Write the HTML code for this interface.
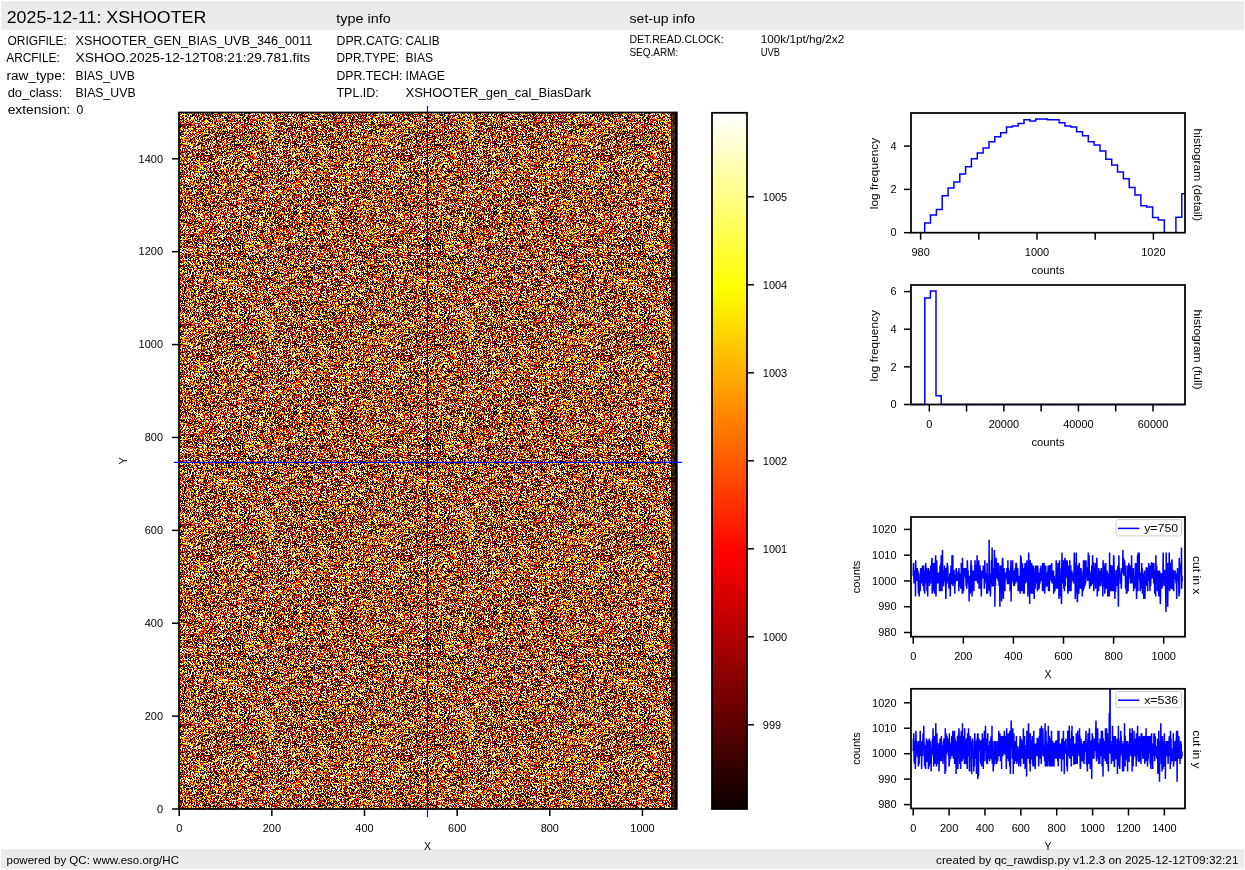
<!DOCTYPE html><html><head><meta charset="utf-8"><title>qc_rawdisp</title><style>html,body{margin:0;padding:0;background:#fff;width:1245px;height:870px;overflow:hidden;position:relative;font-family:"Liberation Sans",sans-serif}</style></head><body><svg width="1245" height="870" viewBox="0 0 1245 870" style="position:absolute;left:0;top:0;will-change:transform" font-family='&quot;Liberation Sans&quot;, sans-serif' fill="#000"><defs><pattern id="nz" patternUnits="userSpaceOnUse" width="200" height="200"><rect width="200" height="200" fill="#0b0000"/><g stroke-width="1" fill="none" shape-rendering="crispEdges"><path stroke="#590000" d="M1 0.5h1m3 0h1m11 0h1m6 0h1m14 0h1m2 0h1m1 0h1m1 0h1m3 0h1m3 0h1m5 0h4m24 0h1m7 0h1m10 0h3m10 0h1m12 0h1m7 0h1m16 0h1m16 0h1m12 0h1M37 1.5h1m10 0h1m5 0h1m21 0h1m14 0h1m4 0h1m20 0h1m5 0h1m7 0h1m2 0h2m44 0h1m4 0h1m3 0h1M13 2.5h1m4 0h1m10 0h1m1 0h1m34 0h1m1 0h1m10 0h1m15 0h1m1 0h2m6 0h1m21 0h1m6 0h1m6 0h1m6 0h1m3 0h1m7 0h1m5 0h1m2 0h1m16 0h1m3 0h1m2 0h1M4 3.5h1m1 0h1m5 0h1m15 0h1m7 0h1m6 0h1m12 0h1m4 0h1m7 0h1m4 0h1m5 0h1m4 0h1m17 0h1m22 0h2m5 0h1m2 0h1m44 0h1m1 0h1m8 0h1m6 0h1M6 4.5h1m1 0h2m6 0h1m14 0h1m4 0h1m27 0h1m17 0h1m1 0h1m96 0h1m1 0h1m10 0h1M4 5.5h1m4 0h1m6 0h1m16 0h1m2 0h1m7 0h1m5 0h1m4 0h2m18 0h1m9 0h1m1 0h1m6 0h1m3 0h1m6 0h1m3 0h1m1 0h1m12 0h1m11 0h1m20 0h2m2 0h1m12 0h1M25 6.5h1m7 0h1m18 0h2m18 0h2m34 0h1m5 0h1m5 0h1m4 0h1m8 0h1m10 0h1m7 0h1m20 0h1m1 0h1M9 7.5h1m11 0h1m40 0h1m8 0h1m12 0h1m2 0h1m17 0h1m7 0h3m2 0h1m7 0h1m15 0h1m4 0h1m18 0h1m6 0h1m5 0h1m1 0h1M1 8.5h1m2 0h1m5 0h1m13 0h1m3 0h1m2 0h1m20 0h1m7 0h1m3 0h2m2 0h1m32 0h1m16 0h2m42 0h1m11 0h1m12 0h1M0 9.5h1m26 0h2m20 0h1m4 0h1m3 0h1m2 0h1m1 0h1m5 0h1m9 0h1m5 0h1m2 0h1m8 0h2m10 0h1m5 0h1m28 0h1m2 0h1m2 0h1m37 0h1M6 10.5h1m4 0h2m4 0h1m1 0h1m4 0h1m17 0h1m3 0h1m25 0h1m9 0h1m7 0h1m5 0h1m26 0h1m2 0h1m32 0h2M2 11.5h1m19 0h1m7 0h1m2 0h1m18 0h1m36 0h1m29 0h1m4 0h1m33 0h1m12 0h1m20 0h1M1 12.5h1m8 0h1m14 0h1m3 0h1m6 0h1m7 0h1m16 0h1m3 0h1m4 0h1m8 0h1m11 0h1m3 0h1m1 0h1m8 0h3m6 0h1m5 0h1m20 0h1m4 0h1m16 0h1m23 0h1M0 13.5h1m20 0h1m1 0h1m6 0h1m2 0h1m4 0h1m26 0h1m9 0h1m21 0h1m3 0h2m6 0h1m3 0h1m24 0h1m6 0h1m8 0h1m15 0h1m1 0h1m10 0h1m1 0h1m6 0h1M13 14.5h1m12 0h1m6 0h1m17 0h1m10 0h1m19 0h1m23 0h1m6 0h1m3 0h1m9 0h1m11 0h1m1 0h1m3 0h1m9 0h1m4 0h1m1 0h1m4 0h1m13 0h1m9 0h1m1 0h1m2 0h1M7 15.5h1m7 0h1m8 0h1m16 0h1m20 0h1m2 0h1m8 0h1m13 0h2m30 0h1m11 0h1m3 0h1m11 0h2m10 0h1m5 0h1m16 0h1m5 0h2m1 0h1m1 0h1M10 16.5h1m9 0h1m10 0h1m3 0h1m5 0h1m11 0h1m1 0h1m17 0h1m1 0h1m22 0h1m2 0h1m4 0h1m16 0h1m2 0h1m13 0h1m8 0h1m4 0h1m18 0h1m6 0h1m4 0h1M12 17.5h1m12 0h1m57 0h1m23 0h1m18 0h1m14 0h1m4 0h1m1 0h1m11 0h1m24 0h1m13 0h1M0 18.5h1m36 0h1m5 0h1m7 0h1m14 0h1m21 0h1m4 0h1m9 0h1m12 0h1m26 0h1m23 0h1m24 0h1m1 0h1M4 19.5h1m30 0h1m9 0h2m16 0h1m13 0h1m6 0h1m20 0h1m1 0h1m14 0h1m28 0h1m31 0h1M38 20.5h1m10 0h1m1 0h1m6 0h1m9 0h1m9 0h1m1 0h1m6 0h2m6 0h1m19 0h1m2 0h2m7 0h1m1 0h1m7 0h1m1 0h1m9 0h1m3 0h2m11 0h1m1 0h1m1 0h2M2 21.5h1m19 0h1m15 0h1m33 0h1m3 0h1m6 0h1m34 0h1m2 0h1m25 0h1m11 0h1m11 0h1m4 0h1M20 22.5h1m6 0h1m13 0h1m4 0h1m19 0h1m10 0h1m9 0h1m1 0h1m2 0h1m1 0h1m26 0h1m3 0h1m4 0h1m3 0h2m2 0h1m30 0h1M18 23.5h1m32 0h1m12 0h1m16 0h1m6 0h2m4 0h1m21 0h1m14 0h1m4 0h2m3 0h1m9 0h1m42 0h1M5 24.5h1m8 0h1m4 0h2m11 0h1m21 0h1m9 0h1m7 0h1m5 0h1m10 0h1m1 0h1m9 0h1m1 0h1m6 0h3m6 0h1m34 0h1m14 0h1m10 0h1m6 0h1m5 0h1M30 25.5h1m4 0h1m5 0h1m30 0h1m6 0h1m6 0h1m10 0h1m17 0h1m1 0h2m17 0h1m7 0h1m41 0h1m2 0h1M15 26.5h1m4 0h1m1 0h1m1 0h1m1 0h2m39 0h2m7 0h1m2 0h1m1 0h1m8 0h1m8 0h1m20 0h1m10 0h1m15 0h1m2 0h1m13 0h1m7 0h1m8 0h1m12 0h1M1 27.5h1m16 0h1m15 0h1m4 0h2m7 0h3m17 0h1m5 0h1m5 0h1m11 0h1m1 0h1m5 0h1m25 0h2m6 0h1m13 0h1m26 0h1m6 0h1m3 0h1M14 28.5h1m18 0h1m4 0h1m23 0h1m19 0h1m8 0h1m3 0h1m3 0h1m18 0h1m14 0h1m9 0h1m12 0h1m3 0h1m2 0h1m17 0h1m12 0h1m3 0h1M10 29.5h2m8 0h1m3 0h1m3 0h1m4 0h1m5 0h1m22 0h1m16 0h1m7 0h1m1 0h1m15 0h1m9 0h1m3 0h1m19 0h1m39 0h1M6 30.5h1m5 0h1m10 0h1m2 0h2m10 0h1m6 0h1m57 0h1m13 0h1m6 0h1m17 0h1m4 0h2m1 0h1m2 0h1m1 0h1m10 0h1m16 0h2M18 31.5h1m18 0h1m3 0h1m14 0h1m18 0h1m4 0h1m9 0h1m1 0h1m59 0h1m10 0h1m7 0h1m1 0h1m5 0h1m2 0h1M3 32.5h1m19 0h1m49 0h1m42 0h1m4 0h1m4 0h1m31 0h1m3 0h1m1 0h1m13 0h1m20 0h1M13 33.5h1m1 0h1m12 0h1m5 0h1m41 0h1m16 0h1m1 0h1m23 0h1m4 0h1m1 0h1m7 0h1m16 0h1m23 0h1m13 0h1M4 34.5h1m15 0h1m14 0h1m21 0h1m13 0h1m21 0h1m12 0h1m2 0h1m4 0h1m1 0h1m6 0h2m5 0h1m15 0h1m24 0h1m1 0h1m16 0h1M1 35.5h1m11 0h1m5 0h1m22 0h1m15 0h1m21 0h1m2 0h2m42 0h2m18 0h2m3 0h1m10 0h1m7 0h1m5 0h1m5 0h2m5 0h1m1 0h1M14 36.5h1m2 0h1m7 0h2m8 0h1m3 0h1m5 0h1m22 0h1m3 0h1m1 0h1m13 0h1m10 0h1m1 0h1m35 0h1m9 0h1m1 0h1m1 0h1m15 0h2m4 0h1m1 0h1m3 0h1m15 0h2M26 37.5h1m4 0h1m5 0h1m11 0h1m16 0h1m2 0h1m17 0h1m1 0h1m5 0h1m14 0h1m1 0h1m44 0h1m4 0h1m24 0h1m9 0h1M7 38.5h1m28 0h1m1 0h1m30 0h1m13 0h1m16 0h2m15 0h1m26 0h1m1 0h1m9 0h1m6 0h1m28 0h1M2 39.5h1m11 0h1m15 0h1m15 0h1m1 0h1m34 0h1m4 0h1m36 0h1m5 0h1m1 0h1m28 0h2m7 0h1m17 0h1m2 0h1M23 40.5h1m13 0h1m6 0h1m8 0h1m59 0h2m13 0h1m4 0h1m5 0h1m15 0h1m18 0h1m2 0h1m3 0h1m2 0h1m3 0h1M2 41.5h1m1 0h1m2 0h1m9 0h1m9 0h1m7 0h1m1 0h1m21 0h1m8 0h1m1 0h1m7 0h1m32 0h1m30 0h1m11 0h1m24 0h1M2 42.5h1m2 0h1m13 0h1m43 0h1m18 0h1m2 0h1m9 0h1m50 0h1m6 0h1m6 0h2m23 0h2m5 0h1M7 43.5h1m1 0h1m19 0h1m13 0h1m8 0h2m6 0h1m13 0h1m14 0h1m33 0h1m5 0h1m21 0h1m1 0h1m6 0h1m8 0h1m9 0h1m15 0h1M13 44.5h1m1 0h1m5 0h1m8 0h1m13 0h1m35 0h1m6 0h1m8 0h1m5 0h1m24 0h1m10 0h1m7 0h1m15 0h1m9 0h1m14 0h1m4 0h2M16 45.5h1m1 0h1m1 0h1m14 0h2m3 0h1m1 0h1m12 0h1m8 0h2m4 0h1m7 0h1m6 0h1m23 0h1m31 0h1m8 0h1m4 0h1m3 0h1m1 0h1m10 0h1m6 0h1M14 46.5h1m9 0h1m4 0h1m3 0h1m34 0h1m2 0h1m16 0h1m7 0h1m1 0h1m8 0h1m4 0h1m5 0h2m1 0h1m22 0h1m2 0h2m25 0h2m7 0h1m8 0h1m4 0h1M8 47.5h1m1 0h1m9 0h1m8 0h1m10 0h1m9 0h1m5 0h1m9 0h1m22 0h1m11 0h1m55 0h1m5 0h1m11 0h1M3 48.5h1m38 0h1m4 0h1m60 0h2m2 0h1m26 0h2m12 0h1m6 0h1m9 0h1m20 0h1M42 49.5h1m8 0h2m5 0h1m20 0h1m13 0h1m13 0h1m1 0h1m6 0h1m26 0h1m3 0h1m6 0h1m8 0h1m3 0h1m25 0h1M8 50.5h1m4 0h1m29 0h1m2 0h2m20 0h2m19 0h1m24 0h1m4 0h1m8 0h1m2 0h1m7 0h1m12 0h1m22 0h1m21 0h2M3 51.5h1m11 0h1m8 0h1m12 0h1m10 0h1m12 0h1m9 0h1m4 0h1m32 0h1m51 0h1m14 0h1m2 0h1m7 0h1m4 0h1m4 0h1M3 52.5h1m5 0h2m12 0h1m39 0h1m6 0h1m2 0h1m7 0h1m10 0h1m8 0h1m22 0h1m10 0h1m8 0h1m9 0h1m2 0h2m15 0h1M5 53.5h1m25 0h4m1 0h1m3 0h1m11 0h1m10 0h1m19 0h1m45 0h1m35 0h2m9 0h1m15 0h1m5 0h1M10 54.5h1m30 0h1m13 0h1m3 0h1m12 0h1m7 0h1m10 0h1m6 0h1m5 0h1m7 0h1m1 0h1m1 0h1m2 0h1m2 0h1m4 0h1m3 0h1m11 0h1m25 0h1m16 0h1m10 0h1M2 55.5h1m2 0h1m4 0h1m1 0h1m3 0h1m12 0h1m4 0h1m18 0h1m9 0h1m17 0h2m16 0h1m30 0h1m16 0h1m3 0h1m3 0h1m5 0h1m1 0h2m11 0h1m5 0h1m3 0h1m1 0h2M1 56.5h1m15 0h2m1 0h1m45 0h1m8 0h1m30 0h1m5 0h1m8 0h1m2 0h1m29 0h1m29 0h1m14 0h1M5 57.5h1m2 0h1m20 0h1m1 0h2m16 0h1m9 0h1m21 0h2m24 0h1m3 0h1m9 0h1m14 0h1m9 0h1m2 0h1m15 0h1m4 0h1m6 0h1m12 0h1m7 0h1M6 58.5h2m47 0h1m6 0h1m5 0h1m4 0h1m4 0h1m8 0h1m9 0h1m19 0h1m9 0h1m5 0h1m6 0h1m28 0h1m7 0h1M8 59.5h1m2 0h1m5 0h1m1 0h1m16 0h1m12 0h1m21 0h1m5 0h2m2 0h1m35 0h1m4 0h1m20 0h1m18 0h1m27 0h1m5 0h1m1 0h1M6 60.5h1m45 0h1m5 0h1m21 0h1m9 0h1m11 0h1m2 0h2m5 0h1m6 0h2m10 0h1m6 0h1m10 0h1m4 0h1m5 0h1m16 0h1m11 0h1m4 0h2m3 0h1M23 61.5h1m29 0h1m4 0h2m2 0h1m31 0h2m19 0h1m5 0h1m1 0h1m28 0h1m11 0h1m9 0h1m22 0h1M4 62.5h2m1 0h1m12 0h1m31 0h1m2 0h1m12 0h1m3 0h1m7 0h1m24 0h1m43 0h1m3 0h1m11 0h1M11 63.5h1m10 0h1m9 0h2m2 0h1m16 0h1m1 0h2m7 0h2m12 0h1m10 0h1m4 0h1m2 0h1m9 0h1m12 0h1m40 0h1m23 0h1m2 0h1m10 0h1M55 64.5h1m23 0h1m37 0h1m1 0h1m51 0h1m18 0h1M21 65.5h1m20 0h1m21 0h1m7 0h1m12 0h1m7 0h1m2 0h1m31 0h1m2 0h1m4 0h1m19 0h1m1 0h1m11 0h1m16 0h1m1 0h1m7 0h1M17 66.5h1m55 0h1m5 0h1m6 0h1m14 0h1m1 0h2m9 0h1m5 0h1m16 0h1m16 0h1m36 0h1M24 67.5h1m4 0h1m31 0h1m13 0h1m19 0h1m6 0h1m1 0h1m6 0h2m7 0h1m5 0h1m2 0h1m21 0h1m19 0h1m5 0h1m2 0h1m3 0h1m4 0h1m8 0h1M8 68.5h1m24 0h1m4 0h1m14 0h1m14 0h1m30 0h1m3 0h1m8 0h1m4 0h1m9 0h2m44 0h1m23 0h1M19 69.5h2m22 0h1m1 0h1m7 0h1m3 0h1m11 0h1m15 0h1m2 0h1m14 0h1m16 0h1m44 0h1m6 0h1m5 0h1m10 0h1m1 0h1M9 70.5h1m4 0h1m4 0h1m5 0h1m13 0h1m11 0h1m1 0h1m8 0h1m19 0h1m17 0h1m9 0h1m23 0h1m32 0h1m5 0h1m25 0h1M5 71.5h1m2 0h1m1 0h1m39 0h1m1 0h1m25 0h1m22 0h1m1 0h2m3 0h1m5 0h1m25 0h2m2 0h1m22 0h1m4 0h1M23 72.5h1m2 0h1m3 0h2m5 0h1m10 0h1m6 0h1m4 0h2m9 0h1m7 0h1m9 0h1m4 0h1m2 0h1m2 0h1m32 0h1m7 0h2m1 0h1m9 0h1m14 0h1m1 0h1m2 0h2m11 0h1m7 0h1M13 73.5h1m14 0h1m16 0h1m5 0h1m2 0h1m7 0h1m4 0h1m13 0h1m3 0h1m4 0h1m11 0h1m15 0h1m7 0h1m21 0h1m16 0h2m1 0h1m3 0h1m12 0h1m10 0h1M5 74.5h2m20 0h1m2 0h1m3 0h1m16 0h1m3 0h1m18 0h1m9 0h2m21 0h2m6 0h2m15 0h1m34 0h1m16 0h1M19 75.5h1m3 0h1m24 0h1m28 0h1m6 0h1m16 0h1m1 0h1m16 0h1m59 0h1m6 0h1M12 76.5h1m17 0h1m30 0h2m55 0h1m13 0h1m17 0h1m14 0h1m7 0h1m14 0h1m2 0h1M4 77.5h1m23 0h1m8 0h1m4 0h1m11 0h1m2 0h1m28 0h1m15 0h1m5 0h1m2 0h1m2 0h1m27 0h1m13 0h1m21 0h1m1 0h1m3 0h1m8 0h1m3 0h1M4 78.5h1m2 0h1m1 0h1m24 0h1m4 0h1m28 0h1m13 0h1m16 0h1m11 0h1m6 0h1m25 0h1m14 0h1m4 0h1m4 0h2m27 0h1M7 79.5h1m24 0h1m8 0h1m5 0h1m25 0h1m16 0h1m18 0h1m14 0h1m29 0h1m15 0h1m12 0h1m1 0h1M5 80.5h1m2 0h1m2 0h3m37 0h1m12 0h1m1 0h1m6 0h1m16 0h1m4 0h1m4 0h1m6 0h1m14 0h1m15 0h1m12 0h1m13 0h1m23 0h1m2 0h2M28 81.5h1m2 0h1m4 0h1m9 0h1m11 0h1m25 0h1m25 0h1m8 0h1m8 0h1m2 0h1m6 0h1m48 0h1m2 0h1M23 82.5h1m14 0h1m10 0h1m1 0h1m30 0h1m11 0h1m21 0h1m4 0h1m3 0h1m5 0h1m8 0h1m9 0h1m14 0h1m21 0h1M1 83.5h1m10 0h1m6 0h1m17 0h1m5 0h1m3 0h1m19 0h2m7 0h1m7 0h1m6 0h1m1 0h2m21 0h1m1 0h1m3 0h1m2 0h1m11 0h1m17 0h1m4 0h1m2 0h1m15 0h1M0 84.5h2m13 0h1m7 0h1m25 0h1m8 0h1m1 0h1m1 0h1m2 0h1m52 0h1m53 0h1M5 85.5h2m2 0h1m3 0h1m3 0h1m48 0h1m22 0h1m6 0h1m5 0h1m10 0h1m2 0h1m5 0h1m29 0h1m5 0h1m1 0h1m6 0h1m21 0h1M7 86.5h1m16 0h1m5 0h1m6 0h1m1 0h1m13 0h2m5 0h2m21 0h1m11 0h1m11 0h3m4 0h1m1 0h1m6 0h1m50 0h1m1 0h1m6 0h1M14 87.5h1m19 0h1m2 0h1m14 0h1m1 0h1m4 0h2m8 0h1m3 0h1m11 0h1m14 0h1m1 0h1m1 0h1m3 0h1m38 0h1m30 0h1m7 0h1m11 0h1M18 88.5h1m8 0h1m1 0h1m22 0h1m1 0h1m26 0h1m11 0h1m17 0h1m6 0h1m12 0h1m10 0h1m1 0h1m11 0h1M2 89.5h1m37 0h1m25 0h1m18 0h2m5 0h1m1 0h1m36 0h1m23 0h1m2 0h1m17 0h1m1 0h1m2 0h1m2 0h2M19 90.5h1m9 0h1m24 0h1m5 0h1m10 0h1m26 0h1m4 0h1m2 0h1m3 0h1m21 0h1m2 0h1m20 0h1M10 91.5h1m5 0h1m7 0h1m7 0h1m1 0h1m6 0h1m11 0h1m26 0h1m13 0h1m6 0h1m2 0h1m17 0h1m10 0h1m4 0h1m9 0h1m20 0h1M1 92.5h1m8 0h1m22 0h1m3 0h1m18 0h1m19 0h1m4 0h1m12 0h1m5 0h1m7 0h1m2 0h1m3 0h1m8 0h1m15 0h1m24 0h2m2 0h1m22 0h1M25 93.5h1m7 0h1m17 0h2m3 0h1m4 0h1m8 0h1m28 0h1m8 0h1m12 0h1m11 0h1m2 0h1m8 0h1m14 0h3m3 0h1m10 0h2m4 0h4m6 0h1M24 94.5h2m14 0h1m3 0h1m17 0h1m20 0h1m5 0h1m13 0h1m13 0h1m2 0h1m7 0h1m8 0h1m40 0h1m15 0h1M1 95.5h1m19 0h1m15 0h1m7 0h1m20 0h1m8 0h1m8 0h1m15 0h1m2 0h3m1 0h1m2 0h1m15 0h1m27 0h1m9 0h1m26 0h1M15 96.5h1m15 0h1m24 0h1m12 0h1m42 0h1m17 0h2m14 0h1m23 0h1m6 0h1m6 0h1m6 0h1M7 97.5h1m2 0h1m2 0h1m4 0h1m57 0h1m15 0h1m11 0h1m11 0h1m1 0h1m7 0h1m4 0h1m13 0h1m16 0h1m32 0h1M4 98.5h1m5 0h1m7 0h1m2 0h1m2 0h1m5 0h1m4 0h1m13 0h1m13 0h1m14 0h1m4 0h1m1 0h1m24 0h1m13 0h1m10 0h1m27 0h1m3 0h2m6 0h1m10 0h1m6 0h1M29 99.5h1m3 0h1m12 0h1m5 0h1m28 0h1m2 0h1m15 0h1m24 0h1m30 0h1m5 0h1m4 0h1m9 0h1m5 0h1m11 0h1M1 100.5h1m12 0h1m4 0h1m33 0h1m4 0h1m5 0h2m4 0h1m6 0h1m8 0h1m5 0h1m4 0h1m8 0h1m41 0h1m7 0h1m12 0h1m6 0h1m3 0h1m1 0h1m1 0h3M11 101.5h1m1 0h1m17 0h1m6 0h1m3 0h1m9 0h2m7 0h1m6 0h1m1 0h1m12 0h1m38 0h1m1 0h1m1 0h1m11 0h1m11 0h1m16 0h1m3 0h1m6 0h1m2 0h1m2 0h2m8 0h1M48 102.5h1m39 0h1m16 0h1m3 0h1m7 0h1m3 0h1m6 0h1m29 0h1m2 0h1m10 0h1m16 0h1M71 103.5h1m2 0h1m14 0h1m4 0h1m39 0h1m24 0h1M1 104.5h2m1 0h1m3 0h1m6 0h1m21 0h2m4 0h1m12 0h1m2 0h1m2 0h1m19 0h1m17 0h2m1 0h1m4 0h1m5 0h2m5 0h1m3 0h1m14 0h3m12 0h4m18 0h1m6 0h1m10 0h1m2 0h1M18 105.5h1m6 0h1m16 0h1m1 0h1m15 0h1m20 0h1m2 0h1m2 0h1m1 0h1m5 0h1m11 0h3m13 0h1m7 0h1m27 0h2m11 0h1m8 0h1m7 0h1m4 0h1M11 106.5h1m16 0h1m15 0h1m6 0h1m10 0h1m24 0h1m44 0h1m11 0h1m2 0h1m10 0h1m2 0h1m1 0h1m3 0h1m6 0h1M4 107.5h1m23 0h2m12 0h1m37 0h1m15 0h1m4 0h1m5 0h1m9 0h1m37 0h1m3 0h1m1 0h1M6 108.5h1m18 0h1m1 0h1m21 0h1m10 0h1m6 0h1m11 0h1m6 0h1m4 0h1m4 0h1m8 0h1m4 0h1m15 0h1m13 0h1m8 0h1m33 0h2m12 0h1M6 109.5h1m6 0h1m2 0h1m4 0h1m4 0h1m1 0h1m17 0h1m14 0h1m8 0h1m10 0h1m10 0h1m2 0h1m2 0h1m11 0h1m18 0h1m2 0h1m14 0h1m5 0h1m13 0h1m2 0h1m4 0h2m7 0h1M13 110.5h3m2 0h1m17 0h1m17 0h1m31 0h1m15 0h1m8 0h1m4 0h2m5 0h1m10 0h2m2 0h1m6 0h1m28 0h1m5 0h1m3 0h2m1 0h1m11 0h1M24 111.5h1m7 0h1m11 0h1m7 0h1m62 0h1m9 0h1m19 0h1m19 0h2m2 0h2M18 112.5h1m5 0h1m35 0h1m27 0h1m10 0h1m17 0h1m4 0h1m3 0h1m62 0h1m1 0h1m4 0h1M19 113.5h1m30 0h1m24 0h2m9 0h1m5 0h1m3 0h1m8 0h1m7 0h1m5 0h1m46 0h1m4 0h1m2 0h1m14 0h1M3 114.5h1m1 0h1m8 0h1m15 0h1m4 0h1m3 0h1m1 0h1m2 0h1m4 0h1m5 0h1m1 0h1m27 0h1m5 0h1m19 0h1m4 0h1m10 0h1m1 0h1m4 0h1m17 0h1m34 0h2M3 115.5h1m5 0h1m5 0h1m3 0h1m7 0h2m4 0h1m7 0h1m6 0h1m3 0h1m8 0h1m3 0h1m28 0h1m35 0h1m3 0h1m1 0h1m3 0h1m3 0h1m13 0h1m2 0h2m3 0h1m16 0h1m1 0h1m7 0h1m1 0h1M44 116.5h1m19 0h1m21 0h1m11 0h1m7 0h1m19 0h1m26 0h1M30 117.5h1m2 0h1m29 0h1m3 0h1m25 0h1m3 0h1m4 0h1m40 0h1m50 0h1M6 118.5h1m6 0h1m10 0h1m1 0h1m7 0h1m22 0h1m16 0h1m7 0h2m16 0h1m14 0h1m11 0h1m5 0h1m2 0h1m1 0h1m24 0h1m1 0h1m4 0h2m3 0h1m1 0h1m11 0h1M26 119.5h1m15 0h1m12 0h1m5 0h1m22 0h1m17 0h1m8 0h1m1 0h2m16 0h1m2 0h1m15 0h1m1 0h1m3 0h1m7 0h1m3 0h1m14 0h1m15 0h1M22 120.5h1m4 0h1m1 0h1m10 0h1m2 0h1m10 0h1m13 0h1m7 0h1m29 0h1m39 0h1m9 0h1m1 0h1m36 0h1M2 121.5h1m32 0h1m12 0h1m3 0h1m4 0h1m15 0h1m1 0h1m1 0h1m20 0h1m2 0h1m47 0h1m7 0h1m3 0h1m18 0h1m11 0h1M1 122.5h1m21 0h1m14 0h1m3 0h1m1 0h1m6 0h1m3 0h1m26 0h1m8 0h1m1 0h1m9 0h1m25 0h1m10 0h2m1 0h1m17 0h1m2 0h2m10 0h1m2 0h1m1 0h1m9 0h1M40 123.5h1m3 0h1m9 0h1m1 0h1m12 0h1m3 0h2m22 0h1m4 0h1m2 0h2m20 0h1m6 0h1m28 0h1m13 0h1m2 0h1M16 124.5h1m2 0h2m20 0h1m18 0h1m13 0h1m6 0h1m2 0h1m1 0h1m4 0h1m28 0h1m1 0h2m9 0h1m2 0h1m23 0h1m10 0h1m19 0h1m6 0h1M2 125.5h1m17 0h1m1 0h1m28 0h1m4 0h1m23 0h1m11 0h1m21 0h2m54 0h1m7 0h1m9 0h1m5 0h1M20 126.5h1m3 0h1m14 0h1m2 0h1m8 0h1m18 0h1m24 0h1m5 0h1m9 0h1m27 0h1m13 0h1m8 0h1m5 0h1m7 0h1m2 0h1M3 127.5h1m1 0h1m28 0h1m8 0h1m1 0h1m33 0h2m14 0h2m8 0h1m2 0h1m3 0h2m11 0h1m19 0h1m28 0h2m12 0h1m9 0h1M8 128.5h1m6 0h1m8 0h1m13 0h1m7 0h1m1 0h1m9 0h1m19 0h1m26 0h1m21 0h1m30 0h1m26 0h2m8 0h1M0 129.5h1m3 0h1m14 0h1m51 0h1m4 0h1m13 0h1m1 0h1m40 0h1m24 0h1m2 0h1m2 0h1M30 130.5h1m3 0h1m12 0h1m25 0h1m3 0h1m48 0h1m12 0h1m1 0h1m23 0h2m8 0h1m17 0h1m1 0h1M1 131.5h2m9 0h2m6 0h1m6 0h1m7 0h1m21 0h1m24 0h1m3 0h1m31 0h1m1 0h1m21 0h1m10 0h1m39 0h1M8 132.5h1m29 0h1m3 0h1m2 0h1m21 0h1m1 0h1m8 0h1m4 0h1m12 0h1m10 0h1m6 0h1m12 0h1m11 0h1m6 0h1m5 0h1m5 0h1m5 0h1m24 0h1M17 133.5h3m11 0h1m7 0h1m2 0h1m5 0h1m4 0h1m16 0h1m13 0h1m14 0h1m11 0h1m6 0h1m6 0h1m6 0h1m21 0h1m8 0h1m6 0h1m22 0h1M5 134.5h1m18 0h1m3 0h1m6 0h1m1 0h1m13 0h1m10 0h1m8 0h1m20 0h1m14 0h1m3 0h1m27 0h1m7 0h1m10 0h1m17 0h1m8 0h1m7 0h1M0 135.5h1m4 0h1m10 0h1m1 0h1m7 0h1m17 0h1m16 0h1m11 0h1m5 0h1m6 0h1m3 0h1m11 0h1m5 0h1m3 0h1m13 0h1m10 0h1m6 0h1m8 0h1m1 0h1m15 0h1m4 0h2M15 136.5h1m6 0h1m15 0h1m38 0h1m22 0h1m24 0h1m9 0h1m16 0h1m22 0h1m6 0h1m3 0h1m9 0h1M9 137.5h1m3 0h1m7 0h1m7 0h1m4 0h1m63 0h1m6 0h1m13 0h1m19 0h1m19 0h1m6 0h1m31 0h1M16 138.5h1m4 0h2m2 0h2m1 0h1m8 0h1m13 0h1m9 0h1m13 0h2m3 0h1m1 0h1m17 0h1m3 0h1m33 0h1m22 0h1m23 0h1m1 0h1m6 0h1m1 0h1M6 139.5h1m2 0h1m5 0h1m15 0h1m2 0h1m9 0h1m7 0h1m3 0h1m22 0h1m6 0h1m5 0h1m19 0h1m2 0h1m10 0h1m2 0h1m10 0h1m14 0h2m18 0h1m4 0h1M2 140.5h1m75 0h1m17 0h1m7 0h3m1 0h1m8 0h1m4 0h1m7 0h1m3 0h1m2 0h1m24 0h1M2 141.5h1m15 0h1m15 0h1m9 0h1m13 0h1m3 0h1m5 0h1m9 0h1m9 0h1m10 0h1m5 0h1m25 0h1m13 0h1m5 0h1m20 0h1m7 0h1m9 0h1m5 0h1M5 142.5h1m6 0h1m10 0h1m18 0h1m14 0h1m17 0h1m7 0h1m10 0h1m13 0h1m7 0h1m6 0h1m10 0h1m3 0h1m14 0h3m3 0h2m4 0h1M1 143.5h1m1 0h1m26 0h1m3 0h1m6 0h1m9 0h1m11 0h1m5 0h2m37 0h1m32 0h1m1 0h1m9 0h1m4 0h1m4 0h2m9 0h1m24 0h1M16 144.5h1m1 0h1m16 0h1m7 0h1m3 0h1m13 0h1m5 0h1m11 0h1m5 0h1m10 0h1m6 0h2m11 0h1m1 0h1m8 0h2m13 0h1m8 0h1m14 0h1m14 0h2m11 0h1m4 0h1M19 145.5h1m26 0h1m21 0h1m5 0h2m7 0h1m16 0h1m1 0h1m15 0h1m14 0h1m32 0h1m10 0h2m17 0h2M13 146.5h1m1 0h1m11 0h1m25 0h1m3 0h1m32 0h1m3 0h1m12 0h1m2 0h1m15 0h1m45 0h1M13 147.5h1m13 0h1m7 0h1m1 0h1m11 0h1m3 0h2m1 0h1m5 0h2m19 0h1m24 0h1m27 0h1m5 0h1m26 0h1m19 0h1M35 148.5h1m8 0h1m3 0h1m9 0h1m10 0h1m7 0h1m20 0h1m9 0h1m31 0h1m17 0h1m19 0h1m9 0h1M1 149.5h1m6 0h1m5 0h1m8 0h1m1 0h1m3 0h1m6 0h1m11 0h2m5 0h1m13 0h1m7 0h1m4 0h1m22 0h1m6 0h1m6 0h1m2 0h1m3 0h1m15 0h1m3 0h1m17 0h1m3 0h1m1 0h1M3 150.5h1m17 0h1m24 0h1m33 0h1m3 0h1m1 0h1m13 0h1m6 0h1m1 0h1m12 0h1m2 0h1m12 0h1m22 0h1m5 0h1m4 0h1m9 0h1m8 0h1M3 151.5h2m1 0h1m26 0h1m6 0h1m21 0h1m6 0h1m43 0h1m1 0h1m7 0h1m1 0h1m4 0h1m13 0h1m40 0h1M6 152.5h1m7 0h1m1 0h1m10 0h3m34 0h1m3 0h1m4 0h1m12 0h2m4 0h1m2 0h1m11 0h1m14 0h1m23 0h1m2 0h1m45 0h1M3 153.5h1m14 0h1m2 0h1m2 0h1m12 0h1m16 0h1m2 0h1m15 0h1m6 0h1m25 0h1m9 0h1m1 0h1m14 0h1m21 0h1m19 0h1m9 0h1m6 0h1m3 0h2M1 154.5h1m1 0h1m10 0h1m11 0h1m7 0h2m1 0h1m29 0h1m1 0h1m6 0h1m13 0h1m24 0h1m1 0h1m1 0h1m2 0h1m6 0h1m5 0h1m31 0h1m1 0h1m18 0h1m8 0h2M19 155.5h1m18 0h2m8 0h1m16 0h1m1 0h1m15 0h1m3 0h2m20 0h1m10 0h1m5 0h1m3 0h1m16 0h2m34 0h1m3 0h1m8 0h1M12 156.5h1m4 0h1m4 0h1m10 0h2m1 0h1m19 0h1m8 0h1m11 0h1m4 0h1m24 0h1m2 0h1m12 0h2m2 0h1m9 0h1m13 0h1m9 0h1m1 0h1m19 0h1m13 0h1m1 0h1M42 157.5h1m19 0h1m6 0h1m15 0h2m16 0h1m3 0h1m17 0h1m4 0h3m38 0h1m14 0h1M7 158.5h1m17 0h1m6 0h1m22 0h1m4 0h1m3 0h1m8 0h1m12 0h1m44 0h1m1 0h1m7 0h1m4 0h1m8 0h1m19 0h1m21 0h1M7 159.5h1m5 0h2m6 0h1m9 0h1m2 0h1m8 0h1m13 0h1m2 0h1m6 0h2m1 0h2m7 0h1m38 0h1m33 0h1m6 0h1m5 0h1m9 0h1m22 0h1M0 160.5h1m1 0h1m1 0h1m9 0h1m12 0h3m3 0h1m40 0h1m7 0h1m7 0h1m10 0h1m15 0h1m9 0h1m9 0h1m7 0h1m31 0h1m4 0h1m3 0h1M11 161.5h1m21 0h1m11 0h1m4 0h1m12 0h1m2 0h1m15 0h2m11 0h1m4 0h1m30 0h1m19 0h1m11 0h1m23 0h1M4 162.5h1m8 0h1m2 0h1m20 0h1m37 0h2m4 0h1m5 0h1m3 0h1m3 0h1m26 0h1m3 0h1m8 0h1m8 0h1M27 163.5h1m10 0h1m10 0h1m10 0h1m28 0h1m6 0h1m10 0h1m2 0h1m18 0h1m11 0h2m3 0h1m10 0h1m13 0h2m6 0h1m11 0h1M18 164.5h1m1 0h1m3 0h1m12 0h1m5 0h2m2 0h1m1 0h1m3 0h1m1 0h1m2 0h1m5 0h2m16 0h1m4 0h1m29 0h1m4 0h1m8 0h1m18 0h1m15 0h1m17 0h1m8 0h1M4 165.5h2m2 0h1m6 0h1m1 0h1m3 0h1m7 0h2m25 0h1m15 0h1m29 0h2m14 0h1m19 0h1m10 0h1m1 0h1m10 0h1m4 0h1m14 0h1M17 166.5h1m14 0h1m11 0h1m17 0h1m49 0h1m13 0h1m22 0h2m3 0h2m8 0h1m2 0h1m1 0h1m23 0h1M15 167.5h1m11 0h1m7 0h1m15 0h1m9 0h1m9 0h1m5 0h1m1 0h1m20 0h1m15 0h1m20 0h1m6 0h1m16 0h1m3 0h1m8 0h1m16 0h1M6 168.5h1m7 0h1m35 0h1m21 0h1m3 0h1m16 0h1m1 0h1m2 0h1m1 0h1m32 0h1m13 0h1m13 0h1m7 0h1m12 0h1m6 0h1M1 169.5h1m12 0h1m36 0h1m11 0h1m3 0h1m6 0h1m11 0h1m2 0h1m1 0h1m8 0h1m39 0h1m9 0h1m18 0h1m2 0h1m17 0h1M28 170.5h1m6 0h1m4 0h1m1 0h2m15 0h1m2 0h1m15 0h2m6 0h1m1 0h1m17 0h1m15 0h1m43 0h1m8 0h1m5 0h1m10 0h1M5 171.5h1m8 0h1m1 0h1m2 0h1m29 0h1m1 0h1m8 0h1m6 0h1m12 0h1m8 0h1m17 0h1m57 0h1m3 0h1m7 0h1M15 172.5h2m5 0h1m1 0h1m11 0h1m11 0h1m2 0h1m1 0h1m3 0h1m2 0h1m8 0h1m27 0h1m5 0h2m3 0h3m4 0h1m7 0h1m4 0h2m17 0h1m10 0h1m12 0h1m10 0h1m1 0h1m2 0h1M4 173.5h1m14 0h1m13 0h1m11 0h1m8 0h1m46 0h1m2 0h1m18 0h1m15 0h1m7 0h1m32 0h1m3 0h1m1 0h1m11 0h1M26 174.5h1m10 0h1m29 0h1m2 0h1m1 0h2m13 0h1m15 0h1m22 0h1m3 0h1m1 0h1m12 0h1m12 0h1m3 0h1m18 0h1m2 0h1M17 175.5h1m7 0h1m21 0h2m6 0h1m35 0h1m4 0h1m11 0h2m3 0h1m7 0h1m14 0h1m17 0h1m9 0h1m6 0h1m5 0h1M11 176.5h1m8 0h1m12 0h1m29 0h1m20 0h1m16 0h1m12 0h2m1 0h1m7 0h1m13 0h1m24 0h1M0 177.5h1m4 0h1m3 0h1m27 0h1m12 0h1m5 0h2m53 0h1m9 0h1m7 0h2m27 0h1m13 0h1m14 0h1m10 0h1M44 178.5h2m11 0h1m6 0h1m32 0h1m7 0h3m15 0h1m31 0h1m33 0h1m7 0h1M1 179.5h1m1 0h1m3 0h1m14 0h1m56 0h1m15 0h1m2 0h2m3 0h1m7 0h2m15 0h1m3 0h1m2 0h1m11 0h1m9 0h1m27 0h1M7 180.5h1m12 0h1m3 0h2m7 0h1m28 0h1m6 0h2m6 0h2m1 0h1m15 0h1m4 0h1m24 0h2m8 0h1m9 0h1m4 0h1m10 0h1m9 0h1m4 0h1m3 0h1m16 0h1M17 181.5h1m18 0h1m12 0h1m11 0h1m5 0h1m1 0h1m17 0h1m6 0h1m1 0h1m9 0h1m22 0h1m13 0h2m20 0h1m6 0h1m6 0h1m3 0h1m7 0h1m2 0h1M10 182.5h1m6 0h2m16 0h1m35 0h1m8 0h1m14 0h1m61 0h1m6 0h1m6 0h1m1 0h1m3 0h1m8 0h1M16 183.5h1m11 0h1m1 0h1m8 0h1m19 0h1m6 0h1m1 0h1m12 0h1m42 0h2m45 0h1m2 0h1m5 0h1m6 0h1m2 0h1M6 184.5h1m2 0h1m20 0h1m12 0h2m5 0h1m1 0h1m12 0h1m33 0h1m1 0h1m12 0h1m3 0h1m5 0h1m5 0h1m55 0h1M3 185.5h2m1 0h1m10 0h1m3 0h1m20 0h1m8 0h1m7 0h1m41 0h1m3 0h1m8 0h2m4 0h1m7 0h1m5 0h1m5 0h2m2 0h1m5 0h2m8 0h1m29 0h1m6 0h1M1 186.5h1m10 0h1m8 0h1m3 0h1m17 0h1m4 0h1m16 0h1m14 0h1m14 0h1m2 0h1m6 0h1m13 0h1m11 0h1m13 0h2m8 0h1m5 0h1m8 0h1m18 0h1m8 0h1M6 187.5h1m6 0h1m7 0h1m4 0h1m3 0h2m14 0h1m1 0h1m11 0h1m8 0h1m1 0h1m5 0h1m12 0h1m13 0h1m2 0h1m6 0h1m14 0h1m2 0h1m8 0h1m31 0h1m5 0h1m3 0h1m7 0h1m2 0h1m2 0h1M4 188.5h1m3 0h1m12 0h1m38 0h1m1 0h1m14 0h1m6 0h1m39 0h1m6 0h2m36 0h1m13 0h1m2 0h1m1 0h1M23 189.5h1m34 0h1m3 0h2m48 0h1m11 0h1m36 0h2m16 0h1m17 0h1M44 190.5h1m17 0h1m3 0h1m31 0h1m22 0h1m3 0h1m13 0h1m4 0h1m31 0h1M3 191.5h1m7 0h1m28 0h1m8 0h1m2 0h1m37 0h1m11 0h1m32 0h1m1 0h1m2 0h1m10 0h1m7 0h1m1 0h1m2 0h1m5 0h1M0 192.5h1m1 0h1m2 0h1m28 0h1m22 0h1m33 0h1m22 0h1m3 0h1m5 0h1m55 0h1M0 193.5h1m8 0h1m7 0h3m31 0h1m6 0h1m34 0h1m8 0h1m1 0h1m39 0h2m9 0h1m25 0h1m9 0h1m5 0h1M2 194.5h1m18 0h1m9 0h1m15 0h1m18 0h2m10 0h1m14 0h1m18 0h1m4 0h1m4 0h1m5 0h1m13 0h2m19 0h1m23 0h1m8 0h1m1 0h1M18 195.5h1m4 0h1m12 0h1m46 0h1m6 0h1m1 0h2m1 0h1m19 0h1m5 0h1m23 0h1m26 0h1m5 0h1m13 0h1M0 196.5h1m1 0h1m11 0h1m5 0h1m5 0h1m3 0h1m3 0h1m13 0h1m2 0h1m6 0h1m4 0h1m16 0h1m15 0h1m3 0h2m18 0h2m36 0h1m2 0h1m4 0h1M43 197.5h1m4 0h1m4 0h2m3 0h1m4 0h1m2 0h1m13 0h1m11 0h1m1 0h1m5 0h1m9 0h1m17 0h1m21 0h1m6 0h1m25 0h2m6 0h1M28 198.5h1m4 0h2m11 0h1m6 0h1m52 0h1m10 0h1m16 0h1m6 0h1m21 0h1m5 0h1m7 0h1m17 0h2M1 199.5h1m3 0h1m8 0h1m26 0h1m1 0h1m1 0h2m10 0h1m18 0h1m1 0h1m18 0h1m3 0h1m15 0h1m1 0h1m3 0h2m54 0h1m16 0h1"/><path stroke="#b00000" d="M4 0.5h1m17 0h1m22 0h1m1 0h1m38 0h1m8 0h1m3 0h1m5 0h1m15 0h2m2 0h1m9 0h1m8 0h1m10 0h1m29 0h1m3 0h1m7 0h1m1 0h1M10 1.5h1m3 0h2m4 0h1m8 0h1m25 0h1m9 0h1m11 0h1m1 0h1m25 0h2m2 0h2m7 0h2m7 0h1m1 0h1m22 0h1m1 0h1m3 0h1m8 0h1m4 0h2m18 0h1m5 0h1M10 2.5h1m12 0h1m13 0h2m2 0h1m6 0h1m2 0h3m4 0h1m19 0h1m10 0h1m3 0h1m19 0h1m2 0h1m7 0h1m3 0h1m7 0h1m5 0h1m1 0h2m16 0h1m11 0h1m5 0h1m4 0h1M26 3.5h1m4 0h2m8 0h1m4 0h1m29 0h1m14 0h1m26 0h1m12 0h1m5 0h1m17 0h1m11 0h1m10 0h1m6 0h1m2 0h1m9 0h1M3 4.5h1m25 0h1m2 0h1m1 0h1m3 0h1m2 0h1m24 0h1m2 0h2m6 0h1m29 0h1m5 0h1m10 0h1m1 0h1m7 0h1m6 0h1m8 0h1m3 0h1m1 0h1m7 0h1m32 0h1M7 5.5h1m9 0h1m3 0h1m2 0h1m2 0h1m15 0h1m25 0h1m1 0h1m2 0h1m3 0h1m5 0h1m3 0h1m10 0h2m6 0h1m13 0h1m3 0h1m6 0h1m13 0h1m2 0h2m8 0h1m3 0h1m1 0h1m31 0h1M9 6.5h1m6 0h1m4 0h2m14 0h1m3 0h1m16 0h1m15 0h1m23 0h1m5 0h1m28 0h1m9 0h1m42 0h1M5 7.5h1m2 0h1m1 0h1m6 0h1m10 0h1m1 0h1m1 0h1m21 0h1m22 0h1m4 0h1m6 0h1m11 0h1m1 0h1m25 0h1m52 0h1m4 0h1M13 8.5h2m10 0h1m1 0h1m5 0h1m35 0h1m6 0h1m6 0h1m2 0h1m1 0h1m13 0h2m7 0h1m29 0h1m4 0h1m1 0h1m7 0h1m20 0h1m6 0h1m6 0h1m2 0h1m3 0h1M2 9.5h2m1 0h1m6 0h1m6 0h2m1 0h1m7 0h1m7 0h1m21 0h1m11 0h1m8 0h1m2 0h1m4 0h2m16 0h1m5 0h1m13 0h1m10 0h1m6 0h1m2 0h1m46 0h1m2 0h1M16 10.5h1m12 0h1m2 0h1m6 0h1m26 0h1m10 0h1m1 0h1m9 0h1m14 0h1m4 0h1m4 0h1m29 0h1m4 0h1m13 0h2m19 0h2m6 0h1M4 11.5h1m5 0h1m13 0h1m7 0h1m13 0h1m4 0h1m3 0h1m13 0h1m10 0h1m24 0h1m1 0h1m1 0h1m4 0h1m10 0h1m2 0h1m2 0h1m4 0h1m6 0h1m2 0h3m2 0h1m8 0h1m7 0h1m13 0h1m1 0h1M2 12.5h1m38 0h1m6 0h1m4 0h1m3 0h1m9 0h1m3 0h1m40 0h1m23 0h1m2 0h1m35 0h1m2 0h1m2 0h1m2 0h2m12 0h1M12 13.5h1m9 0h1m18 0h1m7 0h1m12 0h1m14 0h1m14 0h1m10 0h1m1 0h1m2 0h1m6 0h1m4 0h1m8 0h1m3 0h1m18 0h1m4 0h2m27 0h1m2 0h1m3 0h1M10 14.5h1m5 0h1m7 0h1m9 0h1m13 0h1m4 0h1m3 0h1m11 0h1m3 0h1m10 0h1m11 0h1m14 0h1m10 0h1m8 0h1m10 0h1m4 0h1m27 0h1m6 0h1M8 15.5h1m7 0h2m17 0h1m17 0h1m2 0h1m3 0h2m4 0h1m8 0h1m22 0h1m8 0h1m8 0h2m19 0h1m3 0h1m11 0h1m16 0h2m3 0h1m10 0h1m8 0h1m2 0h1M4 16.5h1m3 0h1m19 0h1m38 0h1m2 0h1m3 0h1m5 0h1m13 0h1m2 0h1m7 0h1m2 0h1m4 0h1m11 0h1m7 0h1m2 0h1m13 0h1m1 0h1m6 0h1m18 0h1m3 0h1M3 17.5h2m3 0h3m8 0h2m22 0h1m20 0h2m1 0h1m10 0h2m2 0h1m6 0h1m1 0h2m9 0h1m1 0h1m17 0h1m1 0h1m15 0h1m1 0h1m55 0h1M4 18.5h1m66 0h1m4 0h1m19 0h1m7 0h1m1 0h1m14 0h1m23 0h1m10 0h2m1 0h1m10 0h1m2 0h1m13 0h1M14 19.5h1m2 0h1m26 0h1m15 0h1m1 0h1m28 0h2m4 0h1m6 0h1m6 0h1m41 0h1m3 0h1m4 0h2m16 0h1m3 0h1m9 0h1M24 20.5h1m2 0h1m1 0h1m17 0h1m6 0h1m15 0h1m4 0h1m20 0h1m13 0h2m4 0h1m6 0h1m23 0h1m17 0h1m10 0h1m14 0h3M10 21.5h1m17 0h1m20 0h1m5 0h1m1 0h1m3 0h1m9 0h1m3 0h1m1 0h1m21 0h1m10 0h1m9 0h1m1 0h1m18 0h1m26 0h1m17 0h2m4 0h2M1 22.5h1m4 0h1m8 0h2m8 0h1m6 0h1m2 0h1m8 0h1m8 0h1m11 0h1m13 0h1m3 0h1m13 0h1m10 0h1m5 0h1m1 0h1m7 0h1m2 0h1m9 0h1m8 0h1m17 0h1m8 0h1m2 0h1m4 0h1m9 0h1M9 23.5h1m2 0h1m17 0h2m8 0h2m33 0h1m1 0h1m2 0h1m3 0h1m7 0h1m5 0h1m12 0h1m53 0h1M10 24.5h1m1 0h1m5 0h1m19 0h2m23 0h1m4 0h1m12 0h1m35 0h1m8 0h1m3 0h2m9 0h2m2 0h1m11 0h1m4 0h1m7 0h1m2 0h2m7 0h1m7 0h1M0 25.5h1m4 0h2m5 0h1m3 0h1m2 0h1m12 0h1m4 0h1m6 0h1m45 0h1m3 0h2m10 0h1m3 0h1m15 0h1m24 0h2m4 0h1m3 0h1m2 0h1m2 0h1m1 0h2m19 0h1M9 26.5h1m28 0h1m1 0h1m2 0h1m8 0h1m4 0h1m2 0h2m30 0h1m1 0h1m6 0h1m6 0h2m7 0h1m10 0h1m4 0h1m6 0h1m4 0h1m10 0h1m22 0h1M2 27.5h1m1 0h1m2 0h1m2 0h2m4 0h1m10 0h1m1 0h2m12 0h1m32 0h1m7 0h1m29 0h1m22 0h2m4 0h1m13 0h1m22 0h1m7 0h2M6 28.5h1m2 0h1m3 0h1m15 0h1m2 0h1m8 0h1m6 0h1m2 0h1m4 0h1m13 0h1m7 0h2m3 0h1m22 0h1m14 0h1m7 0h1m20 0h1m2 0h1m1 0h1m9 0h1m4 0h3m22 0h1M25 29.5h1m5 0h1m11 0h1m8 0h1m17 0h1m36 0h2m1 0h1m1 0h1m1 0h1m9 0h1m1 0h1m7 0h1m1 0h1m21 0h1m2 0h1m5 0h1m9 0h2m13 0h1m2 0h2M1 30.5h1m6 0h1m11 0h1m14 0h1m12 0h1m12 0h1m8 0h1m3 0h1m3 0h1m12 0h1m6 0h1m9 0h1m4 0h1m21 0h1m3 0h1m6 0h1m12 0h2m1 0h1m5 0h1m4 0h1m13 0h1M2 31.5h1m3 0h1m3 0h1m1 0h1m2 0h1m13 0h1m4 0h1m20 0h1m11 0h1m74 0h2M9 32.5h2m9 0h1m9 0h2m7 0h1m11 0h1m7 0h1m11 0h1m5 0h1m6 0h1m10 0h2m6 0h1m6 0h2m3 0h1m22 0h1m4 0h1m33 0h1m2 0h2m6 0h1m1 0h1m2 0h1M0 33.5h1m1 0h1m2 0h1m15 0h1m3 0h1m6 0h1m11 0h1m8 0h1m8 0h1m59 0h1m4 0h1m12 0h1m9 0h1m4 0h1m6 0h1m3 0h1m4 0h1m8 0h1m12 0h1M1 34.5h2m11 0h1m15 0h2m5 0h1m4 0h1m17 0h1m1 0h1m7 0h1m12 0h1m8 0h1m19 0h1m4 0h1m3 0h1m21 0h1m3 0h1m4 0h1m6 0h1m21 0h1m5 0h1m1 0h1m1 0h2m2 0h1m3 0h1M26 35.5h1m4 0h1m2 0h1m2 0h1m33 0h1m2 0h1m21 0h1m4 0h1m18 0h1m2 0h1m10 0h1m2 0h1m30 0h1m9 0h1M10 36.5h2m3 0h1m12 0h1m4 0h1m3 0h1m4 0h1m12 0h2m20 0h1m5 0h1m1 0h1m3 0h1m19 0h1m3 0h1m9 0h1m5 0h1m2 0h1m9 0h2m6 0h1m18 0h1m6 0h1m16 0h1m3 0h1m1 0h1M61 37.5h1m2 0h1m11 0h1m49 0h1m6 0h1m11 0h1m5 0h1m9 0h1m14 0h1M5 38.5h1m4 0h1m6 0h1m35 0h1m2 0h1m3 0h2m4 0h1m11 0h1m6 0h1m4 0h1m1 0h1m18 0h1m3 0h1m2 0h1m12 0h1m20 0h1m25 0h1m17 0h1M3 39.5h1m13 0h1m3 0h1m3 0h1m7 0h1m11 0h1m20 0h1m17 0h1m36 0h1m1 0h1m4 0h1m6 0h1m14 0h1m9 0h1m5 0h1m1 0h1m19 0h1M0 40.5h1m32 0h1m16 0h1m4 0h1m1 0h1m17 0h1m28 0h1m14 0h1m5 0h1m24 0h1m11 0h1m3 0h1m12 0h1m3 0h1m2 0h1m6 0h1m3 0h1M31 41.5h1m2 0h1m7 0h1m7 0h1m40 0h1m18 0h1m18 0h1m1 0h1m27 0h1m29 0h1m3 0h1M3 42.5h1m33 0h1m17 0h1m6 0h1m1 0h1m9 0h1m3 0h1m1 0h1m6 0h1m17 0h1m20 0h1m6 0h1m7 0h1m5 0h1m14 0h1m4 0h1m7 0h1m1 0h1m5 0h1m7 0h1M1 43.5h1m1 0h2m1 0h1m3 0h1m13 0h1m21 0h1m18 0h1m2 0h1m19 0h1m11 0h1m3 0h1m7 0h1m4 0h1m7 0h1m17 0h1m12 0h1m21 0h1m5 0h1M11 44.5h2m7 0h1m45 0h1m16 0h1m8 0h1m17 0h1m5 0h1m23 0h1m3 0h2M1 45.5h1m7 0h1m24 0h1m14 0h1m4 0h1m1 0h1m12 0h1m6 0h1m3 0h1m6 0h1m10 0h1m15 0h1m5 0h1m5 0h1m2 0h2m5 0h1m8 0h1m7 0h1m30 0h1m14 0h1M30 46.5h1m6 0h1m17 0h1m5 0h1m12 0h1m5 0h2m3 0h1m4 0h1m10 0h1m4 0h1m1 0h1m5 0h1m1 0h1m17 0h2m10 0h1m8 0h1m17 0h1m12 0h1m2 0h1m1 0h1M3 47.5h1m17 0h1m15 0h1m14 0h2m3 0h1m4 0h1m24 0h1m2 0h1m14 0h1m16 0h1m1 0h1m7 0h1m20 0h1m6 0h1m12 0h2m6 0h1m1 0h1m4 0h1m3 0h1M16 48.5h1m2 0h1m26 0h1m2 0h1m2 0h1m2 0h1m2 0h1m2 0h1m59 0h1m3 0h1m3 0h1m8 0h1m7 0h1m11 0h1m13 0h1m4 0h1M7 49.5h1m13 0h1m2 0h1m14 0h1m15 0h2m18 0h2m11 0h1m11 0h1m1 0h1m10 0h1m12 0h2m5 0h1m8 0h1m35 0h1m4 0h1m5 0h1M3 50.5h1m24 0h1m4 0h1m17 0h1m15 0h1m5 0h1m30 0h1m19 0h2m22 0h2m6 0h1m11 0h1m3 0h1m3 0h2m8 0h1M8 51.5h1m16 0h1m10 0h1m6 0h1m23 0h1m5 0h1m8 0h1m4 0h1m2 0h2m4 0h1m7 0h1m22 0h1m5 0h1m4 0h1m8 0h1m8 0h1m27 0h1m13 0h1M11 52.5h1m2 0h1m19 0h1m6 0h1m10 0h1m2 0h1m9 0h1m13 0h1m34 0h2m22 0h1m10 0h1m13 0h1m14 0h1m9 0h1m6 0h1m1 0h1M1 53.5h1m7 0h2m7 0h1m3 0h1m3 0h1m3 0h1m13 0h1m11 0h1m10 0h2m7 0h1m5 0h1m24 0h1m1 0h1m1 0h1m1 0h1m9 0h1m8 0h1m10 0h1m17 0h1m7 0h1m16 0h1m10 0h1M4 54.5h1m17 0h2m4 0h1m8 0h2m1 0h1m24 0h1m26 0h1m30 0h1m11 0h1m8 0h1m7 0h1m8 0h1m8 0h1m3 0h1M0 55.5h1m6 0h1m6 0h1m5 0h1m3 0h1m5 0h1m54 0h1m3 0h2m13 0h1m8 0h2m10 0h1m3 0h1m8 0h1m23 0h1m17 0h1m11 0h1m4 0h1M14 56.5h1m8 0h1m10 0h1m1 0h1m63 0h1m30 0h2m9 0h3m6 0h1m4 0h1m14 0h1m1 0h1m5 0h1m8 0h1M6 57.5h1m44 0h1m2 0h1m5 0h1m1 0h1m4 0h1m17 0h1m4 0h1m7 0h1m2 0h1m11 0h1m17 0h1m9 0h1m5 0h1m34 0h1M13 58.5h1m51 0h1m13 0h1m1 0h1m4 0h1m2 0h1m18 0h1m3 0h1m5 0h1m2 0h1m3 0h2m8 0h1m10 0h1m16 0h1m2 0h1m14 0h1m7 0h1m8 0h1M10 59.5h1m1 0h1m2 0h1m6 0h1m2 0h1m3 0h1m8 0h1m12 0h1m30 0h1m5 0h1m12 0h1m9 0h1m12 0h1m19 0h1m10 0h1m8 0h1M2 60.5h1m4 0h1m15 0h1m18 0h1m22 0h1m2 0h1m9 0h2m21 0h1m1 0h1m11 0h1m6 0h1m3 0h1m3 0h1m11 0h1m7 0h1m11 0h1m2 0h1m3 0h1m3 0h1m5 0h2m1 0h2m8 0h1M16 61.5h1m9 0h1m7 0h1m10 0h1m14 0h1m17 0h1m5 0h2m10 0h1m1 0h1m3 0h1m46 0h3m3 0h1m14 0h1m5 0h1m3 0h1m17 0h2M9 62.5h1m24 0h1m38 0h1m20 0h1m1 0h1m13 0h1m5 0h1m10 0h1m4 0h1m15 0h1m3 0h1m1 0h1m1 0h1m9 0h1m3 0h1m6 0h1m4 0h1m4 0h1M6 63.5h1m12 0h1m3 0h1m1 0h1m8 0h1m5 0h1m10 0h1m19 0h1m10 0h1m5 0h1m9 0h1m11 0h1m10 0h1m1 0h1m16 0h1m3 0h2m1 0h1m16 0h1m10 0h1m18 0h1M20 64.5h1m8 0h1m5 0h1m25 0h1m6 0h1m53 0h1m1 0h1m9 0h1m21 0h1m13 0h1M7 65.5h1m37 0h1m1 0h1m7 0h1m14 0h1m5 0h1m34 0h1m22 0h1m6 0h1m4 0h1m3 0h2m15 0h1m12 0h1m14 0h1M1 66.5h1m3 0h1m1 0h1m25 0h1m2 0h1m5 0h1m1 0h1m1 0h1m15 0h1m18 0h1m23 0h1m19 0h1m13 0h1m3 0h1m7 0h1m20 0h1m11 0h1M0 67.5h1m9 0h1m2 0h1m9 0h1m12 0h1m9 0h1m3 0h1m11 0h1m21 0h1m1 0h1m44 0h1m9 0h1m51 0h1M7 68.5h1m3 0h1m3 0h1m30 0h1m2 0h1m6 0h1m7 0h1m5 0h1m21 0h1m11 0h1m13 0h1m23 0h3m7 0h1m2 0h1m8 0h1M2 69.5h1m36 0h1m9 0h1m24 0h1m25 0h2m8 0h1m1 0h1m2 0h1m3 0h1m9 0h1m5 0h1m21 0h1m3 0h1m2 0h1m2 0h1m22 0h1M5 70.5h1m6 0h1m7 0h1m1 0h1m22 0h1m2 0h1m5 0h1m1 0h1m2 0h2m26 0h1m2 0h1m3 0h1m3 0h1m2 0h1m6 0h1m3 0h1m1 0h1m2 0h1m28 0h1m28 0h1M24 71.5h1m42 0h1m26 0h1m37 0h1m16 0h1m24 0h1m21 0h1M7 72.5h1m2 0h1m8 0h1m2 0h1m11 0h1m5 0h2m2 0h1m11 0h1m31 0h1m12 0h1m20 0h1m38 0h1m36 0h1M2 73.5h1m3 0h1m1 0h1m11 0h1m1 0h1m6 0h1m12 0h1m6 0h1m3 0h1m19 0h1m1 0h1m2 0h2m3 0h1m5 0h1m4 0h1m24 0h1m5 0h1m9 0h2m15 0h1m1 0h1m38 0h1M20 74.5h1m66 0h1m9 0h1m20 0h1m12 0h1m4 0h1m7 0h1m23 0h1m1 0h1m5 0h1m16 0h1M3 75.5h1m4 0h1m6 0h2m8 0h2m4 0h1m3 0h2m3 0h1m2 0h2m21 0h1m14 0h1m4 0h1m4 0h1m4 0h1m7 0h1m13 0h1m3 0h1m6 0h1m2 0h1m4 0h2m16 0h1m5 0h1m9 0h1m11 0h1M9 76.5h1m19 0h1m11 0h2m1 0h1m6 0h1m13 0h3m20 0h2m6 0h1m11 0h1m11 0h1m2 0h1m3 0h1m18 0h1m2 0h1m1 0h1m6 0h1m4 0h2m7 0h1m9 0h1m16 0h1M21 77.5h1m11 0h1m12 0h1m6 0h1m8 0h1m21 0h1m2 0h1m15 0h1m2 0h1m39 0h2m20 0h1m22 0h1M0 78.5h1m4 0h1m12 0h1m3 0h1m8 0h1m10 0h1m17 0h2m2 0h1m6 0h1m3 0h1m28 0h1m4 0h1m10 0h1m1 0h1m18 0h1m7 0h1m4 0h1m8 0h1m18 0h1m10 0h1M4 79.5h1m8 0h1m15 0h2m11 0h1m11 0h1m9 0h1m15 0h1m4 0h2m14 0h1m9 0h1m5 0h1m8 0h1m17 0h1m16 0h2m4 0h1m18 0h1m5 0h1m1 0h1M10 80.5h1m35 0h1m2 0h2m5 0h1m20 0h1m1 0h1m5 0h1m1 0h1m3 0h1m14 0h1m3 0h1m8 0h1m11 0h1m16 0h1m6 0h1m4 0h1m1 0h1m3 0h1m2 0h1m2 0h1m14 0h2M10 81.5h1m4 0h1m3 0h1m12 0h1m1 0h1m7 0h1m13 0h1m12 0h1m23 0h1m7 0h1m5 0h1m9 0h1m9 0h1m8 0h2m11 0h1m3 0h1m1 0h1m2 0h1m14 0h1m2 0h1m6 0h1m5 0h1m4 0h1M28 82.5h1m7 0h1m7 0h1m5 0h1m2 0h1m17 0h1m35 0h1m5 0h1m9 0h2m4 0h1m9 0h1m4 0h1m22 0h1m16 0h1m8 0h1M3 83.5h1m1 0h1m17 0h1m4 0h1m58 0h1m4 0h1m7 0h1m1 0h1m4 0h1m1 0h1m33 0h1m21 0h1m9 0h1m5 0h1m9 0h1M10 84.5h1m10 0h1m13 0h1m2 0h1m30 0h1m8 0h1m7 0h1m3 0h1m11 0h1m8 0h1m2 0h1m4 0h1m10 0h1m6 0h1m20 0h1m2 0h1m5 0h1m2 0h1m6 0h1m4 0h1m12 0h1M3 85.5h1m4 0h1m6 0h1m8 0h1m1 0h1m7 0h1m9 0h1m1 0h1m20 0h1m17 0h1m17 0h1m8 0h1m8 0h1m8 0h1m8 0h1m2 0h1m3 0h1m30 0h1m10 0h1m3 0h1M15 86.5h1m3 0h1m7 0h1m24 0h1m17 0h1m6 0h1m6 0h1m21 0h1m5 0h1m4 0h1m40 0h1m5 0h1m2 0h1m7 0h1m13 0h1m3 0h1M1 87.5h1m1 0h1m8 0h1m16 0h1m11 0h1m3 0h1m3 0h1m6 0h1m15 0h1m2 0h1m14 0h1m2 0h1m7 0h1m1 0h1m12 0h1m6 0h2m2 0h1m2 0h1m2 0h1m11 0h1m11 0h1m2 0h1m24 0h1m3 0h1M30 88.5h1m4 0h1m20 0h1m5 0h1m20 0h1m1 0h1m2 0h2m33 0h1m10 0h1m3 0h1m16 0h1m3 0h1M5 89.5h1m6 0h1m3 0h1m10 0h1m16 0h1m10 0h1m3 0h1m3 0h1m7 0h1m2 0h2m13 0h1m23 0h2m5 0h1m1 0h1m29 0h1m14 0h1m2 0h1m19 0h1M0 90.5h1m1 0h1m8 0h2m35 0h1m6 0h2m4 0h1m5 0h1m2 0h1m5 0h1m13 0h1m9 0h1m7 0h2m4 0h1m7 0h1m5 0h1m5 0h1m14 0h1m7 0h1m9 0h1m3 0h1m16 0h1M2 91.5h1m42 0h1m11 0h1m3 0h1m3 0h1m16 0h1m5 0h1m1 0h2m15 0h1m6 0h1m13 0h2m7 0h1m4 0h1m14 0h1m12 0h1m7 0h1m1 0h1M15 92.5h1m25 0h1m33 0h1m9 0h1m9 0h1m6 0h1m18 0h1m7 0h1m13 0h1m28 0h2m1 0h1m4 0h1m1 0h1m3 0h1m11 0h1M24 93.5h1m15 0h1m7 0h1m6 0h1m1 0h1m6 0h1m13 0h1m3 0h1m1 0h1m3 0h1m6 0h1m1 0h1m12 0h1m8 0h1m2 0h1m3 0h1m8 0h1m17 0h1m14 0h1m10 0h1m18 0h1M9 94.5h1m7 0h1m3 0h1m1 0h1m2 0h1m3 0h1m27 0h1m19 0h1m1 0h1m5 0h1m9 0h1m9 0h2m4 0h1m5 0h1m25 0h1m16 0h1m4 0h1m18 0h1m12 0h1M6 95.5h1m5 0h2m2 0h1m1 0h2m5 0h1m1 0h1m4 0h1m19 0h1m30 0h1m3 0h1m3 0h1m5 0h3m8 0h1m12 0h1m7 0h1m2 0h1m15 0h1m7 0h1m5 0h1m3 0h1m25 0h1M10 96.5h1m3 0h1m1 0h1m9 0h1m10 0h1m5 0h1m34 0h2m4 0h1m16 0h1m9 0h1m9 0h1m13 0h1m4 0h2m22 0h1m3 0h1m4 0h1m18 0h1m3 0h1m1 0h1M15 97.5h1m16 0h1m7 0h1m4 0h1m1 0h1m1 0h1m3 0h1m2 0h1m1 0h2m8 0h1m24 0h1m16 0h2m25 0h1m3 0h1m12 0h1m6 0h1m7 0h1m4 0h1m5 0h1m6 0h1M0 98.5h1m10 0h2m3 0h1m24 0h1m1 0h1m2 0h1m41 0h1m6 0h2m14 0h1m19 0h1m2 0h1m17 0h1m12 0h1m3 0h2m3 0h1m17 0h1M6 99.5h1m4 0h1m38 0h1m5 0h1m2 0h1m22 0h1m3 0h1m3 0h1m8 0h1m3 0h3m5 0h1m2 0h1m11 0h2m2 0h3m5 0h1m2 0h1m33 0h1m3 0h1m9 0h1M8 100.5h1m19 0h1m25 0h1m8 0h1m8 0h1m9 0h1m6 0h1m20 0h1m16 0h1m2 0h1m11 0h1m6 0h1m8 0h1m6 0h1m1 0h1m13 0h1m13 0h1M39 101.5h1m18 0h1m1 0h1m17 0h1m5 0h1m2 0h1m6 0h1m2 0h1m13 0h1m3 0h1m5 0h1m1 0h1m3 0h1m8 0h1m2 0h1m46 0h1m6 0h1m2 0h1M6 102.5h1m19 0h1m3 0h1m22 0h1m3 0h1m15 0h1m2 0h1m19 0h2m8 0h1m20 0h1m4 0h1m6 0h1m5 0h1m5 0h1m12 0h1m11 0h1m1 0h1m8 0h1m3 0h1m1 0h1M0 103.5h1m6 0h1m2 0h1m14 0h1m7 0h1m2 0h1m19 0h1m2 0h1m2 0h1m6 0h1m3 0h1m11 0h1m2 0h1m4 0h1m4 0h1m8 0h1m5 0h1m18 0h1m13 0h1m9 0h2m11 0h1m25 0h1M22 104.5h1m1 0h1m6 0h1m10 0h1m40 0h1m4 0h1m6 0h1m13 0h1m9 0h1m3 0h1m7 0h1m12 0h1m1 0h1m3 0h1m9 0h1m18 0h1m19 0h1M7 105.5h1m1 0h1m4 0h1m6 0h1m26 0h1m5 0h1m38 0h1m16 0h1m3 0h1m4 0h1m18 0h2m4 0h1m2 0h1m8 0h1m4 0h1m11 0h1m2 0h1M14 106.5h1m12 0h1m26 0h1m11 0h1m28 0h1m7 0h1m14 0h2m10 0h1m14 0h1m25 0h1m14 0h1M8 107.5h2m1 0h1m13 0h1m4 0h1m9 0h1m4 0h1m44 0h1m14 0h1m5 0h1m12 0h1m4 0h1m5 0h1m12 0h1m11 0h1m3 0h1m1 0h1m3 0h1m11 0h1m14 0h1M8 108.5h1m1 0h1m13 0h1m5 0h1m13 0h1m1 0h1m21 0h1m1 0h1m2 0h1m2 0h1m10 0h1m5 0h1m1 0h1m21 0h1m14 0h1m5 0h1m6 0h1m1 0h2m13 0h1m1 0h1m12 0h1m4 0h1m7 0h1M19 109.5h1m16 0h1m3 0h1m10 0h1m12 0h1m17 0h1m1 0h1m14 0h1m17 0h1m24 0h1m6 0h2m18 0h1m13 0h1m1 0h1m4 0h1M12 110.5h1m22 0h1m10 0h1m1 0h2m8 0h1m12 0h1m16 0h1m33 0h1m2 0h2m12 0h1m37 0h1m5 0h1M19 111.5h1m7 0h1m2 0h1m3 0h1m11 0h1m6 0h3m7 0h2m6 0h1m4 0h1m4 0h1m18 0h2m40 0h2m9 0h1m1 0h1m4 0h1m16 0h1m2 0h1m1 0h1m1 0h1m2 0h1m4 0h1M10 112.5h2m27 0h1m49 0h1m12 0h1m2 0h1m10 0h1m2 0h1m7 0h1m1 0h1m7 0h1m1 0h1m11 0h1m3 0h1m1 0h1m4 0h1m12 0h1m6 0h1M3 113.5h1m7 0h1m16 0h1m10 0h1m9 0h1m5 0h1m6 0h1m6 0h1m4 0h1m2 0h1m1 0h2m10 0h1m18 0h1m6 0h1m11 0h1m4 0h1m4 0h1m11 0h1m10 0h1m7 0h1m2 0h1m3 0h1m5 0h1m10 0h1M2 114.5h1m8 0h2m7 0h2m36 0h1m14 0h2m24 0h1m4 0h1m9 0h1m4 0h1m10 0h1m6 0h1m9 0h1m17 0h1m9 0h1m4 0h1m12 0h1M4 115.5h1m5 0h1m34 0h1m9 0h2m1 0h2m27 0h1m31 0h1m6 0h1m18 0h1m18 0h1m6 0h1m1 0h1m3 0h1m4 0h1m3 0h1m7 0h1m1 0h1M1 116.5h2m12 0h1m1 0h1m9 0h1m4 0h1m1 0h1m14 0h1m31 0h1m6 0h1m7 0h1m3 0h1m18 0h1m7 0h1m8 0h2M4 117.5h1m7 0h1m47 0h1m1 0h1m7 0h1m12 0h1m11 0h1m12 0h1m14 0h1m1 0h1m1 0h1m3 0h1m17 0h2m9 0h1m1 0h1m1 0h1m34 0h1M16 118.5h1m32 0h1m10 0h1m8 0h1m1 0h1m5 0h1m8 0h1m8 0h1m1 0h1m15 0h1m25 0h1m8 0h1m4 0h1m7 0h2m23 0h1M14 119.5h1m1 0h1m3 0h1m1 0h1m8 0h2m1 0h1m10 0h1m1 0h1m5 0h1m8 0h1m5 0h1m5 0h1m3 0h1m11 0h1m9 0h1m14 0h1m19 0h1m6 0h1m2 0h1m1 0h1m3 0h1m17 0h1m2 0h1m5 0h1m6 0h2m2 0h1M2 120.5h1m5 0h1m21 0h1m6 0h1m12 0h1m20 0h1m5 0h1m1 0h2m1 0h1m7 0h1m10 0h1m16 0h1m26 0h1m19 0h2m24 0h1M15 121.5h2m11 0h1m4 0h1m3 0h1m79 0h1m11 0h1m11 0h1m14 0h1m6 0h2m25 0h1M0 122.5h1m19 0h1m5 0h2m9 0h1m2 0h2m10 0h1m4 0h1m3 0h1m22 0h1m14 0h1m4 0h1m5 0h1m20 0h1m4 0h2m13 0h1m4 0h1m2 0h2m16 0h1m12 0h1M3 123.5h1m27 0h1m5 0h2m11 0h2m7 0h1m10 0h2m5 0h1m7 0h1m4 0h1m2 0h1m18 0h1m25 0h1m6 0h1m45 0h1m4 0h1M4 124.5h1m12 0h1m14 0h1m14 0h1m1 0h1m14 0h2m16 0h1m7 0h1m6 0h1m1 0h1m1 0h1m7 0h1m3 0h1m17 0h1m6 0h1m8 0h1m8 0h1m1 0h1m2 0h1m1 0h1m14 0h2m2 0h1m1 0h1m3 0h1M4 125.5h2m19 0h1m4 0h1m10 0h1m4 0h2m13 0h1m4 0h1m34 0h1m11 0h1m5 0h1m7 0h1m8 0h1m8 0h1m6 0h2m8 0h1m4 0h1m13 0h1m7 0h1M19 126.5h1m5 0h1m8 0h1m9 0h1m12 0h1m27 0h1m1 0h1m28 0h1m8 0h1m9 0h1m1 0h1m5 0h1m12 0h1m17 0h1m6 0h1m6 0h1m8 0h1M13 127.5h1m4 0h1m12 0h1m5 0h1m1 0h1m2 0h1m9 0h1m24 0h1m12 0h1m15 0h1m14 0h1m6 0h1m1 0h1m19 0h1m5 0h2m15 0h1m22 0h1M1 128.5h1m3 0h1m11 0h1m13 0h1m19 0h1m7 0h1m8 0h3m20 0h1m8 0h1m3 0h1m4 0h1m2 0h1m2 0h1m13 0h1m45 0h1m2 0h1m8 0h1m5 0h1M9 129.5h1m86 0h1m7 0h1m1 0h1m4 0h1m10 0h1m8 0h1m9 0h1m2 0h1m1 0h1m28 0h1M17 130.5h1m7 0h1m31 0h1m22 0h1m2 0h1m2 0h1m2 0h2m15 0h1m8 0h1m26 0h1m3 0h1m1 0h1m10 0h1m7 0h1m1 0h1M5 131.5h1m3 0h1m1 0h1m7 0h1m10 0h1m9 0h1m7 0h1m2 0h1m43 0h1m7 0h2m2 0h2m2 0h1m7 0h1m12 0h1m12 0h1m24 0h1m10 0h1m17 0h1M13 132.5h2m10 0h1m5 0h2m6 0h1m10 0h1m3 0h1m3 0h1m6 0h1m8 0h1m2 0h1m2 0h1m3 0h1m3 0h1m4 0h1m1 0h1m1 0h1m1 0h1m24 0h1m1 0h1m26 0h1m28 0h1m13 0h1M9 133.5h1m1 0h1m20 0h1m22 0h1m4 0h1m7 0h1m12 0h1m22 0h1m1 0h1m9 0h1m5 0h1m13 0h1m4 0h1m4 0h1m29 0h1m13 0h1m1 0h1M4 134.5h1m2 0h2m31 0h1m1 0h3m18 0h1m45 0h1m3 0h1m7 0h1m1 0h1m8 0h1m4 0h1m12 0h1m4 0h3m9 0h1m7 0h1m14 0h2M29 135.5h1m12 0h1m11 0h1m8 0h1m1 0h1m4 0h1m17 0h1m8 0h1m1 0h1m3 0h1m14 0h1m23 0h1m3 0h1m2 0h1m10 0h1m2 0h1m20 0h1m5 0h1M1 136.5h1m5 0h1m15 0h1m11 0h1m13 0h1m1 0h1m7 0h2m13 0h1m6 0h1m25 0h1m2 0h1m4 0h3m10 0h1m10 0h1m22 0h1m14 0h1m1 0h1M32 137.5h1m4 0h1m23 0h1m6 0h1m8 0h1m32 0h1m3 0h1m6 0h1m5 0h1m33 0h1m25 0h1m6 0h1M7 138.5h2m38 0h1m12 0h1m6 0h1m31 0h1m3 0h1m8 0h1m3 0h2m3 0h1m7 0h1m1 0h1m1 0h1m7 0h1m16 0h1m13 0h1m1 0h1m6 0h1m8 0h1M1 139.5h1m5 0h1m12 0h1m12 0h1m5 0h1m3 0h1m27 0h1m8 0h1m7 0h1m1 0h1m18 0h1m23 0h1m25 0h1m10 0h2m9 0h2m9 0h1m5 0h1M13 140.5h1m3 0h1m3 0h3m2 0h1m1 0h1m6 0h1m14 0h1m3 0h1m3 0h1m6 0h1m7 0h1m5 0h1m8 0h1m3 0h1m27 0h1m2 0h1m29 0h1m3 0h1m6 0h1m1 0h1m2 0h1m4 0h1m1 0h2m2 0h1m3 0h1m6 0h1M20 141.5h2m4 0h1m8 0h1m29 0h1m5 0h3m9 0h1m38 0h1m9 0h1m2 0h2m16 0h1m34 0h1m3 0h1M17 142.5h1m10 0h1m18 0h1m4 0h1m1 0h1m3 0h1m6 0h1m14 0h1m7 0h1m3 0h2m16 0h1m2 0h1m1 0h1m13 0h1m6 0h1m20 0h1m4 0h2m8 0h1m4 0h1m5 0h1m8 0h1m5 0h2M6 143.5h1m11 0h1m24 0h1m14 0h1m33 0h2m8 0h1m8 0h1m3 0h1m13 0h1m2 0h1m6 0h1m7 0h1m11 0h1m5 0h1m3 0h1m11 0h1m5 0h1m10 0h1M1 144.5h1m17 0h1m12 0h1m16 0h1m10 0h1m49 0h1m9 0h1m4 0h1m4 0h2m7 0h1m10 0h1m12 0h1m10 0h1M3 145.5h1m10 0h2m1 0h2m4 0h2m2 0h1m14 0h1m4 0h1m7 0h1m1 0h1m9 0h1m4 0h1m3 0h1m3 0h1m11 0h1m3 0h1m76 0h2m4 0h2m2 0h1m2 0h1M3 146.5h1m28 0h2m2 0h1m8 0h1m17 0h1m15 0h1m3 0h1m12 0h1m15 0h2m6 0h2m7 0h2m3 0h2m29 0h1m7 0h3m4 0h1m3 0h1m2 0h1M7 147.5h1m1 0h1m5 0h1m1 0h1m6 0h1m11 0h1m6 0h1m24 0h2m17 0h1m3 0h2m11 0h1m8 0h1m35 0h1m13 0h1m1 0h2m8 0h1m3 0h1m2 0h1m2 0h1M3 148.5h2m7 0h1m5 0h1m8 0h1m6 0h1m7 0h2m1 0h1m15 0h1m3 0h1m7 0h2m4 0h1m3 0h1m15 0h1m4 0h1m10 0h2m2 0h1m7 0h1m2 0h1m5 0h2m3 0h1m4 0h1m6 0h1m14 0h1m7 0h1M3 149.5h1m13 0h1m14 0h1m4 0h1m6 0h2m8 0h1m4 0h1m2 0h1m5 0h1m1 0h2m2 0h1m33 0h1m34 0h1m11 0h1m1 0h2M1 150.5h1m2 0h1m4 0h1m4 0h2m28 0h1m8 0h1m11 0h1m7 0h1m15 0h1m4 0h1m29 0h1m7 0h1m7 0h1m2 0h1m4 0h1m1 0h1m2 0h1m23 0h1m6 0h1m2 0h1m8 0h1M2 151.5h1m9 0h1m3 0h1m1 0h1m15 0h1m1 0h2m8 0h1m19 0h1m13 0h1m19 0h1m20 0h1m32 0h1m2 0h1m8 0h2m4 0h1m9 0h1m1 0h1m10 0h1M11 152.5h1m5 0h1m8 0h1m8 0h1m3 0h1m16 0h2m11 0h1m6 0h1m12 0h1m6 0h1m7 0h1m29 0h1m3 0h1m11 0h1m7 0h1m15 0h1m4 0h2m3 0h1M15 153.5h1m26 0h2m21 0h2m9 0h1m6 0h1m1 0h2m14 0h1m17 0h1m4 0h2m4 0h1m13 0h1m5 0h1m8 0h1m3 0h1m1 0h1m11 0h1m11 0h2m7 0h2M16 154.5h2m2 0h1m23 0h1m6 0h1m5 0h1m16 0h1m9 0h1m1 0h1m20 0h1m8 0h1m11 0h1m1 0h1m11 0h1m29 0h1m1 0h1m17 0h1m1 0h1M0 155.5h1m2 0h1m6 0h1m1 0h1m7 0h1m6 0h1m19 0h1m1 0h2m10 0h1m10 0h1m12 0h2m10 0h1m42 0h1m3 0h1m27 0h1m6 0h1m15 0h1M9 156.5h2m5 0h1m10 0h2m8 0h1m7 0h1m1 0h1m2 0h3m10 0h1m4 0h1m10 0h1m35 0h3m13 0h1m2 0h1m18 0h1m4 0h1m26 0h1m5 0h1M0 157.5h1m2 0h1m4 0h1m2 0h2m21 0h1m6 0h1m9 0h2m10 0h1m8 0h1m8 0h1m1 0h1m7 0h1m17 0h1m2 0h1m13 0h1m11 0h1m2 0h1m4 0h1m11 0h1m30 0h1M0 158.5h1m12 0h2m11 0h1m9 0h1m1 0h1m14 0h1m5 0h1m21 0h2m4 0h1m8 0h1m17 0h2m7 0h1m5 0h2m5 0h1m19 0h1m1 0h1m4 0h1m7 0h1m9 0h1m10 0h1M8 159.5h1m10 0h1m4 0h1m26 0h1m10 0h1m11 0h1m10 0h1m12 0h1m2 0h1m14 0h1m5 0h1m22 0h1m4 0h1m30 0h1m13 0h1M37 160.5h1m21 0h1m21 0h1m6 0h1m26 0h1m27 0h1m31 0h1m5 0h1m10 0h1m1 0h1M7 161.5h1m2 0h1m1 0h1m17 0h1m24 0h1m17 0h1m12 0h1m3 0h1m1 0h1m8 0h3m3 0h1m3 0h1m3 0h1m5 0h1m20 0h1m13 0h1m4 0h1m6 0h1m14 0h1m2 0h1M7 162.5h1m16 0h1m20 0h1m25 0h1m1 0h1m14 0h1m7 0h1m7 0h1m6 0h1m4 0h1m41 0h1m28 0h1m9 0h1M0 163.5h1m12 0h1m12 0h1m1 0h1m10 0h1m1 0h1m10 0h1m3 0h1m31 0h1m1 0h2m3 0h1m15 0h1m20 0h1m5 0h1m4 0h1m1 0h1m9 0h1m27 0h1m9 0h2M33 164.5h1m4 0h1m27 0h1m1 0h1m12 0h1m4 0h1m4 0h1m9 0h1m8 0h1m23 0h1m3 0h2m19 0h1m7 0h1m8 0h1m1 0h2m7 0h1M10 165.5h1m7 0h1m1 0h1m31 0h1m26 0h1m20 0h1m29 0h1m2 0h1m5 0h1m1 0h1m3 0h1m6 0h1m11 0h1m14 0h1m4 0h1m4 0h1m5 0h1M3 166.5h2m18 0h1m3 0h1m7 0h1m18 0h1m12 0h2m28 0h1m15 0h1m8 0h1m14 0h2m6 0h1m26 0h1m18 0h1m4 0h1M42 167.5h1m1 0h1m7 0h1m13 0h1m8 0h1m11 0h1m21 0h1m13 0h1m11 0h1m3 0h1m3 0h1m12 0h1m5 0h3m7 0h1m5 0h1m16 0h1M3 168.5h1m13 0h1m24 0h1m2 0h1m5 0h1m14 0h1m7 0h1m11 0h1m2 0h1m1 0h1m25 0h1m18 0h1m6 0h1m5 0h1m5 0h1m6 0h1m22 0h1m8 0h1M9 169.5h1m3 0h1m21 0h1m6 0h1m3 0h1m11 0h1m10 0h1m3 0h1m4 0h1m15 0h1m21 0h1m1 0h1m8 0h1m5 0h1m1 0h1m11 0h1m3 0h1m7 0h1m5 0h1m5 0h1m1 0h1m10 0h1m3 0h1M7 170.5h1m2 0h1m3 0h1m1 0h1m9 0h1m20 0h1m42 0h1m25 0h1m2 0h1m13 0h1m3 0h2m5 0h1m8 0h1m29 0h1m11 0h2M8 171.5h1m14 0h1m6 0h1m5 0h1m20 0h1m4 0h1m21 0h1m1 0h1m12 0h1m23 0h1m7 0h1m1 0h1m3 0h1m7 0h1m4 0h1m27 0h1m12 0h1M0 172.5h1m43 0h1m18 0h1m13 0h1m1 0h1m3 0h1m36 0h1m4 0h1m15 0h1m4 0h1m6 0h1m16 0h1m2 0h1m12 0h1m2 0h1m5 0h3M2 173.5h1m21 0h1m2 0h1m3 0h1m5 0h1m22 0h1m5 0h1m16 0h1m7 0h1m21 0h1m3 0h1m2 0h1m11 0h1m33 0h1m15 0h1M27 174.5h1m8 0h1m2 0h1m8 0h1m4 0h1m6 0h1m1 0h4m32 0h1m3 0h1m2 0h1m1 0h1m2 0h1m11 0h1m19 0h2m21 0h1m2 0h1m13 0h1m9 0h1M9 175.5h1m9 0h1m2 0h1m18 0h1m10 0h1m13 0h3m17 0h1m13 0h1m4 0h1m13 0h1m6 0h2m11 0h2m16 0h2m24 0h1M0 176.5h2m6 0h1m28 0h1m21 0h1m15 0h1m35 0h1m16 0h1m22 0h1m6 0h1m1 0h1m5 0h1m6 0h1m19 0h1M11 177.5h1m3 0h1m19 0h1m30 0h1m5 0h1m26 0h2m6 0h1m1 0h1m18 0h1m2 0h1m18 0h1m1 0h1m7 0h1m4 0h1m13 0h1M5 178.5h2m2 0h1m16 0h1m2 0h1m5 0h1m3 0h1m1 0h1m5 0h2m3 0h1m20 0h1m4 0h1m3 0h2m2 0h1m9 0h1m3 0h1m3 0h1m3 0h1m9 0h1m22 0h2m9 0h1m30 0h1m10 0h1M6 179.5h1m11 0h1m9 0h1m1 0h1m3 0h1m11 0h1m7 0h1m6 0h1m14 0h2m4 0h1m5 0h1m7 0h1m5 0h1m3 0h1m14 0h1m9 0h1m24 0h1m6 0h1m1 0h1m7 0h1m3 0h3m3 0h1m6 0h1M1 180.5h1m9 0h1m9 0h1m26 0h2m17 0h1m4 0h1m9 0h1m8 0h1m1 0h1m1 0h1m27 0h1m17 0h1m25 0h1m8 0h1m10 0h1M5 181.5h1m12 0h1m5 0h1m9 0h1m36 0h1m7 0h1m3 0h1m4 0h1m21 0h1m7 0h1m6 0h2m4 0h1m2 0h1m33 0h1m5 0h1m6 0h1m8 0h1m2 0h1m2 0h1M24 182.5h1m5 0h1m18 0h1m9 0h1m4 0h1m1 0h1m10 0h1m10 0h1m5 0h1m40 0h1m9 0h1m4 0h2m4 0h1m6 0h1m17 0h1m3 0h1m7 0h1m5 0h1M1 183.5h1m11 0h1m9 0h1m37 0h1m1 0h1m28 0h2m6 0h2m7 0h1m2 0h1m1 0h1m1 0h1m6 0h1m2 0h1m1 0h1m19 0h1m3 0h1m3 0h1m6 0h1m1 0h1m1 0h1m7 0h1m21 0h1M10 184.5h1m29 0h2m6 0h1m2 0h1m4 0h1m4 0h2m16 0h2m1 0h1m20 0h1m1 0h1m2 0h1m7 0h2m11 0h1m1 0h1m3 0h1m14 0h1m2 0h1m4 0h1m6 0h1m5 0h1m4 0h1m4 0h1m3 0h1M14 185.5h1m1 0h1m13 0h2m6 0h1m8 0h1m7 0h1m21 0h1m6 0h1m8 0h1m1 0h2m5 0h1m14 0h1m1 0h1m4 0h1m20 0h1m6 0h1m2 0h1m1 0h2m24 0h1m8 0h1M13 186.5h1m4 0h1m3 0h1m3 0h1m6 0h1m4 0h2m5 0h1m3 0h1m12 0h1m7 0h1m32 0h1m9 0h1m25 0h1m1 0h1m18 0h1m7 0h1m14 0h1m12 0h1M7 187.5h1m28 0h1m26 0h2m5 0h1m34 0h1m11 0h1m8 0h1m10 0h1m6 0h1m1 0h1m7 0h1m12 0h1m7 0h1m2 0h1M0 188.5h1m41 0h1m1 0h2m18 0h1m2 0h1m18 0h1m25 0h2m23 0h1m5 0h1m2 0h1m2 0h1m13 0h1m1 0h1m4 0h1m2 0h1m25 0h1M1 189.5h1m2 0h1m7 0h1m6 0h1m2 0h1m9 0h1m8 0h1m25 0h1m8 0h2m5 0h1m42 0h1m16 0h1m26 0h1m5 0h1m14 0h1M10 190.5h1m2 0h1m4 0h1m1 0h1m6 0h1m12 0h1m1 0h1m11 0h2m3 0h1m32 0h3m1 0h1m21 0h1m21 0h1m13 0h1m16 0h1m2 0h1m2 0h1m19 0h1M0 191.5h1m19 0h1m22 0h1m10 0h1m8 0h1m7 0h1m1 0h1m9 0h1m26 0h1m27 0h1m5 0h1m4 0h1m7 0h1m15 0h1m12 0h1m4 0h1M13 192.5h1m3 0h1m3 0h1m5 0h1m2 0h1m11 0h1m29 0h1m11 0h1m12 0h1m11 0h1m23 0h3m27 0h1m19 0h1m1 0h1m12 0h1M3 193.5h1m16 0h1m14 0h1m11 0h1m2 0h1m9 0h1m28 0h1m2 0h1m15 0h1m23 0h1m2 0h1m5 0h1m4 0h1m7 0h1m1 0h1m1 0h1m2 0h1m7 0h1m2 0h1m7 0h1m1 0h1m4 0h1m8 0h1m1 0h1M1 194.5h1m24 0h1m6 0h2m5 0h1m10 0h1m2 0h1m2 0h1m13 0h1m17 0h1m11 0h1m8 0h1m4 0h1m2 0h1m4 0h2m5 0h1m4 0h2m1 0h1m6 0h3m2 0h1m1 0h1m8 0h2m4 0h2m2 0h1m8 0h1m4 0h1m11 0h1M4 195.5h1m10 0h1m12 0h1m8 0h2m2 0h1m25 0h1m1 0h1m17 0h1m8 0h3m19 0h1m8 0h1m19 0h2m11 0h1m15 0h1m19 0h1m2 0h1M38 196.5h1m4 0h1m12 0h1m3 0h1m15 0h1m1 0h1m9 0h1m22 0h1m1 0h1m9 0h1m14 0h1m7 0h1m1 0h1m2 0h1m17 0h1m4 0h1m4 0h1m5 0h1m9 0h1M6 197.5h1m10 0h1m6 0h1m10 0h2m9 0h1m17 0h1m2 0h1m8 0h2m3 0h1m16 0h1m8 0h1m10 0h1m10 0h1m8 0h1m13 0h1m2 0h1m16 0h1m2 0h1m3 0h1M8 198.5h1m7 0h1m1 0h1m2 0h1m4 0h1m21 0h1m6 0h2m2 0h1m6 0h1m4 0h1m9 0h1m10 0h1m1 0h1m6 0h1m2 0h1m3 0h3m5 0h1m4 0h1m4 0h2m3 0h1m4 0h1m7 0h1m5 0h1m13 0h1m10 0h1m4 0h2m5 0h1m1 0h2M6 199.5h1m2 0h1m10 0h1m15 0h1m18 0h2m12 0h1m2 0h1m29 0h1m4 0h1m20 0h1m5 0h1m42 0h1m4 0h1m10 0h1"/><path stroke="#ff0500" d="M14 0.5h1m8 0h1m14 0h1m1 0h1m14 0h1m2 0h2m4 0h1m1 0h1m27 0h1m11 0h1m4 0h1m11 0h1m4 0h2m22 0h1m11 0h1m6 0h1m12 0h1m9 0h2M12 1.5h1m6 0h1m3 0h1m4 0h1m1 0h1m19 0h2m7 0h2m6 0h1m2 0h1m7 0h1m36 0h1m4 0h1m1 0h1m15 0h1m2 0h2m2 0h1m18 0h1m30 0h2m2 0h1M2 2.5h1m14 0h1m18 0h1m7 0h1m18 0h1m3 0h1m6 0h1m5 0h1m5 0h1m30 0h2m18 0h1m5 0h1m7 0h1m11 0h1m35 0h1M7 3.5h1m36 0h1m5 0h1m3 0h1m5 0h1m1 0h1m12 0h1m5 0h1m6 0h1m4 0h1m14 0h1m11 0h1m1 0h1m6 0h1m26 0h4m26 0h1m9 0h1M10 4.5h1m44 0h1m18 0h1m4 0h1m8 0h1m7 0h1m8 0h1m8 0h1m4 0h1m3 0h1m5 0h1m22 0h1m2 0h1m14 0h1m3 0h1m2 0h1m7 0h1m12 0h2M18 5.5h1m6 0h1m4 0h1m29 0h1m1 0h1m9 0h1m3 0h1m14 0h1m4 0h2m20 0h1m14 0h1m1 0h1m12 0h1m17 0h1m2 0h1m6 0h1m4 0h1m8 0h1m1 0h1M2 6.5h1m8 0h1m18 0h1m3 0h1m19 0h1m1 0h1m4 0h1m9 0h1m16 0h3m2 0h1m11 0h1m6 0h1m2 0h1m6 0h1m25 0h1m3 0h1m3 0h1m6 0h1m14 0h1m5 0h1m6 0h1m4 0h1M0 7.5h1m12 0h1m6 0h1m16 0h1m17 0h1m7 0h1m15 0h1m13 0h1m22 0h1m8 0h1m2 0h1m4 0h1m6 0h1m9 0h1m14 0h1m14 0h1m7 0h1m6 0h1M41 8.5h1m5 0h2m2 0h1m5 0h1m26 0h1m5 0h1m13 0h1m1 0h2m9 0h1m2 0h2m12 0h1m10 0h1m4 0h1m1 0h1m18 0h1m11 0h1m13 0h1M10 9.5h1m10 0h1m22 0h2m9 0h1m11 0h1m5 0h1m8 0h2m50 0h2m24 0h2m17 0h2m8 0h1m7 0h1m1 0h1M15 10.5h1m2 0h1m9 0h1m9 0h1m12 0h1m7 0h1m10 0h1m13 0h1m18 0h1m33 0h1m4 0h1m7 0h1m2 0h1m3 0h1m7 0h1m8 0h2m12 0h1M3 11.5h1m68 0h1m3 0h1m1 0h1m14 0h1m10 0h1m18 0h1m3 0h1m9 0h1m2 0h1m11 0h1m2 0h1m40 0h1M27 12.5h2m6 0h1m16 0h1m1 0h1m4 0h1m8 0h1m5 0h1m3 0h1m56 0h1m18 0h1m7 0h1m20 0h1M3 13.5h1m6 0h1m9 0h1m5 0h1m7 0h1m10 0h1m1 0h1m5 0h1m24 0h1m6 0h1m54 0h1m3 0h1m15 0h2m4 0h1M4 14.5h1m1 0h1m2 0h1m5 0h1m3 0h1m3 0h1m1 0h1m11 0h1m14 0h1m25 0h2m7 0h2m13 0h1m11 0h1m4 0h1m9 0h1m4 0h1m23 0h1m14 0h2m5 0h1m4 0h1m4 0h1M3 15.5h2m1 0h1m24 0h1m1 0h2m11 0h1m10 0h1m18 0h1m15 0h2m17 0h1m2 0h1m18 0h1m5 0h1m4 0h1m1 0h1m9 0h1m6 0h1m21 0h1m7 0h1M12 16.5h1m17 0h1m9 0h1m28 0h1m7 0h1m12 0h1m16 0h1m1 0h1m1 0h1m2 0h1m2 0h2m3 0h1m11 0h1m18 0h1m1 0h1m4 0h1m1 0h2m8 0h1m11 0h1m5 0h1M2 17.5h1m20 0h2m6 0h1m40 0h2m22 0h1m1 0h1m12 0h1m1 0h1m1 0h1m14 0h1m28 0h1m8 0h1m2 0h1m11 0h1m9 0h1M6 18.5h1m11 0h1m5 0h2m30 0h1m2 0h1m3 0h1m8 0h1m6 0h1m2 0h1m15 0h1m1 0h1m12 0h1m13 0h1m2 0h1m9 0h1m8 0h3m11 0h2m3 0h1m5 0h1m22 0h1M9 19.5h1m17 0h1m5 0h1m24 0h1m26 0h1m4 0h1m8 0h1m9 0h1m3 0h1m12 0h1m16 0h1m10 0h1m15 0h3m16 0h1m2 0h1m3 0h1M10 20.5h1m3 0h1m26 0h1m21 0h1m29 0h1m11 0h1m28 0h1m3 0h1m3 0h1m7 0h1m8 0h1m1 0h1m12 0h1m23 0h1M0 21.5h1m16 0h1m2 0h1m2 0h1m9 0h1m22 0h1m22 0h2m4 0h1m2 0h1m2 0h1m4 0h1m9 0h1m17 0h1m21 0h1m7 0h1m18 0h1m8 0h1m7 0h1M0 22.5h1m10 0h1m1 0h1m12 0h1m7 0h1m1 0h1m1 0h1m10 0h1m25 0h1m8 0h1m8 0h1m2 0h1m8 0h1m7 0h1m1 0h1m15 0h1m17 0h1m5 0h1m4 0h1m22 0h1m4 0h2m5 0h1M3 23.5h1m1 0h1m2 0h1m6 0h1m9 0h1m37 0h1m18 0h1m8 0h1m5 0h1m29 0h1m18 0h1m11 0h1m2 0h1m2 0h1m9 0h1m20 0h1M1 24.5h1m19 0h2m22 0h1m3 0h1m1 0h2m45 0h1m14 0h1m2 0h1m5 0h1m5 0h1m7 0h1m7 0h1m1 0h1m16 0h1m19 0h1m4 0h1m5 0h1M1 25.5h1m13 0h1m15 0h1m22 0h1m9 0h1m17 0h1m4 0h1m1 0h1m22 0h2m10 0h1m9 0h1m15 0h1m11 0h1m10 0h1m1 0h1m12 0h1M6 26.5h1m5 0h1m4 0h1m3 0h1m1 0h1m12 0h1m8 0h1m5 0h1m1 0h1m17 0h1m6 0h1m14 0h1m1 0h1m8 0h1m8 0h1m10 0h1m42 0h1m2 0h1M3 27.5h1m11 0h1m1 0h1m6 0h1m8 0h1m2 0h1m7 0h1m2 0h1m10 0h1m10 0h1m8 0h1m14 0h1m1 0h1m3 0h1m2 0h1m6 0h1m12 0h1m5 0h1m4 0h1m6 0h1m1 0h1m51 0h1m4 0h1M3 28.5h2m10 0h1m11 0h1m6 0h1m14 0h1m2 0h1m2 0h1m29 0h2m10 0h1m6 0h1m17 0h1m8 0h1m2 0h1m9 0h1m6 0h1m6 0h1m8 0h1m17 0h1m4 0h1m5 0h1M4 29.5h2m6 0h1m23 0h1m3 0h1m6 0h1m16 0h1m9 0h1m1 0h2m6 0h1m9 0h1m33 0h1m3 0h1m2 0h1m5 0h1m26 0h1m6 0h1m8 0h1m2 0h1m9 0h1M3 30.5h2m10 0h1m8 0h1m5 0h2m35 0h1m11 0h1m6 0h3m6 0h1m3 0h1m9 0h1m4 0h2m13 0h1m1 0h1m1 0h1m11 0h1m5 0h2m10 0h1m27 0h1M0 31.5h1m10 0h1m2 0h1m1 0h1m4 0h1m5 0h1m32 0h1m11 0h1m10 0h1m4 0h1m25 0h1m3 0h1m11 0h1m5 0h1m9 0h1m15 0h1m2 0h1m1 0h1m7 0h1m12 0h1m1 0h1m6 0h1m1 0h1M0 32.5h1m5 0h1m11 0h1m2 0h1m2 0h1m8 0h1m6 0h1m7 0h1m1 0h1m12 0h1m3 0h1m10 0h1m7 0h1m3 0h1m2 0h1m13 0h1m14 0h1m1 0h1m12 0h1m12 0h1m15 0h1m6 0h1m12 0h1M1 33.5h1m1 0h1m3 0h1m4 0h1m3 0h1m57 0h1m6 0h1m1 0h1m8 0h1m5 0h1m4 0h1m10 0h2m7 0h1m34 0h1m24 0h2m9 0h1m1 0h1M19 34.5h1m13 0h1m10 0h1m1 0h1m5 0h1m6 0h1m1 0h1m2 0h1m3 0h1m9 0h1m7 0h1m3 0h2m2 0h1m3 0h1m4 0h1m4 0h1m1 0h1m9 0h1m5 0h1m2 0h1m25 0h2m1 0h1m4 0h1m3 0h1m15 0h1m4 0h1m5 0h1M0 35.5h1m13 0h1m20 0h1m9 0h1m9 0h1m3 0h2m1 0h1m3 0h1m15 0h1m4 0h2m30 0h1m16 0h1m6 0h1m1 0h2m12 0h1m6 0h1m19 0h1m2 0h1M7 36.5h2m21 0h1m3 0h1m11 0h1m26 0h1m2 0h1m14 0h1m27 0h1m14 0h1m11 0h1m8 0h1m5 0h1m9 0h1m6 0h1m6 0h1M2 37.5h1m6 0h1m1 0h1m6 0h2m8 0h1m5 0h1m4 0h1m4 0h1m11 0h1m22 0h1m2 0h1m3 0h1m4 0h1m11 0h1m1 0h1m5 0h1m2 0h1m3 0h1m12 0h1m4 0h1m11 0h1m22 0h1m17 0h1m9 0h1M2 38.5h1m22 0h2m1 0h1m1 0h2m15 0h1m9 0h1m16 0h1m1 0h1m3 0h1m3 0h1m13 0h1m8 0h2m4 0h1m12 0h1m33 0h1m3 0h1m2 0h1m6 0h1m11 0h2M6 39.5h1m6 0h1m5 0h2m7 0h2m2 0h1m5 0h1m3 0h1m1 0h1m5 0h1m14 0h1m2 0h1m18 0h1m3 0h1m7 0h1m8 0h1m1 0h1m26 0h1m5 0h2m2 0h1m6 0h1m23 0h1m15 0h1m4 0h1M18 40.5h1m22 0h1m12 0h1m18 0h1m27 0h1m10 0h1m19 0h1m12 0h1m14 0h1m3 0h1m2 0h1m10 0h1m13 0h1m5 0h1M1 41.5h1m11 0h1m4 0h1m13 0h1m13 0h2m21 0h1m5 0h1m13 0h1m9 0h1m2 0h2m4 0h2m3 0h1m4 0h1m1 0h1m1 0h1m15 0h1m10 0h1m2 0h1m9 0h1m17 0h1M8 42.5h1m2 0h1m13 0h1m2 0h2m1 0h1m2 0h1m10 0h1m5 0h1m24 0h1m9 0h1m19 0h1m20 0h2m3 0h1m3 0h1m3 0h1m9 0h1m4 0h2m15 0h1m3 0h1m13 0h1M5 43.5h1m8 0h1m8 0h1m1 0h1m7 0h1m5 0h1m8 0h1m21 0h2m1 0h1m18 0h1m8 0h1m5 0h1m2 0h1m4 0h1m4 0h1m11 0h1m4 0h2m6 0h1m4 0h1m1 0h1m1 0h1m16 0h1m22 0h1m4 0h1M3 44.5h1m6 0h1m12 0h1m7 0h1m3 0h1m2 0h1m12 0h1m15 0h1m20 0h1m12 0h1m17 0h1m2 0h1m18 0h1m10 0h1m17 0h2m2 0h1m8 0h1m7 0h1M0 45.5h1m10 0h1m15 0h1m16 0h1m8 0h1m3 0h1m1 0h1m8 0h1m4 0h1m15 0h3m12 0h1m10 0h1m2 0h1m4 0h1m1 0h1m1 0h1m6 0h2m2 0h1m13 0h1m10 0h5m1 0h1m3 0h1m1 0h2m9 0h1M18 46.5h1m4 0h1m1 0h1m1 0h1m29 0h1m5 0h1m6 0h1m13 0h1m4 0h1m3 0h2m4 0h1m30 0h2m22 0h1m7 0h2m5 0h1m7 0h1m1 0h1m4 0h1m11 0h1M15 47.5h1m18 0h1m8 0h1m14 0h3m3 0h1m3 0h1m22 0h1m5 0h1m32 0h1m3 0h1m9 0h1m22 0h1m4 0h1m13 0h1m7 0h2M1 48.5h1m3 0h1m14 0h1m3 0h1m9 0h1m9 0h1m20 0h1m4 0h1m1 0h1m6 0h1m1 0h2m17 0h2m9 0h1m3 0h1m2 0h1m5 0h1m11 0h1m5 0h2m10 0h1m1 0h1m14 0h1m18 0h1m3 0h1m3 0h1M10 49.5h1m2 0h1m3 0h1m8 0h1m35 0h2m5 0h1m2 0h1m4 0h1m7 0h1m25 0h2m16 0h1m14 0h1m1 0h1m12 0h1m8 0h1m4 0h1m5 0h1M7 50.5h1m8 0h1m3 0h1m4 0h1m31 0h1m2 0h1m23 0h1m2 0h1m10 0h1m4 0h1m5 0h1m7 0h1m12 0h1m7 0h1m4 0h1m41 0h1m10 0h1M10 51.5h1m15 0h1m48 0h1m2 0h1m18 0h2m1 0h2m8 0h2m9 0h1m17 0h1m10 0h1m3 0h2m6 0h1m14 0h1m10 0h1m1 0h1M4 52.5h1m22 0h1m4 0h1m6 0h1m18 0h1m1 0h1m6 0h1m1 0h1m8 0h1m28 0h1m12 0h1m13 0h1m1 0h1m29 0h1M0 53.5h1m28 0h1m12 0h1m3 0h1m19 0h1m2 0h1m18 0h1m4 0h1m16 0h1m3 0h1m5 0h2m4 0h1m4 0h1m17 0h1m10 0h1m13 0h1m8 0h1m6 0h1m4 0h1M0 54.5h1m6 0h2m6 0h1m5 0h1m22 0h1m25 0h1m17 0h1m5 0h1m5 0h1m8 0h1m1 0h1m16 0h1m4 0h1m20 0h2m2 0h1m5 0h2m1 0h1m4 0h1m14 0h1M4 55.5h1m1 0h1m15 0h1m3 0h1m6 0h1m4 0h1m25 0h1m9 0h2m7 0h1m11 0h2m3 0h1m17 0h1m15 0h1m4 0h1m3 0h1m8 0h1m3 0h1m9 0h1m3 0h1m7 0h1m11 0h1m3 0h1m4 0h1M2 56.5h1m29 0h1m5 0h1m14 0h1m11 0h1m8 0h1m4 0h3m8 0h1m12 0h1m16 0h1m45 0h1m7 0h2M4 57.5h1m7 0h1m5 0h2m2 0h1m20 0h1m31 0h1m1 0h1m2 0h1m6 0h1m16 0h2m3 0h1m2 0h1m3 0h1m8 0h1m3 0h1m9 0h1m3 0h1m8 0h1m9 0h1m5 0h2m4 0h1m5 0h2m5 0h1m7 0h1M43 58.5h3m5 0h1m1 0h1m3 0h1m1 0h2m8 0h1m24 0h1m4 0h1m10 0h1m18 0h1m4 0h1m2 0h1m6 0h1m11 0h2m2 0h1m11 0h1m1 0h2m9 0h1M18 59.5h1m20 0h2m16 0h1m6 0h1m29 0h2m41 0h1m16 0h1m1 0h1m11 0h1m28 0h1M3 60.5h1m1 0h1m21 0h1m5 0h1m5 0h1m10 0h1m2 0h1m19 0h1m7 0h1m11 0h1m3 0h1m15 0h1m20 0h1m1 0h1m7 0h1m6 0h1m9 0h1m5 0h1m2 0h1m3 0h1m18 0h1M20 61.5h1m9 0h1m6 0h1m5 0h1m2 0h1m4 0h2m1 0h1m6 0h1m12 0h1m6 0h1m5 0h1m1 0h1m19 0h1m18 0h1m11 0h1m30 0h1m3 0h1m6 0h1m7 0h2m2 0h2M2 62.5h1m14 0h1m7 0h1m3 0h1m7 0h1m3 0h1m5 0h1m17 0h1m4 0h1m35 0h1m12 0h1m1 0h1m14 0h1m4 0h1m18 0h1m2 0h1m10 0h1m19 0h1M9 63.5h1m2 0h1m16 0h1m27 0h1m2 0h1m8 0h1m14 0h1m10 0h1m12 0h1m7 0h1m5 0h1m3 0h1m8 0h1m2 0h1m3 0h1M4 64.5h1m6 0h1m1 0h1m17 0h1m12 0h1m12 0h2m15 0h1m24 0h1m4 0h1m25 0h1m1 0h1m22 0h1m8 0h1m2 0h1m4 0h1m15 0h1M4 65.5h1m8 0h1m4 0h1m6 0h1m9 0h1m3 0h1m3 0h1m4 0h1m5 0h1m13 0h1m17 0h1m18 0h2m6 0h1m3 0h1m12 0h1m7 0h1m22 0h1m2 0h1m1 0h1m4 0h2m1 0h1m3 0h1m15 0h1M15 66.5h1m5 0h1m19 0h1m11 0h1m21 0h1m30 0h1m17 0h1m6 0h1m2 0h1m1 0h1m4 0h1m13 0h1m9 0h1m4 0h1m7 0h1m3 0h2m5 0h1m2 0h1M2 67.5h1m12 0h1m5 0h1m3 0h2m17 0h1m2 0h1m11 0h2m12 0h2m1 0h1m2 0h1m7 0h2m5 0h1m32 0h1m7 0h1m14 0h1m2 0h1m21 0h2m6 0h1m7 0h1M2 68.5h1m15 0h2m9 0h1m4 0h2m23 0h1m6 0h1m4 0h1m10 0h2m9 0h1m1 0h2m1 0h1m6 0h1m7 0h1m5 0h1m1 0h1m2 0h1m9 0h1m10 0h1m15 0h1m5 0h1m19 0h1m6 0h1m1 0h1M9 69.5h1m4 0h2m2 0h1m4 0h2m7 0h1m8 0h1m5 0h2m12 0h1m3 0h1m14 0h1m42 0h2m13 0h1m5 0h1m1 0h1m4 0h1m2 0h1m5 0h1m16 0h1m19 0h1M0 70.5h1m26 0h1m2 0h1m33 0h1m8 0h1m7 0h1m1 0h1m2 0h1m4 0h2m35 0h1m2 0h1m3 0h1m2 0h2m15 0h1m4 0h1m4 0h1m12 0h1m11 0h1m3 0h1M13 71.5h1m2 0h1m5 0h1m9 0h1m12 0h1m8 0h1m27 0h1m1 0h1m1 0h1m18 0h1m14 0h1m25 0h1m14 0h1m1 0h1m4 0h1M1 72.5h3m7 0h1m9 0h1m17 0h1m2 0h1m3 0h1m4 0h1m11 0h1m13 0h1m13 0h1m4 0h1m5 0h1m3 0h2m2 0h1m15 0h1m3 0h2m8 0h1m16 0h1m1 0h1m8 0h1m7 0h1m6 0h1m1 0h1M10 73.5h2m4 0h1m41 0h1m5 0h1m6 0h1m66 0h1m2 0h1m25 0h1M1 74.5h1m15 0h1m8 0h1m2 0h1m13 0h1m19 0h1m17 0h1m4 0h1m1 0h1m31 0h1m7 0h1m25 0h1m2 0h1m5 0h1m10 0h1m5 0h1m2 0h1m8 0h1M6 75.5h1m6 0h1m6 0h2m7 0h1m8 0h1m10 0h1m1 0h1m13 0h1m2 0h1m4 0h1m9 0h1m10 0h1m2 0h1m12 0h1m3 0h1m18 0h1m6 0h1m22 0h1m4 0h2m23 0h2m1 0h1M26 76.5h1m7 0h1m13 0h1m11 0h1m8 0h1m1 0h1m12 0h1m8 0h1m1 0h1m5 0h1m22 0h2m5 0h1m16 0h1m7 0h1m17 0h1m1 0h1m4 0h1m2 0h1M0 77.5h1m4 0h1m2 0h1m4 0h1m2 0h1m3 0h1m1 0h2m21 0h1m1 0h1m4 0h1m16 0h1m2 0h1m6 0h1m11 0h1m2 0h1m9 0h2m31 0h1m14 0h2m7 0h1m14 0h1m10 0h1m4 0h1M3 78.5h1m8 0h1m13 0h1m1 0h1m1 0h1m13 0h1m3 0h1m14 0h1m1 0h1m8 0h1m4 0h1m17 0h1m12 0h1m4 0h1m18 0h2m6 0h2m7 0h2m5 0h1m3 0h1m13 0h1m1 0h1m12 0h1M6 79.5h1m4 0h1m16 0h1m8 0h1m7 0h1m13 0h1m6 0h1m1 0h1m14 0h2m7 0h1m6 0h1m3 0h1m10 0h1m10 0h1m12 0h2m6 0h1m8 0h2m8 0h1m10 0h2m1 0h2m9 0h1M31 80.5h1m5 0h1m15 0h1m5 0h1m5 0h1m8 0h2m6 0h1m9 0h1m9 0h1m18 0h1m10 0h1m1 0h1m5 0h1m1 0h1m4 0h1m4 0h1m25 0h1m6 0h1m5 0h1m3 0h1M0 81.5h1m4 0h1m20 0h1m8 0h1m1 0h1m13 0h1m8 0h1m5 0h1m6 0h1m1 0h1m7 0h1m3 0h1m12 0h1m4 0h1m24 0h1m12 0h1m10 0h1m30 0h1m6 0h1M2 82.5h2m1 0h2m1 0h3m20 0h1m3 0h1m1 0h1m10 0h1m15 0h2m31 0h1m3 0h1m2 0h2m16 0h1m3 0h1m8 0h1m13 0h1m2 0h1m6 0h1m1 0h1m1 0h1m15 0h2m2 0h1m1 0h1m5 0h2m5 0h2M0 83.5h1m6 0h1m1 0h1m10 0h1m34 0h1m1 0h1m4 0h1m17 0h1m1 0h1m13 0h1m17 0h2m1 0h1m13 0h1m7 0h1m4 0h1m7 0h1m17 0h1m2 0h1m3 0h1m6 0h1M16 84.5h1m23 0h1m4 0h1m21 0h1m13 0h1m5 0h1m8 0h1m4 0h1m1 0h1m1 0h1m3 0h1m2 0h1m2 0h1m34 0h1m9 0h1m3 0h1m14 0h1m3 0h1m2 0h1m2 0h1m2 0h1m1 0h1M22 85.5h1m6 0h1m1 0h1m1 0h1m5 0h1m10 0h2m4 0h2m17 0h1m3 0h1m26 0h1m7 0h1m14 0h1m14 0h1m11 0h1m11 0h1m4 0h1m9 0h1m7 0h1m2 0h1m3 0h1M0 86.5h1m1 0h1m3 0h1m4 0h1m26 0h1m1 0h1m4 0h1m11 0h1m4 0h2m21 0h1m1 0h1m1 0h1m3 0h1m5 0h1m20 0h1m3 0h1m11 0h1m11 0h1m4 0h1m11 0h1m25 0h1m5 0h1M6 87.5h1m2 0h1m10 0h2m2 0h1m10 0h1m21 0h1m3 0h1m8 0h1m6 0h1m5 0h1m5 0h1m5 0h1m13 0h1m8 0h1m3 0h1m5 0h2m10 0h2m9 0h1m2 0h1m1 0h1m1 0h1m15 0h1m18 0h1M5 88.5h1m1 0h1m13 0h1m38 0h2m3 0h1m1 0h1m5 0h1m13 0h1m2 0h1m5 0h1m5 0h1m3 0h3m1 0h1m24 0h1m11 0h1m13 0h2m19 0h1m4 0h2m6 0h1M4 89.5h1m4 0h1m1 0h1m40 0h1m3 0h1m3 0h1m4 0h1m18 0h1m2 0h1m11 0h2m16 0h1m9 0h1m4 0h1m6 0h1m2 0h1m3 0h1m22 0h1m4 0h1m7 0h1m16 0h1M14 90.5h1m1 0h1m9 0h2m11 0h1m9 0h1m22 0h1m5 0h1m3 0h1m2 0h1m6 0h2m26 0h1m8 0h1m1 0h1m32 0h1M1 91.5h1m13 0h1m14 0h1m8 0h1m31 0h2m1 0h1m3 0h1m7 0h2m5 0h1m1 0h1m3 0h1m16 0h1m9 0h1m4 0h1m7 0h1m5 0h1m25 0h1m1 0h1m3 0h1m9 0h1M3 92.5h1m75 0h1m2 0h1m1 0h1m2 0h1m4 0h1m11 0h1m2 0h1m41 0h1m1 0h1m16 0h1m8 0h1m9 0h1m7 0h1M2 93.5h1m4 0h1m9 0h1m20 0h1m8 0h1m2 0h1m23 0h1m5 0h2m14 0h1m4 0h1m14 0h1m1 0h1m12 0h1m7 0h1m7 0h2m15 0h1m26 0h1M8 94.5h1m26 0h1m1 0h1m8 0h1m3 0h2m5 0h1m1 0h1m3 0h1m23 0h1m6 0h1m4 0h1m14 0h1m1 0h1m13 0h2m3 0h1m19 0h1m7 0h1m8 0h1m4 0h1m2 0h1m8 0h1m9 0h1M11 95.5h1m3 0h1m12 0h2m12 0h1m4 0h1m2 0h1m13 0h1m13 0h2m54 0h1m4 0h1m38 0h1m4 0h1m4 0h2m8 0h2M0 96.5h1m17 0h1m1 0h1m1 0h1m11 0h2m4 0h1m3 0h1m8 0h1m12 0h1m1 0h1m11 0h1m7 0h1m11 0h1m6 0h1m10 0h1m7 0h1m7 0h1m7 0h1m1 0h2m3 0h1m3 0h1m1 0h1m9 0h1m15 0h1m1 0h1m3 0h1m7 0h1M26 97.5h1m17 0h1m7 0h1m13 0h1m13 0h1m3 0h1m29 0h1m6 0h1m20 0h1m5 0h1m10 0h1m10 0h2m7 0h1m8 0h1m3 0h2M28 98.5h1m2 0h1m2 0h1m1 0h1m20 0h1m2 0h1m10 0h2m1 0h1m5 0h1m24 0h1m15 0h1m17 0h2m3 0h2m4 0h1m2 0h1m1 0h1m10 0h1m23 0h1M14 99.5h1m20 0h1m1 0h1m3 0h1m2 0h1m2 0h1m5 0h1m1 0h1m5 0h1m15 0h1m34 0h1m22 0h1m16 0h1m5 0h3m9 0h1m9 0h1m6 0h1m2 0h1m8 0h1M6 100.5h1m8 0h1m10 0h1m4 0h1m12 0h1m5 0h1m43 0h1m21 0h1m11 0h1m4 0h1m17 0h1m41 0h1M7 101.5h1m4 0h1m7 0h1m3 0h1m4 0h1m6 0h1m6 0h1m10 0h1m9 0h1m1 0h1m42 0h1m31 0h1m18 0h1m15 0h1M16 102.5h1m10 0h1m11 0h1m12 0h1m3 0h1m2 0h1m1 0h1m2 0h1m3 0h1m3 0h1m20 0h1m4 0h1m20 0h2m13 0h1m6 0h1m20 0h1m23 0h1m7 0h1m4 0h1M14 103.5h1m14 0h1m20 0h1m9 0h1m2 0h2m17 0h2m24 0h1m13 0h1m25 0h1m4 0h1m19 0h1m4 0h2m9 0h1m2 0h1m5 0h1M6 104.5h1m12 0h1m8 0h2m6 0h1m12 0h1m19 0h1m16 0h1m2 0h1m2 0h1m5 0h1m11 0h1m11 0h1m4 0h1m19 0h1m5 0h1m37 0h1M23 105.5h1m4 0h1m21 0h1m2 0h1m19 0h1m18 0h1m33 0h1m1 0h1m22 0h1m5 0h1m6 0h1m6 0h1m3 0h1m2 0h1m1 0h1m5 0h1m4 0h1M19 106.5h1m12 0h1m37 0h1m7 0h1m12 0h1m15 0h1m8 0h1m3 0h1m4 0h1m36 0h1m2 0h1m21 0h2m8 0h1M5 107.5h1m7 0h1m1 0h1m6 0h1m10 0h2m6 0h1m4 0h1m1 0h1m8 0h1m2 0h1m16 0h1m1 0h1m6 0h1m11 0h1m9 0h1m7 0h1m3 0h1m1 0h2m2 0h1m3 0h1m25 0h1m15 0h2m14 0h1m1 0h1m2 0h1m4 0h1M5 108.5h1m9 0h1m6 0h1m9 0h1m12 0h1m8 0h1m17 0h1m10 0h1m24 0h1m5 0h1m3 0h1m4 0h1m3 0h1m5 0h1m7 0h1m23 0h1m6 0h1M4 109.5h1m9 0h1m2 0h1m19 0h1m6 0h1m2 0h1m1 0h1m21 0h1m2 0h1m11 0h1m2 0h1m15 0h1m8 0h1m3 0h1m15 0h1m21 0h1m6 0h1m4 0h1m3 0h1m6 0h1m11 0h2m3 0h1M6 110.5h1m1 0h1m13 0h2m2 0h2m16 0h1m18 0h1m3 0h1m9 0h1m23 0h1m6 0h1m10 0h1m10 0h1m6 0h1m8 0h2m2 0h1m2 0h1m25 0h1m9 0h1M7 111.5h1m4 0h1m10 0h1m9 0h1m7 0h1m17 0h1m15 0h1m15 0h1m2 0h1m2 0h1m5 0h1m2 0h1m29 0h1m10 0h1m20 0h1m3 0h1m26 0h1M4 112.5h1m4 0h1m18 0h1m27 0h1m15 0h1m1 0h1m6 0h2m2 0h1m5 0h1m9 0h1m19 0h1m8 0h1m46 0h1m8 0h3m8 0h1M5 113.5h1m7 0h1m8 0h1m41 0h1m13 0h1m28 0h1m3 0h2m5 0h1m21 0h2m1 0h1m1 0h1m1 0h1m7 0h1m2 0h2m1 0h1m2 0h1m10 0h1m15 0h1M7 114.5h1m8 0h1m1 0h1m7 0h2m3 0h1m5 0h1m5 0h1m9 0h1m9 0h1m11 0h1m26 0h1m12 0h1m9 0h1m24 0h1m3 0h1m7 0h1M2 115.5h1m14 0h1m7 0h1m4 0h1m22 0h1m12 0h1m6 0h2m25 0h2m2 0h1m13 0h1m12 0h1m7 0h1m2 0h1m5 0h1m20 0h1m9 0h1M3 116.5h1m14 0h2m18 0h1m13 0h1m14 0h1m9 0h1m11 0h1m22 0h1m1 0h2m16 0h2m7 0h1m2 0h1m4 0h1m6 0h1m2 0h1m10 0h4m1 0h1m4 0h1M3 117.5h1m4 0h1m6 0h1m3 0h1m30 0h1m5 0h1m14 0h1m7 0h1m19 0h2m3 0h1m5 0h1m13 0h1m3 0h2m5 0h2m3 0h1m12 0h2m28 0h1m3 0h1m2 0h1m5 0h1M22 118.5h1m4 0h3m7 0h2m2 0h2m8 0h1m10 0h1m10 0h1m1 0h2m7 0h1m16 0h1m5 0h1m1 0h1m9 0h1m14 0h1m7 0h1m1 0h1m4 0h1m4 0h1m4 0h1m16 0h1m1 0h2m19 0h1M5 119.5h1m2 0h1m1 0h1m39 0h2m2 0h1m9 0h1m18 0h1m12 0h1m6 0h1m40 0h1m16 0h1m1 0h1m3 0h1m14 0h1M1 120.5h1m2 0h1m14 0h1m3 0h1m7 0h1m20 0h1m2 0h2m2 0h2m14 0h1m5 0h1m54 0h1m1 0h1m2 0h1m11 0h1m9 0h1m5 0h1m11 0h1m11 0h1m5 0h1M12 121.5h1m6 0h1m1 0h1m7 0h4m12 0h1m4 0h1m40 0h1m12 0h1m7 0h1m11 0h1m6 0h1m2 0h2m4 0h1m2 0h1m7 0h1m7 0h1m2 0h1m20 0h1m1 0h2m2 0h1m7 0h1M4 122.5h1m2 0h1m10 0h1m17 0h1m10 0h1m2 0h1m3 0h1m8 0h1m4 0h2m24 0h1m3 0h1m31 0h1m4 0h1m10 0h1m2 0h1m3 0h1m26 0h1m7 0h1m5 0h1M1 123.5h1m10 0h1m21 0h1m28 0h1m4 0h1m10 0h2m2 0h1m15 0h1m17 0h1m11 0h1m3 0h1m2 0h1m6 0h1m6 0h2m4 0h1m14 0h1m16 0h1m1 0h1m7 0h1M2 124.5h1m5 0h1m6 0h1m8 0h1m10 0h2m6 0h2m21 0h2m8 0h1m12 0h1m10 0h1m17 0h1m5 0h1m10 0h1m8 0h1m1 0h1m20 0h2m3 0h1m8 0h1m11 0h1M11 125.5h1m11 0h1m12 0h2m4 0h1m7 0h1m8 0h1m27 0h1m3 0h1m6 0h1m7 0h1m3 0h1m6 0h1m3 0h2m14 0h1m4 0h1m12 0h1m2 0h1m12 0h1m11 0h2m6 0h2m6 0h1M0 126.5h1m15 0h1m11 0h1m6 0h1m7 0h1m6 0h1m1 0h1m7 0h1m7 0h1m6 0h1m31 0h2m12 0h1m5 0h1m5 0h1m21 0h1m7 0h1m1 0h1m3 0h1m1 0h1m10 0h2m1 0h1m4 0h1M6 127.5h1m1 0h1m1 0h1m9 0h2m2 0h1m8 0h1m7 0h1m2 0h1m12 0h1m10 0h2m6 0h1m22 0h1m2 0h1m1 0h1m9 0h1m8 0h1m12 0h1m3 0h1m2 0h1m25 0h1m9 0h1m9 0h2m6 0h1M34 128.5h1m1 0h1m5 0h1m17 0h1m16 0h1m4 0h2m17 0h1m17 0h1m3 0h1m4 0h1m2 0h1m21 0h1m5 0h1m16 0h1m7 0h1M3 129.5h1m11 0h1m19 0h1m6 0h1m3 0h3m11 0h2m3 0h1m15 0h1m6 0h1m5 0h1m19 0h1m9 0h1m11 0h1m1 0h1m9 0h1m46 0h1m3 0h1M0 130.5h1m13 0h1m6 0h1m5 0h1m3 0h2m3 0h2m4 0h1m6 0h1m6 0h1m4 0h1m2 0h2m15 0h2m9 0h1m9 0h1m7 0h1m11 0h1m5 0h2m10 0h1m14 0h1m6 0h2m16 0h1m4 0h1m3 0h1m2 0h1m1 0h1M33 131.5h1m5 0h1m2 0h1m13 0h1m4 0h2m21 0h1m5 0h1m7 0h2m1 0h1m7 0h1m2 0h1m3 0h1m4 0h1m2 0h2m7 0h1m2 0h1m4 0h1m10 0h1m6 0h1m38 0h1M0 132.5h1m20 0h1m27 0h1m23 0h1m27 0h1m4 0h1m5 0h1m7 0h2m3 0h1m17 0h1m13 0h1m8 0h1m1 0h1m29 0h2M0 133.5h1m15 0h1m12 0h1m7 0h1m14 0h1m1 0h1m3 0h1m5 0h1m10 0h1m10 0h1m4 0h2m14 0h2m3 0h2m3 0h1m13 0h1m8 0h1m4 0h1m11 0h1m2 0h1m5 0h1M26 134.5h1m5 0h2m15 0h1m5 0h1m13 0h1m11 0h1m5 0h1m29 0h1m7 0h2m18 0h1m5 0h2m15 0h1m10 0h1m12 0h1m4 0h1M2 135.5h1m24 0h1m8 0h1m9 0h1m4 0h1m4 0h2m8 0h1m10 0h1m13 0h1m19 0h1m13 0h1m9 0h1m18 0h1m9 0h1m2 0h1m1 0h2m16 0h2m5 0h1m2 0h1M2 136.5h1m2 0h1m6 0h1m5 0h2m16 0h1m5 0h1m9 0h1m3 0h2m5 0h1m1 0h1m13 0h1m13 0h2m8 0h1m5 0h1m1 0h1m2 0h1m4 0h1m1 0h1m14 0h1m5 0h1m1 0h1m1 0h2m17 0h2m1 0h1m4 0h1m7 0h1m1 0h1m6 0h1m8 0h1M0 137.5h1m9 0h1m3 0h1m4 0h1m7 0h1m8 0h1m52 0h1m1 0h1m5 0h1m6 0h1m25 0h1m1 0h1m21 0h1m7 0h1m4 0h1m8 0h1M24 138.5h1m13 0h1m38 0h1m6 0h2m10 0h2m4 0h1m11 0h1m11 0h1m1 0h1m50 0h1m13 0h1M3 139.5h1m10 0h1m9 0h1m42 0h1m17 0h1m13 0h1m10 0h1m20 0h1m2 0h1m32 0h1m29 0h1M5 140.5h2m4 0h1m20 0h1m12 0h1m2 0h2m13 0h1m3 0h1m21 0h1m19 0h1m9 0h1m5 0h1m3 0h1m10 0h1m7 0h1m10 0h1m10 0h1m1 0h1m2 0h1m12 0h2m3 0h1m1 0h1M3 141.5h1m1 0h1m3 0h1m7 0h1m6 0h1m15 0h1m2 0h1m9 0h1m9 0h1m11 0h1m16 0h1m3 0h1m13 0h1m1 0h1m11 0h1m19 0h1m25 0h1m8 0h1m7 0h1m11 0h1M19 142.5h1m1 0h1m4 0h1m36 0h2m1 0h1m10 0h1m1 0h1m18 0h1m50 0h1m2 0h1m31 0h1M5 143.5h1m5 0h1m1 0h1m10 0h1m1 0h1m4 0h1m18 0h1m11 0h1m8 0h1m31 0h1m14 0h1m19 0h1m28 0h1m5 0h1m4 0h1m16 0h1M6 144.5h1m5 0h1m11 0h1m2 0h1m1 0h1m3 0h1m18 0h1m53 0h1m6 0h1m20 0h3m19 0h2m21 0h1m13 0h1M39 145.5h1m3 0h3m7 0h1m8 0h1m10 0h1m3 0h1m13 0h1m5 0h1m29 0h1m26 0h1m7 0h1m2 0h1m1 0h1m2 0h1m16 0h1m6 0h1m3 0h1M2 146.5h1m3 0h1m3 0h1m9 0h1m1 0h1m2 0h1m4 0h1m16 0h2m2 0h2m9 0h1m9 0h2m28 0h1m12 0h1m16 0h1m3 0h1m12 0h2m5 0h1m11 0h1m2 0h1m4 0h1m1 0h1m10 0h1m4 0h1M1 147.5h1m12 0h1m1 0h1m8 0h1m3 0h1m4 0h1m6 0h1m16 0h1m6 0h1m12 0h1m5 0h1m9 0h1m1 0h1m10 0h1m4 0h1m2 0h1m4 0h1m6 0h1m2 0h1m31 0h1m4 0h1m2 0h1m16 0h1M10 148.5h1m22 0h1m3 0h1m2 0h2m9 0h1m12 0h1m22 0h1m26 0h1m7 0h1m47 0h1m8 0h1m4 0h1m4 0h1M0 149.5h1m14 0h1m59 0h1m10 0h1m8 0h1m3 0h1m20 0h1m27 0h1m2 0h1m38 0h1m2 0h1M0 150.5h1m17 0h1m14 0h1m21 0h1m13 0h1m1 0h1m44 0h2m21 0h1m1 0h1m2 0h1m4 0h1m1 0h1m5 0h2m4 0h1m4 0h1m7 0h1m15 0h1m4 0h1M13 151.5h1m9 0h1m7 0h1m13 0h1m2 0h1m16 0h1m18 0h1m4 0h2m6 0h1m13 0h1m6 0h1m8 0h1m21 0h1m15 0h1m2 0h1m7 0h1m4 0h1m5 0h1m3 0h1m6 0h1M31 152.5h1m6 0h1m2 0h1m5 0h2m2 0h1m13 0h1m4 0h1m1 0h1m25 0h1m2 0h1m22 0h1m10 0h1m18 0h1m10 0h1m6 0h1m17 0h2M4 153.5h1m14 0h1m7 0h2m1 0h1m16 0h1m11 0h1m1 0h1m65 0h1m11 0h1m6 0h1m21 0h1m2 0h1M64 154.5h1m6 0h1m39 0h1m12 0h1m18 0h1m3 0h2m15 0h1m1 0h1m10 0h1m4 0h1m3 0h1M1 155.5h2m15 0h1m33 0h2m3 0h1m8 0h1m1 0h1m10 0h1m16 0h1m4 0h1m36 0h1m2 0h1m7 0h1m8 0h2m4 0h1m2 0h2m2 0h1m9 0h2m9 0h1M5 156.5h2m1 0h1m2 0h1m19 0h1m10 0h1m3 0h1m2 0h1m22 0h1m1 0h1m9 0h1m1 0h1m4 0h1m36 0h1m14 0h1m13 0h1m1 0h1m14 0h1m14 0h1m2 0h1m3 0h1M2 157.5h1m12 0h1m20 0h1m1 0h1m7 0h1m3 0h1m3 0h1m1 0h1m23 0h1m8 0h1m7 0h1m3 0h2m40 0h1m3 0h1m14 0h3m20 0h1m1 0h1m3 0h1M2 158.5h1m41 0h1m20 0h1m2 0h1m10 0h1m17 0h1m14 0h1m9 0h1m31 0h1m21 0h1m7 0h1m1 0h2M6 159.5h1m33 0h1m8 0h1m3 0h1m12 0h1m14 0h1m18 0h1m5 0h1m7 0h1m20 0h1m12 0h1m2 0h1m5 0h1m9 0h1m16 0h1m2 0h1M11 160.5h1m9 0h1m13 0h1m7 0h1m4 0h1m16 0h1m7 0h1m19 0h1m1 0h1m4 0h1m22 0h1m1 0h1m2 0h1m24 0h1m1 0h1m16 0h1M3 161.5h1m13 0h1m1 0h1m6 0h1m12 0h1m3 0h1m4 0h1m16 0h1m6 0h1m12 0h1m3 0h1m3 0h1m15 0h1m7 0h1m2 0h1m9 0h1m15 0h1m15 0h1m2 0h2m6 0h1m19 0h1m2 0h1M6 162.5h1m7 0h1m18 0h2m4 0h1m1 0h1m18 0h1m6 0h1m31 0h1m10 0h1m1 0h1m12 0h1m10 0h1m1 0h1m9 0h1m12 0h1m1 0h2m8 0h1m16 0h1M2 163.5h2m12 0h1m1 0h1m21 0h1m16 0h1m6 0h1m5 0h1m4 0h1m1 0h1m2 0h1m4 0h1m22 0h1m4 0h1m7 0h1m2 0h1m11 0h1m14 0h1m25 0h2m5 0h1M2 164.5h1m13 0h1m35 0h1m4 0h1m5 0h1m11 0h1m13 0h1m3 0h2m19 0h2m14 0h1m12 0h1m41 0h1m4 0h1M1 165.5h1m1 0h1m34 0h1m11 0h1m2 0h2m4 0h1m8 0h1m1 0h1m37 0h1m4 0h1m7 0h1m3 0h1m9 0h1m7 0h1m26 0h1m3 0h1m2 0h1m3 0h1m12 0h1M1 166.5h1m4 0h2m2 0h1m1 0h1m9 0h1m6 0h1m3 0h1m2 0h1m10 0h1m3 0h1m20 0h1m6 0h1m5 0h1m12 0h1m2 0h1m9 0h1m12 0h1m5 0h1m8 0h1m6 0h1m12 0h1m10 0h1m19 0h1m3 0h2M5 167.5h1m25 0h1m7 0h1m7 0h1m7 0h2m12 0h1m3 0h1m9 0h1m5 0h2m1 0h1m3 0h1m2 0h1m2 0h1m3 0h1m3 0h1m19 0h1m5 0h1m1 0h1m2 0h1m7 0h1m7 0h1m22 0h1m2 0h1m3 0h1M1 168.5h1m5 0h1m8 0h1m10 0h1m3 0h2m15 0h1m31 0h1m4 0h1m10 0h1m8 0h1m17 0h1m6 0h1m3 0h1m2 0h1m13 0h1m2 0h1m3 0h1m6 0h2m5 0h1m4 0h1m12 0h1m4 0h1m1 0h1M24 169.5h1m1 0h1m13 0h2m5 0h1m5 0h1m12 0h1m12 0h1m17 0h1m11 0h1m11 0h1m8 0h1m14 0h1m7 0h1m8 0h1m4 0h1m13 0h1M1 170.5h1m34 0h1m11 0h1m8 0h2m1 0h1m6 0h1m2 0h1m1 0h1m3 0h1m5 0h1m18 0h1m5 0h1m10 0h1m8 0h1m17 0h1m6 0h1m5 0h1m1 0h1m3 0h1m4 0h1m6 0h1m10 0h1m6 0h1m4 0h1M0 171.5h1m10 0h3m8 0h1m5 0h1m3 0h1m12 0h1m1 0h1m5 0h1m14 0h2m2 0h1m1 0h1m41 0h1m2 0h1m5 0h1m28 0h1m1 0h1m1 0h1m8 0h1m15 0h1m2 0h1m7 0h1M7 172.5h1m4 0h1m21 0h1m15 0h1m5 0h1m1 0h1m7 0h1m4 0h1m46 0h1m7 0h1m36 0h2m7 0h1m1 0h1m4 0h1M18 173.5h1m4 0h1m19 0h1m5 0h1m1 0h1m5 0h1m17 0h1m2 0h1m2 0h1m7 0h1m13 0h1m2 0h1m5 0h1m1 0h1m11 0h2m6 0h1m10 0h1m6 0h1m6 0h1m12 0h1m21 0h1M7 174.5h1m15 0h1m6 0h1m9 0h2m39 0h1m14 0h1m3 0h1m47 0h2m6 0h1m15 0h1m3 0h1m10 0h1m5 0h1M45 175.5h2m13 0h2m39 0h1m35 0h2m4 0h1m1 0h2m1 0h1m1 0h2m17 0h2m2 0h1M9 176.5h1m16 0h1m15 0h1m15 0h1m2 0h1m5 0h1m12 0h2m53 0h1m4 0h1m11 0h1m4 0h1m1 0h1m3 0h1m3 0h1m2 0h1m1 0h1m1 0h1m3 0h1m3 0h1m1 0h3m1 0h1m1 0h1m4 0h1M32 177.5h1m11 0h1m9 0h1m28 0h1m6 0h1m2 0h1m18 0h1m1 0h1m17 0h1m1 0h2m3 0h1m7 0h1m28 0h1m8 0h1m3 0h1m1 0h1m2 0h1m2 0h1M11 178.5h1m5 0h1m9 0h1m3 0h1m23 0h1m5 0h1m3 0h3m1 0h1m17 0h1m31 0h1m5 0h1m8 0h2m9 0h1m1 0h1m23 0h1m27 0h1M8 179.5h1m32 0h1m16 0h1m7 0h1m2 0h1m34 0h1m10 0h1m6 0h1m2 0h1m7 0h1m3 0h1m5 0h1m5 0h1m2 0h2m8 0h1m11 0h1m7 0h1m15 0h1M9 180.5h1m12 0h1m17 0h1m1 0h1m20 0h1m11 0h2m63 0h1m3 0h2m12 0h1m10 0h1m25 0h1m3 0h1M22 181.5h1m3 0h1m15 0h1m1 0h1m2 0h1m2 0h1m3 0h2m6 0h1m27 0h1m7 0h1m1 0h1m10 0h1m2 0h1m4 0h1m10 0h1m7 0h1m6 0h2m29 0h1M5 182.5h1m3 0h1m16 0h2m6 0h1m5 0h3m8 0h2m15 0h1m12 0h1m4 0h1m11 0h3m17 0h1m9 0h1m5 0h1m14 0h1m10 0h1m13 0h1m1 0h1m5 0h1m11 0h1M10 183.5h1m18 0h1m7 0h1m7 0h1m1 0h2m2 0h1m38 0h2m16 0h1m2 0h1m10 0h1m10 0h1m7 0h1m27 0h1m8 0h2m4 0h1m4 0h1m8 0h1M7 184.5h1m7 0h1m11 0h1m14 0h1m10 0h1m9 0h1m21 0h1m1 0h1m3 0h1m3 0h1m2 0h1m29 0h1m12 0h1m35 0h1m11 0h1M5 185.5h1m1 0h1m19 0h1m12 0h1m4 0h1m23 0h1m2 0h1m2 0h1m5 0h1m18 0h1m2 0h1m4 0h2m1 0h1m24 0h1m5 0h1m3 0h1m22 0h1m2 0h1m14 0h1m8 0h1M6 186.5h5m3 0h1m5 0h1m13 0h1m6 0h1m8 0h1m17 0h1m5 0h1m14 0h1m30 0h1m4 0h3m1 0h1m8 0h1m13 0h1m14 0h1m1 0h1m1 0h1m3 0h2m2 0h1M0 187.5h1m2 0h1m1 0h1m8 0h1m18 0h1m5 0h1m2 0h1m2 0h1m15 0h1m6 0h1m5 0h1m3 0h1m7 0h1m2 0h1m3 0h2m1 0h1m2 0h2m7 0h1m16 0h1m7 0h1m4 0h1m10 0h1m12 0h1m17 0h1m12 0h1M7 188.5h1m3 0h1m7 0h1m9 0h1m7 0h1m3 0h1m7 0h1m53 0h1m4 0h1m7 0h1m5 0h1m4 0h1m1 0h1m10 0h1m3 0h1m36 0h1m16 0h1M15 189.5h1m15 0h1m2 0h1m11 0h1m4 0h1m1 0h1m19 0h1m4 0h1m3 0h1m1 0h1m1 0h1m1 0h3m5 0h1m2 0h1m15 0h1m2 0h1m2 0h1m23 0h2m2 0h1m1 0h1m6 0h1M0 190.5h1m21 0h1m6 0h2m2 0h1m13 0h1m3 0h1m5 0h1m31 0h1m9 0h1m5 0h1m2 0h1m6 0h1m12 0h1m22 0h1m7 0h1m3 0h1m2 0h1m2 0h1m8 0h1m3 0h1m15 0h1M31 191.5h1m5 0h1m26 0h1m5 0h1m17 0h1m6 0h1m7 0h1m9 0h1m3 0h1m3 0h1m2 0h1m2 0h1m8 0h1m4 0h1m3 0h1m10 0h1m8 0h2m30 0h1M9 192.5h1m8 0h1m17 0h1m6 0h1m3 0h1m8 0h1m10 0h3m12 0h1m7 0h1m24 0h1m12 0h1m1 0h1m6 0h1m11 0h3m2 0h1m4 0h1m1 0h1m5 0h1m1 0h2m4 0h1m3 0h1m4 0h1m4 0h2m2 0h1M27 193.5h1m3 0h1m23 0h1m1 0h1m4 0h1m9 0h1m6 0h1m15 0h1m10 0h1m6 0h1m12 0h1m6 0h1m4 0h2m24 0h1m21 0h1m3 0h1M3 194.5h1m4 0h1m13 0h1m1 0h2m12 0h1m5 0h2m14 0h1m8 0h1m26 0h1m9 0h1m22 0h1m2 0h1m1 0h1m53 0h2M11 195.5h1m1 0h1m19 0h2m10 0h1m11 0h1m1 0h1m1 0h1m15 0h1m10 0h1m5 0h1m5 0h1m9 0h1m5 0h1m14 0h1m11 0h1m12 0h2m5 0h2m5 0h1m19 0h1M10 196.5h1m1 0h1m23 0h1m4 0h1m24 0h1m31 0h2m5 0h1m9 0h2m15 0h1m14 0h1m16 0h1m3 0h1m1 0h1m6 0h1m2 0h1m8 0h1m6 0h1m2 0h1M0 197.5h1m24 0h1m35 0h1m6 0h1m14 0h1m1 0h1m2 0h1m8 0h1m42 0h1m47 0h1m4 0h1M3 198.5h1m11 0h1m15 0h2m2 0h1m31 0h1m8 0h1m3 0h1m5 0h1m9 0h1m14 0h3m15 0h1m3 0h1m22 0h1m1 0h1m2 0h1m9 0h2m11 0h1m7 0h1M12 199.5h1m13 0h1m3 0h1m2 0h1m17 0h1m1 0h1m32 0h1m2 0h1m20 0h1m2 0h1m4 0h1m10 0h1m9 0h1m16 0h1m2 0h1m30 0h1"/><path stroke="#ff5c00" d="M6 0.5h1m22 0h1m1 0h1m4 0h1m15 0h1m20 0h1m4 0h2m7 0h1m16 0h1m38 0h1m10 0h1m18 0h1m5 0h1m7 0h1M0 1.5h1m21 0h1m8 0h1m2 0h1m22 0h1m5 0h1m17 0h1m2 0h1m55 0h1m46 0h1M0 2.5h2m1 0h1m4 0h1m17 0h1m8 0h1m9 0h1m11 0h1m11 0h2m11 0h1m11 0h1m12 0h2m1 0h1m8 0h1m11 0h1m1 0h1m24 0h1m2 0h1m3 0h1m2 0h1m1 0h1m5 0h1m7 0h1m7 0h1M2 3.5h1m6 0h1m1 0h1m2 0h2m3 0h2m3 0h1m13 0h1m1 0h1m10 0h1m6 0h2m3 0h1m4 0h1m1 0h1m7 0h1m7 0h1m9 0h1m4 0h1m3 0h1m38 0h1m2 0h1m4 0h1m9 0h1m3 0h1m3 0h1m1 0h1m7 0h1M14 4.5h1m24 0h2m3 0h2m11 0h1m17 0h1m4 0h1m5 0h1m5 0h1m6 0h1m3 0h1m4 0h2m22 0h1m9 0h1m10 0h1m3 0h1m1 0h2m7 0h1m11 0h1m3 0h1m10 0h1M23 5.5h1m14 0h1m7 0h1m16 0h1m9 0h1m15 0h1m3 0h1m10 0h1m1 0h1m3 0h1m17 0h1m31 0h1m6 0h1m11 0h1m7 0h2M7 6.5h1m9 0h1m25 0h2m3 0h2m5 0h1m3 0h1m6 0h1m10 0h1m2 0h1m26 0h1m2 0h1m21 0h1m3 0h1m12 0h1m9 0h1m6 0h1m5 0h1M6 7.5h2m11 0h1m2 0h1m3 0h1m30 0h1m11 0h1m6 0h1m3 0h1m4 0h1m4 0h1m6 0h1m1 0h1m21 0h1m15 0h1m1 0h1m18 0h1m11 0h1m22 0h1m2 0h1m1 0h1M3 8.5h1m15 0h1m1 0h1m4 0h1m26 0h2m1 0h1m1 0h1m16 0h1m5 0h1m26 0h1m14 0h1m2 0h1m5 0h2m2 0h2m11 0h1m13 0h1m6 0h1m10 0h1m4 0h1m5 0h1M6 9.5h1m1 0h1m5 0h1m2 0h1m5 0h1m7 0h1m19 0h2m18 0h1m33 0h1m15 0h1m4 0h1m14 0h1m24 0h1m1 0h1m3 0h1m1 0h1M30 10.5h1m3 0h1m34 0h1m3 0h1m7 0h1m3 0h1m9 0h1m11 0h1m9 0h1m25 0h1m8 0h1m5 0h1m32 0h1M11 11.5h1m9 0h1m1 0h1m10 0h1m5 0h1m8 0h1m21 0h1m18 0h1m7 0h1m9 0h1m4 0h1m19 0h1m25 0h1m2 0h1m6 0h1m20 0h1m8 0h1M4 12.5h1m4 0h1m7 0h1m2 0h1m13 0h1m2 0h1m4 0h1m17 0h1m41 0h1m8 0h1m2 0h1m3 0h1m12 0h2m11 0h1m14 0h1m1 0h1m8 0h1m9 0h1m6 0h1m8 0h1M2 13.5h1m4 0h1m9 0h1m6 0h1m2 0h1m1 0h1m1 0h1m3 0h1m7 0h1m4 0h1m12 0h1m19 0h2m7 0h1m4 0h1m11 0h1m8 0h1m46 0h1m5 0h1m4 0h1m20 0h1M12 14.5h1m8 0h2m13 0h1m5 0h1m4 0h1m6 0h1m16 0h1m8 0h1m2 0h1m13 0h1m2 0h1m3 0h2m31 0h1m15 0h1m15 0h1m8 0h1M5 15.5h1m8 0h1m8 0h1m14 0h1m1 0h1m4 0h1m25 0h1m6 0h1m6 0h1m10 0h1m7 0h1m14 0h1m4 0h1m3 0h1m18 0h1m16 0h2m6 0h1m3 0h2m6 0h1m2 0h1M5 16.5h1m57 0h1m40 0h1m26 0h1m5 0h1m6 0h1m2 0h2m9 0h1m7 0h1m7 0h1m4 0h1m3 0h1m2 0h1m5 0h1M13 17.5h1m4 0h1m16 0h1m4 0h1m5 0h2m2 0h1m3 0h1m3 0h1m9 0h1m16 0h1m4 0h1m3 0h1m8 0h1m6 0h1m16 0h1m7 0h1m3 0h1m3 0h1m20 0h2m16 0h1m4 0h1m1 0h1m2 0h1m1 0h1m2 0h1M19 18.5h2m1 0h1m5 0h1m2 0h1m3 0h1m5 0h2m4 0h1m6 0h1m7 0h1m11 0h1m10 0h1m11 0h1m1 0h1m1 0h2m6 0h1m19 0h1m39 0h1m7 0h1m4 0h1m2 0h1m4 0h1m7 0h1M8 19.5h1m21 0h2m8 0h2m6 0h1m1 0h1m5 0h2m7 0h1m2 0h2m1 0h1m1 0h1m8 0h1m13 0h1m5 0h1m11 0h1m6 0h1m6 0h1m11 0h1m1 0h1m3 0h1m12 0h1m18 0h1m14 0h1M2 20.5h1m10 0h1m2 0h2m8 0h1m23 0h1m6 0h1m27 0h1m18 0h1m15 0h1m3 0h1m11 0h1m7 0h1m12 0h1m21 0h1m10 0h1M3 21.5h1m22 0h1m9 0h1m6 0h1m10 0h1m37 0h1m11 0h2m26 0h2m3 0h1m2 0h1m3 0h1m3 0h1m12 0h1m4 0h1m2 0h2m1 0h1m25 0h2M5 22.5h1m2 0h1m3 0h1m1 0h1m15 0h2m1 0h1m5 0h1m3 0h1m7 0h2m1 0h1m4 0h1m12 0h1m8 0h1m9 0h1m6 0h1m2 0h1m1 0h1m14 0h1m1 0h1m2 0h1m24 0h1m7 0h1m2 0h1m5 0h1m4 0h2m8 0h1M6 23.5h1m26 0h3m8 0h1m3 0h1m23 0h1m10 0h1m12 0h1m16 0h1m14 0h1m15 0h1m4 0h1m10 0h1m7 0h1m7 0h2m8 0h2m10 0h1M3 24.5h1m2 0h1m4 0h1m43 0h1m9 0h1m3 0h1m5 0h1m6 0h1m7 0h1m17 0h1m11 0h1m8 0h1m10 0h1m7 0h1m6 0h1M2 25.5h1m17 0h1m8 0h1m9 0h1m13 0h1m1 0h2m12 0h1m10 0h1m4 0h1m17 0h1m7 0h1m2 0h1m1 0h1m4 0h1m26 0h1m5 0h1m1 0h1m17 0h1m9 0h1m10 0h1M49 26.5h1m8 0h2m3 0h1m2 0h1m35 0h1m20 0h1m1 0h1m26 0h1m7 0h1m7 0h1m2 0h1m8 0h1m5 0h1m2 0h1m6 0h1M5 27.5h1m2 0h1m3 0h1m19 0h1m4 0h1m17 0h1m5 0h1m10 0h1m8 0h1m3 0h1m11 0h1m7 0h1m24 0h1m22 0h1m1 0h1m23 0h1M5 28.5h1m19 0h1m10 0h1m17 0h1m4 0h2m8 0h1m4 0h2m4 0h1m26 0h1m4 0h1m6 0h1m7 0h1m11 0h1m2 0h1m2 0h1m11 0h1m6 0h1m10 0h1m2 0h1m10 0h1m9 0h1M13 29.5h2m11 0h1m15 0h1m5 0h1m18 0h1m1 0h1m1 0h1m1 0h1m1 0h1m9 0h1m5 0h1m24 0h1m14 0h1m10 0h1m12 0h2m3 0h1m9 0h1m2 0h1m6 0h1M10 30.5h2m5 0h2m9 0h2m11 0h1m2 0h1m5 0h2m2 0h1m11 0h1m15 0h1m1 0h2m4 0h1m1 0h1m11 0h1m5 0h1m5 0h1m4 0h1m34 0h1m7 0h1m9 0h1m7 0h1M4 31.5h1m8 0h1m12 0h1m8 0h1m17 0h1m17 0h1m23 0h1m5 0h1m2 0h1m20 0h2m4 0h1m2 0h1m2 0h1m21 0h1m8 0h1m15 0h2M2 32.5h1m1 0h2m7 0h1m51 0h1m2 0h1m1 0h1m8 0h1m8 0h1m8 0h1m8 0h1m11 0h1m13 0h1m6 0h1m9 0h1m2 0h1m8 0h1M17 33.5h1m12 0h1m9 0h1m2 0h1m7 0h1m8 0h2m4 0h2m5 0h1m16 0h2m2 0h1m1 0h1m21 0h1m2 0h1m19 0h1m12 0h1m2 0h1m6 0h1m4 0h1m4 0h1m3 0h2m8 0h1M7 34.5h1m4 0h2m15 0h1m25 0h1m13 0h1m4 0h1m38 0h1m13 0h1m6 0h2m26 0h1m17 0h1m4 0h1m10 0h1M4 35.5h1m35 0h2m1 0h1m3 0h1m13 0h1m1 0h1m11 0h1m1 0h2m6 0h1m9 0h1m13 0h1m3 0h1m2 0h1m4 0h1m4 0h1m8 0h1m34 0h1m2 0h1m5 0h2m6 0h1M0 36.5h1m1 0h1m6 0h1m10 0h1m36 0h1m4 0h1m6 0h1m10 0h1m14 0h1m1 0h1m19 0h1m18 0h1m2 0h1m1 0h1m6 0h1m25 0h1m11 0h1M8 37.5h1m4 0h1m11 0h1m19 0h1m19 0h1m11 0h1m5 0h1m4 0h1m3 0h1m4 0h1m21 0h1m12 0h1m6 0h1m12 0h1m6 0h2m2 0h1m1 0h1m3 0h1m2 0h1m5 0h2m18 0h1M0 38.5h1m12 0h2m19 0h1m23 0h1m3 0h1m1 0h1m5 0h1m17 0h1m6 0h1m36 0h1m5 0h1m1 0h1m7 0h1m6 0h1m10 0h1m2 0h1m12 0h1M1 39.5h1m2 0h1m5 0h1m1 0h1m5 0h1m18 0h1m1 0h1m22 0h1m6 0h3m58 0h1m9 0h1m33 0h1m1 0h2m1 0h1m13 0h1M4 40.5h1m2 0h2m18 0h2m6 0h2m5 0h1m9 0h1m8 0h1m3 0h1m3 0h1m1 0h1m2 0h1m3 0h1m1 0h1m2 0h1m34 0h1m8 0h1m13 0h1m9 0h1m18 0h1m23 0h1m4 0h1M39 41.5h1m5 0h1m36 0h2m6 0h1m6 0h1m6 0h1m2 0h1m4 0h1m1 0h1m1 0h1m17 0h1m28 0h1m1 0h1m32 0h1M10 42.5h1m3 0h1m23 0h1m30 0h1m5 0h1m14 0h1m5 0h1m1 0h1m3 0h1m28 0h1m27 0h1m21 0h1m2 0h1m12 0h1M11 43.5h1m3 0h1m16 0h1m12 0h1m17 0h1m32 0h1m1 0h1m4 0h1m7 0h1m14 0h2m14 0h1m31 0h1m10 0h1M1 44.5h1m14 0h1m26 0h1m1 0h1m11 0h2m1 0h1m8 0h1m4 0h1m3 0h1m14 0h1m3 0h1m30 0h1m26 0h1m11 0h1m22 0h1m4 0h1M15 45.5h1m50 0h1m10 0h1m4 0h1m5 0h1m24 0h1m7 0h1m18 0h1m3 0h1m25 0h1m3 0h1m5 0h1m8 0h2m3 0h1M15 46.5h1m1 0h1m2 0h1m5 0h1m1 0h1m14 0h1m2 0h2m3 0h1m14 0h1m6 0h1m21 0h1m28 0h1m3 0h1m21 0h1m5 0h1m25 0h1M5 47.5h1m7 0h1m21 0h1m25 0h1m8 0h1m4 0h1m8 0h1m29 0h1m1 0h1m8 0h1m9 0h1m5 0h1m1 0h1m1 0h1m13 0h1m6 0h1m11 0h1m11 0h2M0 48.5h1m5 0h1m1 0h1m4 0h1m15 0h1m5 0h1m12 0h1m5 0h1m2 0h1m1 0h2m5 0h1m8 0h1m19 0h2m44 0h1m3 0h1m4 0h1m12 0h1m29 0h1M20 49.5h1m19 0h1m4 0h1m2 0h1m33 0h1m9 0h1m1 0h1m11 0h1m7 0h1m4 0h1m4 0h1m3 0h1m6 0h1m15 0h1m5 0h1m7 0h2m28 0h1m2 0h2M10 50.5h1m25 0h2m4 0h1m13 0h1m15 0h1m35 0h1m4 0h1m8 0h1m6 0h1m2 0h1m7 0h1m12 0h1m5 0h2m1 0h1m11 0h1m17 0h2M14 51.5h1m23 0h1m5 0h1m13 0h1m1 0h1m16 0h1m1 0h1m1 0h1m10 0h1m24 0h1m5 0h2m1 0h1m1 0h1m5 0h1m2 0h1m11 0h1m16 0h1m22 0h1m5 0h1M2 52.5h1m13 0h1m3 0h1m8 0h1m1 0h1m10 0h1m7 0h1m6 0h1m19 0h1m13 0h1m10 0h2m4 0h1m10 0h1m5 0h1m19 0h1m1 0h1m11 0h1m24 0h1m13 0h1M4 53.5h1m40 0h1m8 0h1m10 0h1m13 0h1m7 0h1m2 0h2m5 0h1m24 0h1m36 0h1m15 0h1M36 54.5h1m8 0h1m12 0h1m17 0h1m7 0h1m1 0h1m26 0h1m6 0h1m15 0h1m5 0h1m2 0h1m16 0h1m15 0h1m5 0h1m6 0h1m1 0h2m3 0h1M3 55.5h1m28 0h1m6 0h1m31 0h1m7 0h1m4 0h1m9 0h1m24 0h1m2 0h1m10 0h1m6 0h1m8 0h1m27 0h1m6 0h1M6 56.5h1m1 0h1m30 0h1m23 0h1m22 0h2m3 0h1m1 0h1m1 0h2m4 0h1m3 0h1m3 0h2m3 0h1m1 0h1m1 0h1m9 0h1m17 0h1m16 0h1m5 0h1m2 0h1m5 0h1m13 0h1m5 0h1M7 57.5h1m16 0h1m25 0h1m1 0h1m15 0h1m10 0h1m19 0h1m6 0h1m15 0h1m4 0h1m4 0h1m7 0h1m10 0h1m7 0h1m1 0h1m11 0h1m10 0h1m14 0h1M4 58.5h2m5 0h1m7 0h1m4 0h1m3 0h1m5 0h1m2 0h1m25 0h1m16 0h1m1 0h1m2 0h1m4 0h1m15 0h1m12 0h1m10 0h2m27 0h1m4 0h1m2 0h1m11 0h1m15 0h1M9 59.5h1m4 0h1m11 0h1m43 0h1m3 0h1m15 0h1m1 0h1m19 0h1m18 0h1m3 0h1m5 0h2m7 0h1m1 0h1m10 0h1m18 0h1M16 60.5h1m19 0h1m6 0h1m19 0h1m5 0h1m1 0h1m14 0h3m19 0h1m2 0h1m4 0h2m41 0h1m8 0h1m6 0h1m8 0h1m6 0h1M49 61.5h1m16 0h1m8 0h1m10 0h1m5 0h1m4 0h1m1 0h1m4 0h1m17 0h1m3 0h1m4 0h2m34 0h1m1 0h1m2 0h1m11 0h1M13 62.5h1m5 0h1m1 0h2m3 0h1m30 0h1m13 0h1m4 0h1m8 0h1m5 0h1m7 0h1m8 0h1m8 0h1m16 0h1m5 0h1m3 0h1m5 0h1m7 0h1m24 0h1m15 0h1M10 63.5h1m6 0h1m2 0h1m9 0h1m11 0h1m4 0h1m14 0h2m16 0h1m2 0h1m18 0h2m9 0h1m13 0h1m13 0h1m14 0h1m12 0h1m11 0h1m1 0h1m3 0h1m1 0h1m5 0h2M22 64.5h1m2 0h2m1 0h1m5 0h1m1 0h1m3 0h1m7 0h1m2 0h1m4 0h1m10 0h1m3 0h1m19 0h1m3 0h1m1 0h1m27 0h1m1 0h1m5 0h1m1 0h1m14 0h3m4 0h1m38 0h2M38 65.5h1m2 0h1m2 0h1m35 0h1m8 0h1m5 0h1m2 0h2m9 0h1m9 0h1m9 0h1m13 0h1m4 0h1m36 0h1m4 0h2M9 66.5h2m8 0h1m4 0h1m18 0h1m21 0h1m3 0h1m8 0h1m1 0h1m18 0h1m9 0h1m23 0h1m1 0h1m14 0h1m42 0h1M14 67.5h1m19 0h1m6 0h1m1 0h1m5 0h1m1 0h1m30 0h1m6 0h1m16 0h1m2 0h1m3 0h1m1 0h1m1 0h2m4 0h1m33 0h1m24 0h1M10 68.5h1m17 0h1m7 0h1m18 0h1m4 0h1m8 0h1m7 0h2m53 0h1m5 0h1m7 0h1m1 0h2m1 0h1m1 0h1m20 0h1m1 0h1M6 69.5h1m45 0h1m15 0h1m10 0h1m6 0h1m12 0h1m28 0h1m29 0h1m11 0h2M3 70.5h1m29 0h1m12 0h1m3 0h1m4 0h1m2 0h1m12 0h1m2 0h1m3 0h1m14 0h1m3 0h1m7 0h1m21 0h1m1 0h1m19 0h2m20 0h1m14 0h2M9 71.5h1m8 0h1m19 0h1m5 0h1m2 0h2m11 0h1m4 0h2m6 0h1m3 0h1m1 0h1m30 0h1m1 0h1m10 0h1m5 0h1m7 0h1m1 0h1m5 0h1m19 0h1m18 0h1m12 0h1M13 72.5h1m45 0h1m6 0h1m14 0h1m2 0h1m5 0h1m24 0h1m7 0h1m1 0h1m2 0h1m8 0h1m5 0h1m2 0h2m51 0h1M34 73.5h1m64 0h1m4 0h1m9 0h1m1 0h1m5 0h1m14 0h1m4 0h1m30 0h1m6 0h1m14 0h1m3 0h1M12 74.5h1m23 0h1m2 0h1m5 0h1m1 0h1m2 0h1m2 0h1m5 0h2m15 0h3m4 0h1m10 0h1m7 0h1m6 0h1m1 0h1m13 0h2m8 0h1m3 0h1m2 0h1m18 0h1m17 0h1m1 0h1m6 0h1m10 0h1M0 75.5h1m3 0h1m27 0h1m6 0h1m12 0h1m9 0h1m4 0h1m21 0h1m18 0h1m2 0h1m5 0h1m27 0h1m3 0h1m2 0h1m20 0h2m3 0h1m3 0h1m2 0h1m11 0h3M2 76.5h1m3 0h1m9 0h1m5 0h1m17 0h1m4 0h1m6 0h1m15 0h1m7 0h1m23 0h1m6 0h1m8 0h2m21 0h1m13 0h1m24 0h1m10 0h1M19 77.5h1m4 0h1m4 0h1m11 0h1m17 0h1m3 0h1m1 0h1m7 0h1m3 0h1m3 0h1m3 0h1m2 0h1m6 0h1m3 0h1m32 0h1m6 0h1m3 0h1m4 0h1m9 0h1m11 0h1m4 0h1m7 0h1m15 0h1M16 78.5h1m3 0h1m2 0h1m17 0h1m12 0h1m3 0h1m14 0h1m4 0h1m10 0h1m13 0h1m1 0h1m11 0h1m5 0h2m4 0h1m2 0h1m27 0h1m20 0h1m4 0h4m6 0h1M3 79.5h1m11 0h1m3 0h1m1 0h1m40 0h1m2 0h1m6 0h1m1 0h1m1 0h1m2 0h1m17 0h2m5 0h1m2 0h1m4 0h1m3 0h1m6 0h1m25 0h2m8 0h1m8 0h1m19 0h1M3 80.5h1m5 0h1m5 0h1m12 0h1m4 0h1m1 0h1m4 0h1m11 0h1m35 0h1m12 0h1m2 0h1m4 0h1m5 0h1m12 0h1m4 0h1m22 0h1m7 0h1m8 0h1m5 0h2m1 0h1M9 81.5h1m15 0h1m17 0h2m5 0h1m4 0h1m11 0h1m4 0h1m3 0h2m10 0h1m3 0h1m6 0h1m14 0h1m6 0h1m13 0h1m38 0h1m7 0h1m15 0h1M0 82.5h1m13 0h2m2 0h1m8 0h1m31 0h1m10 0h1m9 0h1m2 0h2m3 0h2m6 0h1m6 0h1m28 0h1m4 0h1m5 0h1m11 0h1m14 0h1M8 83.5h1m9 0h1m8 0h1m25 0h1m2 0h1m7 0h2m11 0h1m8 0h1m10 0h1m14 0h1m16 0h1m5 0h1m30 0h1m13 0h1m4 0h1m7 0h2m4 0h1M13 84.5h1m3 0h1m12 0h3m21 0h1m13 0h1m4 0h1m5 0h1m4 0h1m9 0h1m2 0h2m5 0h1m21 0h1m6 0h1m6 0h1m7 0h1m2 0h2m9 0h1m15 0h1m8 0h2M1 85.5h1m8 0h1m3 0h1m4 0h1m8 0h1m1 0h1m5 0h1m6 0h1m10 0h1m6 0h1m21 0h1m3 0h1m5 0h1m11 0h1m17 0h2m18 0h1m7 0h1m20 0h1m5 0h1m2 0h1M4 86.5h1m5 0h1m2 0h1m4 0h1m1 0h1m4 0h1m15 0h1m2 0h1m2 0h1m1 0h1m14 0h1m7 0h1m6 0h1m17 0h2m4 0h1m17 0h1m28 0h1m3 0h1m5 0h1m12 0h1m10 0h1m5 0h1m5 0h1M8 87.5h1m2 0h1m5 0h1m24 0h1m5 0h1m31 0h1m5 0h1m27 0h1m21 0h1m11 0h2m12 0h1m5 0h1m13 0h1m4 0h1M3 88.5h2m6 0h1m2 0h1m23 0h1m8 0h1m2 0h1m20 0h1m4 0h1m15 0h1m2 0h1m24 0h1m4 0h1m2 0h1m1 0h1m9 0h1m10 0h1m17 0h1m4 0h2m10 0h1m3 0h2M0 89.5h1m6 0h1m7 0h1m10 0h1m8 0h1m7 0h1m38 0h1m25 0h1m1 0h1m23 0h1m24 0h1m3 0h1m9 0h1M7 90.5h1m14 0h1m17 0h3m15 0h1m4 0h2m8 0h1m23 0h1m4 0h1m13 0h2m7 0h1m14 0h3m1 0h1m3 0h1m4 0h1m32 0h1m4 0h2M4 91.5h1m32 0h1m4 0h1m36 0h1m20 0h1m7 0h1m3 0h1m47 0h1m4 0h1m19 0h1m2 0h1m2 0h1M14 92.5h1m3 0h1m2 0h2m9 0h1m3 0h1m13 0h2m2 0h1m3 0h2m23 0h1m2 0h1m6 0h1m2 0h1m9 0h1m6 0h1m24 0h2m2 0h1m31 0h1m4 0h1m8 0h1m4 0h1M0 93.5h1m9 0h1m2 0h1m18 0h1m25 0h1m3 0h1m6 0h1m19 0h1m8 0h1m12 0h1m22 0h1m6 0h1m4 0h1m10 0h2m10 0h1m1 0h2m16 0h1m5 0h1M1 94.5h3m1 0h2m7 0h1m23 0h1m3 0h1m28 0h1m7 0h1m31 0h1m13 0h1m8 0h1m18 0h1m8 0h1m5 0h1m1 0h1m15 0h1m8 0h1M5 95.5h1m11 0h1m5 0h1m6 0h1m24 0h1m2 0h1m2 0h2m2 0h1m6 0h1m15 0h1m13 0h1m12 0h1m2 0h1m8 0h1m17 0h1m5 0h1m3 0h1m18 0h1m5 0h1m1 0h1M4 96.5h2m5 0h1m15 0h1m4 0h2m43 0h1m9 0h1m2 0h1m5 0h1m1 0h1m26 0h1m1 0h1m58 0h1M3 97.5h1m7 0h1m4 0h1m2 0h1m14 0h1m16 0h1m8 0h1m1 0h1m10 0h1m9 0h1m10 0h1m1 0h1m11 0h1m19 0h2m9 0h1m18 0h1m38 0h1M39 98.5h1m8 0h1m5 0h1m9 0h1m5 0h1m6 0h1m4 0h1m16 0h4m11 0h1m14 0h1m8 0h1m7 0h1m4 0h1m24 0h1m3 0h1m8 0h1m4 0h1M1 99.5h1m11 0h1m3 0h1m27 0h1m12 0h1m17 0h1m30 0h1m8 0h1m20 0h1m8 0h1m4 0h1m16 0h1m23 0h1M4 100.5h1m12 0h2m2 0h1m3 0h1m9 0h2m5 0h1m4 0h1m1 0h1m6 0h1m2 0h1m8 0h1m9 0h1m17 0h1m7 0h1m8 0h1m1 0h1m1 0h1m1 0h1m16 0h1m8 0h1m37 0h1M49 101.5h1m12 0h1m6 0h1m1 0h1m5 0h1m3 0h1m16 0h1m15 0h1m3 0h2m5 0h1m11 0h1m11 0h1m2 0h1m1 0h1m13 0h1m19 0h1M1 102.5h1m6 0h1m3 0h1m25 0h1m6 0h1m31 0h1m2 0h1m3 0h1m4 0h1m28 0h1m4 0h1m11 0h1m7 0h1m36 0h1M16 103.5h2m12 0h1m10 0h1m60 0h2m22 0h1m2 0h1m10 0h1m2 0h1m10 0h1m16 0h1m13 0h1m8 0h1M0 104.5h1m20 0h1m4 0h1m7 0h1m13 0h1m5 0h1m38 0h1m30 0h1m3 0h1m3 0h2m30 0h1m13 0h1m1 0h2m5 0h1M1 105.5h1m20 0h1m6 0h1m4 0h1m31 0h1m5 0h1m10 0h1m13 0h1m18 0h1m5 0h1m9 0h1m3 0h1m17 0h1m30 0h1m10 0h2M7 106.5h1m25 0h1m14 0h1m10 0h1m3 0h1m3 0h1m1 0h1m24 0h1m2 0h1m1 0h1m26 0h1m9 0h1m4 0h1m33 0h2m1 0h1m4 0h1M1 107.5h1m18 0h1m3 0h1m1 0h2m25 0h1m2 0h1m6 0h1m1 0h1m6 0h1m2 0h1m9 0h1m13 0h1m10 0h1m1 0h1m12 0h1m20 0h1m20 0h2m16 0h1m1 0h1M2 108.5h1m26 0h1m1 0h1m5 0h1m20 0h1m23 0h1m5 0h2m4 0h1m8 0h1m12 0h1m3 0h1m14 0h1m15 0h1m3 0h2m9 0h1m4 0h1m9 0h1m9 0h1m1 0h1M1 109.5h1m5 0h1m15 0h1m1 0h1m4 0h1m22 0h1m12 0h1m1 0h1m4 0h1m22 0h1m6 0h1m20 0h1m8 0h1m20 0h1m32 0h1m11 0h1M5 110.5h1m37 0h1m11 0h2m37 0h1m4 0h1m10 0h1m7 0h1m8 0h1m14 0h1m5 0h2m5 0h1m15 0h1m3 0h1m15 0h1m6 0h1M25 111.5h1m11 0h1m39 0h1m4 0h2m5 0h1m23 0h1m7 0h1m9 0h1m7 0h2m3 0h1m28 0h1m2 0h1m1 0h1M0 112.5h2m1 0h1m1 0h1m11 0h1m3 0h1m5 0h1m3 0h1m18 0h1m12 0h1m12 0h1m16 0h1m3 0h2m8 0h1m2 0h1m12 0h1m47 0h2m1 0h1m1 0h1m3 0h1m14 0h1M6 113.5h1m10 0h1m8 0h1m14 0h1m21 0h1m6 0h1m28 0h1m6 0h1m15 0h1m4 0h1m3 0h1m35 0h1m8 0h1m10 0h1m5 0h1m1 0h1m1 0h1M0 114.5h1m3 0h1m4 0h1m22 0h1m5 0h1m9 0h1m15 0h2m6 0h1m19 0h1m12 0h1m36 0h1m1 0h1m3 0h1m6 0h1m7 0h1m4 0h1m5 0h1m4 0h1M29 115.5h1m2 0h1m6 0h1m7 0h1m2 0h1m33 0h1m22 0h2m2 0h1m1 0h1m13 0h1m1 0h1m16 0h1m4 0h1m8 0h1m9 0h1M0 116.5h1m6 0h1m2 0h1m2 0h1m9 0h1m23 0h1m17 0h2m3 0h1m3 0h2m7 0h1m10 0h1m22 0h1m13 0h1m15 0h1m2 0h1m7 0h1m15 0h1m21 0h1M0 117.5h1m4 0h2m2 0h1m1 0h1m36 0h1m8 0h1m16 0h2m4 0h1m25 0h2m3 0h1m2 0h1m5 0h1m1 0h1m9 0h1m5 0h1m29 0h1m2 0h1m1 0h2m7 0h1m5 0h1M3 118.5h1m11 0h1m3 0h1m1 0h1m8 0h1m12 0h1m10 0h1m10 0h1m1 0h1m10 0h2m12 0h1m3 0h1m5 0h2m19 0h1m1 0h1m17 0h1m20 0h1m1 0h3M35 119.5h1m13 0h1m6 0h1m16 0h1m31 0h1m3 0h1m28 0h2m14 0h1m4 0h1m5 0h1m13 0h1m13 0h1m4 0h1M14 120.5h1m3 0h1m13 0h1m13 0h1m10 0h1m3 0h2m4 0h1m10 0h1m54 0h1m6 0h1m13 0h1m21 0h1m7 0h1m1 0h1m10 0h1M1 121.5h1m12 0h1m23 0h1m14 0h1m11 0h1m3 0h2m1 0h1m3 0h1m6 0h1m6 0h1m9 0h1m6 0h1m12 0h1m2 0h1m1 0h1m2 0h1m4 0h1m4 0h2m6 0h1m5 0h1m34 0h1M31 122.5h1m7 0h1m3 0h1m1 0h1m20 0h1m3 0h1m7 0h2m36 0h1m3 0h1m11 0h1m1 0h1m13 0h1m6 0h1m11 0h1m2 0h1m11 0h1m14 0h1M0 123.5h1m5 0h1m16 0h2m66 0h1m17 0h1m4 0h1m38 0h1m6 0h1m7 0h1m12 0h1m2 0h1m1 0h1m6 0h2M9 124.5h1m1 0h1m2 0h1m30 0h1m10 0h2m3 0h1m44 0h1m3 0h1m4 0h1m5 0h1m7 0h1m12 0h1m2 0h1m4 0h1m3 0h2m29 0h1m6 0h1m6 0h1M3 125.5h1m3 0h1m23 0h1m8 0h1m16 0h2m6 0h1m11 0h1m7 0h1m7 0h1m17 0h1m6 0h1m16 0h1m5 0h1m30 0h2m19 0h1m1 0h2M9 126.5h1m5 0h1m24 0h1m5 0h2m29 0h1m2 0h1m41 0h1m11 0h1m17 0h1m14 0h1M0 127.5h1m14 0h2m19 0h1m10 0h1m5 0h1m13 0h1m2 0h1m7 0h1m10 0h1m1 0h1m19 0h1m10 0h1m23 0h1m30 0h1m4 0h1m2 0h1m13 0h1M2 128.5h2m17 0h1m17 0h1m24 0h1m25 0h1m4 0h1m6 0h1m22 0h1m7 0h1m5 0h1m1 0h1m3 0h1m1 0h1m15 0h1m18 0h1M2 129.5h1m4 0h1m2 0h1m1 0h1m5 0h1m7 0h1m3 0h1m26 0h1m6 0h1m3 0h2m21 0h1m11 0h1m6 0h1m34 0h1m6 0h1m27 0h1m6 0h2m1 0h1m2 0h1m3 0h1M12 130.5h1m22 0h1m4 0h1m10 0h1m7 0h1m7 0h1m33 0h1m16 0h1m2 0h1m12 0h1m9 0h1m2 0h1m3 0h1m12 0h1m23 0h1M17 131.5h1m14 0h1m3 0h1m4 0h1m7 0h1m10 0h1m6 0h1m1 0h3m8 0h1m2 0h1m9 0h2m20 0h1m14 0h2m3 0h1m1 0h1m26 0h1m1 0h1m18 0h1m6 0h1m3 0h1M4 132.5h2m16 0h2m6 0h1m3 0h1m17 0h1m26 0h1m10 0h2m16 0h1m40 0h1m11 0h1m10 0h2m5 0h1M10 133.5h1m11 0h1m3 0h1m6 0h1m13 0h1m14 0h1m8 0h1m6 0h1m6 0h1m9 0h1m13 0h1m27 0h1m15 0h1m28 0h1m2 0h2m9 0h1M13 134.5h1m2 0h1m12 0h1m6 0h1m38 0h1m19 0h1m4 0h1m2 0h1m2 0h1m11 0h1m11 0h2m1 0h1m12 0h1m7 0h1m6 0h1m10 0h1m1 0h1m21 0h1M3 135.5h1m13 0h1m1 0h1m10 0h1m6 0h1m2 0h1m7 0h1m4 0h1m4 0h1m16 0h2m1 0h1m3 0h2m22 0h1m6 0h1m6 0h1m12 0h1m7 0h1m6 0h1m12 0h1m6 0h1m4 0h1m4 0h1m2 0h1m3 0h1M9 136.5h1m11 0h1m5 0h1m3 0h1m11 0h1m24 0h1m16 0h1m6 0h1m2 0h1m16 0h1m7 0h1m6 0h1m5 0h1m7 0h1m11 0h1m1 0h1m8 0h1M17 137.5h1m6 0h1m16 0h1m15 0h2m11 0h3m1 0h1m19 0h1m1 0h1m20 0h1m20 0h1m8 0h1m3 0h1m8 0h1m7 0h1m1 0h1m8 0h1m4 0h2m9 0h1M5 138.5h1m24 0h1m11 0h1m12 0h2m6 0h1m7 0h1m34 0h1m1 0h1m9 0h1m11 0h1m8 0h1m2 0h1m5 0h1m1 0h1m11 0h1m7 0h1m17 0h2M12 139.5h1m5 0h2m12 0h1m21 0h1m7 0h1m10 0h1m3 0h1m20 0h1m22 0h1m1 0h1m13 0h1m12 0h1m6 0h1m16 0h1m11 0h1m1 0h1m4 0h1M8 140.5h1m24 0h1m21 0h1m4 0h1m8 0h1m6 0h1m30 0h1m2 0h1m10 0h1m6 0h1m2 0h1m19 0h1m2 0h3m21 0h1m3 0h1m11 0h1M6 141.5h2m4 0h1m9 0h1m22 0h1m21 0h1m8 0h2m1 0h2m1 0h1m7 0h1m10 0h1m4 0h1m35 0h1m6 0h1m7 0h1m8 0h4m11 0h2m8 0h1m3 0h1M1 142.5h1m27 0h1m3 0h1m3 0h1m15 0h1m13 0h1m5 0h1m11 0h1m3 0h2m14 0h1m5 0h2m13 0h2m7 0h1m5 0h1m16 0h1m10 0h1m8 0h1m8 0h1m5 0h1m2 0h1M4 143.5h1m11 0h1m20 0h1m11 0h1m15 0h1m46 0h1m10 0h1m1 0h1m14 0h1m25 0h1m4 0h1m20 0h1M31 144.5h1m12 0h1m6 0h1m3 0h1m3 0h1m11 0h1m14 0h1m18 0h1m1 0h2m10 0h1m24 0h1m1 0h1m1 0h2m3 0h1m6 0h1m7 0h2m13 0h2m10 0h1M12 145.5h1m12 0h1m23 0h1m1 0h1m18 0h1m37 0h1m27 0h1m5 0h1m3 0h1m2 0h1m9 0h2m21 0h1m10 0h1m1 0h1M5 146.5h1m5 0h1m16 0h1m9 0h1m1 0h1m9 0h1m5 0h1m11 0h1m2 0h1m4 0h2m17 0h1m3 0h1m8 0h1m30 0h1m30 0h1m8 0h1M3 147.5h3m14 0h3m5 0h1m22 0h1m27 0h1m5 0h1m31 0h1m30 0h1m7 0h2m10 0h1m3 0h1m7 0h1m7 0h1m5 0h1m2 0h2M26 148.5h1m26 0h1m3 0h1m10 0h1m1 0h1m1 0h1m21 0h1m25 0h1m33 0h1m12 0h1m1 0h1m16 0h1m4 0h1m1 0h1M4 149.5h1m2 0h1m10 0h1m1 0h1m5 0h1m12 0h1m18 0h1m2 0h1m21 0h1m6 0h1m1 0h2m6 0h2m16 0h1m14 0h1m15 0h1m2 0h1m7 0h3m3 0h2m19 0h1M6 150.5h1m6 0h1m2 0h1m17 0h1m27 0h1m3 0h1m7 0h1m4 0h1m13 0h1m3 0h1m4 0h1m26 0h1m1 0h1m1 0h1m3 0h1m16 0h1m7 0h1m23 0h1m3 0h1M7 151.5h1m19 0h1m1 0h1m2 0h1m2 0h1m22 0h1m1 0h1m26 0h1m5 0h1m13 0h1m2 0h1m17 0h1m7 0h2m1 0h1m1 0h1m5 0h1m10 0h1m14 0h1m3 0h1m2 0h1m2 0h1m10 0h1m1 0h1M2 152.5h1m5 0h1m1 0h1m7 0h1m18 0h1m41 0h1m8 0h1m4 0h1m18 0h3m1 0h1m10 0h1m5 0h1m19 0h1m3 0h1m8 0h3m16 0h1m1 0h1m5 0h1M10 153.5h1m9 0h1m8 0h1m5 0h1m9 0h2m34 0h1m11 0h1m10 0h1m2 0h1m1 0h1m2 0h1m18 0h1m4 0h1m1 0h1m6 0h1m35 0h2m10 0h1M4 154.5h1m19 0h1m5 0h1m10 0h2m11 0h1m27 0h1m5 0h1m8 0h2m2 0h1m7 0h1m2 0h2m4 0h1m19 0h1m11 0h1m1 0h3m3 0h1m20 0h1m1 0h1m1 0h1m1 0h1M33 155.5h1m7 0h1m2 0h1m17 0h1m11 0h1m16 0h1m6 0h1m8 0h1m8 0h1m1 0h2m7 0h1m1 0h1m2 0h1m3 0h2m7 0h1m4 0h1m9 0h1M4 156.5h1m20 0h1m27 0h2m6 0h2m17 0h1m2 0h1m1 0h1m4 0h1m10 0h1m17 0h1m15 0h1m3 0h1m6 0h1m1 0h1m1 0h1m15 0h3m17 0h1m11 0h1M20 157.5h2m7 0h1m9 0h1m3 0h1m11 0h1m8 0h1m5 0h1m6 0h1m14 0h1m3 0h1m7 0h1m5 0h2m3 0h3m4 0h1m17 0h1m31 0h2m20 0h1M8 158.5h1m3 0h1m3 0h1m33 0h1m3 0h1m1 0h1m26 0h1m18 0h1m8 0h1m32 0h1m7 0h1m4 0h1m16 0h1m2 0h1m5 0h1m11 0h1M5 159.5h1m14 0h1m4 0h1m28 0h1m1 0h1m7 0h1m7 0h1m15 0h2m12 0h1m1 0h1m8 0h1m24 0h1m1 0h1m2 0h1m5 0h1m22 0h1M18 160.5h2m19 0h1m21 0h1m2 0h1m2 0h1m9 0h2m1 0h1m6 0h1m3 0h1m12 0h1m1 0h1m5 0h1m7 0h1m5 0h1m3 0h1m3 0h2m5 0h1m8 0h2m41 0h1M0 161.5h1m5 0h1m2 0h1m48 0h1m11 0h1m4 0h1m28 0h1m5 0h1m17 0h1m8 0h1m7 0h1m29 0h1m8 0h1m3 0h1m9 0h2M3 162.5h1m11 0h1m14 0h1m5 0h1m3 0h1m17 0h2m2 0h1m11 0h1m5 0h1m2 0h2m15 0h1m7 0h1m6 0h1m4 0h1m9 0h1m2 0h1m15 0h1m1 0h1m7 0h1M8 163.5h1m22 0h2m18 0h1m6 0h1m7 0h2m16 0h1m2 0h1m5 0h2m6 0h1m24 0h1m8 0h1m16 0h1m21 0h1M0 164.5h1m7 0h2m7 0h1m1 0h1m15 0h1m3 0h1m33 0h2m17 0h1m4 0h1m18 0h1m15 0h1m3 0h1m3 0h1m8 0h1m3 0h1m14 0h1m2 0h1m9 0h1m6 0h2m1 0h1m3 0h1M11 165.5h1m2 0h1m4 0h1m27 0h1m10 0h1m1 0h1m6 0h1m17 0h1m1 0h1m6 0h1m9 0h1m55 0h1m7 0h1m30 0h1M16 166.5h1m3 0h1m4 0h1m11 0h1m15 0h1m5 0h1m6 0h1m2 0h1m3 0h1m6 0h2m10 0h1m11 0h1m16 0h1m10 0h2m1 0h1m29 0h1m9 0h1m8 0h1m1 0h1M12 167.5h1m1 0h1m4 0h1m8 0h2m6 0h1m11 0h1m21 0h1m7 0h1m6 0h1m5 0h1m15 0h1m4 0h1m6 0h1m4 0h1m9 0h1m25 0h1m8 0h3m5 0h1m4 0h1m7 0h1m1 0h1m1 0h1m1 0h1m2 0h1M59 168.5h2m6 0h1m15 0h1m20 0h1m1 0h1m1 0h1m26 0h1m5 0h1m2 0h1m19 0h1m15 0h1m17 0h1M6 169.5h1m15 0h1m7 0h1m7 0h2m16 0h1m3 0h1m1 0h1m45 0h1m2 0h1m17 0h1m50 0h1m5 0h1M11 170.5h1m3 0h1m1 0h1m15 0h1m4 0h1m6 0h1m7 0h1m26 0h1m17 0h1m5 0h1m6 0h1m34 0h1m7 0h1m8 0h1m6 0h1m2 0h1M37 171.5h1m20 0h1m4 0h2m10 0h1m1 0h1m7 0h1m5 0h1m8 0h1m1 0h2m1 0h1m2 0h1m8 0h1m8 0h1m17 0h1m2 0h1m9 0h1m4 0h2m4 0h1m3 0h1m3 0h1m11 0h1M3 172.5h1m1 0h1m17 0h1m3 0h1m4 0h1m48 0h1m9 0h1m1 0h1m7 0h1m10 0h1m4 0h1m13 0h1m5 0h1m17 0h1m1 0h1m3 0h1m14 0h1M13 173.5h2m15 0h1m1 0h1m2 0h2m13 0h1m12 0h1m3 0h1m9 0h1m21 0h1m16 0h1m1 0h1m5 0h1m3 0h1m4 0h1m4 0h1m4 0h1m2 0h1m1 0h1m4 0h1m1 0h2m13 0h1m5 0h1m6 0h1m11 0h1M3 174.5h1m16 0h1m1 0h1m5 0h1m2 0h2m2 0h1m16 0h1m5 0h1m10 0h1m7 0h1m8 0h1m5 0h2m3 0h1m10 0h1m8 0h1m6 0h1m2 0h1m1 0h1m7 0h2m1 0h1m12 0h1M1 175.5h1m3 0h1m1 0h1m3 0h1m2 0h1m15 0h1m8 0h1m11 0h1m11 0h1m11 0h1m1 0h1m26 0h1m1 0h1m3 0h2m29 0h1m18 0h1m11 0h1m5 0h1m9 0h1m1 0h1M2 176.5h1m19 0h1m20 0h1m8 0h1m46 0h1m4 0h1m7 0h1m8 0h2m3 0h1m38 0h1m25 0h1M8 177.5h1m1 0h1m9 0h1m3 0h1m2 0h1m10 0h1m2 0h1m32 0h1m9 0h3m2 0h1m8 0h1m4 0h1m12 0h1m2 0h1m5 0h1m1 0h1m25 0h2m8 0h1m11 0h1m5 0h1M10 178.5h1m8 0h3m14 0h1m12 0h1m6 0h1m2 0h1m11 0h1m3 0h1m34 0h2m5 0h1m6 0h1m3 0h3m8 0h1m22 0h2m9 0h1m11 0h1M5 179.5h1m5 0h1m2 0h1m2 0h1m6 0h1m1 0h1m37 0h1m9 0h1m5 0h1m3 0h1m4 0h1m10 0h2m8 0h1m13 0h1m4 0h1m20 0h1m19 0h1m1 0h1m3 0h1m4 0h1M8 180.5h1m17 0h1m14 0h1m1 0h1m10 0h1m2 0h1m7 0h1m28 0h1m3 0h1m11 0h1m23 0h1m22 0h1m2 0h1M2 181.5h1m7 0h1m3 0h2m13 0h1m15 0h1m18 0h1m15 0h1m1 0h1m1 0h1m18 0h1m16 0h1m3 0h1m3 0h1m12 0h1m12 0h1m7 0h2m2 0h1m30 0h1M0 182.5h3m1 0h1m2 0h1m17 0h1m56 0h1m4 0h1m9 0h1m6 0h1m10 0h2m13 0h1m5 0h1m2 0h2m13 0h1m10 0h1m14 0h1m9 0h3M20 183.5h1m1 0h1m26 0h1m15 0h1m3 0h1m3 0h2m2 0h1m16 0h1m2 0h1m7 0h1m15 0h1m17 0h2m1 0h1m4 0h1m3 0h1m29 0h2m16 0h1M0 184.5h1m28 0h1m6 0h1m23 0h1m5 0h2m13 0h1m10 0h1m3 0h1m16 0h1m31 0h2m9 0h1m3 0h1m1 0h1m9 0h1m7 0h1m2 0h1m8 0h1m5 0h1M11 185.5h1m1 0h1m14 0h1m8 0h1m22 0h2m23 0h3m3 0h1m6 0h2m21 0h1m3 0h1m13 0h1m26 0h1m32 0h1M5 186.5h1m13 0h1m15 0h1m4 0h1m10 0h1m1 0h1m2 0h1m3 0h1m18 0h1m2 0h1m3 0h1m7 0h1m9 0h1m25 0h1m28 0h1m4 0h1m22 0h1M40 187.5h1m13 0h1m4 0h1m7 0h1m20 0h1m6 0h1m2 0h1m40 0h1m17 0h1m1 0h2m8 0h1m19 0h1M2 188.5h1m3 0h1m2 0h1m2 0h1m2 0h1m1 0h2m5 0h1m1 0h3m1 0h3m5 0h1m8 0h1m2 0h1m4 0h2m1 0h1m2 0h1m26 0h3m7 0h2m5 0h1m3 0h1m1 0h1m5 0h1m2 0h1m26 0h1m9 0h1m1 0h3m22 0h1m4 0h1M16 189.5h1m9 0h1m3 0h1m18 0h1m14 0h1m5 0h1m21 0h1m2 0h1m7 0h1m2 0h1m10 0h1m5 0h1m5 0h2m6 0h1m37 0h1m19 0h1M2 190.5h1m20 0h1m7 0h1m6 0h2m12 0h2m9 0h1m1 0h1m8 0h1m2 0h1m6 0h1m16 0h1m4 0h1m7 0h1m20 0h1m9 0h1m15 0h1m10 0h2m9 0h1m2 0h2M8 191.5h1m1 0h1m2 0h2m12 0h1m5 0h1m8 0h1m3 0h1m3 0h1m4 0h1m2 0h1m7 0h1m7 0h2m9 0h1m13 0h1m12 0h1m1 0h1m1 0h1m31 0h1m3 0h1m9 0h1m13 0h2m2 0h1m6 0h2M4 192.5h1m5 0h2m10 0h1m12 0h1m1 0h1m1 0h1m18 0h1m4 0h1m2 0h1m8 0h1m4 0h1m2 0h1m17 0h1m4 0h1m12 0h1m3 0h1m7 0h1m4 0h1m18 0h1m2 0h1m27 0h1M7 193.5h1m2 0h1m30 0h3m15 0h1m22 0h1m24 0h1m11 0h1m22 0h1m4 0h2M19 194.5h1m15 0h1m6 0h1m6 0h2m14 0h1m15 0h1m9 0h1m5 0h1m2 0h1m20 0h1m5 0h1m41 0h1m5 0h1m10 0h1M7 195.5h2m1 0h1m1 0h1m3 0h1m12 0h1m12 0h1m3 0h1m7 0h1m13 0h1m5 0h1m3 0h2m1 0h1m17 0h1m34 0h1m14 0h1m19 0h1m9 0h1m2 0h1m4 0h1M6 196.5h1m6 0h1m3 0h1m1 0h1m3 0h1m1 0h1m16 0h1m1 0h1m1 0h1m5 0h1m6 0h1m5 0h1m1 0h1m1 0h1m3 0h1m11 0h1m1 0h1m5 0h1m13 0h1m10 0h1m31 0h1m6 0h1m13 0h1m10 0h1m1 0h1m3 0h1M23 197.5h1m5 0h1m22 0h1m4 0h1m14 0h1m22 0h1m17 0h1m11 0h1m11 0h1m5 0h2m3 0h1m12 0h1m1 0h1m5 0h1m6 0h1m22 0h1M0 198.5h2m5 0h1m2 0h1m36 0h1m6 0h1m7 0h1m5 0h2m19 0h1m5 0h1m3 0h1m3 0h1m21 0h1m29 0h1m1 0h1m1 0h1m7 0h2m5 0h1m19 0h1M3 199.5h1m20 0h1m3 0h1m6 0h1m6 0h1m5 0h1m9 0h1m4 0h1m13 0h1m14 0h1m27 0h2m9 0h1m1 0h1m2 0h1m7 0h1m13 0h1m17 0h1m6 0h1m10 0h1m4 0h1"/><path stroke="#ffb000" d="M3 0.5h1m4 0h1m3 0h1m3 0h1m24 0h1m7 0h1m30 0h1m2 0h1m48 0h1m1 0h1m2 0h1m23 0h1m6 0h1m21 0h1M8 1.5h2m8 0h1m20 0h1m1 0h1m2 0h1m4 0h1m44 0h1m16 0h2m1 0h1m15 0h1m12 0h1m4 0h1m25 0h1m1 0h1m11 0h1m1 0h1M11 2.5h1m3 0h1m9 0h1m14 0h1m6 0h1m2 0h1m36 0h1m2 0h1m8 0h2m22 0h1m1 0h2m8 0h1m11 0h1m1 0h2M5 3.5h1m15 0h1m7 0h1m53 0h1m14 0h1m1 0h1m1 0h1m11 0h1m9 0h1m38 0h2m17 0h1m14 0h1M2 4.5h1m12 0h1m2 0h1m3 0h1m1 0h1m1 0h1m8 0h1m17 0h1m8 0h1m4 0h1m5 0h1m2 0h1m14 0h1m5 0h1m20 0h1m16 0h3m2 0h1m5 0h1m14 0h1m11 0h1m1 0h1m2 0h1M15 5.5h1m12 0h1m12 0h1m5 0h1m3 0h1m5 0h1m6 0h2m46 0h1m27 0h1M0 6.5h1m26 0h1m22 0h1m28 0h1m11 0h1m35 0h1m22 0h1m9 0h1m22 0h1m6 0h1M2 7.5h1m9 0h1m10 0h1m9 0h2m5 0h1m8 0h1m20 0h1m3 0h1m11 0h1m21 0h1m13 0h1m12 0h1m10 0h1m5 0h1m11 0h1m6 0h1m2 0h1m9 0h1m5 0h1M15 8.5h1m6 0h1m12 0h1m23 0h1m2 0h2m2 0h1m4 0h1m6 0h1m6 0h1m12 0h1m26 0h1m16 0h1m4 0h1m9 0h3m5 0h1m2 0h1m6 0h1m12 0h1M18 9.5h1m38 0h1m33 0h1m3 0h1m4 0h1m15 0h2m10 0h1m2 0h3m3 0h1m4 0h1m14 0h1m5 0h1m6 0h1m12 0h1m12 0h1M20 10.5h1m15 0h1m4 0h1m13 0h1m12 0h1m6 0h2m24 0h2m12 0h1m13 0h1m6 0h1m1 0h1m8 0h1m19 0h1m5 0h1m2 0h1m1 0h1M0 11.5h2m4 0h1m9 0h1m14 0h1m7 0h1m4 0h1m5 0h1m28 0h1m1 0h1m3 0h1m2 0h1m10 0h1m2 0h1m35 0h1m6 0h1m30 0h2m11 0h1M6 12.5h1m33 0h1m4 0h2m9 0h1m7 0h1m15 0h1m2 0h1m36 0h1m3 0h1m24 0h1m6 0h2m10 0h1m21 0h1M8 13.5h1m2 0h1m6 0h2m34 0h2m23 0h1m3 0h1m5 0h1m46 0h1m31 0h1m4 0h1m3 0h1m9 0h1m3 0h1M14 14.5h1m3 0h1m11 0h1m8 0h1m5 0h1m45 0h1m6 0h1m2 0h1m7 0h2m10 0h1m6 0h1m1 0h1m34 0h1m2 0h1m3 0h1m16 0h1M2 15.5h1m16 0h1m5 0h1m23 0h1m1 0h1m30 0h2m15 0h1m13 0h1m1 0h1m5 0h2m15 0h1m1 0h1m11 0h1m8 0h1m5 0h1m1 0h1M2 16.5h1m22 0h1m24 0h1m20 0h1m7 0h1m5 0h1m17 0h1m12 0h1m10 0h1m1 0h1m2 0h1m9 0h1m2 0h1m15 0h1m8 0h1m27 0h1M45 17.5h1m3 0h1m20 0h1m13 0h1m14 0h1m18 0h1m4 0h1m28 0h1m9 0h1m3 0h1m10 0h1m1 0h1m10 0h1M12 18.5h1m14 0h1m2 0h1m7 0h1m1 0h1m7 0h1m8 0h1m29 0h1m19 0h1m7 0h1m1 0h1m10 0h1m4 0h2m18 0h1m25 0h1m9 0h1m1 0h1m1 0h1m5 0h1M5 19.5h1m9 0h1m7 0h1m10 0h1m7 0h1m46 0h1m29 0h1m3 0h1m10 0h1m39 0h1m2 0h1m4 0h1m8 0h1M15 20.5h1m3 0h1m1 0h1m30 0h1m9 0h1m9 0h1m24 0h1m5 0h1m2 0h1m10 0h1m3 0h2m10 0h1m1 0h1m9 0h1m14 0h1m6 0h1M5 21.5h1m5 0h1m3 0h1m3 0h1m1 0h1m9 0h1m10 0h1m2 0h1m14 0h1m8 0h2m19 0h1m17 0h2m5 0h1m3 0h1m7 0h1m28 0h1m8 0h1m18 0h1m6 0h1M3 22.5h1m54 0h1m5 0h1m21 0h1m8 0h1m3 0h1m12 0h1m19 0h2m5 0h1m4 0h1m16 0h1m1 0h1m4 0h1m3 0h1m9 0h1m13 0h2M19 23.5h1m2 0h1m23 0h1m19 0h2m2 0h1m22 0h1m1 0h1m16 0h1m6 0h1m12 0h2m19 0h1m29 0h2m7 0h2M4 24.5h1m2 0h1m16 0h1m31 0h1m4 0h1m38 0h1m4 0h1m8 0h1m20 0h1m2 0h1m19 0h2m17 0h1m8 0h1m2 0h1m1 0h1m3 0h1m1 0h2M9 25.5h1m17 0h1m8 0h1m5 0h1m15 0h1m3 0h1m13 0h1m19 0h1m5 0h1m2 0h1m16 0h1m4 0h2m6 0h1m6 0h1m3 0h1m18 0h1m11 0h2m18 0h1M10 26.5h1m26 0h1m3 0h1m20 0h1m11 0h1m21 0h1m13 0h1m8 0h1m7 0h1m9 0h1m8 0h1m22 0h1m8 0h1m11 0h1m2 0h1M19 27.5h1m3 0h1m17 0h2m13 0h1m33 0h1m16 0h1m3 0h1m1 0h1m3 0h1m1 0h1m4 0h2m5 0h1m26 0h1m19 0h1m2 0h1m1 0h1m1 0h1M2 28.5h1m7 0h1m6 0h1m5 0h2m5 0h1m59 0h1m1 0h1m17 0h1m3 0h1m9 0h1m21 0h1m19 0h1m7 0h1m4 0h1m12 0h1M2 29.5h2m13 0h2m40 0h1m1 0h1m1 0h1m14 0h1m1 0h1m1 0h1m5 0h1m7 0h1m14 0h1m5 0h2m6 0h1m3 0h1m8 0h1m1 0h1m9 0h1m12 0h1m8 0h1m16 0h1M2 30.5h1m29 0h1m22 0h2m12 0h1m26 0h1m8 0h1m20 0h2m4 0h1m3 0h1m33 0h1m7 0h1M25 31.5h1m14 0h1m8 0h1m4 0h1m21 0h1m1 0h2m1 0h2m1 0h1m20 0h1m3 0h1m28 0h1m12 0h1m5 0h1m11 0h1m2 0h1m3 0h1m1 0h1m2 0h1m16 0h1M16 32.5h1m21 0h1m2 0h1m1 0h1m43 0h1m11 0h1m8 0h1m3 0h1m12 0h1m4 0h1m13 0h1m3 0h1m10 0h2m6 0h1m1 0h1m9 0h1m9 0h1M4 33.5h1m60 0h1m4 0h1m1 0h1m2 0h1m8 0h1m2 0h1m23 0h1m18 0h1m7 0h1m3 0h1m4 0h1m24 0h1m25 0h2M10 34.5h1m11 0h1m1 0h1m14 0h2m7 0h1m4 0h1m26 0h1m8 0h1m11 0h1m20 0h1m13 0h1m14 0h1m8 0h1m3 0h1m10 0h1m22 0h1M38 35.5h1m15 0h1m21 0h1m2 0h1m28 0h1m13 0h1m35 0h1m2 0h1m12 0h1m13 0h1m10 0h1M6 36.5h1m24 0h1m8 0h1m7 0h1m2 0h1m8 0h1m42 0h1m7 0h1m2 0h1m12 0h1m3 0h1m13 0h1m14 0h1m1 0h1m9 0h1m14 0h1M7 37.5h1m12 0h1m17 0h1m4 0h1m9 0h1m1 0h1m6 0h1m11 0h1m3 0h1m1 0h2m2 0h1m14 0h1m2 0h1m4 0h1m32 0h3m6 0h1m3 0h1m30 0h2m8 0h3M8 38.5h1m3 0h1m14 0h1m7 0h1m10 0h1m2 0h1m9 0h1m17 0h1m4 0h1m11 0h1m2 0h1m4 0h2m5 0h1m12 0h1m47 0h1m22 0h1M67 39.5h1m11 0h1m1 0h2m18 0h1m7 0h1m2 0h1m3 0h1m9 0h1m2 0h1m6 0h1m12 0h1m23 0h1m1 0h1m6 0h1m2 0h2M17 40.5h1m1 0h1m9 0h1m16 0h1m2 0h1m1 0h1m16 0h1m7 0h1m12 0h1m44 0h1m1 0h1m7 0h1m1 0h1m28 0h1m6 0h1m6 0h2M5 41.5h1m15 0h1m22 0h1m9 0h1m5 0h1m11 0h1m4 0h1m1 0h1m21 0h1m19 0h1m8 0h1m15 0h1m6 0h1m6 0h1m13 0h1m24 0h1M27 42.5h1m28 0h1m20 0h1m5 0h1m24 0h1m4 0h1m10 0h2m3 0h1m7 0h1m13 0h2m29 0h1M8 43.5h1m7 0h1m33 0h1m34 0h1m5 0h1m14 0h1m9 0h1m4 0h1m17 0h2m5 0h1m2 0h1m12 0h2m11 0h1m4 0h1m1 0h1m3 0h1M19 44.5h1m12 0h2m7 0h1m6 0h1m6 0h1m3 0h1m1 0h4m24 0h1m5 0h1m4 0h1m6 0h2m3 0h1m17 0h1m18 0h1m1 0h1m11 0h1m11 0h1m4 0h1m16 0h1M3 45.5h1m37 0h1m10 0h1m21 0h1m17 0h1m8 0h1m30 0h1m10 0h1m10 0h1m2 0h1m24 0h1m14 0h1M36 46.5h1m15 0h1m9 0h1m2 0h1m34 0h1M1 47.5h1m7 0h1m8 0h1m5 0h3m1 0h1m36 0h1m3 0h1m6 0h2m24 0h1m6 0h1m42 0h1m36 0h1m9 0h1M2 48.5h1m7 0h1m7 0h1m12 0h1m37 0h1m7 0h1m24 0h1m13 0h1m10 0h1m3 0h1m1 0h1m27 0h1m17 0h1m6 0h1m5 0h1M6 49.5h1m7 0h1m1 0h1m1 0h1m9 0h1m2 0h1m5 0h1m12 0h1m10 0h1m5 0h1m5 0h1m27 0h1m13 0h1m16 0h1m6 0h2m14 0h1m29 0h1m2 0h1M2 50.5h1m1 0h1m1 0h1m2 0h1m11 0h1m4 0h1m11 0h1m9 0h1m6 0h1m7 0h2m12 0h1m14 0h1m40 0h2m9 0h2m18 0h1m1 0h1m2 0h1m18 0h1M4 51.5h1m1 0h1m9 0h1m16 0h1m19 0h1m1 0h1m10 0h1m36 0h1m3 0h1m7 0h1m2 0h2m10 0h1m28 0h1m11 0h1m9 0h1m1 0h1m10 0h1M28 52.5h1m8 0h1m8 0h1m7 0h1m7 0h1m8 0h1m3 0h1m4 0h1m2 0h1m2 0h1m6 0h1m11 0h1m17 0h1m3 0h1m9 0h1m2 0h1m12 0h1m23 0h1M3 53.5h1m13 0h1m42 0h1m12 0h1m7 0h1m14 0h1m7 0h2m2 0h1m7 0h1m8 0h1m2 0h1m4 0h2m4 0h1m1 0h1m2 0h1m1 0h2m4 0h2m8 0h1m24 0h2M5 54.5h1m6 0h1m35 0h1m2 0h1m1 0h1m19 0h2m3 0h2m60 0h1m22 0h1m16 0h1M36 55.5h1m9 0h1m2 0h1m10 0h1m6 0h1m8 0h1m14 0h2m9 0h1m2 0h1m11 0h1m2 0h1m5 0h1m15 0h1m3 0h1m20 0h1m19 0h1M26 56.5h1m13 0h1m6 0h1m1 0h1m22 0h1m4 0h1m26 0h1m52 0h1m3 0h1m15 0h1m2 0h1m2 0h1m3 0h1m7 0h2M10 57.5h1m17 0h1m11 0h1m3 0h1m10 0h1m35 0h1m3 0h2m13 0h1m4 0h1m26 0h1m10 0h1m35 0h1M2 58.5h1m5 0h2m5 0h1m14 0h1m21 0h1m3 0h1m1 0h1m16 0h1m24 0h2m3 0h1m10 0h1m3 0h1m11 0h1m8 0h2m39 0h1m4 0h1m3 0h1m2 0h1m4 0h1M4 59.5h1m2 0h1m27 0h1m6 0h1m24 0h1m15 0h1m3 0h1m16 0h1m24 0h1m9 0h1m13 0h1m23 0h1m1 0h1m3 0h1M0 60.5h1m7 0h1m29 0h1m6 0h1m8 0h1m12 0h1m6 0h1m25 0h1m6 0h1m1 0h1m29 0h1m1 0h1m4 0h1m9 0h1m14 0h1m15 0h1M7 61.5h1m1 0h1m14 0h1m4 0h1m9 0h1m7 0h1m2 0h1m4 0h1m9 0h1m5 0h1m39 0h1m13 0h1m7 0h1m1 0h1m3 0h1m28 0h1m18 0h1m4 0h1M30 62.5h1m15 0h1m2 0h1m25 0h1m37 0h1m1 0h1m12 0h1m8 0h1m23 0h1m6 0h2m2 0h1m13 0h1M5 63.5h1m8 0h1m23 0h1m4 0h1m5 0h1m11 0h1m19 0h1m8 0h1m10 0h1m2 0h1m10 0h1m8 0h1m8 0h1m12 0h1m7 0h1m10 0h1m4 0h1m2 0h1m2 0h1M2 64.5h1m5 0h1m10 0h1m13 0h1m8 0h2m15 0h1m6 0h1m10 0h1m16 0h1m8 0h1m1 0h1m4 0h1m5 0h1m4 0h1m39 0h1m4 0h1m1 0h1m5 0h1m2 0h1m1 0h2m11 0h1M0 65.5h1m7 0h1m22 0h1m8 0h1m5 0h1m90 0h1m1 0h1m9 0h1m9 0h1m5 0h1M6 66.5h1m15 0h1m22 0h1m12 0h1m8 0h1m16 0h1m6 0h1m16 0h1m13 0h1m4 0h1m16 0h1m13 0h1m3 0h1m24 0h1m6 0h1M4 67.5h2m21 0h1m2 0h1m27 0h1m4 0h1m1 0h1m1 0h1m10 0h1m12 0h1m5 0h1m10 0h1m12 0h2m1 0h1m11 0h2m9 0h1m8 0h1m9 0h1m1 0h1m3 0h1m5 0h1m16 0h1m3 0h1M14 68.5h1m7 0h1m1 0h1m1 0h1m5 0h1m10 0h1m7 0h1m2 0h1m25 0h1m19 0h1m32 0h1m32 0h1m23 0h1M3 69.5h1m21 0h2m2 0h1m1 0h1m14 0h1m3 0h1m19 0h1m2 0h1m4 0h1m4 0h1m3 0h1m4 0h1m2 0h1m6 0h1m4 0h1m18 0h1m21 0h1m20 0h1m5 0h1m10 0h1m9 0h1M4 70.5h1m13 0h1m4 0h1m7 0h2m8 0h1m27 0h1m18 0h1m15 0h1m10 0h1m9 0h1m7 0h1m3 0h1m28 0h1m5 0h1m7 0h1m7 0h1m4 0h1m3 0h1M4 71.5h1m15 0h1m4 0h1m7 0h1m3 0h1m4 0h1m15 0h1m10 0h1m10 0h1m6 0h1m1 0h1m3 0h1m4 0h1m12 0h1m7 0h1m15 0h1m14 0h1m5 0h1m21 0h1m14 0h1M5 72.5h2m7 0h2m17 0h1m15 0h1m8 0h1m6 0h1m26 0h1m2 0h1m25 0h1m7 0h1m8 0h1m19 0h1m13 0h1m8 0h2m5 0h1M7 73.5h1m23 0h1m63 0h1m2 0h1m4 0h1m6 0h1m16 0h1m2 0h1m8 0h2m5 0h1m28 0h1m2 0h2m2 0h1m6 0h1M11 74.5h1m20 0h2m3 0h1m2 0h1m30 0h1m26 0h1m11 0h1m3 0h1m7 0h1m1 0h1m15 0h1m9 0h1m4 0h1m4 0h1m4 0h1m11 0h1m9 0h1M11 75.5h1m30 0h1m26 0h1m32 0h1m2 0h1m18 0h1m11 0h1m5 0h1m14 0h1m7 0h2m3 0h1m4 0h1m1 0h1M1 76.5h1m1 0h2m15 0h1m10 0h1m21 0h1m25 0h2m11 0h1m4 0h1m21 0h1m10 0h1m9 0h1m6 0h1m22 0h1m14 0h1m1 0h1m8 0h1m1 0h1M3 77.5h1m5 0h2m1 0h1m17 0h1m7 0h1m5 0h1m4 0h1m25 0h1m4 0h1m15 0h1m18 0h1m29 0h1m3 0h1m31 0h1m8 0h1M11 78.5h1m26 0h1m18 0h1m1 0h1m30 0h1m1 0h2m2 0h1m16 0h1m19 0h1m39 0h3m3 0h1m19 0h1M1 79.5h1m8 0h1m9 0h1m15 0h1m30 0h1m51 0h1m9 0h1m2 0h1m20 0h1m10 0h1m1 0h1m5 0h1m5 0h1m2 0h1m2 0h1M1 80.5h1m14 0h1m4 0h1m21 0h1m1 0h1m15 0h1m1 0h1m6 0h1m5 0h1m1 0h1m2 0h1m12 0h1m23 0h1m6 0h1m10 0h1m6 0h1m10 0h1m2 0h1m1 0h1M1 81.5h1m9 0h1m11 0h1m3 0h1m2 0h1m10 0h1m7 0h1m53 0h1m9 0h1m8 0h1m3 0h1m17 0h2m14 0h1m16 0h1m3 0h1M16 82.5h1m5 0h1m1 0h3m5 0h1m1 0h1m5 0h1m1 0h1m15 0h1m31 0h1m26 0h1m2 0h1m20 0h1m11 0h1m4 0h1m16 0h1m19 0h1M4 83.5h1m8 0h1m28 0h1m11 0h1m15 0h2m62 0h1m7 0h1m2 0h1m25 0h1m17 0h2M11 84.5h1m16 0h1m4 0h2m4 0h1m12 0h2m16 0h1m3 0h1m20 0h1m46 0h1m4 0h1m17 0h1m15 0h1m9 0h1M11 85.5h1m11 0h1m11 0h1m2 0h1m2 0h2m6 0h1m9 0h1m2 0h1m7 0h1m5 0h1m21 0h2m61 0h1m1 0h1m15 0h1M9 86.5h1m18 0h1m7 0h1m11 0h1m7 0h1m17 0h1m17 0h1m26 0h1m20 0h1m6 0h1m20 0h1m12 0h1m3 0h1M16 87.5h1m8 0h1m14 0h1m17 0h1m3 0h2m3 0h1m10 0h1m3 0h1m5 0h1m17 0h1m4 0h1m1 0h1m3 0h1m17 0h1m7 0h1m20 0h1m1 0h1m21 0h1M9 88.5h2m2 0h1m2 0h1m2 0h1m8 0h1m14 0h1m14 0h1m15 0h1m4 0h2m5 0h1m11 0h1m30 0h1m18 0h2m3 0h1m4 0h1m4 0h1m9 0h1m2 0h2m16 0h1m1 0h1M24 89.5h1m3 0h1m4 0h1m8 0h1m2 0h1m2 0h1m9 0h1m3 0h1m28 0h1m37 0h1m5 0h1m14 0h2m1 0h2m10 0h2m5 0h1m14 0h1m1 0h1m5 0h1M13 90.5h1m7 0h1m11 0h1m23 0h1m1 0h1m8 0h1m10 0h1m4 0h1m11 0h1m7 0h1m38 0h1m8 0h1m26 0h1m3 0h1m9 0h1M17 91.5h1m3 0h1m27 0h1m19 0h1m13 0h1m8 0h1m18 0h1m3 0h1m20 0h1m19 0h1m2 0h1m21 0h2m7 0h1M26 92.5h1m3 0h1m4 0h1m3 0h1m2 0h1m4 0h1m23 0h1m2 0h1m39 0h1m1 0h1m31 0h1m1 0h1m3 0h1m1 0h1M27 93.5h1m8 0h1m2 0h1m20 0h1m5 0h1m5 0h1m4 0h1m8 0h1m13 0h1m3 0h1m2 0h1m12 0h1m3 0h1m17 0h1m11 0h1m26 0h1M0 94.5h1m10 0h1m3 0h1m2 0h1m1 0h1m13 0h1m17 0h1m1 0h1m5 0h1m5 0h1m2 0h1m11 0h1m8 0h1m6 0h1m31 0h1m6 0h1m9 0h1m11 0h1m23 0h1m4 0h1m2 0h1m1 0h1m4 0h1M3 95.5h1m30 0h1m11 0h1m2 0h1m9 0h1m22 0h1m9 0h1m2 0h1m23 0h1m2 0h1m10 0h1m3 0h1m11 0h1m7 0h2m6 0h1m11 0h1m1 0h1M8 96.5h2m7 0h1m11 0h1m8 0h1m23 0h1m31 0h1m4 0h1m15 0h1m23 0h1m32 0h1m2 0h1m12 0h1M1 97.5h1m18 0h1m7 0h1m4 0h1m20 0h2m18 0h2m3 0h1m1 0h1m19 0h1m11 0h1m13 0h1m40 0h1m8 0h1m8 0h1m2 0h1M13 98.5h1m24 0h1m3 0h1m9 0h1m3 0h1m2 0h1m19 0h1m4 0h1m5 0h2m15 0h1m1 0h1m7 0h1m2 0h1m2 0h1m3 0h2m1 0h1m1 0h1m8 0h1m57 0h1M9 99.5h1m2 0h1m2 0h2m8 0h1m22 0h1m19 0h1m9 0h2m11 0h1m3 0h1m5 0h1m6 0h1m4 0h1m20 0h1m1 0h1m7 0h1m10 0h1m18 0h1m3 0h1m2 0h1M2 100.5h1m31 0h1m3 0h1m1 0h1m2 0h1m29 0h1m2 0h1m8 0h1m5 0h1m6 0h1m10 0h1m11 0h2m2 0h1m9 0h1m7 0h1m27 0h1m3 0h1m3 0h1m16 0h1M0 101.5h1m2 0h1m29 0h1m7 0h1m21 0h1m3 0h1m5 0h1m1 0h1m13 0h1m2 0h1m8 0h1m2 0h1m8 0h1m14 0h1m2 0h1m19 0h1m10 0h1m1 0h1m8 0h1m16 0h1M20 102.5h1m4 0h1m17 0h2m1 0h1m27 0h1m12 0h1m3 0h1m19 0h1m32 0h1m9 0h1m8 0h1m6 0h1m2 0h2m23 0h1M6 103.5h1m2 0h1m3 0h1m1 0h1m3 0h1m1 0h1m4 0h1m25 0h2m3 0h1m20 0h1m1 0h1m5 0h1m12 0h1m6 0h1m17 0h1m6 0h1m1 0h1m13 0h1m3 0h1m11 0h1m1 0h1m2 0h1m5 0h1m1 0h1M12 104.5h1m19 0h1m6 0h1m12 0h1m18 0h1m15 0h1m6 0h1m7 0h1m27 0h1m3 0h1m3 0h1m26 0h1m1 0h1m3 0h1M15 105.5h1m22 0h1m16 0h1m19 0h2m8 0h1m2 0h1m17 0h1m4 0h1m28 0h1m8 0h1m2 0h1m12 0h1m26 0h1m5 0h1M0 106.5h1m16 0h1m4 0h1m1 0h1m1 0h1m11 0h2m12 0h2m2 0h1m8 0h1m7 0h1m11 0h1m6 0h1m3 0h1m7 0h1m1 0h1m22 0h1m21 0h1m8 0h1m9 0h1m19 0h1m4 0h1M38 107.5h1m11 0h1m1 0h1m5 0h1m8 0h2m4 0h1m4 0h1m4 0h1m5 0h1m4 0h1m33 0h1m8 0h2m1 0h1m10 0h1M12 108.5h1m3 0h1m16 0h1m5 0h1m2 0h1m9 0h1m8 0h1m13 0h1m28 0h1m2 0h1m16 0h1m5 0h1m15 0h1m5 0h1m5 0h1m8 0h1m2 0h1m3 0h1m4 0h1m7 0h1m11 0h1M10 109.5h1m16 0h1m5 0h1m5 0h1m15 0h1m9 0h1m3 0h1m2 0h1m20 0h1m3 0h1m2 0h1m8 0h1m2 0h1m23 0h1m6 0h2m3 0h1m3 0h1m8 0h1m11 0h2m13 0h1m4 0h1M7 110.5h1m8 0h1m3 0h1m44 0h2m8 0h1m8 0h1m2 0h1m5 0h1m26 0h1m22 0h1m12 0h1m1 0h1m2 0h1m5 0h1M1 111.5h1m2 0h1m11 0h1m48 0h2m3 0h1m34 0h1m2 0h1m24 0h1m7 0h1m4 0h1m12 0h1m4 0h1m6 0h1m13 0h1m8 0h1M12 112.5h2m6 0h1m8 0h1m2 0h1m24 0h1m1 0h1m4 0h1m19 0h1m28 0h3m2 0h1m35 0h1m3 0h2m3 0h1m2 0h1m11 0h1m2 0h1m3 0h1m13 0h1M20 113.5h1m9 0h1m16 0h1m13 0h1m6 0h1m3 0h1m9 0h1m1 0h1m5 0h1m3 0h1m13 0h1m12 0h1m30 0h1m1 0h1m23 0h1m17 0h1m2 0h1M28 114.5h1m4 0h2m43 0h1m7 0h1m22 0h2m17 0h1m22 0h1m4 0h1m29 0h1M36 115.5h1m12 0h1m7 0h1m11 0h1m1 0h1m8 0h1m16 0h1m16 0h1m10 0h1m11 0h1m21 0h1m31 0h1m5 0h1M25 116.5h1m3 0h1m6 0h1m5 0h1m17 0h1m1 0h1m21 0h1m12 0h1m23 0h1m21 0h1m18 0h1m4 0h1m9 0h1m1 0h1m1 0h1m1 0h1m3 0h2m5 0h1M27 117.5h1m8 0h1m16 0h1m19 0h1m22 0h1m8 0h1m36 0h1m3 0h1m8 0h1m5 0h1m1 0h1m3 0h1m9 0h1M23 118.5h1m7 0h1m20 0h2m16 0h1m10 0h1m5 0h1m17 0h1m6 0h1m32 0h1m11 0h1m26 0h1M1 119.5h1m7 0h1m3 0h1m4 0h1m4 0h1m5 0h1m13 0h1m13 0h1m1 0h1m3 0h1m1 0h1m15 0h1m6 0h1m2 0h1m1 0h1m5 0h1m4 0h1m2 0h1m15 0h1m6 0h1m29 0h1m29 0h1M13 120.5h1m1 0h1m1 0h1m2 0h2m13 0h1m2 0h1m12 0h1m42 0h1m2 0h2m24 0h1m3 0h1m9 0h1m5 0h1m13 0h1m2 0h1m7 0h1m2 0h1m16 0h2m2 0h1m1 0h1M18 121.5h1m23 0h2m5 0h1m10 0h2m1 0h1m7 0h1m23 0h3m10 0h1m7 0h1m1 0h2m2 0h1m13 0h1m13 0h1m2 0h2m11 0h1m28 0h1M9 122.5h1m6 0h1m5 0h1m7 0h1m22 0h1m36 0h1m1 0h1m2 0h1m1 0h1m2 0h1m8 0h1m16 0h1m17 0h1m18 0h1m14 0h1m5 0h1M11 123.5h1m14 0h1m2 0h1m11 0h1m25 0h1m8 0h1m10 0h1m10 0h1m20 0h1m20 0h1m6 0h1m7 0h1m19 0h1m2 0h1m4 0h1M10 124.5h1m2 0h1m15 0h1m16 0h1m16 0h1m6 0h2m3 0h1m2 0h1m6 0h1m6 0h1m5 0h1m5 0h1m2 0h1m24 0h1m7 0h2m1 0h1m4 0h1m13 0h1m2 0h1m10 0h1M14 125.5h2m10 0h1m8 0h1m7 0h1m1 0h1m16 0h1m6 0h3m27 0h2m15 0h1m7 0h1m7 0h1m16 0h1m7 0h1M8 126.5h1m1 0h1m15 0h1m2 0h1m24 0h1m39 0h1m5 0h1m5 0h1m33 0h1m9 0h1m3 0h1m2 0h2m2 0h1m31 0h2M40 127.5h1m14 0h1m3 0h1m11 0h1m11 0h2m62 0h1m3 0h1m3 0h1m5 0h1m10 0h1m3 0h1m9 0h1m7 0h1M4 128.5h1m17 0h1m32 0h2m10 0h1m4 0h3m5 0h1m5 0h1m55 0h1m5 0h1m5 0h1m12 0h1m6 0h1m5 0h1m2 0h1M1 129.5h1m3 0h1m10 0h1m5 0h1m22 0h1m26 0h1m7 0h1m12 0h1m24 0h1m6 0h1m9 0h1m7 0h1m12 0h2m2 0h1m5 0h1m6 0h1m11 0h1m12 0h1M2 130.5h1m5 0h1m10 0h2m17 0h1m16 0h1m16 0h1m15 0h1m34 0h2m10 0h1m1 0h1m19 0h1m21 0h1M15 131.5h1m5 0h1m21 0h1m24 0h1m4 0h1m1 0h1m1 0h1m9 0h1m22 0h1m6 0h1m20 0h3m2 0h1m2 0h1m4 0h1m8 0h1m2 0h1m14 0h1m7 0h1m4 0h1M1 132.5h2m8 0h1m3 0h1m2 0h1m1 0h1m14 0h1m5 0h1m5 0h1m8 0h1m3 0h1m5 0h1m1 0h1m29 0h1m1 0h1m3 0h1m10 0h1m13 0h1m2 0h1m11 0h1m9 0h1m31 0h2m4 0h2M3 133.5h1m4 0h1m19 0h1m17 0h1m2 0h1m16 0h1m2 0h1m6 0h1m17 0h1m8 0h1m1 0h1m46 0h1m28 0h1M2 134.5h2m17 0h1m16 0h2m7 0h1m2 0h1m1 0h1m8 0h1m8 0h1m13 0h1m11 0h1m5 0h1m24 0h1m15 0h1m4 0h1m17 0h1m10 0h1m6 0h1M1 135.5h1m11 0h2m16 0h1m1 0h1m18 0h1m34 0h1m1 0h1m3 0h2m3 0h1m11 0h1m4 0h1m3 0h1m11 0h1m33 0h1m9 0h1m15 0h1m4 0h1M6 136.5h1m22 0h1m11 0h1m29 0h1m8 0h1m6 0h1m8 0h1m1 0h1m35 0h1m8 0h1m25 0h2m3 0h1m18 0h1M15 137.5h1m4 0h1m12 0h1m8 0h1m6 0h3m1 0h1m1 0h1m20 0h1m3 0h1m4 0h1m16 0h1m4 0h1m5 0h1m8 0h1m6 0h1m4 0h1m9 0h1m27 0h1m7 0h1m5 0h1m3 0h1m5 0h1M29 138.5h1m2 0h1m11 0h1m19 0h2m2 0h2m25 0h1m29 0h1m6 0h1m11 0h1m1 0h1m2 0h1m10 0h1m3 0h1m1 0h1m1 0h1m7 0h1m3 0h1m2 0h2M0 139.5h1m27 0h1m16 0h1m5 0h1m1 0h1m4 0h1m1 0h1m2 0h1m1 0h1m2 0h2m12 0h1m22 0h1m10 0h1m11 0h1m1 0h1m11 0h1m3 0h1m18 0h1m11 0h2m5 0h2m1 0h1m7 0h1M3 140.5h1m15 0h2m17 0h1m3 0h1m16 0h1m8 0h1m2 0h1m23 0h1m5 0h1m1 0h1m10 0h1m3 0h1m23 0h2m3 0h1m17 0h1m17 0h1m2 0h1m5 0h1m5 0h1M1 141.5h1m8 0h1m19 0h1m16 0h1m8 0h1m2 0h1m14 0h1m6 0h1m2 0h1m12 0h1m11 0h1m9 0h2m6 0h2m8 0h1m14 0h1m7 0h1m13 0h2m2 0h1M2 142.5h1m4 0h1m3 0h1m3 0h1m6 0h1m7 0h1m13 0h1m6 0h1m7 0h1m46 0h1m18 0h1m25 0h1m33 0h1M19 143.5h1m5 0h1m1 0h1m1 0h1m6 0h1m1 0h2m6 0h1m6 0h1m22 0h1m1 0h1m1 0h2m19 0h1m4 0h1m14 0h2m3 0h1m6 0h2m7 0h1m5 0h1m7 0h1m5 0h1m5 0h1m13 0h1m14 0h1M8 144.5h1m2 0h1m8 0h2m3 0h1m31 0h2m4 0h1m18 0h1m1 0h1m14 0h2m14 0h1m39 0h1m14 0h1m5 0h1m8 0h2m4 0h1M8 145.5h1m55 0h2m12 0h2m5 0h1m4 0h1m4 0h1m13 0h1m7 0h1m12 0h1m7 0h1m12 0h1m9 0h1m19 0h1M35 146.5h1m18 0h1m6 0h1m2 0h1m4 0h1m41 0h1m25 0h1m2 0h1m21 0h1m4 0h1m13 0h1m3 0h2m10 0h1M0 147.5h1m17 0h2m6 0h1m18 0h1m1 0h1m4 0h1m2 0h1m4 0h1m3 0h1m8 0h1m16 0h1m2 0h1m4 0h1m2 0h1m7 0h1m8 0h1m5 0h1m46 0h1M14 148.5h1m14 0h1m16 0h1m9 0h1m10 0h1m13 0h1m4 0h1m2 0h1m1 0h1m5 0h1m3 0h1m15 0h1m25 0h1m1 0h1m10 0h1m5 0h1m1 0h1m12 0h1M2 149.5h1m16 0h1m2 0h1m8 0h1m19 0h2m10 0h1m32 0h1m12 0h1m5 0h1m47 0h1m9 0h1m3 0h1m18 0h1M25 150.5h1m4 0h1m7 0h2m5 0h1m1 0h1m3 0h1m6 0h1m8 0h1m2 0h1m5 0h1m8 0h1m4 0h1m1 0h1m15 0h1m12 0h1m33 0h1m8 0h1m20 0h1m9 0h1M11 151.5h1m7 0h1m6 0h1m11 0h1m2 0h2m1 0h1m7 0h1m6 0h1m22 0h1m16 0h1m5 0h1m10 0h1m14 0h2m1 0h1m8 0h1m4 0h1m20 0h1M1 152.5h1m11 0h1m36 0h1m1 0h1m6 0h2m10 0h1m30 0h1m2 0h1m5 0h1m8 0h1m7 0h2m9 0h1m4 0h1m3 0h1m7 0h1m6 0h2M31 153.5h1m2 0h1m15 0h1m4 0h1m8 0h1m31 0h1m8 0h1m7 0h1m8 0h1m12 0h1m12 0h1m12 0h1m7 0h1m2 0h2m12 0h1M28 154.5h1m3 0h1m17 0h1m1 0h2m1 0h1m2 0h1m1 0h1m22 0h1m26 0h1m45 0h1m2 0h1M15 155.5h1m12 0h1m8 0h1m5 0h1m10 0h1m5 0h1m20 0h1m18 0h1m1 0h1m86 0h1m1 0h1M7 156.5h1m12 0h1m5 0h1m3 0h1m4 0h1m2 0h1m9 0h1m10 0h1m11 0h1m17 0h1m8 0h1m5 0h1m21 0h1m6 0h1m38 0h1m7 0h1m3 0h1m3 0h1m1 0h1M7 157.5h1m5 0h1m8 0h1m8 0h1m15 0h1m1 0h1m29 0h1m10 0h1m22 0h1m7 0h1m2 0h1m10 0h3m4 0h1m6 0h1m3 0h1m13 0h2m1 0h1m5 0h1m1 0h1m3 0h2m11 0h1m3 0h1M30 158.5h1m3 0h1m4 0h1m38 0h1m12 0h1m9 0h1m5 0h1m11 0h1m7 0h1m10 0h1m27 0h1m6 0h1m5 0h2M2 159.5h1m13 0h2m29 0h1m4 0h1m12 0h1m25 0h1m15 0h1m9 0h1m9 0h2m1 0h1m6 0h1m1 0h1m20 0h1m3 0h1m9 0h1m5 0h1m1 0h1m3 0h1m2 0h1m3 0h1M1 160.5h1m11 0h1m18 0h1m5 0h1m36 0h1m3 0h1m4 0h2m8 0h1m10 0h1m7 0h1m19 0h1m4 0h1m3 0h1m6 0h1m11 0h2m4 0h1m12 0h1m3 0h1m11 0h1M25 161.5h1m5 0h1m5 0h1m4 0h1m1 0h1m9 0h1m1 0h1m27 0h1m2 0h1m9 0h1m1 0h1m22 0h2m3 0h1m7 0h2m1 0h1m1 0h1m2 0h2m3 0h1m1 0h1m1 0h1m4 0h2m18 0h1m3 0h2M11 162.5h1m6 0h1m8 0h1m1 0h1m18 0h1m40 0h1m8 0h1m8 0h1m6 0h1m39 0h1m2 0h1m4 0h1m9 0h1m2 0h1m5 0h1m17 0h1M1 163.5h1m33 0h1m1 0h1m17 0h1m3 0h1m3 0h1m12 0h1m1 0h1m35 0h1m4 0h2m9 0h1m3 0h1m2 0h1m1 0h2m3 0h1m9 0h1m13 0h2m5 0h1m21 0h2M3 164.5h1m72 0h1m46 0h1m1 0h2M24 165.5h1m3 0h1m5 0h1m16 0h1m10 0h1m8 0h1m6 0h1m4 0h2m12 0h1m12 0h1m5 0h1m5 0h1m14 0h1m23 0h1m7 0h1m2 0h1m10 0h1m2 0h1m9 0h1m1 0h1M0 166.5h1m8 0h1m11 0h1m19 0h1m14 0h1m3 0h1m2 0h1m6 0h1m15 0h1m2 0h1m15 0h1m3 0h1m15 0h1m30 0h1m4 0h1m25 0h1m11 0h1M3 167.5h1m9 0h1m7 0h1m11 0h1m12 0h1m13 0h1m7 0h1m24 0h2m3 0h1m14 0h1m4 0h1m2 0h1m4 0h2m5 0h1m20 0h1M0 168.5h1m19 0h1m3 0h1m1 0h1m11 0h1m10 0h1m7 0h1m13 0h1m9 0h1m32 0h1m13 0h1m30 0h2m14 0h1M5 169.5h1m1 0h1m3 0h1m5 0h1m2 0h1m6 0h1m6 0h1m20 0h1m12 0h1m26 0h1m6 0h1m29 0h1m4 0h1m4 0h2m2 0h1m2 0h1m7 0h1m8 0h1m7 0h1m2 0h1m16 0h1M8 170.5h2m15 0h1m1 0h1m1 0h1m4 0h1m40 0h1m5 0h1m14 0h1m27 0h1m1 0h1m7 0h1m5 0h1m27 0h1m22 0h1M7 171.5h1m1 0h1m24 0h1m3 0h1m1 0h1m52 0h1m2 0h1m9 0h1m2 0h1m2 0h1m5 0h1m1 0h1m1 0h1m1 0h1m3 0h1m1 0h1m18 0h1m11 0h1m2 0h1m15 0h1M25 172.5h1m12 0h2m1 0h1m36 0h1m7 0h1m12 0h1m19 0h1m15 0h1m4 0h1m1 0h1m8 0h1m2 0h1m7 0h1m20 0h1m1 0h1m12 0h1M8 173.5h1m13 0h1m2 0h1m14 0h2m6 0h1m3 0h1m3 0h1m1 0h1m46 0h1m5 0h1m7 0h1m2 0h1m2 0h1m37 0h1m10 0h1m6 0h1M15 174.5h1m17 0h1m10 0h1m1 0h1m2 0h2m5 0h1m4 0h1m6 0h1m14 0h1m6 0h1m13 0h1m10 0h1m23 0h1m6 0h2m9 0h1m5 0h1m9 0h1m15 0h1m5 0h1m1 0h1M3 175.5h1m16 0h2m6 0h1m9 0h1m1 0h1m12 0h1m16 0h1m3 0h1m8 0h1m6 0h1m1 0h2m40 0h1m9 0h1m7 0h1m26 0h1m2 0h1m9 0h1M13 176.5h2m26 0h1m6 0h1m5 0h1m1 0h1m19 0h1m16 0h1m19 0h1m30 0h1m2 0h1m2 0h1m11 0h1m24 0h1m4 0h1m4 0h2M2 177.5h1m15 0h1m4 0h1m10 0h1m5 0h1m6 0h1m3 0h1m25 0h1m10 0h1m2 0h1m2 0h1m6 0h1m3 0h1m18 0h1m8 0h1m27 0h2m20 0h1m6 0h1m8 0h1M3 178.5h1m8 0h1m9 0h1m5 0h1m3 0h1m13 0h1m23 0h1m5 0h1m15 0h1m5 0h2m2 0h1m28 0h1m26 0h2m6 0h1m12 0h1m4 0h1M13 179.5h1m17 0h1m1 0h1m5 0h2m6 0h1m1 0h1m7 0h1m1 0h1m5 0h1m5 0h1m45 0h1m18 0h1m5 0h1m5 0h1m2 0h1m6 0h1m1 0h1m23 0h1m6 0h1m4 0h2M12 180.5h2m5 0h1m9 0h1m1 0h1m2 0h2m10 0h1m6 0h1m1 0h1m10 0h1m1 0h1m18 0h1m16 0h2m1 0h2m7 0h1m2 0h1m12 0h1m28 0h1m4 0h1m7 0h1m3 0h1m11 0h1m1 0h1M21 181.5h1m3 0h1m6 0h1m7 0h1m2 0h1m14 0h1m22 0h1m15 0h1m6 0h1m10 0h1m6 0h1m16 0h1m2 0h1m5 0h1m1 0h1m5 0h1m23 0h1M22 182.5h1m13 0h1m7 0h1m15 0h1m2 0h1m1 0h1m30 0h1m4 0h1m4 0h1m4 0h1m12 0h1m2 0h1M5 183.5h1m25 0h1m12 0h1m15 0h1m6 0h1m7 0h1m19 0h1m6 0h1m29 0h1m13 0h1m2 0h1m12 0h1m31 0h2M2 184.5h1m8 0h1m9 0h1m1 0h1m2 0h1m30 0h1m10 0h1m21 0h1m13 0h1m14 0h1m1 0h1m5 0h1m11 0h1m8 0h2m13 0h1m4 0h1m15 0h1m2 0h2m1 0h1m8 0h1M26 185.5h1m19 0h1m19 0h1m15 0h1m46 0h1m5 0h1m20 0h1m41 0h1M16 186.5h1m13 0h1m1 0h1m36 0h1m7 0h2m6 0h1m7 0h1m2 0h2m2 0h2m20 0h1m1 0h1m3 0h1m43 0h1m1 0h1m18 0h1M9 187.5h1m2 0h1m6 0h1m2 0h2m28 0h1m19 0h1m28 0h1m11 0h1m28 0h1m9 0h1m34 0h1M16 188.5h1m6 0h1m10 0h1m4 0h1m8 0h1m16 0h1m41 0h1m10 0h1m34 0h1m8 0h1m3 0h1m8 0h1m6 0h1M7 189.5h2m8 0h2m1 0h1m38 0h1m54 0h1m24 0h1m8 0h1m10 0h1m5 0h1m2 0h1m14 0h1m5 0h2M11 190.5h1m25 0h1m8 0h1m20 0h1m1 0h1m2 0h1m7 0h2m3 0h2m4 0h1m3 0h1m21 0h1m9 0h1m1 0h1m40 0h1m13 0h2m2 0h1m1 0h1m2 0h1m1 0h1m3 0h1M5 191.5h1m1 0h1m11 0h1m2 0h2m8 0h1m20 0h1m6 0h1m11 0h1m3 0h2m6 0h1m1 0h1m39 0h1m20 0h1m7 0h1m11 0h1m4 0h1m20 0h1M6 192.5h1m12 0h1m21 0h1m8 0h1m13 0h2m5 0h1m2 0h1m12 0h1m5 0h1m19 0h1m3 0h1m3 0h1m19 0h3m27 0h1m10 0h1m12 0h1M4 193.5h3m9 0h1m4 0h2m3 0h1m2 0h1m16 0h1m17 0h1m8 0h1m6 0h1m3 0h1m5 0h1m8 0h1m17 0h1m13 0h1m5 0h1m22 0h1m1 0h1m8 0h1m1 0h1M11 194.5h1m3 0h1m14 0h1m33 0h1m3 0h1m4 0h1m8 0h1m7 0h1m13 0h2m45 0h1m6 0h1m11 0h1m3 0h1m6 0h1m9 0h2M1 195.5h1m4 0h1m7 0h1m10 0h1m4 0h1m25 0h1m57 0h1m20 0h1m4 0h1m11 0h1m2 0h1m2 0h1m3 0h1m5 0h1m4 0h1m10 0h1m3 0h1M9 196.5h1m35 0h1m4 0h1m2 0h2m24 0h1m9 0h1m5 0h1m1 0h1m31 0h1m5 0h1m8 0h1m11 0h1m2 0h1m5 0h1m1 0h1m19 0h1M3 197.5h1m6 0h1m8 0h2m1 0h1m5 0h1m4 0h1m5 0h2m1 0h1m8 0h1m4 0h1m5 0h1m12 0h1m15 0h1m1 0h1m8 0h1m21 0h1m26 0h1m6 0h1m19 0h1M5 198.5h1m16 0h1m1 0h1m5 0h1m7 0h1m34 0h1m14 0h1m1 0h1m29 0h1m3 0h1m26 0h1m27 0h1m6 0h1M10 199.5h1m2 0h1m17 0h1m6 0h1m8 0h1m12 0h1m1 0h1m21 0h1m2 0h2m23 0h1m14 0h1m2 0h1m20 0h1m28 0h1m8 0h1"/><path stroke="#ffff07" d="M18 0.5h1m14 0h1m38 0h1m2 0h1m26 0h1m14 0h1m12 0h1m5 0h1m9 0h1m3 0h1m11 0h2m8 0h1m19 0h1m5 0h1M58 1.5h1m2 0h1m2 0h1m6 0h1m10 0h1m7 0h1m46 0h1m17 0h1m1 0h1m4 0h1m3 0h1m1 0h1m25 0h1m2 0h1M5 2.5h1m40 0h1m2 0h1m4 0h1m18 0h1m10 0h1m11 0h1m25 0h1m9 0h1m6 0h1m6 0h1m8 0h1m8 0h1m2 0h1m3 0h1m7 0h1m3 0h1m4 0h1m9 0h1M16 3.5h1m6 0h1m25 0h1m32 0h1m21 0h1m6 0h1m1 0h1m7 0h1m3 0h1m15 0h1m11 0h1m14 0h1m2 0h1m12 0h1m8 0h1m1 0h1M7 4.5h1m3 0h1m34 0h1m2 0h1m1 0h1m7 0h1m1 0h1m21 0h1m1 0h1m3 0h1m76 0h1m15 0h1m7 0h1m1 0h1M12 5.5h1m9 0h1m14 0h1m1 0h1m5 0h1m46 0h1m21 0h1m2 0h1m16 0h1m16 0h2m1 0h1m27 0h1m3 0h1m8 0h1M24 6.5h1m7 0h1m6 0h2m53 0h1m16 0h1m12 0h1m3 0h1m2 0h1m3 0h1m2 0h1m30 0h1m11 0h1m6 0h1m8 0h1M11 7.5h1m19 0h1m19 0h1m4 0h1m10 0h1m27 0h1m15 0h1m8 0h1m17 0h1m2 0h1m12 0h1m17 0h1m2 0h1m2 0h1m7 0h1m10 0h1M0 8.5h1m5 0h1m2 0h1m7 0h1m5 0h1m19 0h1m11 0h1m5 0h1m37 0h2m21 0h1m12 0h1m15 0h1m8 0h1m21 0h1m2 0h1M34 9.5h2m6 0h2m24 0h1m8 0h1m28 0h1m18 0h1m17 0h1m14 0h2m4 0h1M0 10.5h1m8 0h1m3 0h1m12 0h1m6 0h1m6 0h1m4 0h1m2 0h1m49 0h1m7 0h1m1 0h1m1 0h1m2 0h1m5 0h3m2 0h1m8 0h1m5 0h1m14 0h3m22 0h1M17 11.5h1m2 0h1m4 0h1m2 0h2m5 0h1m5 0h1m21 0h2m2 0h1m2 0h1m3 0h1M0 12.5h1m13 0h1m11 0h1m12 0h1m26 0h1m9 0h1m8 0h2m1 0h1m11 0h1m9 0h1m14 0h1m3 0h1m13 0h1m2 0h1m19 0h1m24 0h1M1 13.5h1m62 0h1m21 0h1m25 0h1m19 0h1m1 0h1m13 0h1m4 0h1m26 0h1m1 0h1m14 0h1m1 0h1M1 14.5h2m8 0h1m28 0h1m17 0h1m9 0h1m3 0h1m3 0h1m15 0h1m6 0h1m20 0h1m11 0h1m10 0h1m2 0h1m40 0h1m7 0h1m2 0h2M13 15.5h1m13 0h2m8 0h1m21 0h1m7 0h1m16 0h1m5 0h1m10 0h1m16 0h1m8 0h1m3 0h1m19 0h1m6 0h1m3 0h1m28 0h1m5 0h1M7 16.5h1m5 0h1m4 0h1m2 0h1m24 0h2m13 0h1m2 0h1m7 0h1m14 0h1m7 0h1m4 0h1m1 0h1m21 0h1m46 0h1m5 0h1m10 0h1m10 0h1M0 17.5h2m4 0h1m14 0h1m5 0h1m14 0h1m13 0h1m2 0h1m6 0h1m2 0h1m27 0h1m2 0h2m26 0h1m2 0h1m1 0h1m3 0h1m6 0h1m4 0h1m20 0h1m3 0h1M15 18.5h1m1 0h1m5 0h1m9 0h1m12 0h1m30 0h1m17 0h1m18 0h1m66 0h1m4 0h1M22 19.5h1m5 0h1m8 0h1m21 0h1m10 0h1m3 0h1m1 0h1m21 0h1m2 0h1m1 0h1m13 0h1m14 0h2m1 0h1m5 0h1m5 0h1m16 0h1m3 0h1m29 0h1M0 20.5h1m3 0h1m2 0h1m10 0h1m4 0h1m15 0h1m16 0h1m2 0h1m4 0h1m1 0h1m12 0h1m6 0h1m13 0h1m6 0h2m79 0h1m5 0h1m1 0h1M6 21.5h1m1 0h1m30 0h1m18 0h1m9 0h1m4 0h1m7 0h1m13 0h1m2 0h1m1 0h1m10 0h2m3 0h1m6 0h1m1 0h1m4 0h1m4 0h1m27 0h1m11 0h1m12 0h1M18 22.5h2m1 0h2m1 0h1m35 0h2m9 0h1m4 0h1m3 0h1m25 0h1m19 0h1m20 0h1m45 0h1M38 23.5h2m2 0h1m47 0h1m13 0h1m12 0h1m5 0h1m16 0h1m13 0h1m16 0h1M0 24.5h1m14 0h2m16 0h1m9 0h1m3 0h1m22 0h1m2 0h1m53 0h1m6 0h1m14 0h1m14 0h1m2 0h1m3 0h2m12 0h1M4 25.5h1m5 0h1m11 0h1m5 0h1m19 0h1m16 0h1m15 0h1m11 0h1m4 0h1m26 0h1m5 0h1m6 0h1m42 0h1m10 0h1M13 26.5h1m17 0h1m10 0h1m12 0h1m13 0h1m18 0h1m26 0h1m6 0h1m9 0h1m2 0h1m12 0h1m2 0h1m25 0h1m13 0h2M35 27.5h1m9 0h1m7 0h1m5 0h1m6 0h1m15 0h1m20 0h2m36 0h1m5 0h1m11 0h1m7 0h1m4 0h1m1 0h1m1 0h2m6 0h1m13 0h1M0 28.5h1m19 0h1m10 0h1m7 0h1m10 0h1m7 0h1m4 0h1m29 0h1m6 0h2m14 0h1m44 0h1m11 0h1m19 0h1M6 29.5h2m22 0h1m29 0h1m7 0h1m29 0h1m2 0h1m4 0h1m6 0h1m19 0h1m3 0h1m10 0h1m2 0h1m7 0h1m6 0h1m15 0h1m8 0h1M21 30.5h1m11 0h1m12 0h1m2 0h1m14 0h1m47 0h1m36 0h1m19 0h1m1 0h1m7 0h1m8 0h1m4 0h1m2 0h2M5 31.5h1m3 0h1m12 0h1m5 0h1m3 0h1m11 0h1m2 0h1m2 0h1m6 0h1m16 0h1m2 0h1m18 0h1m19 0h1m12 0h1m20 0h1m15 0h1m3 0h1M12 32.5h1m6 0h1m9 0h1m5 0h1m13 0h1m7 0h1m8 0h1m7 0h1m25 0h1m32 0h3m4 0h1m1 0h1m8 0h1m18 0h1m5 0h1m10 0h1m6 0h1M24 33.5h1m16 0h1m3 0h1m4 0h1m6 0h1m1 0h1m3 0h1m4 0h1m10 0h1m5 0h2m13 0h1m11 0h1m47 0h1m7 0h1m13 0h1M0 34.5h1m5 0h1m1 0h1m16 0h1m19 0h1m10 0h1m1 0h1m4 0h1m31 0h1m6 0h1m38 0h1m19 0h1m10 0h1m6 0h1M17 35.5h1m7 0h1m1 0h1m1 0h1m2 0h1m3 0h1m27 0h1m4 0h1m21 0h1m2 0h1m7 0h1m27 0h2m9 0h1m12 0h1m40 0h1M13 36.5h1m2 0h1m4 0h1m21 0h1m20 0h1m2 0h1m10 0h1m3 0h1m4 0h1m5 0h1m10 0h1m2 0h1m2 0h1m1 0h1m2 0h1m14 0h1m34 0h2m22 0h1M0 37.5h1m13 0h1m7 0h1m44 0h1m2 0h2m13 0h1m7 0h1m21 0h1m4 0h1m1 0h1m2 0h1m3 0h2m23 0h1m9 0h1m1 0h1m1 0h1m5 0h2m6 0h1m3 0h1m6 0h1M11 38.5h1m39 0h1m16 0h1m18 0h1m35 0h1m9 0h1m16 0h1m10 0h1m17 0h1m10 0h1m6 0h1M43 39.5h1m11 0h1m4 0h1m13 0h1m2 0h1m14 0h2m2 0h1m1 0h1m12 0h1m27 0h1m5 0h1m10 0h2m23 0h1m1 0h1m7 0h1M31 40.5h1m2 0h1m25 0h1m3 0h1m12 0h1m1 0h1m10 0h1m2 0h1m3 0h1m2 0h1m8 0h1m30 0h1m15 0h1m15 0h1m3 0h1M3 41.5h1m2 0h1m7 0h1m4 0h1m16 0h1m1 0h1m12 0h2m14 0h1m18 0h1m1 0h1m9 0h1m16 0h1m3 0h1m5 0h1m6 0h1m42 0h1m1 0h1m14 0h1M7 42.5h1m4 0h1m7 0h1m15 0h1m11 0h1m11 0h1m7 0h1m22 0h4m4 0h1m15 0h1m14 0h1m12 0h1m5 0h1m15 0h1m2 0h1m2 0h1m27 0h1M21 43.5h1m22 0h1m13 0h1m16 0h1m2 0h2m7 0h1m25 0h1m14 0h1m7 0h1m4 0h1m6 0h1m6 0h1m35 0h1M17 44.5h2m8 0h1m12 0h1m5 0h1m5 0h1m29 0h1m1 0h1m21 0h1m6 0h1m3 0h1m5 0h1m11 0h2m21 0h2m4 0h1m13 0h1m6 0h1m8 0h1M2 45.5h1m1 0h1m16 0h1m26 0h1m1 0h2m9 0h2m18 0h1m1 0h1m15 0h1m16 0h1m30 0h2m19 0h1M3 46.5h2m5 0h1m23 0h2m2 0h1m9 0h1m1 0h1m8 0h2m8 0h1m8 0h1m8 0h1m9 0h1m17 0h1m24 0h1m2 0h1m5 0h1m2 0h2m12 0h1m18 0h1M6 47.5h1m26 0h1m7 0h1m2 0h1m1 0h1m56 0h1m11 0h1m11 0h1m3 0h1m10 0h1m4 0h2m5 0h1m1 0h1m7 0h1m4 0h1m1 0h1m5 0h1m9 0h1M17 48.5h1m3 0h1m1 0h1m8 0h1m20 0h1m14 0h1m2 0h1m18 0h2m7 0h1m66 0h1m1 0h1m12 0h1m2 0h1m11 0h2M0 49.5h1m7 0h2m5 0h1m3 0h1m18 0h1m2 0h1m4 0h1m7 0h1m2 0h1m23 0h1m36 0h1m4 0h1m7 0h1m9 0h1m10 0h1m24 0h1m4 0h1m9 0h1M23 50.5h1m7 0h1m2 0h1m6 0h1m19 0h1m12 0h1m16 0h1m15 0h1m13 0h1m4 0h1m23 0h1m30 0h1m7 0h1m1 0h1M2 51.5h1m59 0h2m16 0h1m14 0h1m29 0h1m6 0h1m40 0h1m22 0h1M0 52.5h1m6 0h1m11 0h1m10 0h1m37 0h1m42 0h1m9 0h1m9 0h1m16 0h1m2 0h1m3 0h1m35 0h2m1 0h1m4 0h1M19 53.5h1m21 0h1m9 0h1m9 0h1m8 0h1m3 0h1m9 0h1m17 0h1m14 0h1m17 0h2m41 0h1m1 0h2m17 0h1M3 54.5h1m7 0h1m69 0h1m33 0h1m14 0h1m6 0h1m8 0h1m13 0h1m21 0h1m13 0h1M1 55.5h1m26 0h1m21 0h1m5 0h1m4 0h2m3 0h1m2 0h1m16 0h1m16 0h1m2 0h1m4 0h1m16 0h1m6 0h1m1 0h1m16 0h1m17 0h1m2 0h1m3 0h1m15 0h1M3 56.5h1m1 0h1m15 0h2m28 0h1m19 0h1m17 0h1m4 0h1m28 0h1m17 0h1m5 0h2m1 0h1m4 0h1m2 0h1m11 0h1m19 0h1M13 57.5h1m19 0h1m7 0h1m4 0h1m42 0h1m4 0h1m25 0h1m72 0h2M1 58.5h1m14 0h1m18 0h1m47 0h1m25 0h1m1 0h1m3 0h1m8 0h1m11 0h1m8 0h1m1 0h1m5 0h1m4 0h1m2 0h1m34 0h1M6 59.5h1m58 0h1m10 0h1m12 0h1m3 0h1m11 0h1m3 0h1m39 0h1m1 0h1m7 0h1m6 0h1m5 0h1m5 0h1m6 0h1m6 0h1m6 0h1M1 60.5h1m2 0h1m13 0h1m25 0h1m10 0h2m9 0h1m15 0h1m9 0h1m6 0h1m10 0h1m3 0h1m6 0h1m26 0h1m4 0h1m9 0h2M1 61.5h2m8 0h1m1 0h1m5 0h1m12 0h1m8 0h1m14 0h1m10 0h1m5 0h1m2 0h1m69 0h1m38 0h1m10 0h1M1 62.5h1m14 0h1m11 0h1m9 0h1m3 0h1m35 0h1m10 0h1m2 0h1m11 0h1m17 0h1m12 0h1m48 0h1M1 63.5h1m22 0h1m29 0h1m12 0h1m7 0h1m15 0h2m7 0h1m8 0h1m18 0h1m19 0h1m1 0h2m3 0h1m28 0h1m1 0h1m3 0h1m7 0h1M16 64.5h1m10 0h1m13 0h1m8 0h1m1 0h1m1 0h1m5 0h1m19 0h1m6 0h1m52 0h1m24 0h1m3 0h1m28 0h1M1 65.5h1m4 0h1m13 0h1m6 0h1m21 0h1m3 0h1m2 0h1m5 0h1m11 0h1m6 0h1m1 0h1m3 0h2m8 0h1m17 0h1m17 0h1m11 0h1m9 0h1m19 0h1M13 66.5h2m17 0h1m1 0h1m4 0h1m7 0h1m2 0h2m4 0h1m2 0h1m1 0h1m2 0h1m18 0h1m1 0h1m2 0h1m26 0h1m48 0h1m1 0h1m23 0h1M3 67.5h1m4 0h1m11 0h1m14 0h1m4 0h1m7 0h1m21 0h1m9 0h2m1 0h1m16 0h2m5 0h1m35 0h1m1 0h1m2 0h2m38 0h1M5 68.5h1m46 0h1m20 0h1m7 0h1m26 0h1m1 0h1m69 0h1M4 69.5h1m3 0h1m1 0h1m2 0h1m14 0h1m11 0h1m1 0h1m8 0h1m4 0h1m9 0h1m15 0h1m13 0h1m20 0h1m34 0h1m6 0h1m19 0h2m14 0h1m2 0h2M17 70.5h1m3 0h1m7 0h1m5 0h1m4 0h1m1 0h2m13 0h1m10 0h1m52 0h2m3 0h1m18 0h1m5 0h1m4 0h1m13 0h1m11 0h1m15 0h1M6 71.5h1m8 0h1m25 0h1m9 0h1m3 0h2m13 0h1m10 0h1m1 0h1m15 0h2m24 0h1m22 0h1m2 0h1m17 0h1m12 0h1m5 0h1m2 0h1M35 72.5h2m16 0h1m19 0h1m9 0h1m2 0h1m12 0h1m8 0h2m56 0h1M5 73.5h1m37 0h1m3 0h1m7 0h2m20 0h1m22 0h1m4 0h1m6 0h1m20 0h1m27 0h1m8 0h1M2 74.5h1m18 0h1m9 0h1m9 0h1m15 0h1m7 0h1m14 0h1m22 0h1m8 0h1m14 0h1m6 0h1m8 0h1m4 0h1m29 0h1m7 0h1m9 0h1M1 75.5h1m8 0h1m6 0h1m4 0h1m11 0h1m22 0h1m2 0h1m2 0h1m6 0h1m5 0h1m1 0h1m14 0h1m60 0h1m21 0h1M14 76.5h2m19 0h1m10 0h1m7 0h1m8 0h1m8 0h1m1 0h1m15 0h1m37 0h1m23 0h1m14 0h1m12 0h1m13 0h1M51 77.5h1m19 0h1m20 0h1m8 0h1m17 0h1m3 0h1m5 0h1m21 0h1m3 0h1m7 0h1m1 0h2m6 0h1M6 78.5h1m1 0h1m31 0h1m6 0h1m5 0h1m31 0h2m13 0h1m1 0h1m18 0h1m8 0h1m8 0h1m15 0h1m15 0h1m12 0h1M0 79.5h1m21 0h1m26 0h1m2 0h2m1 0h1m2 0h1m19 0h1m2 0h1m5 0h2m17 0h1m1 0h1m4 0h1m4 0h1m1 0h2m19 0h1m16 0h1m16 0h1m15 0h1m4 0h2M7 80.5h1m6 0h1m7 0h1m1 0h1m5 0h1m1 0h1m3 0h1m17 0h1m5 0h1m35 0h1m16 0h1m2 0h1m7 0h1m16 0h1m33 0h1m7 0h1M2 81.5h1m11 0h1m3 0h1m2 0h1m2 0h1m65 0h1m6 0h1m6 0h1m28 0h1m13 0h1m16 0h1m6 0h1m6 0h1m16 0h1m3 0h1M1 82.5h1m43 0h1m1 0h1m18 0h1m7 0h1m10 0h1m1 0h1m18 0h1m20 0h1m34 0h1m6 0h1m4 0h1m3 0h1m2 0h2m13 0h1M25 83.5h1m9 0h1m4 0h1m25 0h1m6 0h1m54 0h1m19 0h1m34 0h1m3 0h1M4 84.5h1m52 0h1m18 0h2m14 0h1m13 0h1m3 0h1m10 0h1m3 0h1m19 0h2m7 0h1m13 0h1m4 0h1m16 0h1m8 0h1M18 85.5h1m1 0h1m19 0h1m17 0h1m22 0h1m9 0h1m17 0h1m5 0h1m4 0h1m4 0h1m1 0h1m6 0h1m10 0h1m11 0h1m1 0h1m2 0h1m6 0h1m4 0h1m20 0h1M3 86.5h1m51 0h1m9 0h1m10 0h1m1 0h1m1 0h1m9 0h1m27 0h1m12 0h1m20 0h1m25 0h1m8 0h1M13 87.5h1m1 0h1m7 0h1m3 0h1m2 0h1m20 0h1m22 0h1m19 0h1m36 0h1m2 0h1m4 0h1m10 0h1m18 0h1m9 0h1m19 0h1M31 88.5h1m1 0h1m35 0h1m27 0h1m2 0h1m3 0h1m9 0h1m1 0h1m2 0h1m7 0h1m43 0h1m21 0h1m5 0h1M19 89.5h2m2 0h1m5 0h1m6 0h1m4 0h1m11 0h1m7 0h1m19 0h1m1 0h1m11 0h1m1 0h1m46 0h1m17 0h1m17 0h1m7 0h1m7 0h1m1 0h1M6 90.5h1m10 0h1m20 0h1m12 0h1m28 0h1m5 0h1m4 0h1m23 0h1m3 0h1m26 0h2m7 0h1m17 0h1m4 0h1m1 0h1m8 0h1M6 91.5h1m12 0h1m6 0h1m13 0h1m13 0h1m5 0h1m3 0h1m1 0h1m18 0h1m10 0h1m5 0h1m14 0h1m5 0h1m1 0h1m17 0h1m18 0h1m13 0h1m2 0h1m12 0h1m3 0h3M28 92.5h1m2 0h1m12 0h1m19 0h1m2 0h1m9 0h1m2 0h1m9 0h1m32 0h1m17 0h1m11 0h1m1 0h1M9 93.5h1m1 0h1m10 0h1m6 0h1m35 0h1m43 0h1m22 0h1m18 0h1m13 0h1m4 0h1m9 0h1m13 0h1M19 94.5h1m13 0h1m15 0h1m6 0h1m4 0h1m30 0h1m11 0h1m4 0h1m11 0h1m17 0h1m3 0h1m7 0h1M10 95.5h1m11 0h1m8 0h1m38 0h1m9 0h2m8 0h1m3 0h1m19 0h1m2 0h1m7 0h1m26 0h1m6 0h1m25 0h1m10 0h2M21 96.5h1m8 0h1m5 0h1m12 0h1m4 0h1m2 0h1m9 0h1m3 0h1m2 0h2m17 0h1m1 0h1m8 0h1m11 0h1m21 0h1m12 0h1m15 0h1m8 0h1m22 0h1M2 97.5h1m14 0h1m9 0h1m13 0h1m1 0h1m2 0h1m39 0h2m19 0h1m36 0h1m4 0h2m9 0h1m15 0h1M17 98.5h1m2 0h1m1 0h1m3 0h1m2 0h1m21 0h1m1 0h1m4 0h1m44 0h1m2 0h1m8 0h1m48 0h1m26 0h1M4 99.5h1m15 0h1m6 0h1m29 0h1m30 0h1m4 0h1m2 0h2m55 0h1m15 0h1M12 100.5h2m19 0h1m12 0h1m14 0h1m4 0h1m53 0h1m3 0h1m9 0h1m9 0h1m10 0h1m4 0h1m2 0h2m27 0h1M1 101.5h1m20 0h1m59 0h1m12 0h1m10 0h1m49 0h1m8 0h1m13 0h1m12 0h1M0 102.5h1m41 0h1m8 0h1m2 0h1m7 0h1m7 0h1m4 0h1m6 0h2m28 0h1m16 0h1m6 0h1m10 0h1m8 0h1m8 0h1m15 0h1m6 0h1m1 0h1m6 0h1M4 103.5h1m38 0h1m2 0h1m11 0h1m8 0h1m123 0h1M10 104.5h1m5 0h2m27 0h1m14 0h1m19 0h1m4 0h1m10 0h1m19 0h1m19 0h2m24 0h1m7 0h1m4 0h1m6 0h1m2 0h1m6 0h2m3 0h1M30 105.5h1m10 0h1m1 0h1m33 0h1m20 0h1m4 0h1m14 0h1m5 0h2m3 0h1m4 0h1m23 0h1m10 0h1m7 0h1m21 0h1M2 106.5h1m71 0h3m9 0h1m24 0h1m2 0h1m2 0h1m3 0h1m1 0h1m10 0h1m5 0h1m1 0h1m9 0h1m16 0h1m12 0h1M10 107.5h1m6 0h1m21 0h1m66 0h1m7 0h1m3 0h1m12 0h1m2 0h1m6 0h1m7 0h2m2 0h1m3 0h1m11 0h1m16 0h1m9 0h1m2 0h1M0 108.5h1m3 0h1m6 0h1m11 0h1m12 0h1m28 0h1m3 0h1m7 0h1m3 0h1m18 0h1m24 0h1m10 0h1m2 0h1m10 0h1m24 0h1m9 0h1m6 0h1M35 109.5h1m2 0h1m13 0h1m34 0h1m47 0h1m4 0h1m5 0h1m8 0h1m3 0h1m21 0h1m7 0h1m5 0h1m2 0h1M32 110.5h1m7 0h1m28 0h1m2 0h1m8 0h1m32 0h2m8 0h1m3 0h1m12 0h1m9 0h2m10 0h1m28 0h1M9 111.5h1m11 0h2m5 0h1m10 0h1m7 0h1m14 0h1m4 0h1m4 0h1m7 0h1m5 0h1m1 0h1m3 0h1m27 0h1m6 0h1m4 0h1m4 0h2m11 0h1m40 0h1m1 0h1M38 112.5h1m1 0h1m28 0h1m8 0h1m8 0h1m12 0h1m7 0h1m26 0h1m16 0h1m15 0h2m13 0h1m6 0h1M14 113.5h1m9 0h1m8 0h1m1 0h1m20 0h1m14 0h1m9 0h1m5 0h1m1 0h1m19 0h1m4 0h1m1 0h1m7 0h1m21 0h1m21 0h2m12 0h1M22 114.5h1m1 0h1m11 0h1m23 0h1m6 0h1m9 0h1m1 0h1m18 0h1m4 0h1m20 0h1m1 0h1m9 0h1m3 0h1m2 0h1m9 0h1m10 0h1m11 0h1m4 0h3m6 0h2m3 0h1m3 0h1M0 115.5h1m17 0h1m7 0h1m51 0h1m2 0h2m33 0h1m35 0h1m19 0h1m11 0h1m2 0h1M33 116.5h1m3 0h1m2 0h1m5 0h1m22 0h1m2 0h2m21 0h1m3 0h1m1 0h1m32 0h1m3 0h1m7 0h1m1 0h1m6 0h1m20 0h1m22 0h1M2 117.5h1m4 0h1m2 0h1m7 0h1m12 0h2m5 0h1m15 0h1m30 0h1m4 0h1m22 0h1m16 0h1m14 0h1m30 0h1m3 0h1m10 0h1m3 0h1M11 118.5h2m31 0h2m18 0h1m15 0h1m12 0h1m47 0h1m9 0h1m29 0h1m13 0h1M12 119.5h1m12 0h1m10 0h1m21 0h1m1 0h1m10 0h2m3 0h1m8 0h2m5 0h1m8 0h1m6 0h1m10 0h1m5 0h1m3 0h1m11 0h1m32 0h1m12 0h1m4 0h1m1 0h1M6 120.5h1m34 0h2m6 0h1m8 0h1m11 0h1m3 0h1m20 0h1m4 0h1m2 0h1m6 0h1m1 0h1m9 0h1m3 0h1m3 0h1m8 0h1m8 0h1m12 0h1m8 0h1m7 0h1m1 0h1m1 0h1m15 0h1M4 121.5h1m1 0h1m6 0h1m9 0h1m23 0h1m16 0h1m1 0h1m1 0h1m11 0h3m1 0h1m14 0h1m5 0h1m41 0h1m20 0h1m1 0h1m7 0h2m8 0h1M25 122.5h1m3 0h1m26 0h1m15 0h2m12 0h1m2 0h1m18 0h1m15 0h1m68 0h1m1 0h1M4 123.5h1m2 0h1m5 0h1m6 0h2m21 0h1m14 0h1m30 0h1m26 0h1m7 0h1m3 0h1m17 0h1m45 0h1M3 124.5h1m8 0h1m10 0h1m1 0h1m7 0h1m3 0h1m17 0h1m13 0h1m17 0h1m40 0h1m68 0h1M8 125.5h1m3 0h1m3 0h1m2 0h1m40 0h1m7 0h1m10 0h1m3 0h1m23 0h1m23 0h1m11 0h2m18 0h1m4 0h1m5 0h1m1 0h1m10 0h1m9 0h1M38 126.5h1m24 0h1m7 0h1m16 0h1m4 0h1m8 0h1m2 0h1m20 0h1m2 0h1m2 0h1m15 0h1m28 0h2m12 0h2M4 127.5h1m17 0h1m12 0h1m2 0h1m7 0h1m7 0h1m1 0h1m25 0h1m4 0h1m22 0h1m24 0h1m12 0h1m11 0h1m7 0h1M6 128.5h2m3 0h1m1 0h1m2 0h1m13 0h1m9 0h1m12 0h1m3 0h1m35 0h1m14 0h1m9 0h1m24 0h1m8 0h1m11 0h1m4 0h1m1 0h1m18 0h1m5 0h2M31 129.5h3m4 0h1m4 0h1m18 0h1m3 0h2m11 0h1m33 0h1m5 0h1m6 0h1m1 0h1m5 0h1m4 0h1m19 0h1m10 0h1m3 0h1m17 0h1M6 130.5h2m14 0h1m1 0h1m18 0h1m2 0h1m6 0h1m16 0h1m22 0h1m26 0h1m22 0h1m14 0h1m17 0h1m1 0h1m5 0h1m11 0h2M6 131.5h2m2 0h1m5 0h1m1 0h1m9 0h1m2 0h1m15 0h1m7 0h1m8 0h1m40 0h1m16 0h1m31 0h1m19 0h1M3 132.5h1m3 0h1m54 0h1m9 0h1m2 0h1m5 0h1m5 0h1m6 0h1m33 0h1m7 0h1m26 0h1m10 0h1m8 0h1m6 0h1M4 133.5h1m9 0h1m21 0h1m40 0h1m43 0h1m13 0h1m7 0h2m3 0h2m6 0h1m15 0h1m6 0h1m8 0h1m9 0h1M17 134.5h1m13 0h1m33 0h2m19 0h1m17 0h1m29 0h1m38 0h1m4 0h1m8 0h1m7 0h1M9 135.5h1m25 0h1m11 0h1m12 0h1m7 0h1m11 0h1m19 0h1m22 0h1m12 0h1m8 0h1m12 0h1m13 0h1m10 0h1M44 136.5h1m1 0h1m3 0h1m3 0h1m7 0h1m23 0h1m3 0h1m22 0h1m12 0h1m11 0h1m1 0h1m16 0h2m28 0h1M4 137.5h1m2 0h1m37 0h1m23 0h1m11 0h1m11 0h1m12 0h1m9 0h1m1 0h1m1 0h1m15 0h1m3 0h1m11 0h1m4 0h1m24 0h1M6 138.5h1m12 0h1m3 0h1m7 0h1m4 0h1m11 0h2m9 0h1m21 0h1m1 0h1m4 0h1m2 0h1m2 0h1m3 0h1m11 0h1m2 0h1m37 0h1m4 0h1m2 0h1m22 0h1M13 139.5h1m8 0h1m12 0h1m23 0h1m42 0h1m32 0h1m3 0h1m3 0h1m4 0h1m4 0h2m11 0h1m29 0h1M10 140.5h1m16 0h1m13 0h1m2 0h1m6 0h1m9 0h1m24 0h1m4 0h1m32 0h1m33 0h1m1 0h1m18 0h1m1 0h1m5 0h1m9 0h1M0 141.5h1m38 0h1m8 0h1m1 0h1m15 0h1m3 0h1m33 0h1m16 0h1m3 0h1m3 0h2m16 0h1m10 0h1m2 0h2m8 0h1m14 0h1m10 0h2M13 142.5h2m20 0h2m13 0h1m25 0h1m32 0h1m4 0h1m5 0h2m8 0h1m39 0h1m2 0h1M9 143.5h1m13 0h1m18 0h1m5 0h1m11 0h1m13 0h1m35 0h1m2 0h1m6 0h1m15 0h1m13 0h1m4 0h1m1 0h1m12 0h1m8 0h2m9 0h1m2 0h1M9 144.5h1m16 0h1m14 0h1m3 0h1m129 0h1m1 0h1m10 0h1m1 0h1m1 0h1M5 145.5h1m3 0h1m11 0h1m32 0h1m3 0h1m30 0h1m17 0h1m16 0h2m8 0h1m9 0h1m7 0h1m11 0h1m4 0h1m22 0h1M67 146.5h1m13 0h1m9 0h1m22 0h1m10 0h1m17 0h1m3 0h1m4 0h1m8 0h1m4 0h1m15 0h1m16 0h1M2 147.5h1m27 0h1m2 0h1m27 0h1m5 0h1m13 0h1m29 0h1m10 0h1m6 0h1m8 0h1m12 0h1m26 0h1m2 0h1M2 148.5h1m2 0h1m9 0h1m8 0h1m22 0h1m2 0h1m3 0h1m21 0h1m19 0h1m6 0h1m3 0h1m2 0h3m8 0h1m1 0h1m4 0h1m5 0h1m17 0h1m7 0h1m19 0h1M11 149.5h1m35 0h1m12 0h1m5 0h1m12 0h1m4 0h1m32 0h1m16 0h1m2 0h1m1 0h1m4 0h1m8 0h1m11 0h1m9 0h1m3 0h1m1 0h1m3 0h1m11 0h1M7 150.5h1m9 0h1m10 0h1m21 0h1m6 0h1m1 0h1m8 0h1m29 0h1m12 0h1m6 0h1m9 0h1m5 0h1m1 0h1m5 0h1m36 0h1m1 0h1m17 0h1M14 151.5h1m15 0h1m25 0h1m7 0h1m6 0h1m7 0h1m11 0h1m25 0h1m6 0h1m15 0h1m9 0h1m2 0h1m7 0h1m8 0h1M24 152.5h1m9 0h1m1 0h1m38 0h1m4 0h1m34 0h1m26 0h1m4 0h1m4 0h1m25 0h1M0 153.5h1m15 0h1m23 0h2m6 0h1m30 0h1m9 0h1m8 0h1m3 0h1m12 0h1m4 0h1m16 0h1m2 0h1m25 0h2m15 0h1m10 0h2M0 154.5h1m18 0h1m3 0h1m5 0h1m9 0h1m28 0h1m6 0h1m1 0h1m25 0h1m19 0h1m1 0h1m5 0h1m19 0h1m3 0h1m9 0h1m29 0h1M14 155.5h1m8 0h1m31 0h1m8 0h1m13 0h1m1 0h1m13 0h1m13 0h1m22 0h1m2 0h1m18 0h1m15 0h1m4 0h1m2 0h1m10 0h1m5 0h1m4 0h1M14 156.5h1m8 0h1m5 0h1m9 0h1m30 0h1m2 0h1m20 0h1m13 0h1m11 0h2m22 0h1m2 0h1m17 0h1m3 0h1m1 0h1m4 0h2M33 157.5h1m11 0h1m21 0h1m19 0h1m5 0h1m6 0h1m13 0h1m8 0h1m28 0h1m12 0h1m8 0h1m6 0h1M6 158.5h1m26 0h1m7 0h1m5 0h1m3 0h1m11 0h1m20 0h1m52 0h1m1 0h1m9 0h1m32 0h1m2 0h1m13 0h1M10 159.5h1m18 0h1m12 0h1m3 0h1m8 0h1m2 0h1m4 0h1m13 0h1m2 0h1m6 0h1m21 0h1m23 0h1m21 0h1m6 0h1m5 0h1m1 0h1m12 0h1m4 0h1m10 0h1M17 160.5h1m24 0h1m1 0h1m2 0h1m48 0h1m12 0h1m9 0h1m19 0h1m25 0h2m1 0h1m9 0h2m8 0h1m1 0h1m7 0h2M2 161.5h1m1 0h1m9 0h2m19 0h1m2 0h1m2 0h1m19 0h1m5 0h2m12 0h1m32 0h1m11 0h1m14 0h1m13 0h1m8 0h1m26 0h1m3 0h1m1 0h1M12 162.5h1m13 0h1m16 0h1m19 0h1m5 0h1m9 0h1m13 0h1m9 0h1m5 0h1m19 0h1m1 0h1m14 0h1m5 0h2m1 0h2m8 0h1m5 0h1m6 0h1m1 0h1m3 0h2m5 0h1m3 0h1m2 0h1M4 163.5h1m2 0h1m7 0h1m18 0h1m11 0h2m6 0h1m13 0h1m4 0h1m9 0h1m8 0h1m24 0h1m7 0h1m5 0h1m29 0h2m1 0h1m5 0h1m11 0h1M11 164.5h1m9 0h1m1 0h1m3 0h1m2 0h2m2 0h1m5 0h1m9 0h2m9 0h1m17 0h1m3 0h1m36 0h2m6 0h1m8 0h1m8 0h3m25 0h1m24 0h1M0 165.5h1m12 0h1m13 0h1m11 0h3m6 0h1m32 0h1m24 0h2m1 0h1m16 0h1m2 0h1m16 0h2m17 0h1m5 0h1m1 0h1m4 0h1m1 0h1m12 0h1M2 166.5h1m23 0h1m4 0h1m2 0h1m10 0h1m4 0h1m4 0h1m61 0h1m1 0h1m11 0h1m8 0h1m25 0h1M2 167.5h1m14 0h1m20 0h1m10 0h1m17 0h1m49 0h1m4 0h1m2 0h1m3 0h1m18 0h1m1 0h1M4 168.5h1m3 0h1m2 0h1m28 0h1m6 0h1m7 0h1m5 0h2m2 0h1m9 0h1m14 0h1m1 0h1m1 0h1m15 0h1m10 0h2m34 0h1m10 0h1m1 0h1m10 0h1m10 0h2m2 0h1M0 169.5h1m1 0h1m16 0h1m1 0h1m1 0h1m1 0h1m44 0h1m9 0h1m4 0h1m12 0h1m24 0h1m1 0h2m25 0h1m30 0h1m8 0h1m3 0h1M5 170.5h1m50 0h1m9 0h1m45 0h1m2 0h1m14 0h1m4 0h2m5 0h1m4 0h1m8 0h2m7 0h1m18 0h2m4 0h1M17 171.5h2m5 0h1m17 0h1m22 0h1m7 0h1m4 0h1m42 0h1m7 0h1m18 0h1m36 0h1m10 0h3M1 172.5h1m16 0h1m1 0h1m9 0h2m3 0h1m11 0h1m13 0h1m2 0h1m23 0h1m6 0h2m16 0h1m7 0h1m30 0h1m12 0h1M12 173.5h1m13 0h1m26 0h1m1 0h1m5 0h1m3 0h1m2 0h1m3 0h1m21 0h1m7 0h1m5 0h1m1 0h1m10 0h1m20 0h1m19 0h1m10 0h1m11 0h1m3 0h1m1 0h1M84 174.5h1m16 0h1m10 0h1m7 0h2m3 0h1m28 0h1m5 0h1m27 0h1m2 0h1m2 0h1M43 175.5h1m6 0h1m3 0h1m10 0h1m23 0h1m8 0h2m7 0h1m25 0h1m8 0h1m20 0h1m1 0h1m9 0h1m4 0h1m17 0h1M4 176.5h1m1 0h1m5 0h1m6 0h1m3 0h1m1 0h1m1 0h1m1 0h1m4 0h1m4 0h1m9 0h1m12 0h1m8 0h1m1 0h2m8 0h1m8 0h1m4 0h1m4 0h1m21 0h1m7 0h2m12 0h1m1 0h2m18 0h1M13 177.5h1m8 0h1m13 0h1m11 0h2m2 0h1m11 0h1m11 0h1m5 0h1m27 0h1m4 0h1m22 0h1m1 0h1m7 0h1M2 178.5h1m4 0h1m22 0h1m32 0h1m4 0h1m8 0h1m13 0h1m17 0h1m16 0h1m23 0h1m18 0h1m5 0h1m16 0h2M19 179.5h1m9 0h1m12 0h2m11 0h1m25 0h1m3 0h1m1 0h1m26 0h1m23 0h1m47 0h1m8 0h1M2 180.5h1m48 0h1m9 0h1m2 0h1m18 0h1m1 0h1m13 0h1m6 0h1m15 0h1m15 0h1m4 0h1m4 0h1m4 0h1m19 0h1m1 0h1m3 0h1m6 0h1m4 0h1m5 0h1M57 181.5h1m16 0h2m32 0h1m18 0h1m21 0h1m1 0h1m6 0h1m8 0h1m9 0h1m9 0h1m4 0h1M3 182.5h1m15 0h1m23 0h1m4 0h1m9 0h1m11 0h1m7 0h1m12 0h1m27 0h1m3 0h1m7 0h1m10 0h1m3 0h2m5 0h1m13 0h1M0 183.5h1m6 0h1m7 0h1m1 0h2m5 0h2m9 0h1m5 0h1m10 0h1m4 0h2m11 0h1m7 0h1m3 0h1m13 0h1m1 0h1m5 0h1m5 0h1m4 0h1m11 0h1m16 0h1m10 0h1m8 0h1m11 0h1m11 0h1m3 0h1m3 0h1M13 184.5h1m8 0h1m9 0h1m1 0h1m36 0h1m21 0h1m6 0h1m8 0h1m10 0h1m2 0h1m18 0h1m4 0h1m7 0h1m3 0h1m6 0h1m6 0h1m1 0h1m18 0h1M22 185.5h1m2 0h1m6 0h1m30 0h1m12 0h1m1 0h1m27 0h1m11 0h1m13 0h1m37 0h1m5 0h1m14 0h1m1 0h1M0 186.5h1m23 0h1m11 0h1m9 0h2m9 0h1m14 0h1m2 0h1m38 0h1m18 0h3m4 0h1m41 0h1M4 187.5h1m10 0h1m1 0h1m10 0h1m3 0h1m1 0h1m6 0h1m7 0h1m8 0h1m26 0h1m6 0h1m16 0h1m2 0h1m6 0h1m2 0h1m8 0h1m3 0h1m35 0h1m5 0h1m3 0h2M14 188.5h1m20 0h1m4 0h1m28 0h1m2 0h1m18 0h1m5 0h1m3 0h1m4 0h1m35 0h1m9 0h1m3 0h1m11 0h1M25 189.5h1m13 0h1m2 0h1m7 0h1m5 0h1m4 0h1m18 0h1m23 0h1m4 0h2m11 0h1m19 0h1m4 0h1m8 0h2m13 0h1m8 0h1M1 190.5h1m24 0h1m7 0h1m44 0h1m2 0h1m39 0h1m18 0h1m5 0h2m1 0h1m11 0h1m12 0h1m3 0h1m16 0h1M6 191.5h1m14 0h1m2 0h1m9 0h1m6 0h1m37 0h1m1 0h1m10 0h1m1 0h1m1 0h1m9 0h1m2 0h1m59 0h1m5 0h1m7 0h1m6 0h1m5 0h1M3 192.5h1m12 0h1m7 0h1m7 0h1m19 0h1m25 0h1m9 0h1m5 0h1m1 0h1m2 0h1m10 0h1m61 0h1M30 193.5h1m8 0h1m4 0h1m21 0h1m4 0h1m4 0h1m1 0h1m2 0h1m5 0h1m8 0h2m2 0h1m15 0h1m3 0h1m8 0h1m40 0h1m6 0h1m5 0h1m10 0h2M12 194.5h1m35 0h1m10 0h1m14 0h1m1 0h2m24 0h1m4 0h1m56 0h1m1 0h1m6 0h1M0 195.5h1m18 0h2m14 0h1m26 0h1m19 0h1m1 0h2m17 0h1m4 0h1m13 0h2m14 0h1m15 0h1m30 0h1M3 196.5h1m1 0h1m15 0h1m2 0h1m10 0h1m3 0h1m28 0h1m22 0h1m11 0h1m8 0h1m4 0h1m6 0h1m12 0h1m4 0h1m6 0h1m3 0h1m18 0h2m12 0h1m11 0h1M2 197.5h1m5 0h1m23 0h1m1 0h1m10 0h1m9 0h1m3 0h2m17 0h2m7 0h1m15 0h1m5 0h1m4 0h1m6 0h1m8 0h1m4 0h1m5 0h1m40 0h1M12 198.5h1m28 0h1m19 0h1m23 0h1m16 0h1m25 0h1m10 0h1m6 0h1m13 0h1m1 0h1m20 0h1m4 0h1m4 0h1M0 199.5h1m7 0h1m9 0h1m18 0h1m2 0h1m27 0h1m2 0h1m2 0h1m16 0h1m3 0h1m18 0h1m7 0h1m2 0h1m24 0h1m1 0h2m24 0h1m2 0h1m4 0h1m11 0h1"/><path stroke="#ffff89" d="M2 0.5h1m22 0h1m4 0h1m37 0h1M17 1.5h1m8 0h1m5 0h1m5 0h1m4 0h1m9 0h1m19 0h1m27 0h1m24 0h1m5 0h1m26 0h1m11 0h1M7 2.5h1m12 0h1m7 0h1m3 0h1m23 0h1m14 0h1m4 0h1m27 0h1m51 0h1M34 3.5h2m31 0h1m9 0h1m31 0h1m28 0h1m4 0h1m29 0h1m1 0h1m1 0h1M27 4.5h1m15 0h1m6 0h1m17 0h1m9 0h1m2 0h1m12 0h1m20 0h1m33 0h1m1 0h1M40 5.5h1m11 0h1m8 0h1m8 0h1m11 0h1m20 0h1m26 0h1m6 0h1m15 0h1m18 0h1m12 0h1M6 6.5h1m11 0h1m12 0h1m35 0h1m15 0h2m16 0h1m45 0h1m16 0h1M1 7.5h1m2 0h1m9 0h1m24 0h1m3 0h1m22 0h1m6 0h1m14 0h1m2 0h1m12 0h1m4 0h1m24 0h1m1 0h1m14 0h1m5 0h1m4 0h1m4 0h1m24 0h1m1 0h1M5 8.5h1m33 0h1m39 0h1m7 0h1m39 0h1m36 0h1m4 0h1m9 0h1M9 9.5h1m5 0h1m9 0h1m30 0h1m8 0h1m21 0h1m5 0h1m5 0h1m11 0h1m17 0h1m32 0h1m6 0h1m6 0h1m1 0h1m12 0h1M3 10.5h1m19 0h1m13 0h1m12 0h1m12 0h1m66 0h1m3 0h1m6 0h1m26 0h1m8 0h1m12 0h1M5 11.5h1m36 0h1m13 0h1m4 0h2m98 0h1m2 0h1m9 0h1m6 0h1m6 0h1m5 0h1M5 12.5h1m7 0h1m1 0h1m56 0h1m14 0h1m4 0h1m16 0h1m6 0h1m10 0h1m2 0h1m9 0h2m3 0h1m7 0h1m9 0h1m3 0h1m9 0h1m14 0h1m2 0h1m1 0h1M4 13.5h1m4 0h1m4 0h1m22 0h1m60 0h2m37 0h1m9 0h1m48 0h1M8 14.5h1m8 0h1m38 0h1m6 0h1m13 0h1m25 0h1m21 0h1m9 0h1m16 0h1m3 0h1m26 0h1M64 15.5h1m3 0h1m3 0h1m35 0h1m1 0h1m46 0h1m1 0h1m18 0h1m9 0h1m7 0h1M3 16.5h1m13 0h1m1 0h1m22 0h2m5 0h1m12 0h1m13 0h1m44 0h1m24 0h1m18 0h1m30 0h1M5 17.5h1m22 0h2m14 0h1m15 0h1m34 0h1m20 0h1m17 0h1m46 0h1M5 18.5h1m1 0h2m20 0h1m23 0h1m6 0h1m7 0h1m1 0h1m13 0h1m1 0h1m21 0h1m3 0h1m18 0h1m30 0h1m2 0h1m14 0h1m2 0h2M2 19.5h1m15 0h1m1 0h1m17 0h1m14 0h1m32 0h2m6 0h1m41 0h1m12 0h2m22 0h1m23 0h1m1 0h1M9 20.5h1m18 0h1m7 0h2m4 0h1m3 0h1m13 0h1m6 0h1m13 0h1m8 0h1m35 0h1m42 0h1M7 21.5h1m4 0h1m24 0h1m6 0h1m3 0h1m2 0h1m7 0h1m6 0h1m11 0h1m5 0h1m22 0h1m56 0h1m14 0h1M7 22.5h1m9 0h1m82 0h1m8 0h1m40 0h1m15 0h1M2 23.5h1m1 0h1m8 0h1m7 0h1m1 0h1m8 0h1m21 0h1m7 0h1m2 0h1m7 0h1m12 0h1m21 0h1m5 0h1m5 0h2m41 0h1m3 0h1m1 0h1m10 0h1M31 24.5h1m28 0h1m6 0h1m6 0h1m2 0h1m6 0h1m1 0h1m19 0h1m43 0h1m17 0h1m9 0h1m2 0h1m14 0h1M18 25.5h1m2 0h1m11 0h1m4 0h1m21 0h1m6 0h1m33 0h1m43 0h1m48 0h1M0 26.5h1m28 0h1m4 0h2m36 0h1m9 0h1m20 0h1m8 0h1m21 0h1m6 0h1m16 0h1m2 0h1m1 0h1m1 0h1m21 0h1M31 27.5h1m19 0h1m15 0h1m5 0h1m1 0h1m36 0h1m33 0h1m9 0h1m9 0h1m2 0h1m17 0h1M16 28.5h1m4 0h1m18 0h1m6 0h1m18 0h1m6 0h1m13 0h1m1 0h1m12 0h1m8 0h1m11 0h1m4 0h1m6 0h2m1 0h1m20 0h1m2 0h1m23 0h1m1 0h1M38 29.5h1m11 0h1m3 0h1m37 0h1m2 0h1m6 0h1m6 0h1m11 0h1m49 0h1m4 0h1m6 0h1M0 30.5h1m74 0h1m4 0h1m12 0h2m11 0h1m4 0h1m7 0h1m8 0h1m12 0h1m16 0h1m8 0h1M17 31.5h1m33 0h1m7 0h1m29 0h1m17 0h1m4 0h1m6 0h1m20 0h1m4 0h1m18 0h1m12 0h1m8 0h1m6 0h1M1 32.5h1m12 0h2m9 0h1m8 0h1m7 0h1m9 0h4m2 0h1m23 0h1m11 0h1m24 0h1m43 0h1m1 0h1m6 0h1m18 0h1m3 0h1m1 0h1M20 33.5h1m5 0h1m4 0h1m1 0h1m8 0h1m6 0h1m52 0h1m1 0h1m4 0h1m3 0h1m17 0h1m7 0h1m3 0h1m29 0h1m7 0h1m5 0h1m9 0h1M23 34.5h1m10 0h1m14 0h2m54 0h1m9 0h1m22 0h1m9 0h1m1 0h1m3 0h1m13 0h1m9 0h1M6 35.5h1m3 0h1m42 0h1m2 0h1m11 0h1m1 0h1m15 0h1m5 0h1m12 0h1m18 0h1m37 0h1m12 0h2M24 36.5h1m13 0h1m11 0h1m1 0h1m13 0h1m38 0h1m16 0h1m17 0h1m16 0h1M4 37.5h1m16 0h1m10 0h1m3 0h1m4 0h1m4 0h1m3 0h1m3 0h1m41 0h1m11 0h1m14 0h1m10 0h2m1 0h1m12 0h1m26 0h1M1 38.5h1m2 0h1m4 0h1m8 0h1m14 0h1m9 0h2m41 0h1m41 0h1m5 0h1m12 0h1m1 0h1m18 0h1m12 0h1m6 0h1M8 39.5h1m13 0h1m28 0h1m7 0h1m16 0h1m13 0h1m13 0h1m9 0h1m38 0h1m15 0h1m2 0h1m11 0h1m2 0h1m8 0h1M5 40.5h1m3 0h2m4 0h2m3 0h1m24 0h1m20 0h1m5 0h1m8 0h1m26 0h1m17 0h1m15 0h1m6 0h1m2 0h1m18 0h1m19 0h1M16 41.5h1m7 0h1m4 0h1m19 0h1m11 0h1m19 0h1m2 0h1m32 0h1m17 0h1m3 0h1m7 0h1m8 0h1m19 0h1m19 0h1M0 42.5h1m5 0h1m39 0h1m12 0h1m24 0h1m22 0h1m10 0h1m1 0h1m18 0h1m2 0h1m1 0h1m3 0h1m8 0h1m6 0h1m5 0h1m7 0h2M54 43.5h1m25 0h1m1 0h1m1 0h1m9 0h1m10 0h1m25 0h1m1 0h1m23 0h1m7 0h1m10 0h1m10 0h1M0 44.5h1m1 0h1m36 0h1m13 0h1m19 0h1m3 0h1m21 0h1m4 0h1m6 0h1m20 0h1m27 0h1m5 0h1m21 0h2m9 0h1M24 45.5h1m8 0h1m29 0h1m15 0h1m30 0h1m6 0h1m15 0h1m43 0h1m5 0h1M31 46.5h1m7 0h1m13 0h1m22 0h1m28 0h1m3 0h1m29 0h1m20 0h1m38 0h1M0 47.5h1m11 0h1m1 0h1m21 0h1m12 0h1m23 0h1m7 0h1m1 0h1m11 0h1m22 0h1m14 0h1m4 0h1m31 0h1m11 0h1M4 48.5h1m10 0h1m21 0h1m13 0h1m31 0h2m25 0h1m38 0h1m7 0h1m7 0h1m14 0h1M3 49.5h1m28 0h1m10 0h1m20 0h1m32 0h1m7 0h1m2 0h1m1 0h1m23 0h1m46 0h1m9 0h1M14 50.5h1m24 0h1m4 0h1m5 0h1m24 0h1m17 0h1m1 0h1m16 0h1m23 0h1m36 0h1m4 0h2M21 51.5h2m9 0h1m36 0h1m44 0h1m7 0h1m13 0h1m8 0h1m7 0h1m11 0h1m14 0h1M5 52.5h1m12 0h1m28 0h1m11 0h1m16 0h1m22 0h1m9 0h1m12 0h1m60 0h1M2 53.5h1m8 0h1m15 0h1m9 0h1m17 0h1m3 0h1m18 0h1m45 0h1m12 0h1m16 0h1M6 54.5h1m9 0h1m7 0h1m6 0h1m1 0h1m18 0h1m1 0h1m13 0h1m20 0h1m5 0h1m5 0h1m6 0h1m30 0h1m8 0h1m26 0h1M93 55.5h1m13 0h1m13 0h1m28 0h1m23 0h1m6 0h1M12 56.5h2m11 0h1m11 0h1m20 0h1m2 0h1m23 0h1m25 0h1m14 0h1m70 0h1M20 57.5h1m2 0h1m10 0h1m1 0h1m65 0h1m15 0h1m31 0h1m5 0h2m21 0h1M3 58.5h1m19 0h1m9 0h1m30 0h1m1 0h1m4 0h1m5 0h1m18 0h1m31 0h1m14 0h1m7 0h1m2 0h1M3 59.5h1m16 0h1m7 0h1m15 0h1m2 0h1m8 0h1m16 0h1m12 0h1m27 0h1m1 0h1m9 0h2m2 0h1m7 0h1m21 0h1m20 0h1m5 0h1m3 0h1M12 60.5h1m27 0h1m8 0h1m22 0h1m4 0h1m11 0h1m28 0h1m13 0h1m39 0h1m8 0h1m14 0h1M0 61.5h1m4 0h2m28 0h1m8 0h1m3 0h1m30 0h1m8 0h1m2 0h1m1 0h1m40 0h1m31 0h1m6 0h1m3 0h2M12 62.5h1m11 0h1m8 0h1m1 0h1m26 0h1m6 0h1m12 0h1m3 0h1m6 0h1m1 0h1m16 0h1m7 0h1m3 0h1m8 0h1m4 0h1m6 0h1m5 0h1m15 0h1m21 0h1M31 63.5h1m53 0h1m13 0h1m14 0h1m10 0h1m27 0h1m14 0h1m8 0h1m4 0h1M1 64.5h1m16 0h1m50 0h1m39 0h1m1 0h1m6 0h1m4 0h1m38 0h1m28 0h1m2 0h1M5 65.5h1m13 0h1m3 0h1m42 0h1m37 0h1m55 0h1m15 0h1m7 0h1m8 0h1M11 66.5h1m6 0h1m8 0h1m7 0h1m12 0h1m5 0h2m15 0h1m4 0h1m10 0h1m2 0h1m20 0h2m3 0h2m8 0h1m5 0h1m13 0h1m6 0h1m3 0h1m37 0h1m2 0h1M77 67.5h1m20 0h2m33 0h1M23 68.5h1m1 0h1m5 0h1m5 0h1m27 0h1m10 0h1m17 0h1m7 0h1m3 0h1m8 0h1m10 0h1m3 0h1m4 0h1m21 0h1m10 0h1m13 0h1M5 69.5h1m11 0h1m42 0h1m1 0h1m31 0h1m11 0h1m18 0h1m6 0h2m15 0h1m26 0h1m8 0h1m6 0h1m1 0h1M15 70.5h1m8 0h1m3 0h1m18 0h1m13 0h1m3 0h1m10 0h1m2 0h1m16 0h1m2 0h1m19 0h1m10 0h1m5 0h1m16 0h1m9 0h1m4 0h1M30 71.5h1m26 0h1m5 0h1m31 0h1m1 0h1m9 0h1m7 0h1m15 0h1m25 0h1m28 0h1m5 0h1M45 72.5h1m1 0h1m6 0h1m9 0h1m4 0h1m23 0h1m33 0h1m24 0h2m1 0h1m4 0h1m3 0h1m26 0h1m2 0h1M4 73.5h1m4 0h1m14 0h1m1 0h1m5 0h1m2 0h1m2 0h1m11 0h1m19 0h1m1 0h1m11 0h1m1 0h1m42 0h1m13 0h2m5 0h1m2 0h1m37 0h1m2 0h1M0 74.5h1m2 0h2m5 0h1m35 0h1m45 0h1m8 0h1m2 0h2m79 0h1m5 0h1M2 75.5h1m6 0h1m2 0h1m14 0h2m1 0h1m27 0h1m15 0h1m7 0h1m7 0h1m25 0h1m4 0h1m1 0h1m11 0h1m11 0h1m5 0h1m8 0h1m23 0h1m2 0h1M17 76.5h1m3 0h1m1 0h1m1 0h1m47 0h1m13 0h1m25 0h1m1 0h1m10 0h1m8 0h1m1 0h1m16 0h1m7 0h1m3 0h1m30 0h1M1 77.5h1m4 0h1m8 0h1m2 0h1m15 0h1m5 0h1m19 0h2m4 0h1m11 0h1m14 0h1m42 0h1m1 0h1m1 0h1m19 0h1M14 78.5h1m4 0h1m9 0h1m3 0h1m16 0h1m1 0h1m66 0h1m18 0h1M2 79.5h1m6 0h1m8 0h1m4 0h1m2 0h2m11 0h2m10 0h1m25 0h1m24 0h1m2 0h1m4 0h1m16 0h1m41 0h1m3 0h1m21 0h1M2 80.5h1m14 0h1m2 0h1m2 0h1m10 0h1m3 0h1m19 0h1m8 0h1m25 0h1m23 0h1m12 0h1m13 0h1m4 0h1m3 0h1m9 0h1M33 81.5h1m5 0h1m14 0h1m7 0h1m8 0h1m19 0h1m23 0h1m43 0h1m6 0h1m1 0h1M19 82.5h1m34 0h1m7 0h1m48 0h1m39 0h1M10 83.5h2m18 0h2m28 0h1m20 0h1m24 0h1m31 0h1m30 0h1M6 84.5h1m1 0h2m2 0h1m6 0h2m3 0h1m58 0h1m4 0h1m11 0h1m22 0h1m12 0h1m7 0h1m4 0h1m7 0h1m38 0h1M7 85.5h1m47 0h1m9 0h1m2 0h1m13 0h1m28 0h1m19 0h2m38 0h1m8 0h1m6 0h1m11 0h1M16 86.5h2m5 0h1m9 0h1m12 0h1m26 0h1m7 0h1m20 0h1m10 0h1m16 0h1m7 0h1m2 0h1m3 0h1m25 0h1M2 87.5h1m25 0h1m39 0h1m23 0h1m27 0h1m76 0h1M1 88.5h2m23 0h1m13 0h1m3 0h2m2 0h1m2 0h1m7 0h1m12 0h1m40 0h1m10 0h1m12 0h1m1 0h1m10 0h1m6 0h1m6 0h1m7 0h1m8 0h1m1 0h1m5 0h1M10 89.5h1m21 0h1m6 0h1m14 0h1m22 0h1m18 0h1m80 0h1m5 0h1M4 90.5h1m4 0h1m5 0h1m16 0h1m12 0h1m90 0h1m1 0h1m21 0h2m19 0h1m17 0h1M18 91.5h1m25 0h1m2 0h1m27 0h2m33 0h1m30 0h1m22 0h1m21 0h1M0 92.5h1m4 0h1m47 0h1m8 0h1m2 0h1m2 0h1m9 0h1m20 0h1m3 0h1m14 0h2m5 0h1m4 0h1m1 0h1m1 0h1m10 0h1m14 0h1m6 0h1M6 93.5h1m5 0h1m13 0h1m1 0h1m8 0h1m30 0h1m6 0h1m9 0h1m16 0h1m14 0h1m12 0h1m6 0h2m1 0h1m3 0h1m11 0h1m6 0h1m12 0h1m19 0h1M29 94.5h1m15 0h1m2 0h1m4 0h1m16 0h1m17 0h1m6 0h1m12 0h1m17 0h1m5 0h1m19 0h1m7 0h1m12 0h3m5 0h1m2 0h1M7 95.5h1m16 0h1m1 0h1m27 0h1m31 0h1m25 0h1m22 0h1m2 0h1m31 0h1m16 0h1m2 0h1M12 96.5h1m6 0h1m8 0h1m30 0h1m1 0h1m19 0h1m1 0h1m21 0h1m7 0h1m47 0h1m28 0h1m3 0h1M42 97.5h1m27 0h1m27 0h1m25 0h1m11 0h1m6 0h1m2 0h1m17 0h1m1 0h1m5 0h1m21 0h1m3 0h1M19 98.5h1m12 0h1m7 0h1m9 0h1m16 0h1m30 0h1m9 0h1m3 0h2m8 0h1m20 0h1m4 0h1m9 0h1m36 0h1M23 99.5h1m14 0h1m15 0h1m19 0h1m8 0h1m35 0h2m2 0h1m4 0h1m53 0h1m5 0h1M0 100.5h1m9 0h2m18 0h1m8 0h1m22 0h1m44 0h1m4 0h1m26 0h1m32 0h1m1 0h1m19 0h1m3 0h1M2 101.5h1m7 0h1m23 0h2m1 0h1m17 0h1m16 0h1m12 0h1m19 0h1m2 0h1m34 0h1m43 0h1m10 0h1M31 102.5h1m23 0h1m9 0h1m12 0h2m30 0h1m4 0h1m17 0h1m12 0h1m3 0h1m4 0h1m3 0h1m9 0h1m7 0h1m5 0h1m1 0h1M38 103.5h1m37 0h1m10 0h1m3 0h1m9 0h1m2 0h1m16 0h1m5 0h1m8 0h1m18 0h1m21 0h1m8 0h2M25 104.5h1m14 0h1m10 0h1m15 0h1m9 0h1m19 0h1m6 0h1m8 0h1m60 0h1m8 0h1m4 0h1M10 105.5h1m1 0h2m6 0h1m12 0h1m18 0h1m6 0h1m1 0h1m16 0h1m1 0h1m1 0h1m8 0h1m20 0h1m24 0h1m4 0h1m7 0h1m12 0h1m24 0h1M21 106.5h1m8 0h1m3 0h1m2 0h1m8 0h1m13 0h1m28 0h1m20 0h1m43 0h1m9 0h1m8 0h1m10 0h1m4 0h1m1 0h2M3 107.5h1m2 0h1m9 0h1m44 0h1m8 0h2m4 0h1m7 0h1m51 0h1m15 0h1m9 0h1m8 0h1m2 0h1M57 108.5h1m27 0h1m12 0h1m10 0h1m3 0h1m1 0h1m15 0h1m2 0h1m8 0h1m10 0h1m4 0h1m28 0h1M22 109.5h1m1 0h1m18 0h1m13 0h1m20 0h1m11 0h1m17 0h1m16 0h1m12 0h1m12 0h1m26 0h1M2 110.5h1m1 0h1m4 0h1m9 0h1m30 0h1m1 0h1m17 0h1m20 0h1m6 0h1m13 0h1m8 0h1m7 0h1m3 0h1m34 0h1M11 111.5h1m6 0h1m19 0h1m11 0h1m27 0h1m23 0h1m25 0h1m5 0h1m63 0h1M26 112.5h1m14 0h1m10 0h1m8 0h1m13 0h1m1 0h1m14 0h1m13 0h1m31 0h1m14 0h1m7 0h1m2 0h1m27 0h1M8 113.5h1m7 0h1m21 0h1m4 0h1m7 0h1m6 0h1m1 0h1m4 0h1m27 0h1m1 0h1m2 0h1m5 0h1m23 0h1m7 0h1m19 0h1m6 0h1m1 0h1m14 0h1m9 0h1m1 0h1M23 114.5h1m22 0h1m22 0h1m36 0h2m14 0h1m8 0h1m14 0h1m20 0h1m21 0h1M5 115.5h1m8 0h1m20 0h1m1 0h1m8 0h1m13 0h1m1 0h1m1 0h1m10 0h1m12 0h1m1 0h1m2 0h1m23 0h1m2 0h1m11 0h1m2 0h1m21 0h1M4 116.5h2m3 0h1m25 0h1m9 0h1m5 0h1m3 0h2m22 0h1m84 0h1m13 0h1m10 0h1m3 0h1M21 117.5h1m15 0h1m7 0h1m9 0h1m26 0h1m9 0h1m44 0h1m9 0h1m27 0h1m8 0h1M33 118.5h1m6 0h1m22 0h1m30 0h1m4 0h1m18 0h1m2 0h1m51 0h1m17 0h3m2 0h1M2 119.5h1m14 0h1m1 0h1m1 0h1m19 0h1m27 0h1m28 0h1m47 0h1m1 0h2m20 0h1m2 0h1m1 0h1m15 0h1M7 120.5h1m16 0h1m8 0h1m31 0h1m23 0h1m2 0h2m17 0h1m2 0h2m1 0h1m1 0h1m11 0h1m23 0h1m3 0h1m7 0h1M0 121.5h1m7 0h1m13 0h1m1 0h3m31 0h1m3 0h1m4 0h1m6 0h1m17 0h1m10 0h1m6 0h1m26 0h1m35 0h1m1 0h1m5 0h1m12 0h1M8 122.5h1m4 0h1m5 0h1m12 0h1m32 0h1m11 0h1m9 0h1m25 0h1m9 0h1m34 0h1m15 0h2m13 0h1m8 0h1M2 123.5h1m22 0h1m6 0h1m19 0h1m2 0h1m5 0h1m3 0h2m5 0h1m21 0h2m12 0h1m1 0h1m9 0h1m1 0h1m8 0h2m24 0h1m8 0h2m1 0h1m6 0h1m10 0h1M34 124.5h1m3 0h1m20 0h1m8 0h1m4 0h1m5 0h1m16 0h1m20 0h1m9 0h1m23 0h1m23 0h1m1 0h1m17 0h2M28 125.5h1m9 0h1m9 0h1m32 0h1m48 0h1m9 0h1m6 0h1m6 0h1m11 0h1m2 0h1M2 126.5h1m10 0h1m23 0h1m3 0h1m7 0h1m5 0h1m2 0h1m7 0h1m5 0h2m15 0h1m20 0h1m2 0h1m14 0h1m12 0h1m17 0h1M2 127.5h1m11 0h1m34 0h2m11 0h1m11 0h1m41 0h1m3 0h1m13 0h1m24 0h1m4 0h1m26 0h1M0 128.5h1m9 0h1m14 0h1m15 0h1m1 0h1m3 0h1m1 0h1m11 0h2m2 0h1m44 0h1m9 0h1m14 0h1m21 0h1m3 0h2m18 0h1m9 0h1m7 0h1M24 129.5h1m3 0h2m24 0h1m8 0h1m13 0h1m29 0h1m32 0h1m40 0h2m1 0h1m4 0h1M28 130.5h1m19 0h1m9 0h1m10 0h1m26 0h1m12 0h1m39 0h1m3 0h1m14 0h1m8 0h1m4 0h1M38 131.5h1m5 0h1m20 0h1m36 0h1m11 0h1m19 0h1m23 0h1m14 0h1m20 0h1m2 0h1M53 132.5h1m16 0h1m5 0h1m5 0h1m20 0h1m18 0h1m8 0h1m1 0h1m21 0h1m28 0h1m10 0h1M1 133.5h1m11 0h1m21 0h1m9 0h1m36 0h1m27 0h1m4 0h1m7 0h1m3 0h1m1 0h1m29 0h1m1 0h1m3 0h1m18 0h1m9 0h1M0 134.5h1m11 0h1m12 0h1m34 0h1m16 0h2m6 0h1m3 0h1m15 0h1m93 0h1M23 135.5h1m19 0h1m15 0h1m12 0h1m11 0h2m28 0h1m12 0h1m24 0h1m13 0h1M14 136.5h1m5 0h1m48 0h2m11 0h1m19 0h1m15 0h1m18 0h1m23 0h1m14 0h1m8 0h1m3 0h1m2 0h1m4 0h1M6 137.5h1m5 0h1m12 0h1m12 0h1m24 0h2m10 0h1m35 0h1m57 0h1m5 0h1m15 0h2m6 0h1M3 138.5h1m13 0h2m22 0h1m4 0h1m6 0h1m16 0h1m8 0h1m7 0h1m32 0h1m15 0h1m30 0h1m5 0h1m25 0h1M36 139.5h1m46 0h1m9 0h2m6 0h1m4 0h1m6 0h1m38 0h1m7 0h1M31 140.5h1m24 0h2m12 0h1m3 0h1m2 0h1m4 0h1m17 0h1m12 0h1m24 0h2m21 0h1M15 141.5h1m9 0h1m2 0h1m62 0h1m71 0h1m12 0h1m6 0h2M3 142.5h1m20 0h2m14 0h2m27 0h1m2 0h1m8 0h1m14 0h1m10 0h1m37 0h1m15 0h1m5 0h1m7 0h2M10 143.5h1m1 0h1m2 0h1m4 0h1m11 0h1m14 0h1m43 0h1m5 0h1m16 0h1m20 0h1m24 0h2m10 0h1m2 0h1m1 0h1m6 0h1m1 0h1m1 0h1m5 0h1M0 144.5h1m13 0h1m8 0h1m48 0h1m1 0h1m16 0h1m19 0h1m10 0h1m18 0h1m3 0h1m6 0h1m1 0h1m18 0h1m13 0h1M28 145.5h2m22 0h1m7 0h1m8 0h1m12 0h1m21 0h1m24 0h1m10 0h1m6 0h1m9 0h1M0 146.5h1m7 0h1m7 0h1m12 0h1m7 0h1m21 0h1m14 0h1m5 0h1m7 0h1m8 0h1m18 0h1m2 0h1m3 0h1m33 0h1m6 0h1m12 0h1M6 147.5h1m1 0h1m23 0h1m26 0h1m20 0h1m7 0h1m13 0h1m56 0h1m14 0h1m1 0h1m18 0h1m3 0h1M6 148.5h1m9 0h1m5 0h1m5 0h1m23 0h1m22 0h1m16 0h2m6 0h1m1 0h1m2 0h1m59 0h1m15 0h1m12 0h1m1 0h1M12 149.5h1m25 0h1m3 0h1m45 0h1m8 0h2m5 0h1m8 0h2m9 0h2m5 0h1m8 0h1m9 0h1m21 0h1M11 150.5h1m28 0h1m58 0h1m10 0h1m48 0h1m15 0h1M20 151.5h1m22 0h1m10 0h1m12 0h1m8 0h1m11 0h1m7 0h1m4 0h1m7 0h1m9 0h2m25 0h1m15 0h1m12 0h1M45 152.5h1m36 0h1m11 0h1m42 0h1m2 0h1m29 0h1m4 0h1M8 153.5h1m3 0h1m12 0h1m7 0h1m36 0h1m11 0h1m5 0h1m14 0h1m24 0h1m5 0h1m17 0h1m9 0h1m11 0h1m1 0h1m7 0h1M5 154.5h2m2 0h1m33 0h1m2 0h1m32 0h1m5 0h1m1 0h1m5 0h2m1 0h1m8 0h1m15 0h1m39 0h1m11 0h1M13 155.5h1m3 0h1m22 0h1m1 0h1m49 0h1m12 0h1m4 0h1m6 0h1m24 0h1m11 0h2m1 0h1m17 0h1m8 0h1m5 0h1M18 156.5h1m25 0h1m12 0h1m64 0h1m18 0h2m9 0h1m7 0h1m14 0h1m3 0h1m1 0h1m13 0h1M57 157.5h2m14 0h1m2 0h1m51 0h1m5 0h1m4 0h1m8 0h1m7 0h1m36 0h1M17 158.5h1m1 0h1m8 0h1m2 0h1m14 0h1m20 0h1m26 0h1m3 0h1m4 0h1m20 0h1m42 0h2m19 0h2m8 0h1M15 159.5h1m2 0h1m8 0h2m3 0h1m3 0h1m4 0h1m17 0h1m23 0h1m9 0h1m18 0h1m2 0h1m8 0h1m6 0h1m12 0h1m21 0h1m2 0h1m7 0h1M7 160.5h1m7 0h2m7 0h1m6 0h1m14 0h1m7 0h1m2 0h1m5 0h1m19 0h1m24 0h1m27 0h1m17 0h1m2 0h1m18 0h1m10 0h1M5 161.5h1m43 0h1m9 0h1m17 0h1m20 0h1m9 0h1m10 0h1m14 0h1m32 0h1M9 162.5h2m43 0h1m22 0h1m45 0h1m16 0h1m6 0h1m2 0h1m26 0h1m8 0h1M6 163.5h1m4 0h1m36 0h1m12 0h1m56 0h1m3 0h1m10 0h1m13 0h2m1 0h1m8 0h1m5 0h2M7 164.5h1m14 0h1m31 0h1m40 0h1m7 0h1m29 0h1m10 0h1m13 0h1M2 165.5h1m6 0h1m2 0h1m3 0h1m9 0h1m6 0h1m12 0h1m26 0h1m1 0h1m1 0h1m13 0h1m35 0h1m25 0h1m4 0h1m16 0h1m21 0h1M52 166.5h1m5 0h1m19 0h1m3 0h1m1 0h1m9 0h2m11 0h1m6 0h1m1 0h1m30 0h1m15 0h1m12 0h1m1 0h1m2 0h1m10 0h1m5 0h1M7 167.5h1m32 0h1m4 0h1m7 0h1m20 0h1m1 0h1m9 0h1m8 0h1m15 0h1m19 0h1m19 0h1m6 0h1m20 0h1M2 168.5h1m9 0h1m21 0h2m7 0h2m28 0h1m5 0h1m4 0h1m27 0h1m25 0h1m9 0h1m18 0h1m8 0h1m1 0h1m12 0h1M8 169.5h1m23 0h1m77 0h1m20 0h1m26 0h1m2 0h1m1 0h1m6 0h1m8 0h1m2 0h1M37 170.5h1m30 0h1m25 0h1m4 0h1m8 0h1m23 0h1m29 0h1m15 0h1M2 171.5h1m3 0h1m18 0h1m44 0h1m12 0h1m14 0h1m2 0h1m9 0h1m24 0h1m2 0h1M13 172.5h1m29 0h1m10 0h1m13 0h1m13 0h1m2 0h1m3 0h1m37 0h1m10 0h1m4 0h1m12 0h1M5 173.5h1m79 0h1m10 0h3m1 0h1m6 0h1m7 0h1m21 0h1m11 0h1m18 0h1m8 0h2m8 0h1M19 174.5h1m23 0h1m35 0h1m2 0h1m72 0h1m10 0h1m11 0h1m7 0h1M2 175.5h1m3 0h1m1 0h1m6 0h1m7 0h1m5 0h1m12 0h1m26 0h1m42 0h1m18 0h1m3 0h1m11 0h1m13 0h1m6 0h1M36 176.5h1m31 0h3m25 0h1m1 0h1m9 0h1m14 0h1m7 0h1M4 177.5h1m9 0h1m10 0h1m61 0h1m20 0h1m9 0h1m45 0h1m4 0h1m7 0h2m9 0h1m6 0h1M42 178.5h1m36 0h1m8 0h1m32 0h1m21 0h1m16 0h2m3 0h1m8 0h1m3 0h1M9 179.5h1m10 0h1m52 0h1m67 0h1m27 0h1m24 0h1m4 0h1M3 180.5h1m32 0h1m52 0h1m10 0h1m11 0h1m37 0h1m1 0h1m2 0h1m15 0h1m13 0h1m2 0h1m4 0h1M12 181.5h1m3 0h1m2 0h2m25 0h1m5 0h1m80 0h1m19 0h1m7 0h1m23 0h1m3 0h1M8 182.5h1m4 0h1m25 0h1m7 0h1m6 0h2m17 0h1m1 0h1m9 0h1m39 0h1m17 0h1m15 0h1m9 0h2m17 0h1M6 183.5h1m25 0h1m3 0h1m1 0h1m3 0h1m21 0h1m34 0h1m6 0h2m9 0h1m2 0h1m13 0h1m1 0h3m52 0h1M5 184.5h1m18 0h1m21 0h1m22 0h1m14 0h1m30 0h1m36 0h1m16 0h1m4 0h1m22 0h1M1 185.5h1m22 0h1m40 0h1m13 0h1m12 0h1m23 0h1m60 0h1m4 0h1M23 186.5h1m7 0h1m20 0h1m23 0h1m35 0h1m30 0h2m11 0h1m6 0h1m13 0h1m2 0h1m4 0h1M24 187.5h1m2 0h1m19 0h1m7 0h1m17 0h1m1 0h1m34 0h1m25 0h1m6 0h1m19 0h1m22 0h1m12 0h1M22 188.5h1m29 0h1m34 0h1m4 0h2m16 0h1m19 0h1m8 0h1m38 0h1M9 189.5h1m1 0h1m1 0h2m12 0h1m29 0h1m44 0h1m16 0h1m13 0h1m40 0h1m7 0h1m13 0h1M15 190.5h2m26 0h1m5 0h1m59 0h1m9 0h1m4 0h1m8 0h1m3 0h1m4 0h1m51 0h1M17 191.5h1m8 0h1m17 0h2m10 0h2m84 0h1m11 0h1m16 0h1m10 0h1m2 0h1M38 192.5h1m40 0h1m9 0h1m14 0h1m6 0h1m8 0h1m11 0h1m5 0h1m1 0h1m36 0h1m21 0h1M14 193.5h1m38 0h1m15 0h1m15 0h1m12 0h1m13 0h1m5 0h1m38 0h1m26 0h1M20 194.5h1m2 0h1m32 0h1m1 0h1m2 0h1m30 0h1m10 0h1m7 0h1m37 0h1m9 0h1m12 0h1m6 0h1m3 0h1m6 0h1M39 195.5h1m26 0h1m8 0h1m52 0h1m21 0h1m10 0h1m15 0h1m3 0h1M7 196.5h2m55 0h1m19 0h1m5 0h1m15 0h1m1 0h1m24 0h1m42 0h1m1 0h1m2 0h1m15 0h1M171 197.5h1m2 0h1m17 0h1m2 0h1M4 198.5h1m14 0h1m24 0h1m6 0h2m21 0h1M15 199.5h1m5 0h1m37 0h1m20 0h1m15 0h1m9 0h1m28 0h1m6 0h1m6 0h1m15 0h2m5 0h3m9 0h1m3 0h1"/><path stroke="#ffffff" d="M9 0.5h1m1 0h1m3 0h1m16 0h1m1 0h2m1 0h1m5 0h1m26 0h1m14 0h1m6 0h2m3 0h1m14 0h2m1 0h1m2 0h1m7 0h1m4 0h1m6 0h2m2 0h1m6 0h1m1 0h1m7 0h2m5 0h2m1 0h2m6 0h1m5 0h1m2 0h1m6 0h1M4 1.5h1m19 0h2m1 0h1m7 0h1m4 0h1m1 0h1m4 0h1m18 0h1m2 0h1m13 0h1m1 0h2m6 0h1m1 0h1m3 0h1m3 0h1m3 0h2m4 0h1m2 0h1m11 0h1m18 0h1m2 0h1m10 0h1m7 0h1m5 0h1m7 0h1m2 0h1m6 0h1M9 2.5h1m17 0h1m2 0h1m3 0h1m7 0h1m16 0h3m2 0h1m10 0h1m5 0h1m6 0h1m12 0h1m4 0h1m4 0h2m2 0h1m24 0h1m12 0h1m5 0h1m18 0h1m16 0h1M0 3.5h2m8 0h1m11 0h1m2 0h1m16 0h1m4 0h1m4 0h2m1 0h1m15 0h1m12 0h1m2 0h1m6 0h2m1 0h1m8 0h1m5 0h1m3 0h1m17 0h1m5 0h1m1 0h1m3 0h1m2 0h1m11 0h1m3 0h1m10 0h1m10 0h1m2 0h1M0 4.5h2m10 0h2m6 0h1m12 0h1m14 0h1m7 0h1m3 0h1m26 0h1m13 0h1m2 0h1m5 0h1m10 0h1m3 0h1m2 0h1m29 0h1m6 0h1m1 0h1m1 0h1m1 0h2m3 0h1m9 0h2m1 0h1m3 0h1M1 5.5h1m9 0h1m7 0h1m28 0h1m5 0h1m3 0h1m8 0h1m13 0h1m1 0h1m2 0h1m15 0h1m10 0h1m1 0h2m9 0h1m12 0h1m2 0h2m1 0h1m1 0h1m14 0h1m7 0h1m4 0h1m1 0h1m13 0h1m2 0h1m4 0h1M1 6.5h1m1 0h1m4 0h1m17 0h1m2 0h1m8 0h1m3 0h1m2 0h1m11 0h1m4 0h2m1 0h1m4 0h1m7 0h1m6 0h1m6 0h1m6 0h1m6 0h1m9 0h2m5 0h1m5 0h2m6 0h1m6 0h1m16 0h2m4 0h1m5 0h1m15 0h1m2 0h1m6 0h1M16 7.5h1m7 0h1m2 0h1m1 0h1m12 0h1m1 0h1m5 0h1m2 0h1m4 0h1m6 0h1m2 0h1m3 0h1m8 0h1m10 0h1m5 0h1m1 0h1m5 0h1m5 0h1m4 0h1m1 0h1m3 0h1m3 0h1m3 0h1m16 0h1m6 0h1m4 0h2m14 0h2m11 0h1M7 8.5h1m3 0h1m8 0h1m8 0h1m4 0h1m1 0h1m1 0h1m1 0h1m4 0h1m26 0h2m3 0h1m13 0h2m4 0h1m11 0h2m2 0h1m1 0h1m8 0h1m3 0h1m1 0h2m6 0h3m3 0h1m9 0h2m22 0h1m1 0h1m8 0h1m3 0h1M1 9.5h1m11 0h1m2 0h1m7 0h1m1 0h1m2 0h1m3 0h1m5 0h1m10 0h1m2 0h1m21 0h1m2 0h1m1 0h1m15 0h1m6 0h2m9 0h1m3 0h3m1 0h1m7 0h1m9 0h1m5 0h1m2 0h1m15 0h1m1 0h1m3 0h1m5 0h1m3 0h1m4 0h1m5 0h1m1 0h1M2 10.5h1m11 0h1m7 0h1m8 0h1m11 0h2m2 0h1m14 0h1m2 0h1m5 0h1m15 0h1m3 0h2m1 0h1m2 0h1m2 0h1m11 0h1m5 0h1m12 0h2m2 0h1m10 0h1m15 0h1m3 0h1m5 0h1m9 0h2m9 0h1m3 0h1M7 11.5h2m3 0h1m13 0h1m9 0h2m10 0h1m9 0h1m1 0h1m4 0h1m11 0h1m19 0h1m2 0h2m1 0h1m6 0h1m1 0h1m7 0h1m8 0h2m1 0h1m2 0h1m8 0h1m5 0h1m3 0h1m1 0h1m6 0h1m2 0h1m3 0h1m7 0h2m6 0h1m6 0h1m3 0h1M3 12.5h1m15 0h1m2 0h1m1 0h1m5 0h3m5 0h1m10 0h1m13 0h1m17 0h2m7 0h1m8 0h1m1 0h1m15 0h1m4 0h1m10 0h1m14 0h1m9 0h1m1 0h1m11 0h2m2 0h1m12 0h1m4 0h1M15 13.5h1m12 0h1m10 0h2m3 0h1m1 0h1m5 0h1m13 0h1m5 0h1m1 0h1m5 0h1m36 0h1m1 0h1m2 0h1m3 0h1m3 0h2m3 0h1m5 0h1m7 0h1m9 0h1m2 0h1m15 0h2m4 0h1m9 0h1M0 14.5h1m19 0h1m6 0h1m1 0h1m5 0h1m2 0h1m16 0h1m4 0h1m3 0h1m1 0h1m40 0h2m6 0h1m2 0h1m7 0h1m6 0h1m4 0h1m9 0h1m5 0h1m4 0h1m3 0h2m1 0h1m10 0h1m6 0h1m12 0h1M0 15.5h2m7 0h1m2 0h1m8 0h2m6 0h1m2 0h1m3 0h1m7 0h1m2 0h2m3 0h1m2 0h1m7 0h1m9 0h1m3 0h1m9 0h1m6 0h1m2 0h1m2 0h1m5 0h1m19 0h1m2 0h1m4 0h1m7 0h1m12 0h1m26 0h1M0 16.5h1m5 0h1m2 0h1m6 0h1m9 0h2m5 0h1m5 0h1m8 0h1m8 0h1m1 0h2m7 0h1m13 0h1m1 0h1m1 0h1m2 0h1m6 0h1m13 0h1m4 0h1m19 0h1m2 0h1m30 0h1m6 0h1m4 0h1m9 0h1m1 0h1m3 0h1M17 17.5h1m19 0h1m1 0h1m8 0h1m2 0h2m2 0h1m15 0h1m2 0h1m5 0h1m6 0h1m5 0h1m11 0h2m10 0h1m1 0h1m5 0h1m6 0h1m3 0h1m17 0h1m1 0h1m4 0h1m13 0h1m2 0h1m5 0h1m1 0h1m1 0h1m7 0h1M1 18.5h3m5 0h1m4 0h1m6 0h1m10 0h1m1 0h1m4 0h1m9 0h1m11 0h1m27 0h1m4 0h1m28 0h1m15 0h1m12 0h1m5 0h1m1 0h2m4 0h1m8 0h1m12 0h1m6 0h1M16 19.5h1m9 0h1m9 0h1m6 0h1m8 0h1m1 0h1m6 0h1m5 0h1m10 0h1m9 0h1m11 0h1m7 0h1m3 0h1m7 0h1m17 0h1m9 0h1m9 0h1m2 0h1m3 0h1m10 0h1m2 0h1m5 0h1m1 0h1M6 20.5h1m4 0h2m7 0h1m4 0h1m5 0h1m1 0h1m11 0h1m7 0h1m1 0h1m15 0h1m1 0h1m2 0h1m5 0h1m8 0h1m7 0h1m9 0h1m4 0h1m17 0h1m8 0h1m9 0h2m5 0h1m4 0h2m10 0h1m9 0h1m1 0h1m11 0h1M14 21.5h1m1 0h1m1 0h1m5 0h1m4 0h2m4 0h1m11 0h1m2 0h1m11 0h1m30 0h1m7 0h1m15 0h1m10 0h2m1 0h1m2 0h1m1 0h1m1 0h1m13 0h1m4 0h1m16 0h1m5 0h1M2 22.5h1m1 0h1m5 0h1m12 0h1m18 0h1m5 0h1m6 0h1m6 0h2m5 0h1m12 0h1m2 0h1m2 0h1m47 0h1m8 0h1m11 0h1m4 0h1m14 0h3m10 0h1M10 23.5h2m4 0h2m6 0h1m2 0h3m13 0h1m8 0h1m2 0h3m1 0h2m7 0h2m9 0h1m5 0h1m1 0h1m15 0h1m11 0h1m2 0h1m10 0h2m4 0h1m2 0h2m5 0h1m1 0h1m4 0h1m9 0h1m18 0h2m2 0h1M9 24.5h1m16 0h1m1 0h1m5 0h2m6 0h1m7 0h1m8 0h1m2 0h1m13 0h1m6 0h1m3 0h2m4 0h2m20 0h1m5 0h1m1 0h1m13 0h1m9 0h1m4 0h2m6 0h1m15 0h1M3 25.5h1m7 0h1m2 0h1m8 0h1m1 0h1m20 0h1m4 0h1m7 0h1m8 0h1m5 0h1m55 0h1m1 0h1m6 0h1m1 0h1m13 0h1m3 0h1m11 0h1m4 0h1m5 0h1m2 0h1m13 0h1M1 26.5h1m2 0h1m3 0h1m10 0h1m5 0h1m2 0h1m15 0h1m9 0h1m15 0h1m2 0h1m1 0h1m1 0h1m13 0h1m6 0h1m6 0h1m1 0h1m3 0h1m4 0h1m13 0h1m7 0h2m3 0h2m9 0h2m18 0h1m1 0h1m5 0h1m1 0h2M6 27.5h1m2 0h1m3 0h1m6 0h2m3 0h1m2 0h1m31 0h1m4 0h1m5 0h1m17 0h1m6 0h1m9 0h1m1 0h1m7 0h1m3 0h1m8 0h1m20 0h1m1 0h1m10 0h2m25 0h1m4 0h3M8 28.5h1m17 0h1m10 0h1m4 0h2m20 0h1m3 0h1m8 0h1m27 0h1m14 0h1m4 0h2m5 0h1m4 0h1m9 0h2m3 0h1m15 0h2m10 0h1m2 0h2m2 0h1m3 0h1m5 0h1M0 29.5h2m6 0h1m12 0h3m3 0h1m7 0h1m1 0h1m6 0h3m6 0h1m1 0h1m9 0h2m23 0h1m29 0h1m6 0h1m19 0h1m1 0h1m12 0h1m1 0h1m21 0h1m11 0h2M7 30.5h1m5 0h1m2 0h1m2 0h1m14 0h1m7 0h1m15 0h1m9 0h1m12 0h1m18 0h3m4 0h1m10 0h1m1 0h1m9 0h1m3 0h1m2 0h2m5 0h1m9 0h1m20 0h1m1 0h1m3 0h1m3 0h1m6 0h1m5 0h2M20 31.5h1m10 0h1m10 0h1m9 0h1m13 0h1m1 0h2m15 0h1m5 0h1m1 0h2m16 0h1m1 0h1m1 0h1m1 0h1m9 0h1m7 0h1m8 0h1m9 0h2m2 0h1m1 0h1m22 0h1m3 0h1m3 0h2m3 0h1M8 32.5h1m18 0h1m9 0h1m9 0h1m16 0h1m4 0h1m5 0h1m4 0h1m4 0h1m5 0h1m6 0h1m3 0h1m2 0h1m21 0h1m1 0h1m1 0h1m13 0h1m7 0h2m16 0h1m2 0h2m7 0h1m1 0h1m10 0h1m1 0h1M18 33.5h2m2 0h1m12 0h2m10 0h1m4 0h1m44 0h1m3 0h1m6 0h1m19 0h1m4 0h1m1 0h1m9 0h2m1 0h1m10 0h1m3 0h1m1 0h1m1 0h1m2 0h1m15 0h1m3 0h3M5 34.5h1m5 0h1m3 0h1m1 0h2m17 0h1m28 0h2m5 0h1m2 0h1m20 0h2m1 0h2m10 0h1m19 0h1m17 0h1m15 0h2m10 0h1M3 35.5h1m4 0h1m2 0h2m7 0h3m1 0h1m3 0h1m21 0h1m22 0h1m7 0h1m7 0h1m7 0h1m1 0h2m13 0h2m2 0h1m10 0h1m2 0h1m6 0h1m2 0h1m24 0h1m1 0h1m15 0h1m11 0h1M4 36.5h1m7 0h1m5 0h2m2 0h2m3 0h1m1 0h1m2 0h1m3 0h1m4 0h1m2 0h1m16 0h1m13 0h1m5 0h1m12 0h1m13 0h1m7 0h1m8 0h2m1 0h1m24 0h1m27 0h3m10 0h1M1 37.5h1m3 0h1m6 0h1m2 0h2m16 0h1m1 0h1m12 0h1m3 0h1m4 0h2m42 0h1m2 0h1m4 0h1m3 0h1m3 0h1m9 0h2m9 0h1m5 0h1m10 0h1m35 0h1M6 38.5h1m15 0h2m15 0h2m7 0h1m16 0h1m5 0h1m21 0h1m2 0h1m19 0h1m3 0h1m4 0h1m3 0h2m4 0h1m1 0h1m1 0h1m2 0h1m11 0h1m7 0h1m10 0h1m11 0h1m3 0h1m1 0h1M5 39.5h1m28 0h1m6 0h1m5 0h1m1 0h1m2 0h1m1 0h1m2 0h1m17 0h1m9 0h1m8 0h1m5 0h1m17 0h1m1 0h1m3 0h1m16 0h1m4 0h1m1 0h1m9 0h2m4 0h2m14 0h1M12 40.5h1m1 0h1m10 0h1m13 0h1m3 0h1m40 0h1m6 0h1m2 0h3m5 0h1m2 0h1m1 0h1m9 0h1m2 0h1m3 0h1m6 0h1m11 0h1m13 0h1m1 0h1m13 0h1M10 41.5h1m1 0h1m2 0h1m10 0h1m21 0h1m4 0h1m1 0h2m1 0h1m3 0h1m13 0h1m8 0h1m6 0h1m1 0h1m29 0h1m3 0h1m12 0h1m3 0h1m11 0h1m3 0h1m5 0h2m2 0h1m6 0h1m2 0h3m1 0h1m9 0h1M1 42.5h1m2 0h1m4 0h1m7 0h1m3 0h3m2 0h1m3 0h1m1 0h1m8 0h2m4 0h1m1 0h2m1 0h1m1 0h1m2 0h2m7 0h1m6 0h1m14 0h2m7 0h1m5 0h2m9 0h1m4 0h1m1 0h1m1 0h1m14 0h1m6 0h1m23 0h1m4 0h1m18 0h1M12 43.5h2m3 0h1m2 0h1m6 0h2m2 0h1m3 0h1m1 0h1m13 0h1m5 0h1m1 0h1m1 0h2m1 0h1m12 0h1m5 0h1m15 0h1m8 0h1m5 0h1m3 0h1m39 0h2m4 0h1m8 0h1m3 0h1m12 0h1m2 0h1m4 0h1M4 44.5h1m1 0h1m1 0h1m15 0h1m31 0h1m11 0h1m3 0h1m6 0h1m1 0h1m4 0h1m4 0h1m6 0h1m6 0h1m3 0h1m4 0h1m6 0h1m4 0h1m16 0h1m3 0h2m5 0h1m14 0h1m7 0h1m3 0h1M5 45.5h1m4 0h1m14 0h1m5 0h1m13 0h3m24 0h1m2 0h1m8 0h1m9 0h1m8 0h1m1 0h1m33 0h1m6 0h1m4 0h1m4 0h1m1 0h1m29 0h1m2 0h2M0 46.5h2m3 0h2m2 0h1m3 0h1m27 0h1m3 0h1m3 0h1m4 0h1m22 0h1m14 0h1m32 0h1m3 0h1m2 0h2m8 0h1m14 0h1m3 0h1m8 0h1m22 0h1m1 0h1m2 0h1M4 47.5h1m6 0h1m5 0h1m5 0h1m7 0h2m6 0h1m5 0h1m1 0h1m6 0h2m7 0h1m8 0h1m1 0h1m11 0h1m11 0h1m1 0h1m3 0h1m3 0h1m1 0h1m1 0h2m3 0h1m10 0h1m8 0h1m8 0h1m2 0h1m11 0h2m5 0h1M27 48.5h1m8 0h1m4 0h1m3 0h1m4 0h1m5 0h1m5 0h2m10 0h1m5 0h1m13 0h1m18 0h2m19 0h2m1 0h1m13 0h1m3 0h1m3 0h1m2 0h1m4 0h1m5 0h1m2 0h1m6 0h1m1 0h1m2 0h2M1 49.5h1m2 0h1m6 0h1m10 0h1m4 0h1m8 0h1m10 0h1m5 0h1m5 0h2m4 0h2m4 0h1m6 0h1m5 0h1m32 0h1m2 0h1m1 0h1m15 0h1m11 0h1m11 0h1m6 0h1m5 0h2m9 0h2m2 0h1m3 0h1m1 0h1M0 50.5h2m10 0h1m2 0h1m1 0h2m3 0h1m1 0h1m5 0h1m1 0h1m21 0h1m3 0h1m3 0h1m2 0h2m3 0h1m10 0h1m1 0h1m2 0h1m9 0h1m2 0h1m2 0h1m2 0h1m4 0h2m6 0h1m22 0h2m11 0h1m2 0h1m3 0h1m1 0h1m3 0h1m12 0h1m3 0h1m2 0h1m2 0h1m4 0h1M5 51.5h1m1 0h1m1 0h1m2 0h2m4 0h1m4 0h1m4 0h1m1 0h1m15 0h2m4 0h1m1 0h1m1 0h2m7 0h1m8 0h1m9 0h2m3 0h1m23 0h1m2 0h1m23 0h1m2 0h1m7 0h1m11 0h1m5 0h1m5 0h1m6 0h1m2 0h1m7 0h1m5 0h1M1 52.5h1m19 0h1m2 0h2m7 0h1m1 0h2m7 0h1m3 0h2m1 0h1m4 0h1m9 0h1m5 0h1m1 0h1m7 0h1m1 0h1m4 0h2m4 0h1m1 0h1m2 0h1m3 0h1m7 0h1m4 0h2m7 0h1m1 0h1m10 0h1m1 0h1m8 0h1m1 0h1m14 0h2m1 0h1m1 0h1m9 0h1m2 0h3m2 0h1M6 53.5h1m5 0h1m2 0h1m32 0h2m3 0h1m18 0h1m2 0h1m1 0h1m7 0h2m2 0h1m5 0h1m2 0h1m20 0h1m20 0h1m4 0h1m4 0h2m6 0h1m5 0h1m3 0h1m2 0h1m5 0h1m1 0h1m4 0h1m4 0h1m1 0h1m2 0h1M13 54.5h2m2 0h3m6 0h1m3 0h1m12 0h1m5 0h2m9 0h4m2 0h1m8 0h1m6 0h1m13 0h2m12 0h1m6 0h1m6 0h2m3 0h1m11 0h1m26 0h1m10 0h1m12 0h1m2 0h1M15 55.5h1m5 0h1m13 0h1m5 0h2m4 0h1m9 0h2m6 0h1m6 0h1m4 0h1m2 0h1m29 0h1m5 0h1m6 0h1m24 0h1m8 0h1m7 0h1m17 0h1m7 0h1M4 56.5h1m4 0h1m1 0h1m4 0h1m7 0h1m6 0h1m1 0h1m20 0h1m2 0h1m6 0h1m5 0h1m17 0h1m10 0h1m2 0h1m22 0h1m1 0h1m1 0h1m5 0h2m8 0h1m6 0h1m6 0h2m7 0h1M0 57.5h1m10 0h1m4 0h1m4 0h1m3 0h2m3 0h1m4 0h1m6 0h1m4 0h1m10 0h1m10 0h1m3 0h1m9 0h2m7 0h1m4 0h1m10 0h1m5 0h1m2 0h1m8 0h1m11 0h1m6 0h1m2 0h1m5 0h2m4 0h1m2 0h1m8 0h1m2 0h1m2 0h1m4 0h1M0 58.5h1m11 0h1m1 0h1m2 0h1m7 0h1m1 0h1m1 0h1m9 0h1m6 0h1m7 0h1m17 0h1m3 0h1m7 0h1m13 0h1m8 0h1m5 0h1m8 0h2m14 0h2m8 0h1m1 0h1m14 0h1m4 0h1m13 0h1m3 0h1m3 0h1M0 59.5h2m3 0h1m21 0h1m5 0h1m12 0h1m1 0h1m10 0h1m3 0h1m2 0h1m2 0h1m2 0h1m6 0h2m16 0h1m4 0h1m5 0h1m6 0h1m12 0h1m4 0h2m1 0h1m3 0h1m16 0h2m2 0h1m3 0h1m1 0h1m1 0h1m1 0h1m1 0h1m6 0h1m3 0h1m1 0h1m2 0h1m4 0h1M10 60.5h2m2 0h1m5 0h1m3 0h1m4 0h4m1 0h1m12 0h2m8 0h1m1 0h1m1 0h1m14 0h1m17 0h1m1 0h1m7 0h1m32 0h1m9 0h1m9 0h1m39 0h1M10 61.5h1m6 0h1m4 0h1m2 0h1m10 0h1m1 0h1m1 0h1m22 0h1m4 0h1m1 0h1m11 0h1m7 0h1m9 0h1m5 0h3m4 0h2m2 0h4m8 0h1m13 0h1m1 0h1m1 0h1m5 0h2m3 0h1m29 0h2M6 62.5h1m20 0h1m3 0h1m7 0h1m5 0h1m5 0h1m1 0h1m6 0h1m5 0h1m7 0h1m22 0h1m2 0h1m1 0h2m5 0h1m13 0h1m1 0h1m4 0h2m10 0h2m2 0h1m10 0h1m1 0h1m2 0h1m8 0h1m1 0h1m11 0h1m4 0h1m1 0h1m3 0h1m1 0h1M7 63.5h1m5 0h1m21 0h1m3 0h1m1 0h1m2 0h1m21 0h1m1 0h1m3 0h1m4 0h1m1 0h1m7 0h1m5 0h1m23 0h3m10 0h1m1 0h1m1 0h1m1 0h1m6 0h1m13 0h1m1 0h1m2 0h1m8 0h2m6 0h2m10 0h1m1 0h1m3 0h1M6 64.5h1m7 0h1m9 0h1m5 0h1m7 0h1m6 0h1m16 0h1m7 0h1m1 0h1m2 0h2m1 0h1m2 0h1m7 0h1m2 0h1m3 0h1m3 0h1m1 0h1m5 0h1m3 0h2m6 0h1m5 0h1m1 0h2m8 0h1m4 0h1m1 0h1m2 0h2m13 0h1m11 0h1m5 0h2m2 0h1m1 0h1m5 0h1m5 0h1M2 65.5h1m6 0h2m3 0h1m7 0h1m13 0h1m13 0h1m6 0h1m3 0h1m1 0h1m1 0h1m11 0h1m1 0h1m14 0h1m6 0h1m5 0h1m2 0h1m10 0h1m20 0h1m1 0h1m12 0h1m5 0h1m9 0h1M0 66.5h1m2 0h2m3 0h1m14 0h1m1 0h1m31 0h1m8 0h1m5 0h1m1 0h1m17 0h1m5 0h1m39 0h1m10 0h1m2 0h1m7 0h1m8 0h1m29 0h1M9 67.5h1m1 0h2m3 0h1m22 0h1m5 0h1m8 0h2m13 0h1m2 0h1m30 0h1m1 0h1m28 0h1m5 0h1m11 0h1m1 0h2m2 0h1m1 0h1m4 0h1m3 0h1m9 0h1m1 0h1m3 0h2m7 0h1m1 0h1M3 68.5h1m5 0h1m10 0h1m6 0h1m13 0h1m5 0h1m9 0h2m2 0h1m12 0h1m4 0h1m4 0h2m2 0h1m8 0h1m3 0h1m7 0h1m12 0h2m1 0h1m11 0h1m1 0h1m7 0h1m6 0h1m3 0h1m4 0h1m1 0h1m11 0h1m11 0h1m1 0h2m2 0h1M0 69.5h1m6 0h1m22 0h1m4 0h1m2 0h1m5 0h1m9 0h1m3 0h1m12 0h2m16 0h1m1 0h1m17 0h1m6 0h1m4 0h1m8 0h1m8 0h1m16 0h1m9 0h1m1 0h1m4 0h1m7 0h1M2 70.5h1m10 0h1m2 0h1m9 0h1m7 0h1m2 0h1m6 0h1m21 0h1m8 0h1m8 0h2m17 0h1m16 0h1m19 0h1m6 0h1m4 0h1m1 0h1m2 0h2m5 0h1m9 0h1m1 0h1m6 0h1m8 0h1M1 71.5h1m9 0h1m7 0h1m8 0h2m5 0h1m3 0h1m3 0h1m2 0h1m6 0h1m5 0h1m1 0h1m9 0h2m17 0h1m5 0h1m5 0h1m10 0h1m3 0h2m7 0h1m1 0h1m5 0h1m1 0h1m1 0h1m3 0h1m4 0h1m5 0h1m4 0h3m1 0h1m1 0h1m6 0h1m7 0h1m3 0h1m1 0h1m12 0h2M4 72.5h1m3 0h2m2 0h1m5 0h1m5 0h1m4 0h1m32 0h1m5 0h1m1 0h1m9 0h1m1 0h1m2 0h1m25 0h2m7 0h1m13 0h3m2 0h1m8 0h1m2 0h1m13 0h1m7 0h1m6 0h1m3 0h1m1 0h1m9 0h2M1 73.5h1m10 0h1m2 0h1m3 0h1m13 0h1m3 0h1m3 0h1m4 0h1m10 0h1m1 0h1m6 0h1m1 0h1m27 0h2m3 0h1m5 0h1m26 0h1m10 0h1m1 0h1m1 0h1m1 0h1m5 0h1m2 0h1m1 0h1m8 0h1m2 0h1m2 0h1m3 0h1m6 0h1m8 0h1M7 74.5h1m1 0h1m14 0h2m12 0h1m19 0h1m2 0h1m2 0h1m4 0h2m8 0h1m2 0h1m6 0h2m2 0h1m1 0h2m16 0h1m3 0h1m3 0h1m8 0h1m7 0h1m12 0h3m5 0h1m30 0h1m3 0h1m2 0h2M14 75.5h1m3 0h1m5 0h1m8 0h1m3 0h1m17 0h1m3 0h1m15 0h1m4 0h1m11 0h1m2 0h1m2 0h1m1 0h1m8 0h1m2 0h2m1 0h1m3 0h1m6 0h1m4 0h1m26 0h1m1 0h1m3 0h1m14 0h1m4 0h1m3 0h1m1 0h1M8 76.5h1m2 0h1m7 0h1m12 0h2m9 0h1m5 0h1m8 0h2m4 0h1m5 0h1m14 0h2m7 0h1m4 0h1m2 0h1m11 0h1m19 0h1m1 0h1m1 0h1m2 0h1m1 0h1m11 0h1m21 0h1m1 0h1m3 0h1m2 0h1m3 0h1M2 77.5h1m23 0h1m9 0h1m6 0h1m4 0h1m34 0h1m5 0h2m22 0h1m2 0h2m2 0h1m1 0h1m8 0h1m1 0h2m24 0h1m4 0h1m2 0h1m1 0h1m15 0h1m3 0h1m5 0h1M13 78.5h1m3 0h1m3 0h1m5 0h1m28 0h1m19 0h1m3 0h2m1 0h1m3 0h2m18 0h1m6 0h1m1 0h1m10 0h2m17 0h2m17 0h1m2 0h1m26 0h1M8 79.5h1m5 0h1m9 0h2m5 0h1m12 0h1m1 0h1m1 0h1m11 0h1m21 0h1m12 0h2m25 0h1m10 0h1m6 0h1m1 0h2m1 0h1m1 0h2m25 0h1m12 0h1m5 0h1m5 0h1M0 80.5h1m18 0h1m5 0h3m1 0h1m11 0h2m14 0h1m10 0h1m14 0h2m14 0h1m14 0h1m11 0h2m1 0h1m9 0h1m10 0h1m7 0h1m9 0h1m1 0h2m2 0h1m1 0h2m6 0h1m1 0h1m7 0h1m1 0h1m1 0h2M7 81.5h1m5 0h1m3 0h1m20 0h1m8 0h1m4 0h1m12 0h1m2 0h1m9 0h1m1 0h1m4 0h2m9 0h1m1 0h1m12 0h1m4 0h1m1 0h1m1 0h1m4 0h1m3 0h1m4 0h1m11 0h1m1 0h1m1 0h1m5 0h2m11 0h1m5 0h1m4 0h1m10 0h1M11 82.5h2m4 0h1m2 0h2m8 0h1m2 0h1m5 0h1m27 0h1m7 0h1m10 0h1m21 0h1m5 0h1m4 0h1m10 0h1m2 0h1m8 0h1m4 0h2m37 0h1m1 0h1m5 0h1M2 83.5h1m13 0h2m8 0h1m2 0h1m2 0h2m2 0h1m2 0h1m1 0h1m3 0h2m4 0h2m8 0h1m1 0h1m8 0h1m10 0h1m1 0h1m2 0h1m10 0h1m5 0h1m4 0h1m12 0h1m3 0h1m2 0h1m5 0h1m4 0h1m7 0h2m7 0h1m2 0h1m2 0h1m2 0h1m14 0h1m3 0h1m8 0h2M14 84.5h1m3 0h1m6 0h1m3 0h1m6 0h2m4 0h1m5 0h1m2 0h1m9 0h1m2 0h1m6 0h1m8 0h1m4 0h1m7 0h1m13 0h1m8 0h1m3 0h1m3 0h1m2 0h3m13 0h1m12 0h1m2 0h1m3 0h1m12 0h1m7 0h1m12 0h2M0 85.5h1m1 0h1m22 0h1m1 0h1m4 0h1m12 0h1m14 0h1m10 0h1m1 0h1m4 0h1m5 0h1m1 0h1m1 0h1m1 0h1m3 0h1m2 0h1m3 0h1m2 0h1m5 0h1m8 0h1m8 0h1m25 0h2m8 0h2m4 0h1m4 0h1m8 0h1M5 86.5h1m2 0h1m12 0h1m12 0h1m23 0h1m8 0h3m5 0h1m6 0h1m32 0h1m11 0h1m1 0h1m3 0h1m8 0h3m10 0h1m6 0h2m5 0h1m2 0h1m4 0h1m1 0h1m14 0h1m4 0h1M7 87.5h1m10 0h1m12 0h1m1 0h1m2 0h1m1 0h2m3 0h1m6 0h1m2 0h1m22 0h1m2 0h1m4 0h1m13 0h2m5 0h1m6 0h1m6 0h1m6 0h1m10 0h1m14 0h2m1 0h1m3 0h1m5 0h1m1 0h1m4 0h2m1 0h1m1 0h1m5 0h1m8 0h1m1 0h3M8 88.5h1m8 0h1m16 0h1m1 0h2m4 0h1m20 0h2m5 0h1m4 0h1m15 0h1m2 0h1m6 0h1m10 0h1m2 0h1m16 0h1m8 0h1m4 0h1m7 0h1m5 0h1m17 0h2M17 89.5h1m7 0h1m4 0h2m14 0h1m2 0h1m1 0h1m16 0h3m2 0h1m2 0h1m2 0h1m13 0h1m4 0h1m2 0h5m1 0h1m8 0h1m1 0h1m6 0h1m15 0h1m5 0h1m9 0h1m2 0h1m3 0h1m21 0h1m4 0h1M8 90.5h1m14 0h2m3 0h1m8 0h1m8 0h2m4 0h1m12 0h1m9 0h1m12 0h1m5 0h1m4 0h1m1 0h1m3 0h1m1 0h1m3 0h1m1 0h1m16 0h1m14 0h1m5 0h1m6 0h2m2 0h2m2 0h1m1 0h1m5 0h1m12 0h1m9 0h1M5 91.5h1m1 0h2m4 0h1m14 0h1m4 0h1m1 0h2m6 0h1m4 0h1m2 0h1m7 0h1m2 0h1m5 0h1m1 0h1m10 0h1m2 0h1m13 0h1m4 0h1m1 0h1m3 0h1m3 0h1m4 0h2m4 0h1m7 0h1m1 0h2m8 0h1m5 0h1m2 0h1m7 0h1m6 0h1m5 0h1m14 0h1m3 0h1M4 92.5h1m12 0h1m2 0h1m17 0h1m4 0h1m1 0h2m2 0h1m2 0h1m2 0h1m1 0h1m3 0h1m10 0h1m18 0h1m5 0h1m7 0h1m3 0h2m1 0h1m9 0h1m12 0h2m15 0h1m4 0h1m23 0h1m1 0h1m1 0h1m4 0h1m5 0h2M5 93.5h1m2 0h1m9 0h1m22 0h1m2 0h2m3 0h1m9 0h1m11 0h1m4 0h1m10 0h1m4 0h3m8 0h1m1 0h1m7 0h1m11 0h1m2 0h2m13 0h1m5 0h1m2 0h1m14 0h1m5 0h1m13 0h1m2 0h1m1 0h1m4 0h1M12 94.5h2m13 0h1m8 0h1m18 0h1m8 0h1m2 0h1m47 0h1m6 0h1m1 0h1m15 0h1m6 0h1m8 0h2m1 0h1m7 0h1m1 0h1m1 0h1m7 0h1M2 95.5h1m1 0h1m3 0h1m5 0h1m21 0h1m1 0h2m3 0h2m8 0h1m6 0h1m2 0h1m3 0h1m1 0h1m1 0h1m1 0h1m2 0h1m8 0h1m3 0h1m11 0h1m4 0h1m9 0h1m13 0h2m8 0h2m2 0h1m1 0h1m6 0h1m6 0h2m1 0h1m11 0h1m8 0h1M1 96.5h2m43 0h2m2 0h1m7 0h1m13 0h1m13 0h1m4 0h1m10 0h2m2 0h1m3 0h1m3 0h1m7 0h3m4 0h1m7 0h1m5 0h1m3 0h2m9 0h1m1 0h1m1 0h2m7 0h1m2 0h1m4 0h2m4 0h1m3 0h1M5 97.5h1m3 0h1m11 0h2m2 0h1m12 0h1m18 0h1m3 0h1m1 0h1m1 0h1m5 0h1m10 0h1m2 0h1m3 0h3m5 0h1m2 0h1m1 0h1m3 0h1m2 0h1m7 0h1m7 0h1m7 0h2m5 0h1m6 0h1m3 0h1m3 0h3m7 0h1m9 0h1m6 0h1m1 0h1m5 0h1m5 0h1m2 0h1M3 98.5h1m2 0h1m30 0h1m23 0h2m13 0h1m15 0h2m25 0h1m16 0h1m12 0h1m11 0h2m8 0h1m5 0h1m1 0h1m1 0h1m3 0h1m10 0h1M8 99.5h1m17 0h1m4 0h2m1 0h1m4 0h1m20 0h1m1 0h1m9 0h1m2 0h1m4 0h1m4 0h1m3 0h1m4 0h1m3 0h1m3 0h1m12 0h1m1 0h1m3 0h1m2 0h1m4 0h1m3 0h1m15 0h1m7 0h1m5 0h1m1 0h1m6 0h1m11 0h1m1 0h1m6 0h2m1 0h2M5 100.5h1m3 0h1m6 0h1m5 0h1m9 0h1m4 0h1m3 0h1m3 0h1m6 0h1m18 0h1m2 0h2m8 0h1m2 0h1m14 0h1m11 0h1m11 0h1m4 0h2m7 0h1m9 0h1m1 0h2m14 0h1m1 0h1m6 0h2m9 0h1m1 0h1m6 0h1M5 101.5h1m9 0h1m1 0h1m3 0h1m4 0h1m3 0h1m16 0h1m2 0h1m6 0h1m18 0h1m2 0h1m6 0h1m15 0h1m7 0h1m18 0h2m9 0h1m3 0h1m3 0h1m6 0h1m1 0h1m11 0h2m4 0h1m7 0h1m5 0h1m1 0h1m5 0h1M7 102.5h1m1 0h1m5 0h1m3 0h1m1 0h1m1 0h2m3 0h1m3 0h1m4 0h1m9 0h1m2 0h1m7 0h1m1 0h1m5 0h1m4 0h1m13 0h2m12 0h1m31 0h1m5 0h1m2 0h1m1 0h1m5 0h2m17 0h1m7 0h1M1 103.5h1m1 0h1m4 0h1m2 0h1m6 0h1m4 0h2m10 0h1m3 0h1m2 0h1m5 0h2m1 0h1m3 0h1m21 0h1m3 0h1m13 0h1m13 0h2m7 0h1m4 0h1m1 0h1m2 0h1m6 0h1m1 0h1m4 0h1m1 0h2m20 0h1m8 0h1m4 0h1m12 0h1m2 0h1M9 104.5h1m1 0h1m2 0h1m5 0h1m12 0h1m16 0h1m2 0h1m7 0h1m1 0h1m1 0h1m8 0h3m1 0h1m20 0h1m7 0h1m21 0h1m39 0h1m2 0h1m17 0h1M4 105.5h1m3 0h1m15 0h1m1 0h1m13 0h1m4 0h1m1 0h1m10 0h1m3 0h2m5 0h1m9 0h1m6 0h1m12 0h1m5 0h1m9 0h1m1 0h1m25 0h1m1 0h1m7 0h1m12 0h1m7 0h1m12 0h1m2 0h1m2 0h1M1 106.5h1m1 0h1m4 0h2m2 0h1m5 0h1m4 0h1m1 0h1m9 0h1m6 0h1m4 0h1m13 0h1m2 0h1m3 0h1m3 0h1m4 0h1m4 0h1m1 0h1m3 0h1m1 0h1m7 0h1m9 0h1m6 0h1m6 0h1m10 0h1m5 0h1m3 0h1m2 0h1m3 0h1m5 0h1m2 0h1m20 0h1m15 0h1M0 107.5h1m34 0h1m1 0h1m16 0h2m3 0h1m21 0h1m9 0h1m8 0h1m1 0h3m4 0h1m9 0h1m7 0h1m4 0h1m6 0h1m14 0h1m3 0h1m16 0h1m1 0h1m3 0h1m1 0h1m7 0h1M7 108.5h1m6 0h1m3 0h1m1 0h2m6 0h1m5 0h1m5 0h2m5 0h2m1 0h1m2 0h1m2 0h1m2 0h1m3 0h1m16 0h1m9 0h1m10 0h1m27 0h1m12 0h1m1 0h1m16 0h1m6 0h1m4 0h1m2 0h1m1 0h1m10 0h1m4 0h2M0 109.5h1m2 0h1m4 0h2m1 0h1m3 0h1m18 0h1m7 0h1m5 0h1m1 0h1m5 0h1m1 0h2m2 0h2m11 0h1m7 0h1m1 0h1m18 0h1m8 0h1m1 0h1m3 0h1m1 0h1m4 0h1m1 0h1m1 0h1m6 0h1m20 0h1m3 0h1m3 0h1m30 0h1M0 110.5h2m19 0h1m2 0h1m3 0h1m5 0h1m3 0h2m5 0h1m15 0h1m2 0h1m8 0h1m4 0h1m1 0h1m2 0h1m6 0h1m5 0h1m3 0h1m3 0h1m4 0h1m21 0h1m8 0h1m16 0h1m2 0h1m5 0h1m6 0h1m8 0h1m3 0h1m8 0h1m1 0h1M0 111.5h1m5 0h1m6 0h1m3 0h1m11 0h1m12 0h2m4 0h1m8 0h1m2 0h2m6 0h1m38 0h1m3 0h1m2 0h1m2 0h1m31 0h1m1 0h2m3 0h1m4 0h2m4 0h1m6 0h2m3 0h1m1 0h1m7 0h1m6 0h2M2 112.5h1m12 0h2m6 0h1m1 0h1m4 0h1m2 0h1m1 0h1m8 0h1m2 0h2m5 0h1m7 0h1m2 0h1m1 0h1m18 0h1m3 0h1m12 0h2m7 0h1m7 0h1m3 0h1m11 0h1m6 0h1m2 0h2m1 0h2M1 113.5h1m2 0h1m5 0h1m4 0h1m7 0h1m3 0h1m1 0h1m2 0h1m1 0h1m1 0h1m3 0h1m1 0h1m9 0h3m2 0h1m1 0h1m6 0h1m16 0h1m1 0h1m14 0h1m19 0h1m9 0h1m6 0h1m22 0h1m11 0h1m6 0h1m4 0h1m3 0h1M13 114.5h1m11 0h1m19 0h1m1 0h1m2 0h3m1 0h1m1 0h1m2 0h1m2 0h1m3 0h1m4 0h1m9 0h1m1 0h1m5 0h2m2 0h1m3 0h1m14 0h2m7 0h1m1 0h1m14 0h1m10 0h1m7 0h1m3 0h1m9 0h1m5 0h2m5 0h2m11 0h1M1 115.5h1m9 0h1m4 0h1m6 0h2m13 0h1m4 0h1m19 0h1m3 0h2m3 0h1m16 0h1m2 0h1m2 0h1m9 0h1m4 0h1m4 0h1m6 0h1m20 0h1m10 0h1m12 0h1m10 0h1m1 0h2m7 0h1M6 116.5h1m14 0h1m4 0h1m4 0h1m7 0h1m1 0h1m15 0h1m3 0h1m6 0h1m22 0h1m16 0h4m4 0h1m11 0h2m9 0h1m2 0h1m9 0h1m15 0h2m14 0h1M14 117.5h1m1 0h2m4 0h2m11 0h1m5 0h1m2 0h1m6 0h1m6 0h1m2 0h1m3 0h2m5 0h1m5 0h1m2 0h1m4 0h1m1 0h2m1 0h1m6 0h1m4 0h1m5 0h1m7 0h1m1 0h1m1 0h1m4 0h1m24 0h1m4 0h1m2 0h1m6 0h1m2 0h2m14 0h2m5 0h2m4 0h1M2 118.5h1m7 0h1m6 0h1m2 0h1m29 0h1m4 0h2m9 0h1m1 0h1m3 0h1m17 0h1m7 0h1m5 0h1m1 0h1m7 0h1m5 0h1m1 0h1m8 0h1m14 0h2m7 0h2m12 0h1m4 0h1m5 0h1m4 0h1m1 0h2m9 0h1M6 119.5h1m8 0h1m8 0h1m3 0h1m1 0h1m7 0h2m6 0h1m19 0h2m7 0h1m19 0h1m10 0h1m20 0h1m5 0h1m3 0h1m2 0h1m17 0h1m3 0h1m14 0h1m6 0h1m3 0h1m7 0h1M0 120.5h1m4 0h1m5 0h1m57 0h1m13 0h1m3 0h1m17 0h1m7 0h1m2 0h1m7 0h2m3 0h1m2 0h1m14 0h1m2 0h1m13 0h1m7 0h1m1 0h2m9 0h1m4 0h1M5 121.5h1m1 0h1m28 0h1m4 0h1m4 0h1m7 0h2m22 0h2m6 0h1m15 0h1m8 0h1m15 0h1m16 0h1m3 0h1m20 0h1m6 0h1m7 0h1m6 0h1m4 0h1M2 122.5h2m1 0h2m3 0h2m5 0h1m3 0h1m6 0h1m4 0h3m10 0h1m2 0h1m8 0h1m1 0h1m3 0h1m6 0h1m3 0h1m9 0h1m20 0h1m4 0h2m2 0h1m1 0h1m9 0h1m41 0h1m15 0h1m10 0h1m2 0h1M5 123.5h1m4 0h1m5 0h1m1 0h1m8 0h1m11 0h1m2 0h1m5 0h1m4 0h1m21 0h1m12 0h1m11 0h1m2 0h1m3 0h1m17 0h1m9 0h1m6 0h1m5 0h2m4 0h1m4 0h1m2 0h1m1 0h2m4 0h1m8 0h1m2 0h1M0 124.5h1m17 0h1m11 0h1m9 0h1m12 0h1m18 0h1m4 0h1m10 0h1m5 0h1m8 0h1m1 0h1m2 0h1m2 0h1m4 0h1m22 0h1m9 0h1m3 0h1m10 0h1M1 125.5h1m4 0h1m2 0h1m3 0h1m7 0h1m11 0h1m5 0h1m9 0h1m2 0h1m10 0h1m9 0h2m7 0h1m13 0h1m6 0h2m4 0h1m19 0h1m26 0h1m2 0h1m5 0h1M1 126.5h1m1 0h2m2 0h1m3 0h2m4 0h2m3 0h1m4 0h1m2 0h1m1 0h1m3 0h1m16 0h1m5 0h1m1 0h1m2 0h2m3 0h1m8 0h1m4 0h2m5 0h1m5 0h1m1 0h1m13 0h1m1 0h2m3 0h2m10 0h1m6 0h1m3 0h1m3 0h1m13 0h1m3 0h1m5 0h1m1 0h1m13 0h1m2 0h1m6 0h1M19 127.5h1m7 0h2m1 0h1m20 0h1m13 0h1m6 0h2m11 0h2m16 0h1m14 0h2m6 0h1m2 0h1m2 0h2m7 0h1m12 0h1m11 0h1m11 0h1m2 0h1M27 128.5h3m3 0h1m3 0h1m12 0h1m1 0h1m13 0h1m9 0h1m7 0h1m12 0h3m21 0h1m2 0h1m11 0h2m6 0h1m4 0h2m4 0h1m14 0h1m1 0h1m4 0h1m10 0h2m2 0h1m5 0h1M14 129.5h1m2 0h1m2 0h1m2 0h1m1 0h1m8 0h1m6 0h1m9 0h2m6 0h1m10 0h1m2 0h1m1 0h1m2 0h1m3 0h1m2 0h1m9 0h1m1 0h1m4 0h1m5 0h1m8 0h1m29 0h1m5 0h1m11 0h1m1 0h3m9 0h1m6 0h1m4 0h1M4 130.5h1m5 0h1m4 0h2m9 0h1m6 0h1m11 0h1m4 0h1m9 0h1m1 0h1m8 0h1m2 0h1m9 0h2m5 0h1m5 0h4m7 0h1m3 0h1m1 0h1m4 0h1m7 0h1m8 0h1m15 0h1m1 0h1m1 0h1m3 0h1m25 0h2m2 0h1m8 0h1M4 131.5h1m58 0h1m2 0h1m18 0h1m6 0h1m3 0h1m30 0h1m20 0h2m6 0h2m4 0h1m4 0h1m9 0h1m1 0h2m8 0h1M26 132.5h1m16 0h1m13 0h1m13 0h1m17 0h1m12 0h1m2 0h1m3 0h3m6 0h2m3 0h1m6 0h1m3 0h1m7 0h1m2 0h1m13 0h1m7 0h1m1 0h1m7 0h1m7 0h1m2 0h1m2 0h1m2 0h1M5 133.5h3m30 0h1m1 0h2m14 0h1m10 0h1m4 0h1m1 0h1m12 0h1m1 0h1m7 0h1m2 0h1m1 0h1m11 0h1m4 0h1m4 0h1m3 0h1m4 0h1m5 0h1m15 0h1m6 0h1m4 0h1m7 0h1m11 0h1m3 0h1m5 0h1M10 134.5h2m7 0h1m7 0h1m2 0h1m3 0h1m13 0h1m4 0h1m2 0h1m2 0h1m7 0h2m4 0h2m15 0h1m6 0h1m10 0h1m1 0h1m5 0h1m7 0h1m11 0h1m5 0h1m1 0h1m8 0h1m8 0h1m1 0h2m3 0h2m18 0h1M11 135.5h2m8 0h1m2 0h1m20 0h1m3 0h2m16 0h1m3 0h1m2 0h1m6 0h1m14 0h1m4 0h1m3 0h1m3 0h1m11 0h1m2 0h1m4 0h1m4 0h1m3 0h1m4 0h1m12 0h1m2 0h1m2 0h1m11 0h1m4 0h1m2 0h1m3 0h1m6 0h1m1 0h1m2 0h1M0 136.5h1m7 0h1m1 0h1m13 0h1m3 0h1m1 0h1m6 0h1m1 0h1m18 0h1m5 0h1m7 0h2m9 0h1m4 0h1m12 0h1m4 0h1m42 0h1m9 0h1m11 0h2m5 0h1m1 0h1m3 0h1m9 0h1M3 137.5h1m1 0h1m2 0h1m9 0h1m7 0h1m12 0h1m20 0h1m25 0h1m3 0h1m4 0h1m28 0h2m5 0h1m5 0h1m4 0h1m6 0h2m2 0h1m17 0h1m1 0h2m3 0h1m2 0h1m1 0h1m4 0h1M1 138.5h1m7 0h1m1 0h1m1 0h1m6 0h1m18 0h1m26 0h1m5 0h2m4 0h1m7 0h1m3 0h1m10 0h1m7 0h1m9 0h1m3 0h2m2 0h1m24 0h1m1 0h2m1 0h1m19 0h2m12 0h1m3 0h1m1 0h1M5 139.5h1m11 0h1m7 0h1m11 0h2m9 0h1m12 0h1m4 0h1m3 0h1m7 0h1m5 0h1m6 0h1m5 0h1m6 0h1m2 0h1m9 0h1m23 0h1m3 0h1m16 0h1m1 0h1m3 0h2m13 0h1m5 0h1m9 0h1M0 140.5h1m3 0h1m7 0h1m2 0h1m8 0h2m4 0h1m5 0h1m2 0h1m7 0h1m5 0h1m10 0h1m10 0h1m7 0h1m3 0h1m5 0h1m4 0h1m16 0h1m10 0h1m5 0h2m1 0h1m5 0h1m7 0h1m13 0h1m4 0h1m2 0h1m1 0h1m22 0h1M13 141.5h2m8 0h1m5 0h1m7 0h1m3 0h1m15 0h1m11 0h1m30 0h1m2 0h1m4 0h1m8 0h1m5 0h1m16 0h1m5 0h1m17 0h1m28 0h1M4 142.5h1m4 0h1m8 0h1m20 0h1m3 0h1m2 0h1m2 0h1m5 0h2m13 0h1m15 0h2m13 0h1m1 0h1m13 0h2m5 0h1m17 0h1m1 0h1m2 0h1m2 0h1m13 0h1m3 0h1m2 0h1m7 0h1m1 0h1m4 0h1m1 0h1m1 0h1m6 0h1M7 143.5h1m13 0h1m6 0h1m4 0h1m1 0h1m9 0h1m6 0h1m2 0h1m10 0h2m4 0h1m4 0h1m5 0h1m5 0h1m8 0h3m4 0h1m3 0h1m9 0h1m7 0h1m2 0h1m6 0h1m7 0h2m7 0h1m28 0h1m1 0h1m3 0h1m6 0h1M3 144.5h2m2 0h1m5 0h1m3 0h1m24 0h1m22 0h1m3 0h2m4 0h1m2 0h1m1 0h2m1 0h1m4 0h2m2 0h2m18 0h1m1 0h1m2 0h1m14 0h1m10 0h1m14 0h1m8 0h1m3 0h1m24 0h1M0 145.5h1m5 0h1m4 0h1m1 0h1m8 0h1m8 0h1m1 0h1m14 0h1m12 0h1m1 0h1m20 0h1m1 0h1m12 0h1m3 0h1m1 0h1m4 0h1m8 0h5m11 0h1m3 0h1m5 0h1m43 0h3m7 0h1M12 146.5h1m8 0h1m2 0h1m18 0h2m10 0h1m2 0h1m6 0h1m4 0h1m7 0h1m10 0h1m3 0h1m12 0h1m11 0h1m9 0h1m9 0h1m6 0h1m2 0h1m2 0h1m3 0h1m2 0h2m31 0h2m3 0h1m1 0h1M10 147.5h1m1 0h1m26 0h1m8 0h1m21 0h1m3 0h1m1 0h2m19 0h1m5 0h1m1 0h1m15 0h1m1 0h1m2 0h1m12 0h2m6 0h1m5 0h1m1 0h1m5 0h1m21 0h2m1 0h1m3 0h2m4 0h1M0 148.5h1m24 0h1m10 0h1m1 0h1m39 0h1m3 0h1m1 0h1m3 0h1m20 0h1m3 0h1m10 0h3m2 0h1m5 0h1m12 0h1m1 0h2m5 0h1m8 0h1m4 0h1m15 0h1m4 0h1m2 0h1m2 0h2M10 149.5h1m2 0h1m2 0h1m7 0h1m8 0h1m6 0h2m4 0h1m3 0h1m2 0h1m2 0h1m7 0h1m2 0h1m4 0h2m2 0h1m1 0h1m1 0h2m3 0h1m1 0h1m3 0h1m2 0h1m16 0h1m4 0h1m4 0h1m5 0h2m3 0h1m8 0h1m5 0h1m6 0h1m14 0h1m8 0h1m4 0h1m4 0h2m1 0h1M8 150.5h1m10 0h2m1 0h2m3 0h1m3 0h1m3 0h1m1 0h1m10 0h2m4 0h1m6 0h1m15 0h2m2 0h2m8 0h1m3 0h1m8 0h1m8 0h1m5 0h1m6 0h1m3 0h1m14 0h1m1 0h1m17 0h1m3 0h1m1 0h1m1 0h1m9 0h1m4 0h2M0 151.5h1m4 0h1m2 0h2m18 0h1m22 0h1m1 0h1m1 0h1m1 0h1m20 0h1m19 0h1m13 0h1m1 0h1m7 0h1m3 0h1m2 0h1m3 0h1m11 0h1m5 0h1m3 0h2m21 0h2m10 0h1m2 0h1m3 0h1M3 152.5h2m7 0h1m8 0h1m3 0h1m6 0h1m10 0h2m1 0h1m6 0h3m6 0h1m11 0h1m3 0h1m6 0h1m5 0h1m11 0h1m2 0h1m12 0h1m1 0h1m1 0h1m2 0h1m4 0h1m13 0h1m13 0h2m1 0h1m14 0h1m10 0h1m5 0h1m1 0h2m1 0h1M5 153.5h1m7 0h2m8 0h1m12 0h1m16 0h1m2 0h1m3 0h1m2 0h1m3 0h3m14 0h1m5 0h2m2 0h1m2 0h1m1 0h2m7 0h1m1 0h1m3 0h1m6 0h1m1 0h1m2 0h1m5 0h1m10 0h1m7 0h1m1 0h1m4 0h1m11 0h1m8 0h1m11 0h1M7 154.5h2m6 0h1m6 0h1m8 0h1m6 0h1m17 0h1m5 0h1m3 0h1m3 0h1m9 0h2m9 0h1m3 0h1m3 0h1m27 0h1m5 0h2m2 0h1m2 0h1m3 0h2m16 0h1m8 0h1m3 0h1m8 0h1m4 0h3M25 155.5h2m3 0h3m1 0h1m1 0h1m14 0h1m4 0h1m1 0h1m11 0h2m1 0h1m2 0h2m4 0h1m10 0h1m1 0h1m7 0h1m7 0h1m1 0h1m8 0h4m20 0h1m4 0h1m24 0h1m3 0h1m4 0h1M2 156.5h1m16 0h1m1 0h1m2 0h1m7 0h1m22 0h1m8 0h1m4 0h1m17 0h1m4 0h2m6 0h1m1 0h1m3 0h1m4 0h1m26 0h1m15 0h1m1 0h1m5 0h1m10 0h1M1 157.5h1m3 0h2m7 0h1m1 0h1m1 0h1m8 0h2m8 0h1m22 0h2m3 0h1m5 0h1m2 0h2m2 0h1m3 0h1m25 0h1m9 0h1m35 0h1m5 0h2m13 0h1m16 0h1M3 158.5h1m14 0h1m1 0h2m1 0h2m15 0h1m1 0h2m1 0h1m16 0h1m7 0h1m3 0h1m1 0h1m8 0h1m3 0h1m14 0h1m3 0h1m1 0h1m7 0h1m1 0h1m5 0h1m18 0h1m7 0h1m5 0h2m3 0h1m4 0h2m20 0h1M23 159.5h1m2 0h1m3 0h1m7 0h1m9 0h1m24 0h1m2 0h1m5 0h1m3 0h1m5 0h1m1 0h2m9 0h1m17 0h1m1 0h2m7 0h1m11 0h1m7 0h1m18 0h1m4 0h1m11 0h1m3 0h1m1 0h1M12 160.5h1m7 0h1m1 0h2m1 0h1m10 0h1m3 0h1m4 0h1m5 0h1m1 0h1m1 0h2m11 0h1m1 0h3m3 0h1m9 0h1m12 0h1m18 0h1m3 0h1m25 0h1m10 0h1m9 0h1m4 0h1m22 0h1M1 161.5h1m11 0h1m2 0h1m3 0h1m1 0h2m3 0h3m6 0h1m16 0h1m10 0h1m6 0h1m2 0h1m1 0h1m2 0h2m24 0h1m7 0h1m4 0h1m6 0h1m3 0h1m23 0h2m15 0h1m5 0h1m8 0h1m3 0h1m2 0h1m1 0h1M8 162.5h1m11 0h1m1 0h1m8 0h1m3 0h1m8 0h1m1 0h1m2 0h1m2 0h1m3 0h1m4 0h1m6 0h1m1 0h1m1 0h1m9 0h1m11 0h1m7 0h1m3 0h1m12 0h1m4 0h1m3 0h1m3 0h1m9 0h1m17 0h1m18 0h1m2 0h1m5 0h1m7 0h1M5 163.5h1m3 0h1m2 0h1m4 0h1m2 0h1m1 0h1m6 0h1m6 0h1m5 0h4m4 0h1m23 0h1m4 0h1m1 0h1m4 0h1m11 0h3m3 0h2m3 0h1m13 0h1m3 0h1m21 0h1m6 0h1m16 0h1m2 0h1m8 0h2m3 0h1m1 0h1m6 0h1M4 164.5h2m9 0h1m12 0h1m12 0h2m5 0h1m7 0h1m12 0h1m28 0h1m8 0h2m15 0h1m16 0h1m3 0h1m8 0h1m10 0h1m4 0h1m21 0h1m1 0h1m1 0h1M6 165.5h1m15 0h1m8 0h2m11 0h2m3 0h1m13 0h1m1 0h1m16 0h1m3 0h1m3 0h1m1 0h1m2 0h1m5 0h1m3 0h1m5 0h2m2 0h1m1 0h1m5 0h1m20 0h1m3 0h1m1 0h1m3 0h1m1 0h2m1 0h1m3 0h1m2 0h1m20 0h2m1 0h1M8 166.5h1m2 0h1m6 0h1m5 0h1m3 0h1m9 0h2m6 0h1m2 0h1m11 0h1m3 0h1m10 0h1m13 0h1m5 0h1m2 0h2m1 0h1m7 0h1m7 0h1m1 0h1m6 0h1m15 0h2m7 0h2m3 0h1m13 0h1m5 0h1m2 0h1m2 0h1m4 0h1M0 167.5h2m7 0h1m6 0h1m5 0h1m1 0h2m4 0h1m3 0h1m15 0h1m12 0h1m16 0h3m5 0h1m14 0h3m8 0h1m5 0h1m7 0h1m3 0h1m12 0h1m1 0h1m5 0h1m14 0h1m6 0h1m8 0h2m2 0h1M5 168.5h1m15 0h3m1 0h1m3 0h1m3 0h1m2 0h1m2 0h1m12 0h1m3 0h1m7 0h1m3 0h1m1 0h1m16 0h1m13 0h1m1 0h1m5 0h1m1 0h1m4 0h1m12 0h1m10 0h1m1 0h1m2 0h2m16 0h1m7 0h1m2 0h1m8 0h1m3 0h1M3 169.5h1m8 0h1m2 0h2m1 0h1m10 0h1m13 0h3m4 0h1m1 0h1m1 0h1m16 0h2m2 0h2m6 0h2m2 0h1m2 0h1m1 0h1m3 0h1m8 0h1m1 0h1m4 0h4m59 0h1m11 0h1m10 0h2M4 170.5h1m7 0h1m6 0h1m2 0h1m1 0h1m14 0h1m4 0h1m1 0h1m7 0h2m5 0h1m1 0h3m7 0h1m13 0h1m4 0h1m4 0h1m4 0h1m7 0h1m3 0h1m5 0h1m4 0h1m3 0h1m9 0h1m8 0h1m1 0h1m4 0h1m23 0h2m7 0h1m9 0h1M1 171.5h1m1 0h1m25 0h1m3 0h1m9 0h1m15 0h1m19 0h1m10 0h1m1 0h1m2 0h1m1 0h1m34 0h1m2 0h1m6 0h1m3 0h1m4 0h1m1 0h1m5 0h2m5 0h1m7 0h2m5 0h1m7 0h1m2 0h1m2 0h1m3 0h1M19 172.5h1m8 0h1m8 0h1m8 0h1m5 0h1m14 0h1m5 0h1m1 0h2m7 0h1m5 0h1m1 0h1m5 0h1m8 0h1m14 0h1m7 0h1m2 0h1m5 0h1m4 0h2m2 0h1m1 0h1m8 0h2m5 0h1m1 0h1m6 0h1m1 0h2m9 0h1m2 0h3m5 0h1M7 173.5h1m1 0h2m17 0h1m5 0h1m3 0h2m2 0h1m1 0h1m2 0h1m11 0h1m9 0h1m1 0h1m12 0h1m1 0h1m3 0h1m1 0h2m15 0h1m25 0h1m4 0h1m9 0h1m3 0h1m5 0h1m4 0h1m1 0h1m7 0h1m3 0h1m8 0h1m4 0h1m2 0h2m1 0h1M0 174.5h2m2 0h3m2 0h1m1 0h1m2 0h1m14 0h1m4 0h1m7 0h1m2 0h1m5 0h1m5 0h1m1 0h1m6 0h1m8 0h2m22 0h1m9 0h1m1 0h1m2 0h1m8 0h1m9 0h2m1 0h1m13 0h1m10 0h1m9 0h1m5 0h1m18 0h1m2 0h1M0 175.5h1m3 0h1m11 0h1m7 0h1m6 0h3m10 0h1m14 0h1m2 0h1m10 0h1m6 0h2m12 0h2m7 0h1m10 0h1m2 0h2m3 0h1m1 0h1m3 0h1m1 0h1m1 0h1m26 0h1m16 0h1m7 0h2m5 0h1m2 0h2m1 0h1M3 176.5h1m17 0h1m9 0h2m7 0h1m9 0h2m1 0h1m1 0h1m23 0h1m7 0h1m1 0h2m14 0h1m1 0h1m1 0h1m9 0h2m9 0h1m5 0h1m1 0h1m2 0h1m12 0h1m1 0h1m14 0h1m5 0h1m1 0h1m16 0h1m2 0h1M3 177.5h1m2 0h2m9 0h1m3 0h1m7 0h2m2 0h1m12 0h1m15 0h1m4 0h1m5 0h1m5 0h1m12 0h1m4 0h1m4 0h1m10 0h1m3 0h1m18 0h2m3 0h4m1 0h1m2 0h1m5 0h2m2 0h1m6 0h2m2 0h2m1 0h2m9 0h1m1 0h1m5 0h1M4 178.5h1m13 0h1m6 0h1m7 0h1m17 0h1m1 0h1m31 0h1m3 0h1m4 0h1m6 0h1m12 0h2m11 0h1m4 0h1m5 0h1m1 0h1m3 0h1m3 0h1m4 0h2m2 0h1m10 0h1m8 0h1m3 0h2m3 0h2m7 0h1m2 0h1M12 179.5h1m3 0h1m19 0h1m11 0h1m19 0h1m3 0h1m2 0h1m14 0h2m1 0h2m12 0h1m1 0h1m3 0h1m4 0h2m10 0h1m8 0h1m6 0h1m12 0h1m1 0h1m9 0h1m8 0h1m6 0h3m3 0h1M5 180.5h1m9 0h1m1 0h1m5 0h1m13 0h2m6 0h1m4 0h1m5 0h1m14 0h1m2 0h1m4 0h1m22 0h2m21 0h1m4 0h1m16 0h1m1 0h1m9 0h1m20 0h1m1 0h2m5 0h1M1 181.5h1m4 0h3m14 0h1m11 0h1m12 0h1m2 0h1m7 0h2m2 0h1m1 0h1m2 0h1m1 0h1m1 0h1m20 0h1m1 0h1m9 0h1m1 0h1m4 0h1m3 0h1m15 0h1m22 0h1m13 0h1m3 0h1m1 0h1m6 0h1m3 0h1m8 0h1m3 0h1M11 182.5h1m4 0h1m3 0h1m7 0h1m2 0h1m5 0h1m31 0h1m9 0h1m3 0h2m7 0h1m10 0h1m1 0h1m2 0h2m2 0h1m8 0h1m22 0h1m3 0h1m30 0h1m3 0h1m3 0h1m7 0h1M4 183.5h1m3 0h1m10 0h1m6 0h1m7 0h1m8 0h1m2 0h1m3 0h1m32 0h1m3 0h3m23 0h1m5 0h1m9 0h1m1 0h1m3 0h1m25 0h1m4 0h1m5 0h1m4 0h1m5 0h1m1 0h2M1 184.5h1m6 0h1m3 0h1m7 0h1m4 0h1m5 0h1m3 0h1m2 0h2m5 0h1m1 0h1m1 0h1m8 0h1m14 0h5m8 0h1m2 0h1m4 0h1m2 0h1m8 0h2m14 0h1m3 0h1m5 0h1m4 0h1m2 0h1m3 0h1m22 0h1m2 0h1m7 0h2m16 0h1M9 185.5h1m2 0h1m2 0h1m19 0h1m7 0h2m3 0h2m6 0h1m5 0h1m1 0h1m2 0h2m1 0h2m1 0h1m6 0h1m8 0h1m4 0h1m15 0h1m2 0h1m19 0h1m3 0h2m8 0h2m4 0h2m7 0h1m1 0h1m10 0h1m3 0h1m9 0h1m4 0h1M3 186.5h2m10 0h1m1 0h1m11 0h1m24 0h1m8 0h2m6 0h1m1 0h1m9 0h1m4 0h1m1 0h1m1 0h1m6 0h1m2 0h1m5 0h1m1 0h1m4 0h1m20 0h1m5 0h1m5 0h4m1 0h1m3 0h1m4 0h1m2 0h1m15 0h1m9 0h2m4 0h1M2 187.5h1m17 0h1m16 0h1m12 0h2m1 0h1m3 0h1m7 0h2m13 0h1m21 0h2m7 0h1m3 0h2m1 0h1m4 0h1m6 0h1m9 0h1m7 0h1m2 0h1m1 0h1m4 0h1m7 0h1m21 0h1m1 0h1m4 0h2m1 0h1M13 188.5h1m19 0h1m19 0h2m2 0h1m1 0h1m8 0h1m2 0h1m1 0h2m4 0h1m2 0h1m11 0h1m7 0h1m1 0h1m9 0h1m8 0h1m1 0h2m9 0h1m1 0h1m15 0h1m3 0h1m5 0h1m6 0h1m2 0h1m4 0h1m5 0h1m7 0h1m3 0h1M2 189.5h1m2 0h2m14 0h1m2 0h1m3 0h1m7 0h2m5 0h1m1 0h1m1 0h2m11 0h1m5 0h1m1 0h2m17 0h1m6 0h1m3 0h1m1 0h1m4 0h1m2 0h1m19 0h1m3 0h1m1 0h1m3 0h1m11 0h1m4 0h1m11 0h1m1 0h1m7 0h2m6 0h1m7 0h1M4 190.5h1m3 0h1m8 0h1m3 0h1m13 0h1m5 0h1m6 0h1m1 0h1m5 0h1m4 0h1m8 0h2m4 0h1m1 0h1m23 0h2m8 0h1m3 0h1m3 0h1m5 0h1m3 0h1m7 0h1m4 0h1m11 0h2m23 0h1m8 0h1m1 0h1M1 191.5h2m1 0h1m11 0h1m12 0h1m17 0h2m10 0h1m5 0h1m2 0h1m9 0h1m1 0h1m8 0h1m10 0h1m10 0h1m3 0h1m6 0h1m5 0h1m3 0h1m1 0h1m4 0h1m6 0h1m3 0h1m7 0h1m1 0h1m33 0h1m3 0h1M7 192.5h1m15 0h1m20 0h1m4 0h1m1 0h1m3 0h1m3 0h1m10 0h1m14 0h1m9 0h1m6 0h1m4 0h1m8 0h1m5 0h1m2 0h1m3 0h1m9 0h1m8 0h1m4 0h1m6 0h1m4 0h1m2 0h1m5 0h1m12 0h1m4 0h1m1 0h1M36 193.5h1m3 0h1m4 0h1m2 0h2m4 0h1m1 0h1m8 0h1m2 0h1m19 0h1m2 0h1m11 0h1m5 0h1m5 0h1m8 0h1m18 0h1m5 0h1m13 0h1m3 0h1m10 0h1m13 0h2m5 0h1M4 194.5h1m1 0h1m6 0h1m2 0h3m9 0h2m2 0h1m6 0h1m3 0h1m18 0h1m7 0h1m4 0h1m10 0h1m27 0h1m11 0h1m6 0h1m3 0h1m2 0h1m3 0h1m9 0h1m1 0h2m2 0h1M9 195.5h1m11 0h2m9 0h1m7 0h1m3 0h1m4 0h3m8 0h1m2 0h3m4 0h1m1 0h1m3 0h1m12 0h1m1 0h1m10 0h1m1 0h1m2 0h1m9 0h1m8 0h1m2 0h1m9 0h1m1 0h1m9 0h1m1 0h1m12 0h1m4 0h1m8 0h1m14 0h1m2 0h1M15 196.5h1m11 0h3m1 0h1m1 0h1m3 0h1m9 0h1m1 0h1m5 0h1m1 0h1m4 0h1m7 0h3m1 0h2m6 0h2m18 0h1m6 0h1m4 0h1m16 0h1m2 0h1m19 0h1m5 0h1m14 0h1m7 0h1m6 0h2m1 0h1M4 197.5h1m4 0h1m2 0h3m16 0h1m6 0h1m26 0h1m3 0h1m1 0h1m12 0h1m4 0h2m8 0h1m5 0h1m2 0h1m6 0h1m3 0h1m3 0h1m7 0h4m4 0h1m5 0h3m8 0h1m16 0h1m6 0h1m5 0h1m9 0h1M23 198.5h1m3 0h1m1 0h1m9 0h2m1 0h2m5 0h1m14 0h2m11 0h2m3 0h2m3 0h1m3 0h1m5 0h2m1 0h1m13 0h1m3 0h1m3 0h1m12 0h1m1 0h1m2 0h1m1 0h2m8 0h3m10 0h1m4 0h1m2 0h1m4 0h1m20 0h1M7 199.5h1m8 0h1m2 0h1m2 0h1m16 0h1m24 0h2m1 0h1m14 0h1m16 0h2m2 0h1m28 0h1m4 0h2m22 0h1m1 0h2m10 0h1m11 0h1m7 0h1m1 0h1"/></g></pattern></defs><rect x="1" y="1" width="1243" height="28.7" fill="#ebebeb"/><rect x="1" y="849" width="1243" height="19.6" fill="#ebebeb"/><text x="6.7" y="23.1" font-size="16.5" textLength="199.6" lengthAdjust="spacingAndGlyphs">2025-12-11: XSHOOTER</text><text x="336.3" y="22.7" font-size="12.5" textLength="54.4" lengthAdjust="spacingAndGlyphs">type info</text><text x="629.6" y="22.7" font-size="12.5" textLength="65.6" lengthAdjust="spacingAndGlyphs">set-up info</text><text x="7.5" y="45.0" font-size="12.5" textLength="59.3" lengthAdjust="spacingAndGlyphs">ORIGFILE:</text><text x="75.6" y="45.0" font-size="12.5" textLength="236.7" lengthAdjust="spacingAndGlyphs">XSHOOTER_GEN_BIAS_UVB_346_0011</text><text x="6.2" y="61.7" font-size="12.5" textLength="53.6" lengthAdjust="spacingAndGlyphs">ARCFILE:</text><text x="75.6" y="61.7" font-size="12.5" textLength="234.6" lengthAdjust="spacingAndGlyphs">XSHOO.2025-12-12T08:21:29.781.fits</text><text x="6.4" y="80.0" font-size="12.5" textLength="59.2" lengthAdjust="spacingAndGlyphs">raw_type:</text><text x="75.6" y="80.0" font-size="12.5" textLength="59.1" lengthAdjust="spacingAndGlyphs">BIAS_UVB</text><text x="7.7" y="97.4" font-size="12.5" textLength="54.6" lengthAdjust="spacingAndGlyphs">do_class:</text><text x="75.6" y="97.4" font-size="12.5" textLength="60.0" lengthAdjust="spacingAndGlyphs">BIAS_UVB</text><text x="7.7" y="113.5" font-size="12.5" textLength="62.7" lengthAdjust="spacingAndGlyphs">extension:</text><text x="76.5" y="113.5" font-size="12.5" textLength="6.8" lengthAdjust="spacingAndGlyphs">0</text><text x="336.5" y="44.9" font-size="12.5" textLength="66.2" lengthAdjust="spacingAndGlyphs">DPR.CATG:</text><text x="405.5" y="44.9" font-size="12.5" textLength="34.0" lengthAdjust="spacingAndGlyphs">CALIB</text><text x="336.5" y="62.0" font-size="12.5" textLength="62.5" lengthAdjust="spacingAndGlyphs">DPR.TYPE:</text><text x="405.5" y="62.0" font-size="12.5" textLength="27.5" lengthAdjust="spacingAndGlyphs">BIAS</text><text x="336.5" y="79.6" font-size="12.5" textLength="66.0" lengthAdjust="spacingAndGlyphs">DPR.TECH:</text><text x="405.5" y="79.6" font-size="12.5" textLength="39.5" lengthAdjust="spacingAndGlyphs">IMAGE</text><text x="336.5" y="97.0" font-size="12.5" textLength="42.3" lengthAdjust="spacingAndGlyphs">TPL.ID:</text><text x="405.5" y="97.0" font-size="12.5" textLength="185.8" lengthAdjust="spacingAndGlyphs">XSHOOTER_gen_cal_BiasDark</text><text x="629.4" y="43.0" font-size="10.5" textLength="94.3" lengthAdjust="spacingAndGlyphs">DET.READ.CLOCK:</text><text x="760.7" y="43.0" font-size="10.5" textLength="83.5" lengthAdjust="spacingAndGlyphs">100k/1pt/hg/2x2</text><text x="629.4" y="55.5" font-size="10.5" textLength="48.8" lengthAdjust="spacingAndGlyphs">SEQ.ARM:</text><text x="760.7" y="55.5" font-size="10.5" textLength="19.3" lengthAdjust="spacingAndGlyphs">UVB</text><text x="6.5" y="863.7" font-size="10.8" textLength="172.5" lengthAdjust="spacingAndGlyphs">powered by QC: www.eso.org/HC</text><text x="936.0" y="863.7" font-size="10.8" textLength="302.5" lengthAdjust="spacingAndGlyphs">created by qc_rawdisp.py v1.2.3 on 2025-12-12T09:32:21</text><rect x="179.0" y="112.5" width="497.8" height="696.5" fill="url(#nz)"/><rect x="671" y="112.5" width="1" height="696.5" fill="#0b0000"/><rect x="672" y="112.5" width="3" height="696.5" fill="#0b0000" opacity="0.72"/><rect x="675" y="112.5" width="1.8" height="696.5" fill="#0b0000"/><rect x="179.0" y="112.5" width="497.8" height="696.5" fill="none" stroke="#000" stroke-width="1.75"/><line x1="427.5" y1="106" x2="427.5" y2="817" stroke="#0000ff" stroke-width="1.15"/><line x1="174" y1="462.4" x2="682" y2="462.4" stroke="#0000ff" stroke-width="1.15"/><line x1="179.20" y1="809.00" x2="179.20" y2="816.00" stroke="#000" stroke-width="1.50"/><text x="179.2" y="831.8" font-size="10.5" text-anchor="middle" textLength="6.1" lengthAdjust="spacingAndGlyphs">0</text><line x1="271.85" y1="809.00" x2="271.85" y2="816.00" stroke="#000" stroke-width="1.50"/><text x="271.9" y="831.8" font-size="10.5" text-anchor="middle" textLength="18.3" lengthAdjust="spacingAndGlyphs">200</text><line x1="364.50" y1="809.00" x2="364.50" y2="816.00" stroke="#000" stroke-width="1.50"/><text x="364.5" y="831.8" font-size="10.5" text-anchor="middle" textLength="18.3" lengthAdjust="spacingAndGlyphs">400</text><line x1="457.15" y1="809.00" x2="457.15" y2="816.00" stroke="#000" stroke-width="1.50"/><text x="457.2" y="831.8" font-size="10.5" text-anchor="middle" textLength="18.3" lengthAdjust="spacingAndGlyphs">600</text><line x1="549.80" y1="809.00" x2="549.80" y2="816.00" stroke="#000" stroke-width="1.50"/><text x="549.8" y="831.8" font-size="10.5" text-anchor="middle" textLength="18.3" lengthAdjust="spacingAndGlyphs">800</text><line x1="642.45" y1="809.00" x2="642.45" y2="816.00" stroke="#000" stroke-width="1.50"/><text x="642.5" y="831.8" font-size="10.5" text-anchor="middle" textLength="24.4" lengthAdjust="spacingAndGlyphs">1000</text><line x1="172.00" y1="809.00" x2="179.00" y2="809.00" stroke="#000" stroke-width="1.50"/><text x="163.0" y="812.7" font-size="10.5" text-anchor="end" textLength="6.1" lengthAdjust="spacingAndGlyphs">0</text><line x1="172.00" y1="716.11" x2="179.00" y2="716.11" stroke="#000" stroke-width="1.50"/><text x="163.0" y="719.8" font-size="10.5" text-anchor="end" textLength="18.3" lengthAdjust="spacingAndGlyphs">200</text><line x1="172.00" y1="623.23" x2="179.00" y2="623.23" stroke="#000" stroke-width="1.50"/><text x="163.0" y="626.9" font-size="10.5" text-anchor="end" textLength="18.3" lengthAdjust="spacingAndGlyphs">400</text><line x1="172.00" y1="530.34" x2="179.00" y2="530.34" stroke="#000" stroke-width="1.50"/><text x="163.0" y="534.0" font-size="10.5" text-anchor="end" textLength="18.3" lengthAdjust="spacingAndGlyphs">600</text><line x1="172.00" y1="437.46" x2="179.00" y2="437.46" stroke="#000" stroke-width="1.50"/><text x="163.0" y="441.2" font-size="10.5" text-anchor="end" textLength="18.3" lengthAdjust="spacingAndGlyphs">800</text><line x1="172.00" y1="344.57" x2="179.00" y2="344.57" stroke="#000" stroke-width="1.50"/><text x="163.0" y="348.3" font-size="10.5" text-anchor="end" textLength="24.4" lengthAdjust="spacingAndGlyphs">1000</text><line x1="172.00" y1="251.69" x2="179.00" y2="251.69" stroke="#000" stroke-width="1.50"/><text x="163.0" y="255.4" font-size="10.5" text-anchor="end" textLength="24.4" lengthAdjust="spacingAndGlyphs">1200</text><line x1="172.00" y1="158.80" x2="179.00" y2="158.80" stroke="#000" stroke-width="1.50"/><text x="163.0" y="162.5" font-size="10.5" text-anchor="end" textLength="24.4" lengthAdjust="spacingAndGlyphs">1400</text><text x="427.5" y="849.8" font-size="10.5" text-anchor="middle">X</text><text transform="translate(122.9 460.9) rotate(-90)" x="0" y="0" font-size="11.0" text-anchor="middle" dominant-baseline="central">Y</text><linearGradient id="hot" x1="0" y1="1" x2="0" y2="0"><stop offset="0" stop-color="#0b0000"/><stop offset="0.365" stop-color="#ff0000"/><stop offset="0.746" stop-color="#ffff00"/><stop offset="1" stop-color="#ffffff"/></linearGradient><rect x="712.0" y="112.8" width="35.0" height="696.2" fill="url(#hot)" stroke="#000" stroke-width="1.75"/><line x1="747.00" y1="724.80" x2="754.00" y2="724.80" stroke="#000" stroke-width="1.50"/><text x="762.8" y="728.5" font-size="10.5" textLength="18.3" lengthAdjust="spacingAndGlyphs">999</text><line x1="747.00" y1="636.80" x2="754.00" y2="636.80" stroke="#000" stroke-width="1.50"/><text x="762.8" y="640.5" font-size="10.5" textLength="24.4" lengthAdjust="spacingAndGlyphs">1000</text><line x1="747.00" y1="548.80" x2="754.00" y2="548.80" stroke="#000" stroke-width="1.50"/><text x="762.8" y="552.5" font-size="10.5" textLength="24.4" lengthAdjust="spacingAndGlyphs">1001</text><line x1="747.00" y1="460.80" x2="754.00" y2="460.80" stroke="#000" stroke-width="1.50"/><text x="762.8" y="464.5" font-size="10.5" textLength="24.4" lengthAdjust="spacingAndGlyphs">1002</text><line x1="747.00" y1="372.80" x2="754.00" y2="372.80" stroke="#000" stroke-width="1.50"/><text x="762.8" y="376.5" font-size="10.5" textLength="24.4" lengthAdjust="spacingAndGlyphs">1003</text><line x1="747.00" y1="284.80" x2="754.00" y2="284.80" stroke="#000" stroke-width="1.50"/><text x="762.8" y="288.5" font-size="10.5" textLength="24.4" lengthAdjust="spacingAndGlyphs">1004</text><line x1="747.00" y1="196.80" x2="754.00" y2="196.80" stroke="#000" stroke-width="1.50"/><text x="762.8" y="200.5" font-size="10.5" textLength="24.4" lengthAdjust="spacingAndGlyphs">1005</text><clipPath id="chd"><rect x="911.0" y="113.0" width="274.0" height="119.7"/></clipPath><path d="M911.0 232.7L924.7 232.7L924.7 223.0 L930.5 223.0L930.5 214.9 L936.4 214.9L936.4 209.6 L942.2 209.6L942.2 195.7 L948.1 195.7L948.1 187.9 L953.9 187.9L953.9 182.0 L959.8 182.0L959.8 174.0 L965.6 174.0L965.6 166.8 L971.4 166.8L971.4 158.8 L977.3 158.8L977.3 153.1 L983.1 153.1L983.1 147.9 L989.0 147.9L989.0 141.7 L994.8 141.7L994.8 136.8 L1000.7 136.8L1000.7 132.7 L1006.5 132.7L1006.5 127.1 L1012.3 127.1L1012.3 125.9 L1018.2 125.9L1018.2 123.6 L1024.0 123.6L1024.0 119.7 L1029.9 119.7L1029.9 120.9 L1035.7 120.9L1035.7 118.9 L1041.6 118.9L1041.6 118.9 L1047.4 118.9L1047.4 119.8 L1053.2 119.8L1053.2 119.8 L1059.1 119.8L1059.1 122.7 L1064.9 122.7L1064.9 125.9 L1070.8 125.9L1070.8 127.1 L1076.6 127.1L1076.6 131.8 L1082.5 131.8L1082.5 135.8 L1088.3 135.8L1088.3 141.7 L1094.1 141.7L1094.1 144.9 L1100.0 144.9L1100.0 150.9 L1105.8 150.9L1105.8 159.3 L1111.7 159.3L1111.7 164.9 L1117.5 164.9L1117.5 172.0 L1123.4 172.0L1123.4 178.8 L1129.2 178.8L1129.2 187.6 L1135.0 187.6L1135.0 194.9 L1140.9 194.9L1140.9 205.8 L1146.7 205.8L1146.7 206.9 L1152.6 206.9L1152.6 217.5 L1158.4 217.5L1158.4 219.9 L1164.3 219.9L1164.3 232.7 L1170.1 232.7L1170.1 232.7 L1175.9 232.7L1175.9 217.2 L1181.8 217.2L1181.8 193.7 L1185.0 193.7" fill="none" stroke="#0000ff" stroke-width="1.5" clip-path="url(#chd)"/><rect x="911.0" y="113.0" width="274.0" height="119.7" fill="none" stroke="#000" stroke-width="1.75"/><line x1="904.00" y1="232.70" x2="911.00" y2="232.70" stroke="#000" stroke-width="1.50"/><text x="896.5" y="236.4" font-size="10.5" text-anchor="end" textLength="6.1" lengthAdjust="spacingAndGlyphs">0</text><line x1="904.00" y1="189.40" x2="911.00" y2="189.40" stroke="#000" stroke-width="1.50"/><text x="896.5" y="193.1" font-size="10.5" text-anchor="end" textLength="6.1" lengthAdjust="spacingAndGlyphs">2</text><line x1="904.00" y1="146.10" x2="911.00" y2="146.10" stroke="#000" stroke-width="1.50"/><text x="896.5" y="149.8" font-size="10.5" text-anchor="end" textLength="6.1" lengthAdjust="spacingAndGlyphs">4</text><line x1="920.60" y1="232.70" x2="920.60" y2="239.70" stroke="#000" stroke-width="1.50"/><text x="920.6" y="256.0" font-size="10.5" text-anchor="middle" textLength="18.3" lengthAdjust="spacingAndGlyphs">980</text><line x1="978.80" y1="232.70" x2="978.80" y2="239.70" stroke="#000" stroke-width="1.50"/><line x1="1037.00" y1="232.70" x2="1037.00" y2="239.70" stroke="#000" stroke-width="1.50"/><text x="1037.0" y="256.0" font-size="10.5" text-anchor="middle" textLength="24.4" lengthAdjust="spacingAndGlyphs">1000</text><line x1="1095.20" y1="232.70" x2="1095.20" y2="239.70" stroke="#000" stroke-width="1.50"/><line x1="1153.40" y1="232.70" x2="1153.40" y2="239.70" stroke="#000" stroke-width="1.50"/><text x="1153.4" y="256.0" font-size="10.5" text-anchor="middle" textLength="24.4" lengthAdjust="spacingAndGlyphs">1020</text><text x="1048.0" y="273.5" font-size="10.5" text-anchor="middle" textLength="33.1" lengthAdjust="spacingAndGlyphs">counts</text><text transform="translate(874.2 173.5) rotate(-90)" x="0" y="0" font-size="10.5" text-anchor="middle" dominant-baseline="central" textLength="71.3" lengthAdjust="spacingAndGlyphs">log frequency</text><text transform="translate(1197.6 174.8) rotate(90)" x="0" y="0" font-size="10.5" text-anchor="middle" dominant-baseline="central" textLength="92.4" lengthAdjust="spacingAndGlyphs">histogram (detail)</text><path d="M911.0 404.5 L924.8 404.5 L924.8 298.0 L930.4 298.0 L930.4 290.9 L936.0 290.9 L936.0 395.7 L941.2 395.7 L941.2 404.5 L1185.0 404.5" fill="none" stroke="#0000ff" stroke-width="1.5"/><rect x="911.0" y="285.0" width="274.0" height="119.5" fill="none" stroke="#000" stroke-width="1.75"/><line x1="904.00" y1="404.50" x2="911.00" y2="404.50" stroke="#000" stroke-width="1.50"/><text x="896.5" y="408.2" font-size="10.5" text-anchor="end" textLength="6.1" lengthAdjust="spacingAndGlyphs">0</text><line x1="904.00" y1="366.86" x2="911.00" y2="366.86" stroke="#000" stroke-width="1.50"/><text x="896.5" y="370.6" font-size="10.5" text-anchor="end" textLength="6.1" lengthAdjust="spacingAndGlyphs">2</text><line x1="904.00" y1="329.22" x2="911.00" y2="329.22" stroke="#000" stroke-width="1.50"/><text x="896.5" y="332.9" font-size="10.5" text-anchor="end" textLength="6.1" lengthAdjust="spacingAndGlyphs">4</text><line x1="904.00" y1="291.58" x2="911.00" y2="291.58" stroke="#000" stroke-width="1.50"/><text x="896.5" y="295.3" font-size="10.5" text-anchor="end" textLength="6.1" lengthAdjust="spacingAndGlyphs">6</text><line x1="929.30" y1="404.50" x2="929.30" y2="411.50" stroke="#000" stroke-width="1.50"/><text x="929.3" y="427.8" font-size="10.5" text-anchor="middle" textLength="6.1" lengthAdjust="spacingAndGlyphs">0</text><line x1="966.58" y1="404.50" x2="966.58" y2="411.50" stroke="#000" stroke-width="1.50"/><line x1="1003.86" y1="404.50" x2="1003.86" y2="411.50" stroke="#000" stroke-width="1.50"/><text x="1003.9" y="427.8" font-size="10.5" text-anchor="middle" textLength="30.5" lengthAdjust="spacingAndGlyphs">20000</text><line x1="1041.14" y1="404.50" x2="1041.14" y2="411.50" stroke="#000" stroke-width="1.50"/><line x1="1078.42" y1="404.50" x2="1078.42" y2="411.50" stroke="#000" stroke-width="1.50"/><text x="1078.4" y="427.8" font-size="10.5" text-anchor="middle" textLength="30.5" lengthAdjust="spacingAndGlyphs">40000</text><line x1="1115.70" y1="404.50" x2="1115.70" y2="411.50" stroke="#000" stroke-width="1.50"/><line x1="1152.98" y1="404.50" x2="1152.98" y2="411.50" stroke="#000" stroke-width="1.50"/><text x="1153.0" y="427.8" font-size="10.5" text-anchor="middle" textLength="30.5" lengthAdjust="spacingAndGlyphs">60000</text><text x="1048.0" y="445.5" font-size="10.5" text-anchor="middle" textLength="33.1" lengthAdjust="spacingAndGlyphs">counts</text><text transform="translate(874.2 345.8) rotate(-90)" x="0" y="0" font-size="10.5" text-anchor="middle" dominant-baseline="central" textLength="71.3" lengthAdjust="spacingAndGlyphs">log frequency</text><text transform="translate(1197.7 349.5) rotate(90)" x="0" y="0" font-size="10.5" text-anchor="middle" dominant-baseline="central" textLength="79.8" lengthAdjust="spacingAndGlyphs">histogram (full)</text><clipPath id="c11"><rect x="911" y="517.0" width="274" height="119.7"/></clipPath><polyline points="913.2,575.8 913.5,562.9 913.7,565.5 914.0,583.5 914.2,581.0 914.5,583.5 914.7,570.6 915.0,578.4 915.2,570.6 915.5,596.4 915.7,560.3 916.0,578.4 916.2,570.6 916.5,578.4 916.7,581.0 917.0,573.2 917.2,568.1 917.5,578.4 917.7,578.4 918.0,570.6 918.2,586.1 918.5,593.8 918.7,573.2 919.0,583.5 919.2,596.4 919.5,586.1 919.7,581.0 920.0,588.7 920.2,591.3 920.5,575.8 920.7,568.1 921.0,578.4 921.2,583.5 921.5,573.2 921.7,570.6 922.0,581.0 922.2,570.6 922.5,565.5 922.7,578.4 923.0,586.1 923.2,573.2 923.5,575.8 923.7,565.5 924.0,591.3 924.2,583.5 924.5,586.1 924.7,593.8 925.0,575.8 925.2,570.6 925.5,583.5 925.7,562.9 926.0,568.1 926.2,570.6 926.5,573.2 926.7,568.1 927.0,591.3 927.2,570.6 927.5,570.6 927.7,596.4 928.0,573.2 928.2,581.0 928.5,568.1 928.7,581.0 929.0,578.4 929.2,573.2 929.5,586.1 929.7,570.6 930.0,578.4 930.2,573.2 930.5,583.5 930.7,565.5 931.0,570.6 931.2,578.4 931.5,570.6 931.7,562.9 932.0,557.8 932.2,593.8 932.5,568.1 932.7,573.2 933.0,578.4 933.2,588.7 933.5,562.9 933.7,591.3 934.0,570.6 934.2,562.9 934.5,593.8 934.7,581.0 935.0,591.3 935.2,575.8 935.5,560.3 935.7,555.2 936.0,596.4 936.2,583.5 936.5,570.6 936.7,560.3 937.0,573.2 937.2,583.5 937.5,573.2 937.7,578.4 938.0,578.4 938.2,583.5 938.5,573.2 938.8,573.2 939.0,578.4 939.3,578.4 939.5,591.3 939.8,581.0 940.0,565.5 940.3,578.4 940.5,591.3 940.8,562.9 941.0,570.6 941.3,555.2 941.5,575.8 941.8,581.0 942.0,591.3 942.3,562.9 942.5,550.0 942.8,586.1 943.0,583.5 943.3,570.6 943.5,586.1 943.8,581.0 944.0,581.0 944.3,575.8 944.5,565.5 944.8,575.8 945.0,568.1 945.3,581.0 945.5,573.2 945.8,599.0 946.0,591.3 946.3,568.1 946.5,583.5 946.8,570.6 947.0,570.6 947.3,562.9 947.5,568.1 947.8,565.5 948.0,578.4 948.3,583.5 948.5,583.5 948.8,581.0 949.0,588.7 949.3,583.5 949.5,578.4 949.8,573.2 950.0,581.0 950.3,596.4 950.5,578.4 950.8,575.8 951.0,565.5 951.3,570.6 951.5,583.5 951.8,583.5 952.0,555.2 952.3,568.1 952.5,557.8 952.8,555.2 953.0,586.1 953.3,573.2 953.5,573.2 953.8,570.6 954.0,570.6 954.3,575.8 954.5,575.8 954.8,593.8 955.0,578.4 955.3,583.5 955.5,575.8 955.8,581.0 956.0,570.6 956.3,568.1 956.5,573.2 956.8,573.2 957.0,575.8 957.3,581.0 957.5,578.4 957.8,581.0 958.0,573.2 958.3,575.8 958.5,570.6 958.8,591.3 959.0,568.1 959.3,586.1 959.5,583.5 959.8,578.4 960.0,583.5 960.3,573.2 960.5,583.5 960.8,588.7 961.0,586.1 961.3,562.9 961.5,575.8 961.8,588.7 962.0,575.8 962.3,593.8 962.5,557.8 962.8,593.8 963.0,573.2 963.3,570.6 963.6,591.3 963.8,573.2 964.1,568.1 964.3,573.2 964.6,573.2 964.8,568.1 965.1,575.8 965.3,573.2 965.6,578.4 965.8,570.6 966.1,586.1 966.3,568.1 966.6,583.5 966.8,588.7 967.1,573.2 967.3,560.3 967.6,568.1 967.8,583.5 968.1,570.6 968.3,581.0 968.6,578.4 968.8,575.8 969.1,601.6 969.3,575.8 969.6,588.7 969.8,583.5 970.1,591.3 970.3,593.8 970.6,586.1 970.8,568.1 971.1,560.3 971.3,578.4 971.6,565.5 971.8,581.0 972.1,596.4 972.3,575.8 972.6,573.2 972.8,581.0 973.1,573.2 973.3,570.6 973.6,586.1 973.8,591.3 974.1,578.4 974.3,578.4 974.6,581.0 974.8,568.1 975.1,560.3 975.3,581.0 975.6,570.6 975.8,568.1 976.1,570.6 976.3,565.5 976.6,581.0 976.8,570.6 977.1,555.2 977.3,568.1 977.6,583.5 977.8,570.6 978.1,562.9 978.3,573.2 978.6,583.5 978.8,560.3 979.1,588.7 979.3,570.6 979.6,578.4 979.8,588.7 980.1,565.5 980.3,573.2 980.6,588.7 980.8,570.6 981.1,581.0 981.3,596.4 981.6,583.5 981.8,573.2 982.1,570.6 982.3,575.8 982.6,575.8 982.8,573.2 983.1,578.4 983.3,565.5 983.6,575.8 983.8,573.2 984.1,570.6 984.3,588.7 984.6,583.5 984.8,560.3 985.1,573.2 985.3,581.0 985.6,573.2 985.8,581.0 986.1,573.2 986.3,583.5 986.6,573.2 986.8,593.8 987.1,562.9 987.3,583.5 987.6,593.8 987.8,578.4 988.1,581.0 988.4,575.8 988.6,588.7 988.9,573.2 989.1,539.7 989.4,591.3 989.6,573.2 989.9,581.0 990.1,575.8 990.4,596.4 990.6,588.7 990.9,573.2 991.1,578.4 991.4,560.3 991.6,583.5 991.9,575.8 992.1,547.4 992.4,586.1 992.6,586.1 992.9,578.4 993.1,578.4 993.4,568.1 993.6,575.8 993.9,586.1 994.1,575.8 994.4,550.0 994.6,562.9 994.9,606.7 995.1,578.4 995.4,586.1 995.6,570.6 995.9,578.4 996.1,557.8 996.4,568.1 996.6,568.1 996.9,575.8 997.1,578.4 997.4,573.2 997.6,562.9 997.9,570.6 998.1,581.0 998.4,562.9 998.6,575.8 998.9,578.4 999.1,586.1 999.4,583.5 999.6,583.5 999.9,606.7 1000.1,565.5 1000.4,570.6 1000.6,578.4 1000.9,565.5 1001.1,573.2 1001.4,573.2 1001.6,601.6 1001.9,578.4 1002.1,570.6 1002.4,560.3 1002.6,557.8 1002.9,562.9 1003.1,588.7 1003.4,599.0 1003.6,570.6 1003.9,575.8 1004.1,568.1 1004.4,578.4 1004.6,575.8 1004.9,591.3 1005.1,573.2 1005.4,581.0 1005.6,573.2 1005.9,573.2 1006.1,578.4 1006.4,573.2 1006.6,578.4 1006.9,568.1 1007.1,570.6 1007.4,583.5 1007.6,583.5 1007.9,560.3 1008.1,578.4 1008.4,568.1 1008.6,573.2 1008.9,583.5 1009.1,583.5 1009.4,575.8 1009.6,573.2 1009.9,570.6 1010.1,591.3 1010.4,583.5 1010.6,578.4 1010.9,560.3 1011.1,601.6 1011.4,573.2 1011.6,583.5 1011.9,573.2 1012.1,581.0 1012.4,573.2 1012.6,560.3 1012.9,573.2 1013.1,573.2 1013.4,573.2 1013.7,586.1 1013.9,570.6 1014.2,578.4 1014.4,586.1 1014.7,578.4 1014.9,578.4 1015.2,568.1 1015.4,578.4 1015.7,583.5 1015.9,562.9 1016.2,568.1 1016.4,562.9 1016.7,570.6 1016.9,578.4 1017.2,581.0 1017.4,581.0 1017.7,568.1 1017.9,575.8 1018.2,591.3 1018.4,578.4 1018.7,591.3 1018.9,575.8 1019.2,588.7 1019.4,591.3 1019.7,575.8 1019.9,578.4 1020.2,593.8 1020.4,570.6 1020.7,555.2 1020.9,591.3 1021.2,557.8 1021.4,583.5 1021.7,581.0 1021.9,578.4 1022.2,591.3 1022.4,562.9 1022.7,573.2 1022.9,586.1 1023.2,581.0 1023.4,593.8 1023.7,581.0 1023.9,568.1 1024.2,593.8 1024.4,581.0 1024.7,575.8 1024.9,565.5 1025.2,562.9 1025.4,581.0 1025.7,583.5 1025.9,573.2 1026.2,581.0 1026.4,581.0 1026.7,565.5 1026.9,560.3 1027.2,573.2 1027.4,578.4 1027.7,570.6 1027.9,596.4 1028.2,578.4 1028.4,588.7 1028.7,552.6 1028.9,570.6 1029.2,575.8 1029.4,578.4 1029.7,604.1 1029.9,570.6 1030.2,560.3 1030.4,583.5 1030.7,570.6 1030.9,570.6 1031.2,593.8 1031.4,568.1 1031.7,562.9 1031.9,575.8 1032.2,578.4 1032.4,568.1 1032.7,593.8 1032.9,575.8 1033.2,565.5 1033.4,588.7 1033.7,568.1 1033.9,581.0 1034.2,599.0 1034.4,578.4 1034.7,586.1 1034.9,573.2 1035.2,588.7 1035.4,565.5 1035.7,583.5 1035.9,573.2 1036.2,583.5 1036.4,581.0 1036.7,565.5 1036.9,575.8 1037.2,581.0 1037.4,591.3 1037.7,565.5 1037.9,570.6 1038.2,581.0 1038.5,575.8 1038.7,588.7 1039.0,588.7 1039.2,586.1 1039.5,573.2 1039.7,573.2 1040.0,583.5 1040.2,570.6 1040.5,568.1 1040.7,575.8 1041.0,565.5 1041.2,581.0 1041.5,578.4 1041.7,573.2 1042.0,578.4 1042.2,568.1 1042.5,591.3 1042.7,562.9 1043.0,586.1 1043.2,578.4 1043.5,591.3 1043.7,570.6 1044.0,562.9 1044.2,565.5 1044.5,568.1 1044.7,593.8 1045.0,586.1 1045.2,581.0 1045.5,586.1 1045.7,565.5 1046.0,575.8 1046.2,578.4 1046.5,573.2 1046.7,586.1 1047.0,586.1 1047.2,586.1 1047.5,573.2 1047.7,573.2 1048.0,570.6 1048.2,565.5 1048.5,591.3 1048.7,583.5 1049.0,575.8 1049.2,591.3 1049.5,583.5 1049.7,565.5 1050.0,565.5 1050.2,565.5 1050.5,575.8 1050.7,578.4 1051.0,565.5 1051.2,581.0 1051.5,573.2 1051.7,562.9 1052.0,581.0 1052.2,583.5 1052.5,578.4 1052.7,570.6 1053.0,573.2 1053.2,575.8 1053.5,570.6 1053.7,593.8 1054.0,586.1 1054.2,575.8 1054.5,586.1 1054.7,591.3 1055.0,588.7 1055.2,586.1 1055.5,578.4 1055.7,588.7 1056.0,575.8 1056.2,560.3 1056.5,578.4 1056.7,562.9 1057.0,573.2 1057.2,588.7 1057.5,581.0 1057.7,586.1 1058.0,568.1 1058.2,588.7 1058.5,562.9 1058.7,570.6 1059.0,599.0 1059.2,568.1 1059.5,560.3 1059.7,586.1 1060.0,568.1 1060.2,596.4 1060.5,573.2 1060.7,593.8 1061.0,573.2 1061.2,596.4 1061.5,604.1 1061.7,573.2 1062.0,552.6 1062.2,583.5 1062.5,568.1 1062.7,575.8 1063.0,581.0 1063.2,570.6 1063.5,560.3 1063.8,588.7 1064.0,570.6 1064.3,573.2 1064.5,591.3 1064.8,560.3 1065.0,557.8 1065.3,586.1 1065.5,560.3 1065.8,575.8 1066.0,578.4 1066.3,560.3 1066.5,575.8 1066.8,573.2 1067.0,560.3 1067.3,562.9 1067.5,568.1 1067.8,591.3 1068.0,593.8 1068.3,565.5 1068.5,586.1 1068.8,575.8 1069.0,588.7 1069.3,578.4 1069.5,591.3 1069.8,560.3 1070.0,588.7 1070.3,578.4 1070.5,578.4 1070.8,565.5 1071.0,591.3 1071.3,578.4 1071.5,578.4 1071.8,570.6 1072.0,573.2 1072.3,581.0 1072.5,575.8 1072.8,581.0 1073.0,573.2 1073.3,578.4 1073.5,583.5 1073.8,578.4 1074.0,573.2 1074.3,552.6 1074.5,581.0 1074.8,573.2 1075.0,562.9 1075.3,599.0 1075.5,593.8 1075.8,588.7 1076.0,578.4 1076.3,552.6 1076.5,573.2 1076.8,565.5 1077.0,578.4 1077.3,601.6 1077.5,601.6 1077.8,565.5 1078.0,575.8 1078.3,591.3 1078.5,565.5 1078.8,593.8 1079.0,565.5 1079.3,562.9 1079.5,586.1 1079.8,588.7 1080.0,568.1 1080.3,588.7 1080.5,568.1 1080.8,588.7 1081.0,568.1 1081.3,575.8 1081.5,581.0 1081.8,586.1 1082.0,575.8 1082.3,596.4 1082.5,581.0 1082.8,581.0 1083.0,570.6 1083.3,591.3 1083.5,560.3 1083.8,581.0 1084.0,588.7 1084.3,562.9 1084.5,560.3 1084.8,578.4 1085.0,586.1 1085.3,575.8 1085.5,583.5 1085.8,581.0 1086.0,560.3 1086.3,573.2 1086.5,575.8 1086.8,573.2 1087.0,578.4 1087.3,568.1 1087.5,568.1 1087.8,581.0 1088.0,575.8 1088.3,552.6 1088.5,573.2 1088.8,578.4 1089.1,555.2 1089.3,575.8 1089.6,588.7 1089.8,570.6 1090.1,586.1 1090.3,581.0 1090.6,573.2 1090.8,578.4 1091.1,586.1 1091.3,583.5 1091.6,583.5 1091.8,565.5 1092.1,583.5 1092.3,583.5 1092.6,555.2 1092.8,583.5 1093.1,562.9 1093.3,562.9 1093.6,578.4 1093.8,591.3 1094.1,573.2 1094.3,570.6 1094.6,568.1 1094.8,575.8 1095.1,565.5 1095.3,562.9 1095.6,588.7 1095.8,562.9 1096.1,575.8 1096.3,583.5 1096.6,581.0 1096.8,557.8 1097.1,568.1 1097.3,596.4 1097.6,575.8 1097.8,578.4 1098.1,578.4 1098.3,583.5 1098.6,591.3 1098.8,568.1 1099.1,586.1 1099.3,581.0 1099.6,583.5 1099.8,583.5 1100.1,570.6 1100.3,573.2 1100.6,583.5 1100.8,586.1 1101.1,581.0 1101.3,568.1 1101.6,575.8 1101.8,575.8 1102.1,581.0 1102.3,581.0 1102.6,575.8 1102.8,596.4 1103.1,560.3 1103.3,586.1 1103.6,583.5 1103.8,562.9 1104.1,575.8 1104.3,575.8 1104.6,583.5 1104.8,593.8 1105.1,575.8 1105.3,565.5 1105.6,586.1 1105.8,562.9 1106.1,588.7 1106.3,583.5 1106.6,570.6 1106.8,575.8 1107.1,570.6 1107.3,583.5 1107.6,588.7 1107.8,596.4 1108.1,588.7 1108.3,588.7 1108.6,591.3 1108.8,573.2 1109.1,583.5 1109.3,596.4 1109.6,552.6 1109.8,586.1 1110.1,591.3 1110.3,565.5 1110.6,565.5 1110.8,588.7 1111.1,591.3 1111.3,588.7 1111.6,565.5 1111.8,581.0 1112.1,586.1 1112.3,578.4 1112.6,565.5 1112.8,591.3 1113.1,581.0 1113.3,591.3 1113.6,555.2 1113.9,557.8 1114.1,568.1 1114.4,578.4 1114.6,570.6 1114.9,599.0 1115.1,573.2 1115.4,591.3 1115.6,591.3 1115.9,583.5 1116.1,581.0 1116.4,570.6 1116.6,570.6 1116.9,573.2 1117.1,586.1 1117.4,570.6 1117.6,578.4 1117.9,565.5 1118.1,586.1 1118.4,606.7 1118.6,581.0 1118.9,555.2 1119.1,573.2 1119.4,578.4 1119.6,568.1 1119.9,570.6 1120.1,573.2 1120.4,583.5 1120.6,575.8 1120.9,575.8 1121.1,583.5 1121.4,588.7 1121.6,575.8 1121.9,568.1 1122.1,570.6 1122.4,573.2 1122.6,570.6 1122.9,550.0 1123.1,573.2 1123.4,565.5 1123.6,557.8 1123.9,575.8 1124.1,573.2 1124.4,565.5 1124.6,560.3 1124.9,573.2 1125.1,573.2 1125.4,575.8 1125.6,588.7 1125.9,565.5 1126.1,581.0 1126.4,593.8 1126.6,578.4 1126.9,593.8 1127.1,588.7 1127.4,575.8 1127.6,586.1 1127.9,565.5 1128.1,591.3 1128.4,573.2 1128.6,570.6 1128.9,562.9 1129.1,568.1 1129.4,575.8 1129.6,575.8 1129.9,578.4 1130.1,565.5 1130.4,583.5 1130.6,570.6 1130.9,578.4 1131.1,573.2 1131.4,581.0 1131.6,555.2 1131.9,583.5 1132.1,573.2 1132.4,573.2 1132.6,570.6 1132.9,573.2 1133.1,573.2 1133.4,568.1 1133.6,591.3 1133.9,575.8 1134.1,588.7 1134.4,575.8 1134.6,588.7 1134.9,586.1 1135.1,578.4 1135.4,562.9 1135.6,570.6 1135.9,573.2 1136.1,562.9 1136.4,586.1 1136.6,599.0 1136.9,581.0 1137.1,581.0 1137.4,565.5 1137.6,555.2 1137.9,591.3 1138.1,552.6 1138.4,560.3 1138.7,568.1 1138.9,573.2 1139.2,552.6 1139.4,575.8 1139.7,581.0 1139.9,575.8 1140.2,591.3 1140.4,573.2 1140.7,578.4 1140.9,573.2 1141.2,573.2 1141.4,588.7 1141.7,562.9 1141.9,588.7 1142.2,568.1 1142.4,593.8 1142.7,573.2 1142.9,586.1 1143.2,575.8 1143.4,583.5 1143.7,599.0 1143.9,588.7 1144.2,575.8 1144.4,570.6 1144.7,591.3 1144.9,599.0 1145.2,586.1 1145.4,578.4 1145.7,583.5 1145.9,586.1 1146.2,568.1 1146.4,568.1 1146.7,568.1 1146.9,586.1 1147.2,575.8 1147.4,578.4 1147.7,591.3 1147.9,568.1 1148.2,575.8 1148.4,581.0 1148.7,562.9 1148.9,568.1 1149.2,568.1 1149.4,565.5 1149.7,570.6 1149.9,591.3 1150.2,581.0 1150.4,565.5 1150.7,586.1 1150.9,575.8 1151.2,573.2 1151.4,562.9 1151.7,562.9 1151.9,568.1 1152.2,578.4 1152.4,568.1 1152.7,570.6 1152.9,578.4 1153.2,562.9 1153.4,570.6 1153.7,583.5 1153.9,562.9 1154.2,578.4 1154.4,570.6 1154.7,593.8 1154.9,578.4 1155.2,586.1 1155.4,586.1 1155.7,596.4 1155.9,555.2 1156.2,578.4 1156.4,575.8 1156.7,565.5 1156.9,578.4 1157.2,570.6 1157.4,591.3 1157.7,575.8 1157.9,581.0 1158.2,570.6 1158.4,575.8 1158.7,591.3 1158.9,596.4 1159.2,588.7 1159.4,570.6 1159.7,573.2 1159.9,573.2 1160.2,599.0 1160.4,604.1 1160.7,583.5 1160.9,581.0 1161.2,583.5 1161.4,573.2 1161.7,578.4 1161.9,588.7 1162.2,586.1 1162.4,575.8 1162.7,575.8 1162.9,578.4 1163.2,552.6 1163.4,581.0 1163.7,575.8 1164.0,586.1 1164.2,581.0 1164.5,570.6 1164.7,570.6 1165.0,578.4 1165.2,573.2 1165.5,575.8 1165.7,596.4 1166.0,611.9 1166.2,552.6 1166.5,568.1 1166.7,578.4 1167.0,593.8 1167.2,591.3 1167.5,562.9 1167.7,606.7 1168.0,581.0 1168.2,568.1 1168.5,575.8 1168.7,568.1 1169.0,578.4 1169.2,552.6 1169.5,588.7 1169.7,591.3 1170.0,573.2 1170.2,562.9 1170.5,578.4 1170.7,565.5 1171.0,583.5 1171.2,588.7 1171.5,562.9 1171.7,560.3 1172.0,560.3 1172.2,581.0 1172.5,588.7 1172.7,588.7 1173.0,578.4 1173.2,570.6 1173.5,570.6 1173.7,591.3 1174.0,575.8 1174.2,575.8 1174.5,575.8 1174.7,578.4 1175.0,578.4 1175.2,570.6 1175.5,575.8 1175.7,575.8 1176.0,583.5 1176.2,573.2 1176.5,578.4 1176.7,599.0 1177.0,573.2 1177.2,581.0 1177.5,568.1 1177.7,578.4 1178.0,578.4 1178.2,575.8 1178.5,578.4 1178.7,581.0 1179.0,596.4 1179.2,557.8 1179.5,593.8 1179.7,581.0 1180.0,570.6 1180.2,573.2 1180.5,570.6 1180.7,568.1 1181.0,562.9 1181.2,573.2 1181.5,547.4 1181.7,588.7 1182.0,575.8 1182.2,581.0" fill="none" stroke="#0000ff" stroke-width="1.5" stroke-linejoin="miter" clip-path="url(#c11)"/><rect x="911" y="517.0" width="274" height="119.7" fill="none" stroke="#000" stroke-width="1.75"/><line x1="904.00" y1="632.50" x2="911.00" y2="632.50" stroke="#000" stroke-width="1.50"/><text x="896.5" y="636.2" font-size="10.5" text-anchor="end" textLength="18.3" lengthAdjust="spacingAndGlyphs">980</text><line x1="904.00" y1="606.73" x2="911.00" y2="606.73" stroke="#000" stroke-width="1.50"/><text x="896.5" y="610.4" font-size="10.5" text-anchor="end" textLength="18.3" lengthAdjust="spacingAndGlyphs">990</text><line x1="904.00" y1="580.95" x2="911.00" y2="580.95" stroke="#000" stroke-width="1.50"/><text x="896.5" y="584.7" font-size="10.5" text-anchor="end" textLength="24.4" lengthAdjust="spacingAndGlyphs">1000</text><line x1="904.00" y1="555.17" x2="911.00" y2="555.17" stroke="#000" stroke-width="1.50"/><text x="896.5" y="558.9" font-size="10.5" text-anchor="end" textLength="24.4" lengthAdjust="spacingAndGlyphs">1010</text><line x1="904.00" y1="529.40" x2="911.00" y2="529.40" stroke="#000" stroke-width="1.50"/><text x="896.5" y="533.1" font-size="10.5" text-anchor="end" textLength="24.4" lengthAdjust="spacingAndGlyphs">1020</text><line x1="913.20" y1="636.70" x2="913.20" y2="643.70" stroke="#000" stroke-width="1.50"/><text x="913.2" y="659.9" font-size="10.5" text-anchor="middle" textLength="6.1" lengthAdjust="spacingAndGlyphs">0</text><line x1="963.30" y1="636.70" x2="963.30" y2="643.70" stroke="#000" stroke-width="1.50"/><text x="963.3" y="659.9" font-size="10.5" text-anchor="middle" textLength="18.3" lengthAdjust="spacingAndGlyphs">200</text><line x1="1013.40" y1="636.70" x2="1013.40" y2="643.70" stroke="#000" stroke-width="1.50"/><text x="1013.4" y="659.9" font-size="10.5" text-anchor="middle" textLength="18.3" lengthAdjust="spacingAndGlyphs">400</text><line x1="1063.50" y1="636.70" x2="1063.50" y2="643.70" stroke="#000" stroke-width="1.50"/><text x="1063.5" y="659.9" font-size="10.5" text-anchor="middle" textLength="18.3" lengthAdjust="spacingAndGlyphs">600</text><line x1="1113.60" y1="636.70" x2="1113.60" y2="643.70" stroke="#000" stroke-width="1.50"/><text x="1113.6" y="659.9" font-size="10.5" text-anchor="middle" textLength="18.3" lengthAdjust="spacingAndGlyphs">800</text><line x1="1163.70" y1="636.70" x2="1163.70" y2="643.70" stroke="#000" stroke-width="1.50"/><text x="1163.7" y="659.9" font-size="10.5" text-anchor="middle" textLength="24.4" lengthAdjust="spacingAndGlyphs">1000</text><text x="1048.0" y="678.0" font-size="10.5" text-anchor="middle">X</text><text transform="translate(855.6 576.9) rotate(-90)" x="0" y="0" font-size="10.5" text-anchor="middle" dominant-baseline="central" textLength="32.5" lengthAdjust="spacingAndGlyphs">counts</text><text transform="translate(1196.5 575.2) rotate(90)" x="0" y="0" font-size="10.5" text-anchor="middle" dominant-baseline="central" textLength="38.5" lengthAdjust="spacingAndGlyphs">cut in x</text><rect x="1116" y="519.6" width="65.5" height="16.3" rx="2" fill="#fff" fill-opacity="0.8" stroke="#cccccc" stroke-width="1"/><line x1="1118.00" y1="528.40" x2="1139.30" y2="528.40" stroke="#0000ff" stroke-width="1.50"/><text x="1144.2" y="532.0" font-size="10.5" textLength="34.0" lengthAdjust="spacingAndGlyphs">y=750</text><clipPath id="c12"><rect x="911" y="688.8" width="274" height="119.7"/></clipPath><polyline points="913.2,751.2 913.4,738.4 913.6,743.5 913.7,743.5 913.9,733.3 914.1,761.3 914.3,756.2 914.5,763.9 914.6,751.2 914.8,741.0 915.0,751.2 915.2,746.1 915.4,769.0 915.5,748.6 915.7,758.8 915.9,730.8 916.1,741.0 916.2,741.0 916.4,751.2 916.6,743.5 916.8,743.5 917.0,753.7 917.1,753.7 917.3,751.2 917.5,756.2 917.7,756.2 917.9,753.7 918.0,756.2 918.2,741.0 918.4,766.4 918.6,741.0 918.8,756.2 918.9,756.2 919.1,763.9 919.3,751.2 919.5,751.2 919.7,748.6 919.8,756.2 920.0,748.6 920.2,730.8 920.4,746.1 920.6,756.2 920.7,741.0 920.9,751.2 921.1,743.5 921.3,743.5 921.5,753.7 921.6,769.0 921.8,753.7 922.0,743.5 922.2,753.7 922.3,746.1 922.5,741.0 922.7,756.2 922.9,738.4 923.1,733.3 923.2,738.4 923.4,738.4 923.6,738.4 923.8,725.7 924.0,748.6 924.1,748.6 924.3,743.5 924.5,758.8 924.7,766.4 924.9,758.8 925.0,746.1 925.2,746.1 925.4,766.4 925.6,769.0 925.8,753.7 925.9,751.2 926.1,751.2 926.3,743.5 926.5,738.4 926.7,748.6 926.8,743.5 927.0,761.3 927.2,761.3 927.4,748.6 927.6,743.5 927.7,743.5 927.9,743.5 928.1,741.0 928.3,741.0 928.4,769.0 928.6,756.2 928.8,746.1 929.0,743.5 929.2,766.4 929.3,738.4 929.5,753.7 929.7,751.2 929.9,746.1 930.1,743.5 930.2,763.9 930.4,741.0 930.6,748.6 930.8,758.8 931.0,753.7 931.1,771.5 931.3,756.2 931.5,748.6 931.7,756.2 931.9,753.7 932.0,751.2 932.2,748.6 932.4,738.4 932.6,751.2 932.8,753.7 932.9,743.5 933.1,728.2 933.3,753.7 933.5,743.5 933.7,766.4 933.8,735.9 934.0,743.5 934.2,735.9 934.4,751.2 934.5,761.3 934.7,741.0 934.9,741.0 935.1,758.8 935.3,763.9 935.4,746.1 935.6,751.2 935.8,723.2 936.0,756.2 936.2,756.2 936.3,751.2 936.5,766.4 936.7,758.8 936.9,733.3 937.1,751.2 937.2,756.2 937.4,763.9 937.6,743.5 937.8,743.5 938.0,746.1 938.1,753.7 938.3,746.1 938.5,746.1 938.7,756.2 938.9,743.5 939.0,771.5 939.2,763.9 939.4,753.7 939.6,751.2 939.8,761.3 939.9,746.1 940.1,738.4 940.3,746.1 940.5,748.6 940.6,741.0 940.8,746.1 941.0,761.3 941.2,751.2 941.4,735.9 941.5,761.3 941.7,748.6 941.9,753.7 942.1,758.8 942.3,761.3 942.4,748.6 942.6,746.1 942.8,746.1 943.0,763.9 943.2,753.7 943.3,746.1 943.5,741.0 943.7,743.5 943.9,741.0 944.1,738.4 944.2,741.0 944.4,758.8 944.6,748.6 944.8,756.2 945.0,774.1 945.1,766.4 945.3,728.2 945.5,761.3 945.7,771.5 945.9,756.2 946.0,733.3 946.2,751.2 946.4,746.1 946.6,753.7 946.7,751.2 946.9,735.9 947.1,741.0 947.3,751.2 947.5,741.0 947.6,738.4 947.8,751.2 948.0,746.1 948.2,746.1 948.4,756.2 948.5,738.4 948.7,751.2 948.9,756.2 949.1,766.4 949.3,763.9 949.4,733.3 949.6,761.3 949.8,746.1 950.0,753.7 950.2,743.5 950.3,743.5 950.5,758.8 950.7,753.7 950.9,748.6 951.1,748.6 951.2,751.2 951.4,753.7 951.6,743.5 951.8,735.9 952.0,743.5 952.1,756.2 952.3,746.1 952.5,748.6 952.7,746.1 952.8,730.8 953.0,751.2 953.2,751.2 953.4,758.8 953.6,753.7 953.7,756.2 953.9,733.3 954.1,746.1 954.3,756.2 954.5,730.8 954.6,763.9 954.8,741.0 955.0,738.4 955.2,743.5 955.4,753.7 955.5,751.2 955.7,753.7 955.9,741.0 956.1,774.1 956.3,756.2 956.4,748.6 956.6,756.2 956.8,769.0 957.0,751.2 957.2,758.8 957.3,741.0 957.5,735.9 957.7,748.6 957.9,769.0 958.1,751.2 958.2,758.8 958.4,743.5 958.6,733.3 958.8,746.1 958.9,728.2 959.1,733.3 959.3,743.5 959.5,758.8 959.7,748.6 959.8,763.9 960.0,738.4 960.2,748.6 960.4,735.9 960.6,746.1 960.7,769.0 960.9,741.0 961.1,738.4 961.3,730.8 961.5,758.8 961.6,758.8 961.8,748.6 962.0,758.8 962.2,761.3 962.4,758.8 962.5,723.2 962.7,753.7 962.9,758.8 963.1,753.7 963.3,748.6 963.4,735.9 963.6,738.4 963.8,741.0 964.0,748.6 964.1,746.1 964.3,756.2 964.5,763.9 964.7,728.2 964.9,753.7 965.0,738.4 965.2,751.2 965.4,748.6 965.6,751.2 965.8,763.9 965.9,748.6 966.1,746.1 966.3,741.0 966.5,743.5 966.7,738.4 966.8,746.1 967.0,748.6 967.2,769.0 967.4,753.7 967.6,733.3 967.7,748.6 967.9,741.0 968.1,751.2 968.3,756.2 968.5,728.2 968.6,746.1 968.8,733.3 969.0,743.5 969.2,751.2 969.4,771.5 969.5,748.6 969.7,763.9 969.9,771.5 970.1,735.9 970.2,741.0 970.4,743.5 970.6,748.6 970.8,748.6 971.0,743.5 971.1,748.6 971.3,748.6 971.5,741.0 971.7,774.1 971.9,741.0 972.0,756.2 972.2,741.0 972.4,738.4 972.6,758.8 972.8,741.0 972.9,741.0 973.1,756.2 973.3,753.7 973.5,748.6 973.7,771.5 973.8,753.7 974.0,748.6 974.2,753.7 974.4,766.4 974.6,753.7 974.7,733.3 974.9,735.9 975.1,751.2 975.3,758.8 975.5,751.2 975.6,748.6 975.8,756.2 976.0,753.7 976.2,743.5 976.3,741.0 976.5,774.1 976.7,741.0 976.9,748.6 977.1,738.4 977.2,751.2 977.4,746.1 977.6,733.3 977.8,779.1 978.0,733.3 978.1,748.6 978.3,769.0 978.5,776.6 978.7,746.1 978.9,761.3 979.0,738.4 979.2,748.6 979.4,751.2 979.6,741.0 979.8,748.6 979.9,743.5 980.1,741.0 980.3,746.1 980.5,741.0 980.7,741.0 980.8,763.9 981.0,753.7 981.2,751.2 981.4,753.7 981.6,766.4 981.7,756.2 981.9,746.1 982.1,748.6 982.3,733.3 982.4,756.2 982.6,753.7 982.8,756.2 983.0,753.7 983.2,756.2 983.3,769.0 983.5,746.1 983.7,741.0 983.9,738.4 984.1,761.3 984.2,751.2 984.4,730.8 984.6,751.2 984.8,746.1 985.0,751.2 985.1,738.4 985.3,741.0 985.5,725.7 985.7,743.5 985.9,746.1 986.0,761.3 986.2,753.7 986.4,756.2 986.6,753.7 986.8,763.9 986.9,738.4 987.1,761.3 987.3,746.1 987.5,763.9 987.7,746.1 987.8,733.3 988.0,758.8 988.2,746.1 988.4,751.2 988.5,746.1 988.7,746.1 988.9,756.2 989.1,751.2 989.3,756.2 989.4,758.8 989.6,761.3 989.8,741.0 990.0,756.2 990.2,743.5 990.3,743.5 990.5,758.8 990.7,738.4 990.9,758.8 991.1,743.5 991.2,735.9 991.4,756.2 991.6,758.8 991.8,758.8 992.0,725.7 992.1,753.7 992.3,763.9 992.5,741.0 992.7,751.2 992.9,751.2 993.0,761.3 993.2,771.5 993.4,756.2 993.6,761.3 993.8,766.4 993.9,761.3 994.1,758.8 994.3,741.0 994.5,743.5 994.6,743.5 994.8,756.2 995.0,763.9 995.2,746.1 995.4,746.1 995.5,741.0 995.7,751.2 995.9,751.2 996.1,746.1 996.3,758.8 996.4,758.8 996.6,743.5 996.8,763.9 997.0,751.2 997.2,741.0 997.3,748.6 997.5,746.1 997.7,761.3 997.9,751.2 998.1,753.7 998.2,743.5 998.4,746.1 998.6,748.6 998.8,730.8 999.0,743.5 999.1,753.7 999.3,756.2 999.5,751.2 999.7,756.2 999.9,733.3 1000.0,743.5 1000.2,753.7 1000.4,756.2 1000.6,761.3 1000.7,753.7 1000.9,735.9 1001.1,741.0 1001.3,751.2 1001.5,748.6 1001.6,769.0 1001.8,741.0 1002.0,751.2 1002.2,735.9 1002.4,751.2 1002.5,753.7 1002.7,748.6 1002.9,756.2 1003.1,735.9 1003.3,746.1 1003.4,746.1 1003.6,746.1 1003.8,753.7 1004.0,743.5 1004.2,748.6 1004.3,730.8 1004.5,748.6 1004.7,746.1 1004.9,753.7 1005.1,753.7 1005.2,751.2 1005.4,735.9 1005.6,748.6 1005.8,738.4 1005.9,751.2 1006.1,753.7 1006.3,769.0 1006.5,741.0 1006.7,728.2 1006.8,751.2 1007.0,733.3 1007.2,741.0 1007.4,756.2 1007.6,741.0 1007.7,758.8 1007.9,751.2 1008.1,735.9 1008.3,746.1 1008.5,761.3 1008.6,733.3 1008.8,758.8 1009.0,751.2 1009.2,751.2 1009.4,751.2 1009.5,758.8 1009.7,766.4 1009.9,730.8 1010.1,758.8 1010.3,758.8 1010.4,774.1 1010.6,748.6 1010.8,735.9 1011.0,735.9 1011.2,720.6 1011.3,733.3 1011.5,743.5 1011.7,748.6 1011.9,733.3 1012.0,748.6 1012.2,746.1 1012.4,758.8 1012.6,748.6 1012.8,728.2 1012.9,748.6 1013.1,743.5 1013.3,774.1 1013.5,735.9 1013.7,746.1 1013.8,733.3 1014.0,746.1 1014.2,758.8 1014.4,763.9 1014.6,743.5 1014.7,748.6 1014.9,758.8 1015.1,748.6 1015.3,756.2 1015.5,741.0 1015.6,753.7 1015.8,761.3 1016.0,751.2 1016.2,756.2 1016.4,735.9 1016.5,753.7 1016.7,763.9 1016.9,751.2 1017.1,753.7 1017.3,746.1 1017.4,748.6 1017.6,761.3 1017.8,751.2 1018.0,751.2 1018.1,761.3 1018.3,756.2 1018.5,748.6 1018.7,766.4 1018.9,761.3 1019.0,756.2 1019.2,751.2 1019.4,746.1 1019.6,763.9 1019.8,748.6 1019.9,743.5 1020.1,735.9 1020.3,756.2 1020.5,758.8 1020.7,766.4 1020.8,746.1 1021.0,738.4 1021.2,758.8 1021.4,746.1 1021.6,741.0 1021.7,741.0 1021.9,753.7 1022.1,743.5 1022.3,751.2 1022.5,758.8 1022.6,748.6 1022.8,746.1 1023.0,758.8 1023.2,746.1 1023.4,728.2 1023.5,763.9 1023.7,743.5 1023.9,741.0 1024.1,748.6 1024.2,746.1 1024.4,751.2 1024.6,735.9 1024.8,758.8 1025.0,751.2 1025.1,769.0 1025.3,746.1 1025.5,746.1 1025.7,766.4 1025.9,758.8 1026.0,746.1 1026.2,756.2 1026.4,761.3 1026.6,776.6 1026.8,746.1 1026.9,730.8 1027.1,756.2 1027.3,746.1 1027.5,746.1 1027.7,751.2 1027.8,748.6 1028.0,748.6 1028.2,758.8 1028.4,725.7 1028.6,723.2 1028.7,746.1 1028.9,733.3 1029.1,758.8 1029.3,753.7 1029.5,738.4 1029.6,761.3 1029.8,763.9 1030.0,746.1 1030.2,771.5 1030.3,733.3 1030.5,743.5 1030.7,748.6 1030.9,743.5 1031.1,758.8 1031.2,758.8 1031.4,741.0 1031.6,741.0 1031.8,748.6 1032.0,751.2 1032.1,756.2 1032.3,735.9 1032.5,763.9 1032.7,758.8 1032.9,756.2 1033.0,766.4 1033.2,763.9 1033.4,761.3 1033.6,738.4 1033.8,730.8 1033.9,746.1 1034.1,766.4 1034.3,756.2 1034.5,751.2 1034.7,753.7 1034.8,753.7 1035.0,743.5 1035.2,769.0 1035.4,756.2 1035.6,748.6 1035.7,743.5 1035.9,746.1 1036.1,748.6 1036.3,751.2 1036.4,756.2 1036.6,748.6 1036.8,751.2 1037.0,756.2 1037.2,738.4 1037.3,738.4 1037.5,753.7 1037.7,743.5 1037.9,738.4 1038.1,746.1 1038.2,748.6 1038.4,743.5 1038.6,766.4 1038.8,763.9 1039.0,743.5 1039.1,746.1 1039.3,735.9 1039.5,753.7 1039.7,738.4 1039.9,738.4 1040.0,728.2 1040.2,758.8 1040.4,753.7 1040.6,746.1 1040.8,746.1 1040.9,758.8 1041.1,756.2 1041.3,763.9 1041.5,725.7 1041.7,751.2 1041.8,748.6 1042.0,756.2 1042.2,748.6 1042.4,741.0 1042.5,753.7 1042.7,748.6 1042.9,728.2 1043.1,741.0 1043.3,746.1 1043.4,753.7 1043.6,748.6 1043.8,756.2 1044.0,746.1 1044.2,756.2 1044.3,756.2 1044.5,753.7 1044.7,761.3 1044.9,748.6 1045.1,723.2 1045.2,756.2 1045.4,766.4 1045.6,741.0 1045.8,751.2 1046.0,730.8 1046.1,746.1 1046.3,741.0 1046.5,758.8 1046.7,766.4 1046.9,751.2 1047.0,743.5 1047.2,758.8 1047.4,766.4 1047.6,756.2 1047.8,753.7 1047.9,753.7 1048.1,751.2 1048.3,725.7 1048.5,751.2 1048.6,756.2 1048.8,761.3 1049.0,743.5 1049.2,766.4 1049.4,735.9 1049.5,751.2 1049.7,766.4 1049.9,748.6 1050.1,751.2 1050.3,738.4 1050.4,766.4 1050.6,748.6 1050.8,751.2 1051.0,741.0 1051.2,761.3 1051.3,758.8 1051.5,730.8 1051.7,746.1 1051.9,766.4 1052.1,748.6 1052.2,758.8 1052.4,758.8 1052.6,763.9 1052.8,741.0 1053.0,756.2 1053.1,748.6 1053.3,751.2 1053.5,766.4 1053.7,758.8 1053.8,743.5 1054.0,766.4 1054.2,748.6 1054.4,751.2 1054.6,743.5 1054.7,743.5 1054.9,743.5 1055.1,751.2 1055.3,748.6 1055.5,758.8 1055.6,756.2 1055.8,741.0 1056.0,756.2 1056.2,741.0 1056.4,741.0 1056.5,758.8 1056.7,746.1 1056.9,758.8 1057.1,746.1 1057.3,758.8 1057.4,746.1 1057.6,748.6 1057.8,761.3 1058.0,730.8 1058.2,741.0 1058.3,766.4 1058.5,746.1 1058.7,753.7 1058.9,730.8 1059.1,751.2 1059.2,746.1 1059.4,751.2 1059.6,743.5 1059.8,756.2 1059.9,758.8 1060.1,756.2 1060.3,753.7 1060.5,743.5 1060.7,748.6 1060.8,753.7 1061.0,753.7 1061.2,758.8 1061.4,748.6 1061.6,771.5 1061.7,753.7 1061.9,738.4 1062.1,753.7 1062.3,756.2 1062.5,748.6 1062.6,758.8 1062.8,758.8 1063.0,743.5 1063.2,756.2 1063.4,730.8 1063.5,743.5 1063.7,751.2 1063.9,756.2 1064.1,753.7 1064.3,774.1 1064.4,748.6 1064.6,741.0 1064.8,743.5 1065.0,753.7 1065.2,743.5 1065.3,743.5 1065.5,751.2 1065.7,746.1 1065.9,738.4 1066.0,746.1 1066.2,753.7 1066.4,751.2 1066.6,748.6 1066.8,766.4 1066.9,748.6 1067.1,751.2 1067.3,771.5 1067.5,766.4 1067.7,730.8 1067.8,748.6 1068.0,735.9 1068.2,753.7 1068.4,733.3 1068.6,743.5 1068.7,756.2 1068.9,746.1 1069.1,733.3 1069.3,725.7 1069.5,746.1 1069.6,753.7 1069.8,758.8 1070.0,743.5 1070.2,738.4 1070.4,748.6 1070.5,751.2 1070.7,741.0 1070.9,746.1 1071.1,746.1 1071.3,766.4 1071.4,753.7 1071.6,730.8 1071.8,751.2 1072.0,725.7 1072.1,746.1 1072.3,753.7 1072.5,746.1 1072.7,743.5 1072.9,756.2 1073.0,748.6 1073.2,753.7 1073.4,735.9 1073.6,753.7 1073.8,748.6 1073.9,763.9 1074.1,763.9 1074.3,751.2 1074.5,758.8 1074.7,753.7 1074.8,748.6 1075.0,743.5 1075.2,763.9 1075.4,751.2 1075.6,743.5 1075.7,756.2 1075.9,763.9 1076.1,756.2 1076.3,733.3 1076.5,748.6 1076.6,733.3 1076.8,753.7 1077.0,738.4 1077.2,763.9 1077.4,753.7 1077.5,748.6 1077.7,730.8 1077.9,746.1 1078.1,738.4 1078.2,753.7 1078.4,753.7 1078.6,735.9 1078.8,735.9 1079.0,738.4 1079.1,738.4 1079.3,756.2 1079.5,728.2 1079.7,748.6 1079.9,735.9 1080.0,741.0 1080.2,766.4 1080.4,769.0 1080.6,766.4 1080.8,751.2 1080.9,738.4 1081.1,751.2 1081.3,741.0 1081.5,761.3 1081.7,756.2 1081.8,758.8 1082.0,748.6 1082.2,761.3 1082.4,751.2 1082.6,743.5 1082.7,753.7 1082.9,758.8 1083.1,753.7 1083.3,761.3 1083.5,761.3 1083.6,741.0 1083.8,746.1 1084.0,763.9 1084.2,753.7 1084.3,746.1 1084.5,741.0 1084.7,743.5 1084.9,741.0 1085.1,751.2 1085.2,751.2 1085.4,751.2 1085.6,738.4 1085.8,741.0 1086.0,730.8 1086.1,738.4 1086.3,758.8 1086.5,763.9 1086.7,763.9 1086.9,758.8 1087.0,743.5 1087.2,763.9 1087.4,771.5 1087.6,751.2 1087.8,741.0 1087.9,741.0 1088.1,733.3 1088.3,751.2 1088.5,756.2 1088.7,753.7 1088.8,763.9 1089.0,756.2 1089.2,735.9 1089.4,728.2 1089.6,735.9 1089.7,746.1 1089.9,753.7 1090.1,748.6 1090.3,769.0 1090.4,743.5 1090.6,741.0 1090.8,751.2 1091.0,751.2 1091.2,766.4 1091.3,741.0 1091.5,741.0 1091.7,779.1 1091.9,756.2 1092.1,746.1 1092.2,733.3 1092.4,758.8 1092.6,751.2 1092.8,735.9 1093.0,746.1 1093.1,751.2 1093.3,753.7 1093.5,748.6 1093.7,758.8 1093.9,741.0 1094.0,758.8 1094.2,743.5 1094.4,741.0 1094.6,738.4 1094.8,748.6 1094.9,748.6 1095.1,746.1 1095.3,748.6 1095.5,738.4 1095.6,751.2 1095.8,728.2 1096.0,720.6 1096.2,756.2 1096.4,746.1 1096.5,761.3 1096.7,741.0 1096.9,746.1 1097.1,751.2 1097.3,758.8 1097.4,748.6 1097.6,728.2 1097.8,733.3 1098.0,746.1 1098.2,756.2 1098.3,748.6 1098.5,756.2 1098.7,763.9 1098.9,758.8 1099.1,743.5 1099.2,746.1 1099.4,748.6 1099.6,761.3 1099.8,763.9 1100.0,738.4 1100.1,753.7 1100.3,738.4 1100.5,756.2 1100.7,738.4 1100.9,746.1 1101.0,753.7 1101.2,753.7 1101.4,730.8 1101.6,741.0 1101.7,751.2 1101.9,748.6 1102.1,766.4 1102.3,730.8 1102.5,735.9 1102.6,753.7 1102.8,746.1 1103.0,776.6 1103.2,738.4 1103.4,743.5 1103.5,746.1 1103.7,741.0 1103.9,746.1 1104.1,758.8 1104.3,756.2 1104.4,751.2 1104.6,741.0 1104.8,748.6 1105.0,756.2 1105.2,746.1 1105.3,761.3 1105.5,728.2 1105.7,746.1 1105.9,758.8 1106.1,748.6 1106.2,738.4 1106.4,743.5 1106.6,728.2 1106.8,763.9 1107.0,733.3 1107.1,751.2 1107.3,741.0 1107.5,733.3 1107.7,761.3 1107.8,763.9 1108.0,753.7 1108.2,766.4 1108.4,771.5 1108.6,748.6 1108.7,738.4 1108.9,753.7 1109.1,743.5 1109.3,713.0 1109.5,746.1 1109.6,753.7 1109.8,751.2 1110.0,601.0 1110.2,753.7 1110.4,743.5 1110.5,748.6 1110.7,741.0 1110.9,748.6 1111.1,751.2 1111.3,758.8 1111.4,763.9 1111.6,753.7 1111.8,753.7 1112.0,746.1 1112.2,751.2 1112.3,753.7 1112.5,725.7 1112.7,746.1 1112.9,738.4 1113.1,761.3 1113.2,738.4 1113.4,738.4 1113.6,746.1 1113.8,758.8 1113.9,735.9 1114.1,756.2 1114.3,766.4 1114.5,766.4 1114.7,748.6 1114.8,753.7 1115.0,741.0 1115.2,743.5 1115.4,735.9 1115.6,746.1 1115.7,748.6 1115.9,748.6 1116.1,758.8 1116.3,758.8 1116.5,756.2 1116.6,748.6 1116.8,758.8 1117.0,751.2 1117.2,738.4 1117.4,774.1 1117.5,758.8 1117.7,761.3 1117.9,751.2 1118.1,766.4 1118.3,756.2 1118.4,725.7 1118.6,763.9 1118.8,751.2 1119.0,748.6 1119.2,753.7 1119.3,761.3 1119.5,741.0 1119.7,769.0 1119.9,761.3 1120.0,753.7 1120.2,756.2 1120.4,738.4 1120.6,753.7 1120.8,730.8 1120.9,751.2 1121.1,735.9 1121.3,746.1 1121.5,753.7 1121.7,753.7 1121.8,741.0 1122.0,756.2 1122.2,751.2 1122.4,758.8 1122.6,771.5 1122.7,746.1 1122.9,743.5 1123.1,763.9 1123.3,746.1 1123.5,753.7 1123.6,771.5 1123.8,761.3 1124.0,743.5 1124.2,741.0 1124.4,746.1 1124.5,723.2 1124.7,746.1 1124.9,758.8 1125.1,766.4 1125.3,735.9 1125.4,756.2 1125.6,753.7 1125.8,758.8 1126.0,758.8 1126.1,753.7 1126.3,746.1 1126.5,746.1 1126.7,746.1 1126.9,741.0 1127.0,756.2 1127.2,761.3 1127.4,751.2 1127.6,771.5 1127.8,741.0 1127.9,746.1 1128.1,743.5 1128.3,761.3 1128.5,756.2 1128.7,748.6 1128.8,761.3 1129.0,761.3 1129.2,751.2 1129.4,748.6 1129.6,756.2 1129.7,738.4 1129.9,728.2 1130.1,743.5 1130.3,751.2 1130.5,753.7 1130.6,733.3 1130.8,746.1 1131.0,743.5 1131.2,748.6 1131.4,756.2 1131.5,733.3 1131.7,753.7 1131.9,748.6 1132.1,771.5 1132.2,728.2 1132.4,743.5 1132.6,751.2 1132.8,758.8 1133.0,756.2 1133.1,766.4 1133.3,746.1 1133.5,758.8 1133.7,746.1 1133.9,746.1 1134.0,730.8 1134.2,748.6 1134.4,746.1 1134.6,746.1 1134.8,756.2 1134.9,751.2 1135.1,746.1 1135.3,738.4 1135.5,741.0 1135.7,753.7 1135.8,738.4 1136.0,753.7 1136.2,766.4 1136.4,733.3 1136.6,748.6 1136.7,753.7 1136.9,761.3 1137.1,753.7 1137.3,733.3 1137.5,751.2 1137.6,725.7 1137.8,748.6 1138.0,738.4 1138.2,748.6 1138.3,753.7 1138.5,753.7 1138.7,751.2 1138.9,761.3 1139.1,761.3 1139.2,746.1 1139.4,735.9 1139.6,748.6 1139.8,748.6 1140.0,758.8 1140.1,738.4 1140.3,738.4 1140.5,761.3 1140.7,748.6 1140.9,751.2 1141.0,763.9 1141.2,733.3 1141.4,735.9 1141.6,746.1 1141.8,733.3 1141.9,753.7 1142.1,746.1 1142.3,735.9 1142.5,751.2 1142.7,746.1 1142.8,758.8 1143.0,743.5 1143.2,735.9 1143.4,758.8 1143.5,756.2 1143.7,748.6 1143.9,735.9 1144.1,753.7 1144.3,758.8 1144.4,751.2 1144.6,738.4 1144.8,763.9 1145.0,751.2 1145.2,735.9 1145.3,748.6 1145.5,751.2 1145.7,741.0 1145.9,761.3 1146.1,728.2 1146.2,743.5 1146.4,753.7 1146.6,748.6 1146.8,751.2 1147.0,753.7 1147.1,761.3 1147.3,751.2 1147.5,766.4 1147.7,735.9 1147.9,761.3 1148.0,756.2 1148.2,758.8 1148.4,743.5 1148.6,751.2 1148.8,735.9 1148.9,753.7 1149.1,748.6 1149.3,751.2 1149.5,753.7 1149.6,738.4 1149.8,738.4 1150.0,735.9 1150.2,763.9 1150.4,746.1 1150.5,761.3 1150.7,761.3 1150.9,769.0 1151.1,758.8 1151.3,743.5 1151.4,735.9 1151.6,733.3 1151.8,758.8 1152.0,756.2 1152.2,748.6 1152.3,748.6 1152.5,748.6 1152.7,769.0 1152.9,751.2 1153.1,743.5 1153.2,746.1 1153.4,751.2 1153.6,756.2 1153.8,751.2 1154.0,733.3 1154.1,743.5 1154.3,738.4 1154.5,733.3 1154.7,761.3 1154.9,743.5 1155.0,746.1 1155.2,735.9 1155.4,753.7 1155.6,751.2 1155.7,756.2 1155.9,748.6 1156.1,753.7 1156.3,751.2 1156.5,746.1 1156.6,753.7 1156.8,758.8 1157.0,753.7 1157.2,756.2 1157.4,746.1 1157.5,738.4 1157.7,753.7 1157.9,774.1 1158.1,743.5 1158.3,751.2 1158.4,758.8 1158.6,753.7 1158.8,730.8 1159.0,766.4 1159.2,761.3 1159.3,751.2 1159.5,781.7 1159.7,756.2 1159.9,741.0 1160.1,743.5 1160.2,746.1 1160.4,753.7 1160.6,751.2 1160.8,723.2 1161.0,748.6 1161.1,735.9 1161.3,763.9 1161.5,748.6 1161.7,746.1 1161.8,748.6 1162.0,771.5 1162.2,753.7 1162.4,735.9 1162.6,743.5 1162.7,758.8 1162.9,741.0 1163.1,769.0 1163.3,743.5 1163.5,746.1 1163.6,756.2 1163.8,761.3 1164.0,766.4 1164.2,753.7 1164.4,733.3 1164.5,741.0 1164.7,746.1 1164.9,741.0 1165.1,756.2 1165.3,746.1 1165.4,779.1 1165.6,756.2 1165.8,756.2 1166.0,751.2 1166.2,751.2 1166.3,743.5 1166.5,756.2 1166.7,741.0 1166.9,753.7 1167.1,741.0 1167.2,748.6 1167.4,741.0 1167.6,746.1 1167.8,756.2 1167.9,748.6 1168.1,763.9 1168.3,751.2 1168.5,746.1 1168.7,753.7 1168.8,751.2 1169.0,741.0 1169.2,738.4 1169.4,735.9 1169.6,756.2 1169.7,753.7 1169.9,743.5 1170.1,741.0 1170.3,769.0 1170.5,730.8 1170.6,738.4 1170.8,763.9 1171.0,738.4 1171.2,753.7 1171.4,751.2 1171.5,761.3 1171.7,758.8 1171.9,753.7 1172.1,748.6 1172.3,761.3 1172.4,751.2 1172.6,758.8 1172.8,756.2 1173.0,758.8 1173.2,756.2 1173.3,733.3 1173.5,766.4 1173.7,763.9 1173.9,751.2 1174.0,756.2 1174.2,761.3 1174.4,746.1 1174.6,761.3 1174.8,751.2 1174.9,741.0 1175.1,743.5 1175.3,753.7 1175.5,751.2 1175.7,748.6 1175.8,743.5 1176.0,761.3 1176.2,738.4 1176.4,743.5 1176.6,730.8 1176.7,741.0 1176.9,741.0 1177.1,781.7 1177.3,753.7 1177.5,730.8 1177.6,746.1 1177.8,756.2 1178.0,743.5 1178.2,748.6 1178.4,746.1 1178.5,758.8 1178.7,746.1 1178.9,735.9 1179.1,748.6 1179.3,746.1 1179.4,758.8 1179.6,746.1 1179.8,753.7 1180.0,763.9 1180.1,753.7 1180.3,753.7 1180.5,743.5 1180.7,741.0 1180.9,753.7 1181.0,753.7 1181.2,743.5 1181.4,758.8 1181.6,753.7 1181.8,753.7 1181.9,751.2 1182.1,756.2" fill="none" stroke="#0000ff" stroke-width="1.5" stroke-linejoin="miter" clip-path="url(#c12)"/><rect x="911" y="688.8" width="274" height="119.7" fill="none" stroke="#000" stroke-width="1.75"/><line x1="904.00" y1="804.60" x2="911.00" y2="804.60" stroke="#000" stroke-width="1.50"/><text x="896.5" y="808.3" font-size="10.5" text-anchor="end" textLength="18.3" lengthAdjust="spacingAndGlyphs">980</text><line x1="904.00" y1="779.15" x2="911.00" y2="779.15" stroke="#000" stroke-width="1.50"/><text x="896.5" y="782.9" font-size="10.5" text-anchor="end" textLength="18.3" lengthAdjust="spacingAndGlyphs">990</text><line x1="904.00" y1="753.70" x2="911.00" y2="753.70" stroke="#000" stroke-width="1.50"/><text x="896.5" y="757.4" font-size="10.5" text-anchor="end" textLength="24.4" lengthAdjust="spacingAndGlyphs">1000</text><line x1="904.00" y1="728.25" x2="911.00" y2="728.25" stroke="#000" stroke-width="1.50"/><text x="896.5" y="732.0" font-size="10.5" text-anchor="end" textLength="24.4" lengthAdjust="spacingAndGlyphs">1010</text><line x1="904.00" y1="702.80" x2="911.00" y2="702.80" stroke="#000" stroke-width="1.50"/><text x="896.5" y="706.5" font-size="10.5" text-anchor="end" textLength="24.4" lengthAdjust="spacingAndGlyphs">1020</text><line x1="913.20" y1="808.50" x2="913.20" y2="815.50" stroke="#000" stroke-width="1.50"/><text x="913.2" y="831.7" font-size="10.5" text-anchor="middle" textLength="6.1" lengthAdjust="spacingAndGlyphs">0</text><line x1="949.08" y1="808.50" x2="949.08" y2="815.50" stroke="#000" stroke-width="1.50"/><text x="949.1" y="831.7" font-size="10.5" text-anchor="middle" textLength="18.3" lengthAdjust="spacingAndGlyphs">200</text><line x1="984.96" y1="808.50" x2="984.96" y2="815.50" stroke="#000" stroke-width="1.50"/><text x="985.0" y="831.7" font-size="10.5" text-anchor="middle" textLength="18.3" lengthAdjust="spacingAndGlyphs">400</text><line x1="1020.84" y1="808.50" x2="1020.84" y2="815.50" stroke="#000" stroke-width="1.50"/><text x="1020.8" y="831.7" font-size="10.5" text-anchor="middle" textLength="18.3" lengthAdjust="spacingAndGlyphs">600</text><line x1="1056.72" y1="808.50" x2="1056.72" y2="815.50" stroke="#000" stroke-width="1.50"/><text x="1056.7" y="831.7" font-size="10.5" text-anchor="middle" textLength="18.3" lengthAdjust="spacingAndGlyphs">800</text><line x1="1092.60" y1="808.50" x2="1092.60" y2="815.50" stroke="#000" stroke-width="1.50"/><text x="1092.6" y="831.7" font-size="10.5" text-anchor="middle" textLength="24.4" lengthAdjust="spacingAndGlyphs">1000</text><line x1="1128.48" y1="808.50" x2="1128.48" y2="815.50" stroke="#000" stroke-width="1.50"/><text x="1128.5" y="831.7" font-size="10.5" text-anchor="middle" textLength="24.4" lengthAdjust="spacingAndGlyphs">1200</text><line x1="1164.36" y1="808.50" x2="1164.36" y2="815.50" stroke="#000" stroke-width="1.50"/><text x="1164.4" y="831.7" font-size="10.5" text-anchor="middle" textLength="24.4" lengthAdjust="spacingAndGlyphs">1400</text><text x="1048.0" y="849.8" font-size="10.5" text-anchor="middle">Y</text><text transform="translate(855.6 748.6) rotate(-90)" x="0" y="0" font-size="10.5" text-anchor="middle" dominant-baseline="central" textLength="32.5" lengthAdjust="spacingAndGlyphs">counts</text><text transform="translate(1196.5 749.4) rotate(90)" x="0" y="0" font-size="10.5" text-anchor="middle" dominant-baseline="central" textLength="38.5" lengthAdjust="spacingAndGlyphs">cut in y</text><rect x="1116" y="691.4" width="65.5" height="16.3" rx="2" fill="#fff" fill-opacity="0.8" stroke="#cccccc" stroke-width="1"/><line x1="1118.00" y1="700.20" x2="1139.30" y2="700.20" stroke="#0000ff" stroke-width="1.50"/><text x="1144.2" y="703.8" font-size="10.5" textLength="34.0" lengthAdjust="spacingAndGlyphs">x=536</text></svg></body></html>
